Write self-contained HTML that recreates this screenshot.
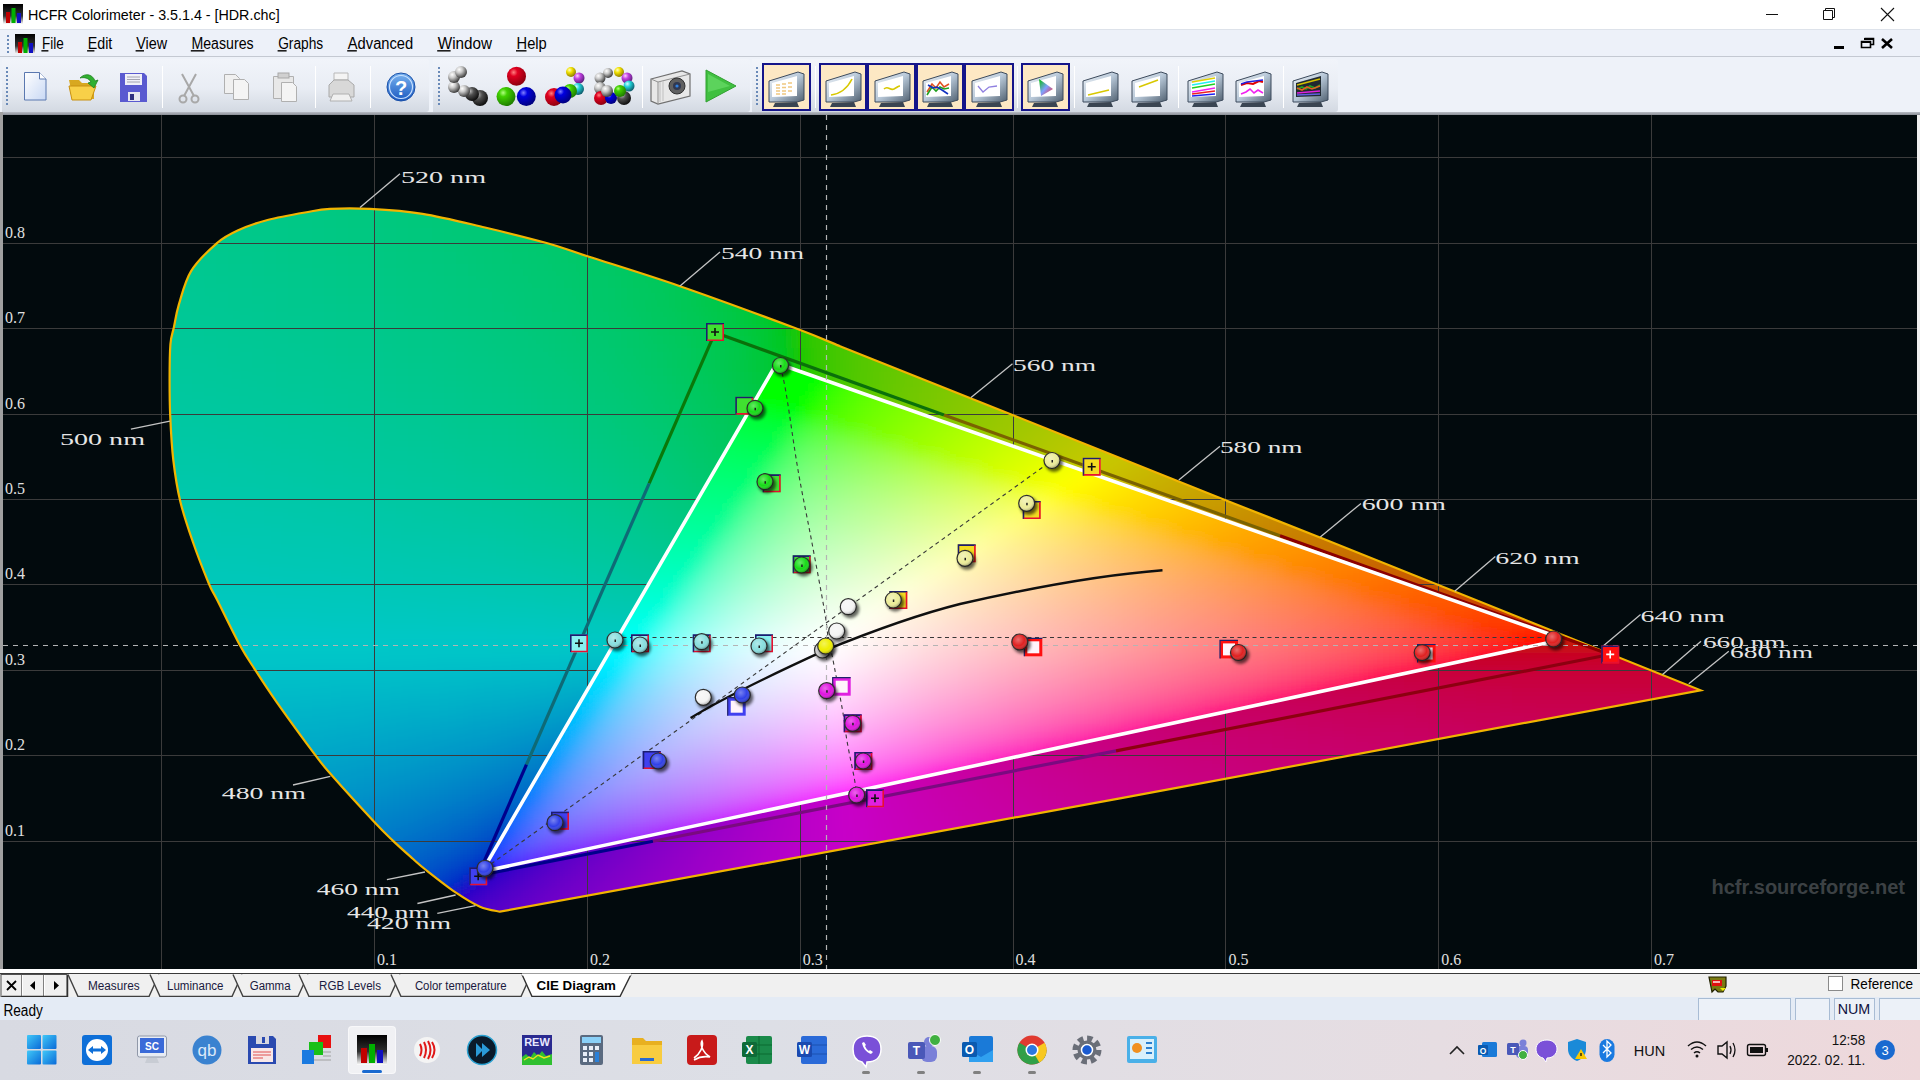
<!DOCTYPE html><html><head><meta charset="utf-8"><style>
*{box-sizing:border-box}
body{margin:0;width:1920px;height:1080px;overflow:hidden;position:relative;background:#f0f0f0;font-family:"Liberation Sans",sans-serif}
.abs{position:absolute}
</style></head><body><div class="abs" style="left:0;top:0;width:1920px;height:29px;background:#fff"></div><svg class="abs" style="left:3px;top:4px" width="20" height="20" viewBox="0 0 20 20"><defs><linearGradient id="hi3" x1="0" y1="0" x2="0" y2="1"><stop offset="0" stop-color="#000"/><stop offset="0.6" stop-color="#333"/><stop offset="1" stop-color="#fff"/></linearGradient></defs><rect width="20" height="20" fill="url(#hi3)"/><rect x="3" y="8" width="4" height="11" fill="#c00000"/><rect x="8.5" y="4" width="4" height="15" fill="#00b000"/><rect x="14" y="9" width="4" height="10" fill="#1010c0"/></svg><svg class="abs" style="left:0;top:0" width="400" height="28"><text x="28" y="19.7" font-family="Liberation Sans" font-size="15.5" fill="#000" textLength="251.6" lengthAdjust="spacingAndGlyphs">HCFR Colorimeter - 3.5.1.4 - [HDR.chc]</text></svg><svg class="abs" style="left:1750px;top:0" width="170" height="29"><path d="M16 14.5H28" stroke="#111" stroke-width="1"/><path d="M73.5 10.5h9v9h-9z M75.5 10.5V8.5h9v9h-2" stroke="#111" stroke-width="1" fill="none"/><path d="M131 8L144 21M144 8L131 21" stroke="#111" stroke-width="1.1"/></svg><div class="abs" style="left:0;top:29px;width:1920px;height:28px;background:#edf1f9;border-top:1px solid #dde2ea;border-bottom:1px solid #c4c9d2"></div><div class="abs" style="left:7px;top:35px;width:2px;height:2px;background:#6a8ab8"></div><div class="abs" style="left:7px;top:39px;width:2px;height:2px;background:#6a8ab8"></div><div class="abs" style="left:7px;top:43px;width:2px;height:2px;background:#6a8ab8"></div><div class="abs" style="left:7px;top:47px;width:2px;height:2px;background:#6a8ab8"></div><div class="abs" style="left:7px;top:51px;width:2px;height:2px;background:#6a8ab8"></div><svg class="abs" style="left:15px;top:34px" width="20" height="20" viewBox="0 0 20 20"><defs><linearGradient id="hi15" x1="0" y1="0" x2="0" y2="1"><stop offset="0" stop-color="#000"/><stop offset="0.6" stop-color="#333"/><stop offset="1" stop-color="#fff"/></linearGradient></defs><rect width="20" height="20" fill="url(#hi15)"/><rect x="3" y="8" width="4" height="11" fill="#c00000"/><rect x="8.5" y="4" width="4" height="15" fill="#00b000"/><rect x="14" y="9" width="4" height="10" fill="#1010c0"/></svg><svg class="abs" style="left:0;top:29px" width="600" height="28" viewBox="0 29 600 28"><text x="42.0" y="48.6" font-family="Liberation Sans" font-size="15.6" fill="#000" textLength="21.8" lengthAdjust="spacingAndGlyphs">File</text><rect x="41.4" y="50" width="7.0" height="1.6" fill="#202020"/><text x="87.7" y="48.6" font-family="Liberation Sans" font-size="15.6" fill="#000" textLength="24.6" lengthAdjust="spacingAndGlyphs">Edit</text><rect x="87.1" y="50" width="7.3" height="1.6" fill="#202020"/><text x="136.2" y="48.6" font-family="Liberation Sans" font-size="15.6" fill="#000" textLength="30.9" lengthAdjust="spacingAndGlyphs">View</text><rect x="135.6" y="50" width="8.4" height="1.6" fill="#202020"/><text x="191.4" y="48.6" font-family="Liberation Sans" font-size="15.6" fill="#000" textLength="62.2" lengthAdjust="spacingAndGlyphs">Measures</text><rect x="190.8" y="50" width="13.6" height="1.6" fill="#202020"/><text x="278.2" y="48.6" font-family="Liberation Sans" font-size="15.6" fill="#000" textLength="45.0" lengthAdjust="spacingAndGlyphs">Graphs</text><rect x="277.6" y="50" width="9.0" height="1.6" fill="#202020"/><text x="347.8" y="48.6" font-family="Liberation Sans" font-size="15.6" fill="#000" textLength="65.4" lengthAdjust="spacingAndGlyphs">Advanced</text><rect x="347.2" y="50" width="9.6" height="1.6" fill="#202020"/><text x="437.8" y="48.6" font-family="Liberation Sans" font-size="15.6" fill="#000" textLength="54.2" lengthAdjust="spacingAndGlyphs">Window</text><rect x="437.2" y="50" width="13.4" height="1.6" fill="#202020"/><text x="516.6" y="48.6" font-family="Liberation Sans" font-size="15.6" fill="#000" textLength="30.2" lengthAdjust="spacingAndGlyphs">Help</text><rect x="516.0" y="50" width="10.5" height="1.6" fill="#202020"/></svg><svg class="abs" style="left:1820px;top:30px" width="100" height="26"><rect x="14" y="16" width="10" height="3" fill="#000"/><path d="M41.5 11.5h9v6h-9z M44.5 8.5h9v6h-3" stroke="#000" stroke-width="1.6" fill="none"/><rect x="41" y="11" width="10" height="2" fill="#000"/><rect x="44" y="8" width="10" height="2" fill="#000"/><path d="M62 9L72 18M72 9L62 18" stroke="#000" stroke-width="2.6"/></svg><div class="abs" style="left:0;top:57px;width:1920px;height:58px;background:#eef2f9"></div><div class="abs" style="left:2px;top:59px;width:427px;height:53px;background:linear-gradient(#f1f4fa,#e9edf4 55%,#d3d9e2);border-radius:0 3px 3px 0"></div><div class="abs" style="left:433px;top:59px;width:317px;height:53px;background:linear-gradient(#f1f4fa,#e9edf4 55%,#d3d9e2);border-radius:0 3px 3px 0"></div><div class="abs" style="left:752px;top:59px;width:586px;height:53px;background:linear-gradient(#f1f4fa,#e9edf4 55%,#d3d9e2);border-radius:0 3px 3px 0"></div><div class="abs" style="left:0;top:112px;width:1920px;height:3px;background:linear-gradient(#b8bcc4,#8a8e96)"></div><div class="abs" style="left:6px;top:67px;width:2px;height:2px;background:#6a8ab8"></div><div class="abs" style="left:6px;top:71px;width:2px;height:2px;background:#6a8ab8"></div><div class="abs" style="left:6px;top:75px;width:2px;height:2px;background:#6a8ab8"></div><div class="abs" style="left:6px;top:79px;width:2px;height:2px;background:#6a8ab8"></div><div class="abs" style="left:6px;top:83px;width:2px;height:2px;background:#6a8ab8"></div><div class="abs" style="left:6px;top:87px;width:2px;height:2px;background:#6a8ab8"></div><div class="abs" style="left:6px;top:91px;width:2px;height:2px;background:#6a8ab8"></div><div class="abs" style="left:6px;top:95px;width:2px;height:2px;background:#6a8ab8"></div><div class="abs" style="left:6px;top:99px;width:2px;height:2px;background:#6a8ab8"></div><div class="abs" style="left:6px;top:103px;width:2px;height:2px;background:#6a8ab8"></div><div class="abs" style="left:438px;top:67px;width:2px;height:2px;background:#6a8ab8"></div><div class="abs" style="left:438px;top:71px;width:2px;height:2px;background:#6a8ab8"></div><div class="abs" style="left:438px;top:75px;width:2px;height:2px;background:#6a8ab8"></div><div class="abs" style="left:438px;top:79px;width:2px;height:2px;background:#6a8ab8"></div><div class="abs" style="left:438px;top:83px;width:2px;height:2px;background:#6a8ab8"></div><div class="abs" style="left:438px;top:87px;width:2px;height:2px;background:#6a8ab8"></div><div class="abs" style="left:438px;top:91px;width:2px;height:2px;background:#6a8ab8"></div><div class="abs" style="left:438px;top:95px;width:2px;height:2px;background:#6a8ab8"></div><div class="abs" style="left:438px;top:99px;width:2px;height:2px;background:#6a8ab8"></div><div class="abs" style="left:438px;top:103px;width:2px;height:2px;background:#6a8ab8"></div><div class="abs" style="left:756px;top:67px;width:2px;height:2px;background:#6a8ab8"></div><div class="abs" style="left:756px;top:71px;width:2px;height:2px;background:#6a8ab8"></div><div class="abs" style="left:756px;top:75px;width:2px;height:2px;background:#6a8ab8"></div><div class="abs" style="left:756px;top:79px;width:2px;height:2px;background:#6a8ab8"></div><div class="abs" style="left:756px;top:83px;width:2px;height:2px;background:#6a8ab8"></div><div class="abs" style="left:756px;top:87px;width:2px;height:2px;background:#6a8ab8"></div><div class="abs" style="left:756px;top:91px;width:2px;height:2px;background:#6a8ab8"></div><div class="abs" style="left:756px;top:95px;width:2px;height:2px;background:#6a8ab8"></div><div class="abs" style="left:756px;top:99px;width:2px;height:2px;background:#6a8ab8"></div><div class="abs" style="left:756px;top:103px;width:2px;height:2px;background:#6a8ab8"></div><div class="abs" style="left:162.0px;top:66px;width:1px;height:42px;background:#c2c8d2;border-right:1px solid #fff"></div><div class="abs" style="left:315.0px;top:66px;width:1px;height:42px;background:#c2c8d2;border-right:1px solid #fff"></div><div class="abs" style="left:370.0px;top:66px;width:1px;height:42px;background:#c2c8d2;border-right:1px solid #fff"></div><div class="abs" style="left:642.0px;top:66px;width:1px;height:42px;background:#c2c8d2;border-right:1px solid #fff"></div><div class="abs" style="left:814.6px;top:66px;width:1px;height:42px;background:#c2c8d2;border-right:1px solid #fff"></div><div class="abs" style="left:1017.4px;top:66px;width:1px;height:42px;background:#c2c8d2;border-right:1px solid #fff"></div><div class="abs" style="left:1074.0px;top:66px;width:1px;height:42px;background:#c2c8d2;border-right:1px solid #fff"></div><div class="abs" style="left:1178.0px;top:66px;width:1px;height:42px;background:#c2c8d2;border-right:1px solid #fff"></div><div class="abs" style="left:1283.4px;top:66px;width:1px;height:42px;background:#c2c8d2;border-right:1px solid #fff"></div><svg class="abs" style="left:0;top:57px" width="760" height="55" viewBox="0 57 760 55"><defs><linearGradient id="gdoc" x1="0" y1="0" x2="1" y2="1"><stop offset="0" stop-color="#fff"/><stop offset="1" stop-color="#c8d8f4"/></linearGradient><radialGradient id="bR" cx=".35" cy=".3" r=".7"><stop offset="0" stop-color="#ff8080"/><stop offset=".3" stop-color="#e00020"/><stop offset="1" stop-color="#900010"/></radialGradient><radialGradient id="bG" cx=".35" cy=".3" r=".7"><stop offset="0" stop-color="#b0ff80"/><stop offset=".3" stop-color="#40d000"/><stop offset="1" stop-color="#208000"/></radialGradient><radialGradient id="bB" cx=".35" cy=".3" r=".7"><stop offset="0" stop-color="#8080ff"/><stop offset=".3" stop-color="#0000e0"/><stop offset="1" stop-color="#000080"/></radialGradient><radialGradient id="bW" cx=".35" cy=".3" r=".7"><stop offset="0" stop-color="#fff"/><stop offset=".4" stop-color="#c8c8c8"/><stop offset="1" stop-color="#404040"/></radialGradient><radialGradient id="bK" cx=".35" cy=".3" r=".7"><stop offset="0" stop-color="#c0c0c0"/><stop offset=".4" stop-color="#505050"/><stop offset="1" stop-color="#101010"/></radialGradient><radialGradient id="bY" cx=".35" cy=".3" r=".7"><stop offset="0" stop-color="#ffffc0"/><stop offset=".4" stop-color="#f0e000"/><stop offset="1" stop-color="#908000"/></radialGradient><radialGradient id="bP" cx=".35" cy=".3" r=".7"><stop offset="0" stop-color="#ffd0ff"/><stop offset=".4" stop-color="#c040e0"/><stop offset="1" stop-color="#602080"/></radialGradient><radialGradient id="bC" cx=".35" cy=".3" r=".7"><stop offset="0" stop-color="#d0ffff"/><stop offset=".4" stop-color="#20d0d8"/><stop offset="1" stop-color="#106070"/></radialGradient><linearGradient id="ghelp" x1="0" y1="0" x2="0" y2="1"><stop offset="0" stop-color="#7ab4f0"/><stop offset="1" stop-color="#1a58c0"/></linearGradient></defs><path d="M24.5 72.5h15l6.5 6.5v21h-21.5z" fill="url(#gdoc)" stroke="#5a78b0" stroke-width="1"/><path d="M39.5 72.5v6.5h6.5" fill="#fff" stroke="#5a78b0" stroke-width="1"/><path d="M69 80h10l3 3h12v16H73z" fill="#d8a820"/><path d="M69 86h27l-5 14H72z" fill="#f8d048" stroke="#c89010" stroke-width="1"/><path d="M80 78c6-6 13-3 15 3l3-1-4 8-6-5 3-1c-2-4-7-5-11-4z" fill="#30b030" stroke="#208020" stroke-width=".8"/><path d="M120 73h24l3 3v26h-27z" fill="#5a5ad0"/><rect x="125" y="74" width="17" height="11" fill="#f0f0f8"/><path d="M127 77h13M127 79.5h13M127 82h13" stroke="#9090a0" stroke-width=".8"/><rect x="128" y="92" width="12" height="9" fill="#e8e8f0"/><rect x="130" y="94" width="4" height="6" fill="#303080"/><g stroke="#a8a8a8" stroke-width="2" fill="none"><path d="M182 74l12 22M196 74l-12 22"/><circle cx="183" cy="99" r="3.5"/><circle cx="195" cy="99" r="3.5"/></g><path d="M224.5 74.5h11l4 4v15h-15z" fill="#f0f0f0" stroke="#b0b0b0"/><path d="M233.5 79.5h11l4 4v16h-15z" fill="#f4f4f4" stroke="#b0b0b0"/><path d="M273.5 76.5h20v22h-20z" fill="#e8e8e8" stroke="#b0b0b0"/><rect x="278" y="73" width="11" height="5" fill="#d0d0d0" stroke="#a8a8a8"/><path d="M281.5 82.5h11l4 4v15h-15z" fill="#f4f4f4" stroke="#b0b0b0"/><path d="M334 80h14v-7h-14z" fill="#f4f4f4" stroke="#b8b8b8"/><path d="M329 85l5-5h14l6 5v12h-25z" fill="#d8d8d8" stroke="#a8a8a8"/><path d="M333 94h16l3 7h-22z" fill="#f0f0f0" stroke="#b0b0b0"/><circle cx="401" cy="87" r="14" fill="url(#ghelp)" stroke="#1a50a8" stroke-width="1"/><circle cx="401" cy="87" r="11.5" fill="none" stroke="#c8e0ff" stroke-width="1.2"/><text x="401" y="95" text-anchor="middle" font-family="Liberation Sans" font-weight="bold" font-size="20" fill="#fff">?</text><circle cx="480" cy="98" r="8" fill="url(#bK)"/><circle cx="472" cy="94" r="7" fill="url(#bK)"/><circle cx="464" cy="91" r="6" fill="url(#bW)"/><circle cx="454" cy="87" r="6" fill="url(#bW)"/><circle cx="454" cy="77" r="6" fill="url(#bW)"/><circle cx="461" cy="72" r="6" fill="url(#bW)"/><circle cx="516.5" cy="76.2" r="9.5" fill="url(#bR)"/><circle cx="506" cy="96.6" r="9.5" fill="url(#bG)"/><circle cx="526.3" cy="96.6" r="9.5" fill="url(#bB)"/><circle cx="571" cy="72" r="5" fill="url(#bY)"/><circle cx="579" cy="78" r="5.5" fill="url(#bP)"/><circle cx="578" cy="89" r="6" fill="url(#bC)"/><circle cx="570" cy="91" r="7" fill="url(#bG)"/><circle cx="554" cy="97" r="9" fill="url(#bR)"/><circle cx="563" cy="95" r="8.5" fill="url(#bB)"/><circle cx="608" cy="73" r="5" fill="url(#bW)"/><circle cx="619" cy="72" r="5" fill="url(#bY)"/><circle cx="627" cy="78" r="5.5" fill="url(#bP)"/><circle cx="629" cy="86" r="5.5" fill="url(#bC)"/><circle cx="600" cy="78" r="5.5" fill="url(#bW)"/><circle cx="600" cy="88" r="6" fill="url(#bW)"/><circle cx="624" cy="98" r="7" fill="url(#bK)"/><circle cx="601" cy="98" r="7" fill="url(#bR)"/><circle cx="611" cy="98" r="6" fill="url(#bB)"/><circle cx="620" cy="91" r="6" fill="url(#bG)"/><circle cx="607" cy="91" r="6" fill="url(#bW)"/><path d="M651 79l31-8 8 3v22l-32 8-7-3z" fill="#e8e8e8" stroke="#707070" stroke-width="1.2"/><path d="M651 79l7 3 32-8" fill="none" stroke="#909090"/><path d="M658 82v22" stroke="#909090"/><circle cx="677" cy="86" r="8" fill="#606060" stroke="#303030"/><circle cx="677" cy="86" r="4" fill="#303850"/><circle cx="677" cy="86" r="1.6" fill="#3080e0"/><path d="M660 82l0 20M663 81v20" stroke="#c0c0c0"/><path d="M706 70L736 86L706 102Z" fill="#40c040" stroke="#30a030" stroke-width="1"/><path d="M708 74L730 86L708 92Z" fill="#70e070" opacity=".6"/></svg><svg width="0" height="0" style="position:absolute"><defs><linearGradient id="mframe" x1="0" y1="0" x2="1" y2="1"><stop offset="0" stop-color="#f0f4f8"/><stop offset=".5" stop-color="#b8c8d8"/><stop offset="1" stop-color="#506070"/></linearGradient></defs></svg><div class="abs" style="left:762.4px;top:63px;width:48.7px;height:48px;background:#fde8c4;border:2px solid #14148a"></div><div class="abs" style="left:819.0px;top:63px;width:47.9px;height:48px;background:#fde8c4;border:2px solid #14148a"></div><div class="abs" style="left:866.9px;top:63px;width:48.7px;height:48px;background:#fde8c4;border:2px solid #14148a"></div><div class="abs" style="left:915.6px;top:63px;width:48.7px;height:48px;background:#fde8c4;border:2px solid #14148a"></div><div class="abs" style="left:964.3px;top:63px;width:49.6px;height:48px;background:#fde8c4;border:2px solid #14148a"></div><div class="abs" style="left:1021.0px;top:63px;width:48.6px;height:48px;background:#fde8c4;border:2px solid #14148a"></div><svg width="0" height="0" style="position:absolute"><defs><linearGradient id="ciei" x1="0" y1="0" x2="1" y2="1"><stop offset="0" stop-color="#00c000"/><stop offset=".5" stop-color="#80a0ff"/><stop offset="1" stop-color="#ff2020"/></linearGradient></defs></svg><svg class="abs" style="left:766.0px;top:67.0px" width="42" height="42" viewBox="0 0 42 42"><path d="M3 14 L32 5 L38 7 L38 33 L31 35 L3 35 Z" fill="url(#mframe)" stroke="#3c4a5c" stroke-width="1"/><path d="M6 16 L31 9 L31 29 L6 30 Z" fill="#ffffff"/><g stroke="#f0c880" stroke-width="1.6"><path d="M10 18h4M16 17h4M22 16h4M10 21h4M16 20.5h4M22 20h4M10 24h4M16 24h4M22 24h4M10 27h4M16 27h4"/></g><path d="M9 36 L31 35 L33 40 L7 40 Z" fill="#3a4552"/></svg><svg class="abs" style="left:823.0px;top:67.0px" width="42" height="42" viewBox="0 0 42 42"><path d="M3 14 L32 5 L38 7 L38 33 L31 35 L3 35 Z" fill="url(#mframe)" stroke="#3c4a5c" stroke-width="1"/><path d="M6 16 L31 9 L31 29 L6 30 Z" fill="#ffffff"/><path d="M8 28 C16 27 24 22 29 12" stroke="#d8c800" stroke-width="1.6" fill="none"/><path d="M9 36 L31 35 L33 40 L7 40 Z" fill="#3a4552"/></svg><svg class="abs" style="left:872.0px;top:67.0px" width="42" height="42" viewBox="0 0 42 42"><path d="M3 14 L32 5 L38 7 L38 33 L31 35 L3 35 Z" fill="url(#mframe)" stroke="#3c4a5c" stroke-width="1"/><path d="M6 16 L31 9 L31 29 L6 30 Z" fill="#ffffff"/><path d="M12 22 C16 18 18 24 22 22 S26 19 28 19" stroke="#d8c800" stroke-width="1.6" fill="none"/><path d="M9 36 L31 35 L33 40 L7 40 Z" fill="#3a4552"/></svg><svg class="abs" style="left:920.0px;top:67.0px" width="42" height="42" viewBox="0 0 42 42"><path d="M3 14 L32 5 L38 7 L38 33 L31 35 L3 35 Z" fill="url(#mframe)" stroke="#3c4a5c" stroke-width="1"/><path d="M6 16 L31 9 L31 29 L6 30 Z" fill="#ffffff"/><path d="M7 25L12 17L16 21L20 15L24 20L29 17" stroke="#e05020" stroke-width="1.6" fill="none"/><path d="M7 28L12 20L16 24L20 20L24 22L29 21" stroke="#20a020" stroke-width="1.6" fill="none"/><path d="M8 18L13 21L17 20L22 23L28 27" stroke="#1030c0" stroke-width="1.6" fill="none"/><path d="M9 36 L31 35 L33 40 L7 40 Z" fill="#3a4552"/></svg><svg class="abs" style="left:969.0px;top:67.0px" width="42" height="42" viewBox="0 0 42 42"><path d="M3 14 L32 5 L38 7 L38 33 L31 35 L3 35 Z" fill="url(#mframe)" stroke="#3c4a5c" stroke-width="1"/><path d="M6 16 L31 9 L31 29 L6 30 Z" fill="#ffffff"/><path d="M9 19L14 25L20 20L28 19" stroke="#9080e0" stroke-width="1.3" fill="none"/><path d="M9 36 L31 35 L33 40 L7 40 Z" fill="#3a4552"/></svg><svg class="abs" style="left:1025.0px;top:67.0px" width="42" height="42" viewBox="0 0 42 42"><path d="M3 14 L32 5 L38 7 L38 33 L31 35 L3 35 Z" fill="url(#mframe)" stroke="#3c4a5c" stroke-width="1"/><path d="M6 16 L31 9 L31 29 L6 30 Z" fill="#ffffff"/><path d="M14 12L16 29L28 22Z" fill="url(#ciei)"/><path d="M9 36 L31 35 L33 40 L7 40 Z" fill="#3a4552"/></svg><svg class="abs" style="left:1080.0px;top:67.0px" width="42" height="42" viewBox="0 0 42 42"><path d="M3 14 L32 5 L38 7 L38 33 L31 35 L3 35 Z" fill="url(#mframe)" stroke="#3c4a5c" stroke-width="1"/><path d="M6 16 L31 9 L31 29 L6 30 Z" fill="#ffffff"/><path d="M8 28L29 23" stroke="#d8c800" stroke-width="1.6"/><path d="M9 36 L31 35 L33 40 L7 40 Z" fill="#3a4552"/></svg><svg class="abs" style="left:1129.0px;top:67.0px" width="42" height="42" viewBox="0 0 42 42"><path d="M3 14 L32 5 L38 7 L38 33 L31 35 L3 35 Z" fill="url(#mframe)" stroke="#3c4a5c" stroke-width="1"/><path d="M6 16 L31 9 L31 29 L6 30 Z" fill="#ffffff"/><path d="M10 20L29 13" stroke="#d8c800" stroke-width="1.6"/><path d="M9 36 L31 35 L33 40 L7 40 Z" fill="#3a4552"/></svg><svg class="abs" style="left:1185.0px;top:67.0px" width="42" height="42" viewBox="0 0 42 42"><path d="M3 14 L32 5 L38 7 L38 33 L31 35 L3 35 Z" fill="url(#mframe)" stroke="#3c4a5c" stroke-width="1"/><path d="M6 16 L31 9 L31 29 L6 30 Z" fill="#ffffff"/><g stroke-width="1.6"><path d="M7 15L30 11" stroke="#e0d000"/><path d="M7 18L30 14" stroke="#20f0f0"/><path d="M7 21L30 17" stroke="#20d020"/><path d="M7 25L30 21" stroke="#f020f0"/><path d="M7 27L30 24" stroke="#f02020"/><path d="M7 29L30 27" stroke="#2020f0"/></g><path d="M9 36 L31 35 L33 40 L7 40 Z" fill="#3a4552"/></svg><svg class="abs" style="left:1233.0px;top:67.0px" width="42" height="42" viewBox="0 0 42 42"><path d="M3 14 L32 5 L38 7 L38 33 L31 35 L3 35 Z" fill="url(#mframe)" stroke="#3c4a5c" stroke-width="1"/><path d="M6 16 L31 9 L31 29 L6 30 Z" fill="#ffffff"/><path d="M8 18L14 16L20 17L26 14L30 15" stroke="#e00000" stroke-width="2" fill="none"/><path d="M8 17L14 15L22 14L30 13" stroke="#2020e0" stroke-width="1.4" fill="none"/><path d="M8 27L13 25L17 22L21 26L25 23L30 26" stroke="#f020f0" stroke-width="1.6" fill="none"/><path d="M9 36 L31 35 L33 40 L7 40 Z" fill="#3a4552"/></svg><svg class="abs" style="left:1290.0px;top:67.0px" width="42" height="42" viewBox="0 0 42 42"><path d="M3 14 L32 5 L38 7 L38 33 L31 35 L3 35 Z" fill="url(#mframe)" stroke="#3c4a5c" stroke-width="1"/><path d="M6 16 L31 9 L31 29 L6 30 Z" fill="#202830"/><g stroke-width="1.6" fill="none"><path d="M7 18L30 12" stroke="#d0c000"/><path d="M7 22L12 20L16 22L20 19L25 21L30 18" stroke="#20a020"/><path d="M7 21L12 23L17 20L22 22L30 19" stroke="#e06020"/><path d="M7 26L30 24" stroke="#e020e0"/><path d="M7 28L30 27" stroke="#6060e0"/></g><path d="M9 36 L31 35 L33 40 L7 40 Z" fill="#3a4552"/></svg><svg id="chart" width="1920" height="1080" viewBox="0 0 1920 1080" style="position:absolute;left:0;top:0"><defs><clipPath id="cLocus"><path d="M500.0 911.7 C496.7 910.9 487.4 909.9 480.0 906.7 C472.6 903.5 464.6 898.5 455.6 892.4 C446.6 886.3 433.1 875.6 426.0 870.0 C418.9 864.4 418.6 863.9 413.1 859.0 C407.6 854.1 399.3 846.8 392.8 840.6 C386.3 834.4 384.3 832.7 374.3 822.0 C364.3 811.3 342.3 787.3 332.6 776.3 C322.9 765.3 325.2 768.2 315.9 755.9 C306.6 743.6 287.2 717.0 277.0 702.6 C266.8 688.2 260.9 678.8 254.8 669.3 C248.7 659.8 246.5 657.3 240.2 645.8 C233.9 634.2 222.5 610.5 217.2 600.0 C211.9 589.5 212.6 592.7 208.6 583.0 C204.6 573.3 197.6 555.6 192.9 542.0 C188.2 528.4 183.6 515.2 180.3 501.5 C177.0 487.8 175.0 474.3 173.3 460.0 C171.6 445.7 170.8 428.9 170.2 415.6 C169.6 402.3 169.6 391.9 169.6 380.0 C169.6 368.1 169.7 353.3 170.4 344.4 C171.1 335.5 172.6 333.4 174.0 326.7 C175.4 320.0 176.1 313.7 178.9 304.4 C181.8 295.1 184.8 281.3 191.1 271.1 C197.4 260.9 208.8 250.2 216.7 243.3 C224.6 236.5 230.3 233.9 238.8 230.0 C247.2 226.1 256.5 222.9 267.5 220.0 C278.5 217.1 294.6 214.3 305.0 212.5 C315.4 210.7 319.2 209.5 330.0 208.9 C340.8 208.3 354.6 208.1 370.0 208.9 C385.4 209.7 403.3 210.7 422.5 213.8 C441.7 216.8 464.2 222.6 485.0 227.5 C505.8 232.4 530.4 238.5 547.5 243.2 C564.6 248.0 565.4 249.1 587.5 256.2 C609.6 263.4 645.4 274.3 680.0 286.2 C714.6 298.2 768.3 318.0 795.0 328.0 C821.7 338.0 832.5 343.2 840.0 346.2 L1012.5 415 L1225 500 L1320 537.5 L1700.6 690.25 L1120 798.3 Z"/></clipPath><clipPath id="cTri"><path d="M776.7 363.3 L1556.0 636.3 L1556.0 640.9 L482.0 871.6 Z"/></clipPath><clipPath id="cChart"><rect x="3" y="115" width="1914" height="854"/></clipPath><filter id="fb" x="-5%" y="-5%" width="110%" height="110%"><feGaussianBlur stdDeviation="7"/></filter></defs><rect x="0" y="112" width="3" height="858" fill="#a0a0a0"/><rect x="3" y="115" width="1914" height="854" fill="#020a0d"/><g clip-path="url(#cLocus)"><g filter="url(#fb)" class="mo"><path d="M264 192h12v12h-12z" fill="#00c885"/><path d="M276 192h12v12h-12z" fill="#00c884"/><path d="M288 192h12v12h-12z" fill="#00c884"/><path d="M300 192h12v12h-12z" fill="#00c883"/><path d="M312 192h12v12h-12z" fill="#00c882"/><path d="M324 192h12v12h-12z" fill="#00c881"/><path d="M336 192h12v12h-12z" fill="#00c880"/><path d="M348 192h12v12h-12z" fill="#00c87f"/><path d="M360 192h12v12h-12z" fill="#00c87e"/><path d="M372 192h12v12h-12z" fill="#00c87d"/><path d="M384 192h12v12h-12z" fill="#00c87b"/><path d="M396 192h12v12h-12z" fill="#00c87a"/><path d="M408 192h12v12h-12z" fill="#00c879"/><path d="M420 192h12v12h-12z" fill="#00c878"/><path d="M432 192h12v12h-12z" fill="#00c877"/><path d="M444 192h12v12h-12z" fill="#00c875"/><path d="M228 204h12v12h-12z" fill="#00c889"/><path d="M240 204h12v12h-12z" fill="#00c888"/><path d="M252 204h12v12h-12z" fill="#00c887"/><path d="M264 204h12v12h-12z" fill="#00c886"/><path d="M276 204h12v12h-12z" fill="#00c886"/><path d="M288 204h12v12h-12z" fill="#00c885"/><path d="M300 204h12v12h-12z" fill="#00c884"/><path d="M312 204h12v12h-12z" fill="#00c883"/><path d="M324 204h12v12h-12z" fill="#00c882"/><path d="M336 204h12v12h-12z" fill="#00c881"/><path d="M348 204h12v12h-12z" fill="#00c880"/><path d="M360 204h12v12h-12z" fill="#00c87f"/><path d="M372 204h12v12h-12z" fill="#00c87e"/><path d="M384 204h12v12h-12z" fill="#00c87d"/><path d="M396 204h12v12h-12z" fill="#00c87b"/><path d="M408 204h12v12h-12z" fill="#00c87a"/><path d="M420 204h12v12h-12z" fill="#00c879"/><path d="M432 204h12v12h-12z" fill="#00c878"/><path d="M444 204h12v12h-12z" fill="#00c876"/><path d="M456 204h12v12h-12z" fill="#00c875"/><path d="M468 204h12v12h-12z" fill="#00c874"/><path d="M480 204h12v12h-12z" fill="#00c872"/><path d="M492 204h12v12h-12z" fill="#00c871"/><path d="M204 216h12v12h-12z" fill="#00c88b"/><path d="M216 216h12v12h-12z" fill="#00c88b"/><path d="M228 216h12v12h-12z" fill="#00c88a"/><path d="M240 216h12v12h-12z" fill="#00c889"/><path d="M252 216h12v12h-12z" fill="#00c888"/><path d="M264 216h12v12h-12z" fill="#00c888"/><path d="M276 216h12v12h-12z" fill="#00c887"/><path d="M288 216h12v12h-12z" fill="#00c886"/><path d="M300 216h12v12h-12z" fill="#00c885"/><path d="M312 216h12v12h-12z" fill="#00c884"/><path d="M324 216h12v12h-12z" fill="#00c883"/><path d="M336 216h12v12h-12z" fill="#00c882"/><path d="M348 216h12v12h-12z" fill="#00c881"/><path d="M360 216h12v12h-12z" fill="#00c880"/><path d="M372 216h12v12h-12z" fill="#00c87f"/><path d="M384 216h12v12h-12z" fill="#00c87e"/><path d="M396 216h12v12h-12z" fill="#00c87d"/><path d="M408 216h12v12h-12z" fill="#00c87b"/><path d="M420 216h12v12h-12z" fill="#00c87a"/><path d="M432 216h12v12h-12z" fill="#00c879"/><path d="M444 216h12v12h-12z" fill="#00c878"/><path d="M456 216h12v12h-12z" fill="#00c876"/><path d="M468 216h12v12h-12z" fill="#00c875"/><path d="M480 216h12v12h-12z" fill="#00c873"/><path d="M492 216h12v12h-12z" fill="#00c872"/><path d="M504 216h12v12h-12z" fill="#00c870"/><path d="M516 216h12v12h-12z" fill="#00c86e"/><path d="M528 216h12v12h-12z" fill="#00c86d"/><path d="M540 216h12v12h-12z" fill="#00c86b"/><path d="M192 228h12v12h-12z" fill="#00c88d"/><path d="M204 228h12v12h-12z" fill="#00c88d"/><path d="M216 228h12v12h-12z" fill="#00c88c"/><path d="M228 228h12v12h-12z" fill="#00c88b"/><path d="M240 228h12v12h-12z" fill="#00c88a"/><path d="M252 228h12v12h-12z" fill="#00c889"/><path d="M264 228h12v12h-12z" fill="#00c889"/><path d="M276 228h12v12h-12z" fill="#00c888"/><path d="M288 228h12v12h-12z" fill="#00c887"/><path d="M300 228h12v12h-12z" fill="#00c886"/><path d="M312 228h12v12h-12z" fill="#00c885"/><path d="M324 228h12v12h-12z" fill="#00c884"/><path d="M336 228h12v12h-12z" fill="#00c883"/><path d="M348 228h12v12h-12z" fill="#00c882"/><path d="M360 228h12v12h-12z" fill="#00c881"/><path d="M372 228h12v12h-12z" fill="#00c880"/><path d="M384 228h12v12h-12z" fill="#00c87f"/><path d="M396 228h12v12h-12z" fill="#00c87e"/><path d="M408 228h12v12h-12z" fill="#00c87d"/><path d="M420 228h12v12h-12z" fill="#00c87b"/><path d="M432 228h12v12h-12z" fill="#00c87a"/><path d="M444 228h12v12h-12z" fill="#00c879"/><path d="M456 228h12v12h-12z" fill="#00c877"/><path d="M468 228h12v12h-12z" fill="#00c876"/><path d="M480 228h12v12h-12z" fill="#00c875"/><path d="M492 228h12v12h-12z" fill="#00c873"/><path d="M504 228h12v12h-12z" fill="#00c871"/><path d="M516 228h12v12h-12z" fill="#00c870"/><path d="M528 228h12v12h-12z" fill="#00c86e"/><path d="M540 228h12v12h-12z" fill="#00c86c"/><path d="M552 228h12v12h-12z" fill="#00c86a"/><path d="M564 228h12v12h-12z" fill="#00c868"/><path d="M576 228h12v12h-12z" fill="#00c866"/><path d="M180 240h12v12h-12z" fill="#00c88f"/><path d="M192 240h12v12h-12z" fill="#00c88e"/><path d="M204 240h12v12h-12z" fill="#00c88e"/><path d="M216 240h12v12h-12z" fill="#00c88d"/><path d="M228 240h12v12h-12z" fill="#00c88c"/><path d="M240 240h12v12h-12z" fill="#00c88b"/><path d="M252 240h12v12h-12z" fill="#00c88b"/><path d="M264 240h12v12h-12z" fill="#00c88a"/><path d="M276 240h12v12h-12z" fill="#00c889"/><path d="M288 240h12v12h-12z" fill="#00c888"/><path d="M300 240h12v12h-12z" fill="#00c887"/><path d="M312 240h12v12h-12z" fill="#00c886"/><path d="M324 240h12v12h-12z" fill="#00c885"/><path d="M336 240h12v12h-12z" fill="#00c884"/><path d="M348 240h12v12h-12z" fill="#00c883"/><path d="M360 240h12v12h-12z" fill="#00c882"/><path d="M372 240h12v12h-12z" fill="#00c881"/><path d="M384 240h12v12h-12z" fill="#00c880"/><path d="M396 240h12v12h-12z" fill="#00c87f"/><path d="M408 240h12v12h-12z" fill="#00c87e"/><path d="M420 240h12v12h-12z" fill="#00c87d"/><path d="M432 240h12v12h-12z" fill="#00c87b"/><path d="M444 240h12v12h-12z" fill="#00c87a"/><path d="M456 240h12v12h-12z" fill="#00c879"/><path d="M468 240h12v12h-12z" fill="#00c877"/><path d="M480 240h12v12h-12z" fill="#00c876"/><path d="M492 240h12v12h-12z" fill="#00c874"/><path d="M504 240h12v12h-12z" fill="#00c873"/><path d="M516 240h12v12h-12z" fill="#00c871"/><path d="M528 240h12v12h-12z" fill="#00c86f"/><path d="M540 240h12v12h-12z" fill="#00c86d"/><path d="M552 240h12v12h-12z" fill="#00c86c"/><path d="M564 240h12v12h-12z" fill="#00c86a"/><path d="M576 240h12v12h-12z" fill="#00c867"/><path d="M588 240h12v12h-12z" fill="#00c865"/><path d="M600 240h12v12h-12z" fill="#00c863"/><path d="M612 240h12v12h-12z" fill="#00c860"/><path d="M168 252h12v12h-12z" fill="#00c891"/><path d="M180 252h12v12h-12z" fill="#00c890"/><path d="M192 252h12v12h-12z" fill="#00c88f"/><path d="M204 252h12v12h-12z" fill="#00c88f"/><path d="M216 252h12v12h-12z" fill="#00c88e"/><path d="M228 252h12v12h-12z" fill="#00c88d"/><path d="M240 252h12v12h-12z" fill="#00c88d"/><path d="M252 252h12v12h-12z" fill="#00c88c"/><path d="M264 252h12v12h-12z" fill="#00c88b"/><path d="M276 252h12v12h-12z" fill="#00c88a"/><path d="M288 252h12v12h-12z" fill="#00c889"/><path d="M300 252h12v12h-12z" fill="#00c888"/><path d="M312 252h12v12h-12z" fill="#00c887"/><path d="M324 252h12v12h-12z" fill="#00c887"/><path d="M336 252h12v12h-12z" fill="#00c886"/><path d="M348 252h12v12h-12z" fill="#00c885"/><path d="M360 252h12v12h-12z" fill="#00c884"/><path d="M372 252h12v12h-12z" fill="#00c882"/><path d="M384 252h12v12h-12z" fill="#00c881"/><path d="M396 252h12v12h-12z" fill="#00c880"/><path d="M408 252h12v12h-12z" fill="#00c87f"/><path d="M420 252h12v12h-12z" fill="#00c87e"/><path d="M432 252h12v12h-12z" fill="#00c87d"/><path d="M444 252h12v12h-12z" fill="#00c87b"/><path d="M456 252h12v12h-12z" fill="#00c87a"/><path d="M468 252h12v12h-12z" fill="#00c879"/><path d="M480 252h12v12h-12z" fill="#00c877"/><path d="M492 252h12v12h-12z" fill="#00c876"/><path d="M504 252h12v12h-12z" fill="#00c874"/><path d="M516 252h12v12h-12z" fill="#00c872"/><path d="M528 252h12v12h-12z" fill="#00c871"/><path d="M540 252h12v12h-12z" fill="#00c86f"/><path d="M552 252h12v12h-12z" fill="#00c86d"/><path d="M564 252h12v12h-12z" fill="#00c86b"/><path d="M576 252h12v12h-12z" fill="#00c869"/><path d="M588 252h12v12h-12z" fill="#00c867"/><path d="M600 252h12v12h-12z" fill="#00c864"/><path d="M612 252h12v12h-12z" fill="#00c862"/><path d="M624 252h12v12h-12z" fill="#00c85f"/><path d="M636 252h12v12h-12z" fill="#00c85c"/><path d="M648 252h12v12h-12z" fill="#00c859"/><path d="M168 264h12v12h-12z" fill="#00c892"/><path d="M180 264h12v12h-12z" fill="#00c891"/><path d="M192 264h12v12h-12z" fill="#00c891"/><path d="M204 264h12v12h-12z" fill="#00c890"/><path d="M216 264h12v12h-12z" fill="#00c88f"/><path d="M228 264h12v12h-12z" fill="#00c88e"/><path d="M240 264h12v12h-12z" fill="#00c88e"/><path d="M252 264h12v12h-12z" fill="#00c88d"/><path d="M264 264h12v12h-12z" fill="#00c88c"/><path d="M276 264h12v12h-12z" fill="#00c88b"/><path d="M288 264h12v12h-12z" fill="#00c88a"/><path d="M300 264h12v12h-12z" fill="#00c88a"/><path d="M312 264h12v12h-12z" fill="#00c889"/><path d="M324 264h12v12h-12z" fill="#00c888"/><path d="M336 264h12v12h-12z" fill="#00c887"/><path d="M348 264h12v12h-12z" fill="#00c886"/><path d="M360 264h12v12h-12z" fill="#00c885"/><path d="M372 264h12v12h-12z" fill="#00c884"/><path d="M384 264h12v12h-12z" fill="#00c883"/><path d="M396 264h12v12h-12z" fill="#00c882"/><path d="M408 264h12v12h-12z" fill="#00c880"/><path d="M420 264h12v12h-12z" fill="#00c87f"/><path d="M432 264h12v12h-12z" fill="#00c87e"/><path d="M444 264h12v12h-12z" fill="#00c87d"/><path d="M456 264h12v12h-12z" fill="#00c87b"/><path d="M468 264h12v12h-12z" fill="#00c87a"/><path d="M480 264h12v12h-12z" fill="#00c878"/><path d="M492 264h12v12h-12z" fill="#00c877"/><path d="M504 264h12v12h-12z" fill="#00c875"/><path d="M516 264h12v12h-12z" fill="#00c874"/><path d="M528 264h12v12h-12z" fill="#00c872"/><path d="M540 264h12v12h-12z" fill="#00c870"/><path d="M552 264h12v12h-12z" fill="#00c86e"/><path d="M564 264h12v12h-12z" fill="#00c86c"/><path d="M576 264h12v12h-12z" fill="#00c86a"/><path d="M588 264h12v12h-12z" fill="#00c868"/><path d="M600 264h12v12h-12z" fill="#00c866"/><path d="M612 264h12v12h-12z" fill="#00c863"/><path d="M624 264h12v12h-12z" fill="#00c860"/><path d="M636 264h12v12h-12z" fill="#00c85e"/><path d="M648 264h12v12h-12z" fill="#00c85b"/><path d="M660 264h12v12h-12z" fill="#00c857"/><path d="M672 264h12v12h-12z" fill="#00c854"/><path d="M684 264h12v12h-12z" fill="#00c850"/><path d="M168 276h12v12h-12z" fill="#00c893"/><path d="M180 276h12v12h-12z" fill="#00c892"/><path d="M192 276h12v12h-12z" fill="#00c892"/><path d="M204 276h12v12h-12z" fill="#00c891"/><path d="M216 276h12v12h-12z" fill="#00c890"/><path d="M228 276h12v12h-12z" fill="#00c890"/><path d="M240 276h12v12h-12z" fill="#00c88f"/><path d="M252 276h12v12h-12z" fill="#00c88e"/><path d="M264 276h12v12h-12z" fill="#00c88d"/><path d="M276 276h12v12h-12z" fill="#00c88d"/><path d="M288 276h12v12h-12z" fill="#00c88c"/><path d="M300 276h12v12h-12z" fill="#00c88b"/><path d="M312 276h12v12h-12z" fill="#00c88a"/><path d="M324 276h12v12h-12z" fill="#00c889"/><path d="M336 276h12v12h-12z" fill="#00c888"/><path d="M348 276h12v12h-12z" fill="#00c887"/><path d="M360 276h12v12h-12z" fill="#00c886"/><path d="M372 276h12v12h-12z" fill="#00c885"/><path d="M384 276h12v12h-12z" fill="#00c884"/><path d="M396 276h12v12h-12z" fill="#00c883"/><path d="M408 276h12v12h-12z" fill="#00c882"/><path d="M420 276h12v12h-12z" fill="#00c881"/><path d="M432 276h12v12h-12z" fill="#00c87f"/><path d="M444 276h12v12h-12z" fill="#00c87e"/><path d="M456 276h12v12h-12z" fill="#00c87d"/><path d="M468 276h12v12h-12z" fill="#00c87b"/><path d="M480 276h12v12h-12z" fill="#00c87a"/><path d="M492 276h12v12h-12z" fill="#00c878"/><path d="M504 276h12v12h-12z" fill="#00c877"/><path d="M516 276h12v12h-12z" fill="#00c875"/><path d="M528 276h12v12h-12z" fill="#00c873"/><path d="M540 276h12v12h-12z" fill="#00c872"/><path d="M552 276h12v12h-12z" fill="#00c870"/><path d="M564 276h12v12h-12z" fill="#00c86e"/><path d="M576 276h12v12h-12z" fill="#00c86c"/><path d="M588 276h12v12h-12z" fill="#00c869"/><path d="M600 276h12v12h-12z" fill="#00c867"/><path d="M612 276h12v12h-12z" fill="#00c865"/><path d="M624 276h12v12h-12z" fill="#00c862"/><path d="M636 276h12v12h-12z" fill="#00c85f"/><path d="M648 276h12v12h-12z" fill="#00c85c"/><path d="M660 276h12v12h-12z" fill="#00c859"/><path d="M672 276h12v12h-12z" fill="#00c855"/><path d="M684 276h12v12h-12z" fill="#00c851"/><path d="M696 276h12v12h-12z" fill="#00c84d"/><path d="M708 276h12v12h-12z" fill="#00c848"/><path d="M720 276h12v12h-12z" fill="#00c843"/><path d="M156 288h12v12h-12z" fill="#00c895"/><path d="M168 288h12v12h-12z" fill="#00c894"/><path d="M180 288h12v12h-12z" fill="#00c894"/><path d="M192 288h12v12h-12z" fill="#00c893"/><path d="M204 288h12v12h-12z" fill="#00c892"/><path d="M216 288h12v12h-12z" fill="#00c892"/><path d="M228 288h12v12h-12z" fill="#00c891"/><path d="M240 288h12v12h-12z" fill="#00c890"/><path d="M252 288h12v12h-12z" fill="#00c88f"/><path d="M264 288h12v12h-12z" fill="#00c88f"/><path d="M276 288h12v12h-12z" fill="#00c88e"/><path d="M288 288h12v12h-12z" fill="#00c88d"/><path d="M300 288h12v12h-12z" fill="#00c88c"/><path d="M312 288h12v12h-12z" fill="#00c88b"/><path d="M324 288h12v12h-12z" fill="#00c88a"/><path d="M336 288h12v12h-12z" fill="#00c889"/><path d="M348 288h12v12h-12z" fill="#00c888"/><path d="M360 288h12v12h-12z" fill="#00c887"/><path d="M372 288h12v12h-12z" fill="#00c886"/><path d="M384 288h12v12h-12z" fill="#00c885"/><path d="M396 288h12v12h-12z" fill="#00c884"/><path d="M408 288h12v12h-12z" fill="#00c883"/><path d="M420 288h12v12h-12z" fill="#00c882"/><path d="M432 288h12v12h-12z" fill="#00c881"/><path d="M444 288h12v12h-12z" fill="#00c87f"/><path d="M456 288h12v12h-12z" fill="#00c87e"/><path d="M468 288h12v12h-12z" fill="#00c87d"/><path d="M480 288h12v12h-12z" fill="#00c87b"/><path d="M492 288h12v12h-12z" fill="#00c87a"/><path d="M504 288h12v12h-12z" fill="#00c878"/><path d="M516 288h12v12h-12z" fill="#00c877"/><path d="M528 288h12v12h-12z" fill="#00c875"/><path d="M540 288h12v12h-12z" fill="#00c873"/><path d="M552 288h12v12h-12z" fill="#00c871"/><path d="M564 288h12v12h-12z" fill="#00c86f"/><path d="M576 288h12v12h-12z" fill="#00c86d"/><path d="M588 288h12v12h-12z" fill="#00c86b"/><path d="M600 288h12v12h-12z" fill="#00c869"/><path d="M612 288h12v12h-12z" fill="#00c866"/><path d="M624 288h12v12h-12z" fill="#00c863"/><path d="M636 288h12v12h-12z" fill="#00c861"/><path d="M648 288h12v12h-12z" fill="#00c85e"/><path d="M660 288h12v12h-12z" fill="#00c85a"/><path d="M672 288h12v12h-12z" fill="#00c857"/><path d="M684 288h12v12h-12z" fill="#00c853"/><path d="M696 288h12v12h-12z" fill="#00c84f"/><path d="M708 288h12v12h-12z" fill="#00c84a"/><path d="M720 288h12v12h-12z" fill="#00c845"/><path d="M732 288h12v12h-12z" fill="#00c83f"/><path d="M744 288h12v12h-12z" fill="#00c837"/><path d="M756 288h12v12h-12z" fill="#00c82f"/><path d="M156 300h12v12h-12z" fill="#00c896"/><path d="M168 300h12v12h-12z" fill="#00c895"/><path d="M180 300h12v12h-12z" fill="#00c895"/><path d="M192 300h12v12h-12z" fill="#00c894"/><path d="M204 300h12v12h-12z" fill="#00c893"/><path d="M216 300h12v12h-12z" fill="#00c893"/><path d="M228 300h12v12h-12z" fill="#00c892"/><path d="M240 300h12v12h-12z" fill="#00c891"/><path d="M252 300h12v12h-12z" fill="#00c891"/><path d="M264 300h12v12h-12z" fill="#00c890"/><path d="M276 300h12v12h-12z" fill="#00c88f"/><path d="M288 300h12v12h-12z" fill="#00c88e"/><path d="M300 300h12v12h-12z" fill="#00c88d"/><path d="M312 300h12v12h-12z" fill="#00c88d"/><path d="M324 300h12v12h-12z" fill="#00c88c"/><path d="M336 300h12v12h-12z" fill="#00c88b"/><path d="M348 300h12v12h-12z" fill="#00c88a"/><path d="M360 300h12v12h-12z" fill="#00c889"/><path d="M372 300h12v12h-12z" fill="#00c888"/><path d="M384 300h12v12h-12z" fill="#00c887"/><path d="M396 300h12v12h-12z" fill="#00c886"/><path d="M408 300h12v12h-12z" fill="#00c884"/><path d="M420 300h12v12h-12z" fill="#00c883"/><path d="M432 300h12v12h-12z" fill="#00c882"/><path d="M444 300h12v12h-12z" fill="#00c881"/><path d="M456 300h12v12h-12z" fill="#00c87f"/><path d="M468 300h12v12h-12z" fill="#00c87e"/><path d="M480 300h12v12h-12z" fill="#00c87d"/><path d="M492 300h12v12h-12z" fill="#00c87b"/><path d="M504 300h12v12h-12z" fill="#00c87a"/><path d="M516 300h12v12h-12z" fill="#00c878"/><path d="M528 300h12v12h-12z" fill="#00c876"/><path d="M540 300h12v12h-12z" fill="#00c875"/><path d="M552 300h12v12h-12z" fill="#00c873"/><path d="M564 300h12v12h-12z" fill="#00c871"/><path d="M576 300h12v12h-12z" fill="#00c86f"/><path d="M588 300h12v12h-12z" fill="#00c86c"/><path d="M600 300h12v12h-12z" fill="#00c86a"/><path d="M612 300h12v12h-12z" fill="#00c868"/><path d="M624 300h12v12h-12z" fill="#00c865"/><path d="M636 300h12v12h-12z" fill="#00c862"/><path d="M648 300h12v12h-12z" fill="#00c85f"/><path d="M660 300h12v12h-12z" fill="#00c85c"/><path d="M672 300h12v12h-12z" fill="#00c858"/><path d="M684 300h12v12h-12z" fill="#00c855"/><path d="M696 300h12v12h-12z" fill="#00c850"/><path d="M708 300h12v12h-12z" fill="#00c84c"/><path d="M720 300h12v12h-12z" fill="#00c846"/><path d="M732 300h12v12h-12z" fill="#00c840"/><path d="M744 300h12v12h-12z" fill="#00c839"/><path d="M756 300h12v12h-12z" fill="#00c831"/><path d="M768 300h12v12h-12z" fill="#00c825"/><path d="M780 300h12v12h-12z" fill="#00c80e"/><path d="M792 300h12v12h-12z" fill="#21c800"/><path d="M156 312h12v12h-12z" fill="#00c897"/><path d="M168 312h12v12h-12z" fill="#00c897"/><path d="M180 312h12v12h-12z" fill="#00c896"/><path d="M192 312h12v12h-12z" fill="#00c895"/><path d="M204 312h12v12h-12z" fill="#00c895"/><path d="M216 312h12v12h-12z" fill="#00c894"/><path d="M228 312h12v12h-12z" fill="#00c893"/><path d="M240 312h12v12h-12z" fill="#00c893"/><path d="M252 312h12v12h-12z" fill="#00c892"/><path d="M264 312h12v12h-12z" fill="#00c891"/><path d="M276 312h12v12h-12z" fill="#00c890"/><path d="M288 312h12v12h-12z" fill="#00c890"/><path d="M300 312h12v12h-12z" fill="#00c88f"/><path d="M312 312h12v12h-12z" fill="#00c88e"/><path d="M324 312h12v12h-12z" fill="#00c88d"/><path d="M336 312h12v12h-12z" fill="#00c88c"/><path d="M348 312h12v12h-12z" fill="#00c88b"/><path d="M360 312h12v12h-12z" fill="#00c88a"/><path d="M372 312h12v12h-12z" fill="#00c889"/><path d="M384 312h12v12h-12z" fill="#00c888"/><path d="M396 312h12v12h-12z" fill="#00c887"/><path d="M408 312h12v12h-12z" fill="#00c886"/><path d="M420 312h12v12h-12z" fill="#00c885"/><path d="M432 312h12v12h-12z" fill="#00c883"/><path d="M444 312h12v12h-12z" fill="#00c882"/><path d="M456 312h12v12h-12z" fill="#00c881"/><path d="M468 312h12v12h-12z" fill="#00c880"/><path d="M480 312h12v12h-12z" fill="#00c87e"/><path d="M492 312h12v12h-12z" fill="#00c87d"/><path d="M504 312h12v12h-12z" fill="#00c87b"/><path d="M516 312h12v12h-12z" fill="#00c87a"/><path d="M528 312h12v12h-12z" fill="#00c878"/><path d="M540 312h12v12h-12z" fill="#00c876"/><path d="M552 312h12v12h-12z" fill="#00c874"/><path d="M564 312h12v12h-12z" fill="#00c872"/><path d="M576 312h12v12h-12z" fill="#00c870"/><path d="M588 312h12v12h-12z" fill="#00c86e"/><path d="M600 312h12v12h-12z" fill="#00c86c"/><path d="M612 312h12v12h-12z" fill="#00c869"/><path d="M624 312h12v12h-12z" fill="#00c867"/><path d="M636 312h12v12h-12z" fill="#00c864"/><path d="M648 312h12v12h-12z" fill="#00c861"/><path d="M660 312h12v12h-12z" fill="#00c85e"/><path d="M672 312h12v12h-12z" fill="#00c85a"/><path d="M684 312h12v12h-12z" fill="#00c856"/><path d="M696 312h12v12h-12z" fill="#00c852"/><path d="M708 312h12v12h-12z" fill="#00c84d"/><path d="M720 312h12v12h-12z" fill="#00c848"/><path d="M732 312h12v12h-12z" fill="#00c842"/><path d="M744 312h12v12h-12z" fill="#00c83b"/><path d="M756 312h12v12h-12z" fill="#00c832"/><path d="M768 312h12v12h-12z" fill="#00c827"/><path d="M780 312h12v12h-12z" fill="#00c813"/><path d="M792 312h12v12h-12z" fill="#1fc800"/><path d="M804 312h12v12h-12z" fill="#2ec800"/><path d="M816 312h12v12h-12z" fill="#39c800"/><path d="M156 324h12v12h-12z" fill="#00c899"/><path d="M168 324h12v12h-12z" fill="#00c898"/><path d="M180 324h12v12h-12z" fill="#00c897"/><path d="M192 324h12v12h-12z" fill="#00c897"/><path d="M204 324h12v12h-12z" fill="#00c896"/><path d="M216 324h12v12h-12z" fill="#00c895"/><path d="M228 324h12v12h-12z" fill="#00c895"/><path d="M240 324h12v12h-12z" fill="#00c894"/><path d="M252 324h12v12h-12z" fill="#00c893"/><path d="M264 324h12v12h-12z" fill="#00c892"/><path d="M276 324h12v12h-12z" fill="#00c892"/><path d="M288 324h12v12h-12z" fill="#00c891"/><path d="M300 324h12v12h-12z" fill="#00c890"/><path d="M312 324h12v12h-12z" fill="#00c88f"/><path d="M324 324h12v12h-12z" fill="#00c88e"/><path d="M336 324h12v12h-12z" fill="#00c88d"/><path d="M348 324h12v12h-12z" fill="#00c88d"/><path d="M360 324h12v12h-12z" fill="#00c88c"/><path d="M372 324h12v12h-12z" fill="#00c88b"/><path d="M384 324h12v12h-12z" fill="#00c88a"/><path d="M396 324h12v12h-12z" fill="#00c888"/><path d="M408 324h12v12h-12z" fill="#00c887"/><path d="M420 324h12v12h-12z" fill="#00c886"/><path d="M432 324h12v12h-12z" fill="#00c885"/><path d="M444 324h12v12h-12z" fill="#00c884"/><path d="M456 324h12v12h-12z" fill="#00c882"/><path d="M468 324h12v12h-12z" fill="#00c881"/><path d="M480 324h12v12h-12z" fill="#00c880"/><path d="M492 324h12v12h-12z" fill="#00c87e"/><path d="M504 324h12v12h-12z" fill="#00c87d"/><path d="M516 324h12v12h-12z" fill="#00c87b"/><path d="M528 324h12v12h-12z" fill="#00c879"/><path d="M540 324h12v12h-12z" fill="#00c878"/><path d="M552 324h12v12h-12z" fill="#00c876"/><path d="M564 324h12v12h-12z" fill="#00c874"/><path d="M576 324h12v12h-12z" fill="#00c872"/><path d="M588 324h12v12h-12z" fill="#00c870"/><path d="M600 324h12v12h-12z" fill="#00c86d"/><path d="M612 324h12v12h-12z" fill="#00c86b"/><path d="M624 324h12v12h-12z" fill="#00c868"/><path d="M636 324h12v12h-12z" fill="#00c865"/><path d="M648 324h12v12h-12z" fill="#00c862"/><path d="M660 324h12v12h-12z" fill="#00c85f"/><path d="M672 324h12v12h-12z" fill="#00c85c"/><path d="M684 324h12v12h-12z" fill="#00c858"/><path d="M696 324h12v12h-12z" fill="#00c854"/><path d="M708 324h12v12h-12z" fill="#00c84f"/><path d="M720 324h12v12h-12z" fill="#00c84a"/><path d="M732 324h12v12h-12z" fill="#00c844"/><path d="M744 324h12v12h-12z" fill="#00c83d"/><path d="M756 324h12v12h-12z" fill="#00c834"/><path d="M768 324h12v12h-12z" fill="#00c829"/><path d="M780 324h12v12h-12z" fill="#00c817"/><path d="M792 324h12v12h-12z" fill="#1ec800"/><path d="M804 324h12v12h-12z" fill="#2dc800"/><path d="M816 324h12v12h-12z" fill="#38c800"/><path d="M828 324h12v12h-12z" fill="#41c800"/><path d="M840 324h12v12h-12z" fill="#49c800"/><path d="M852 324h12v12h-12z" fill="#50c800"/><path d="M156 336h12v12h-12z" fill="#00c89a"/><path d="M168 336h12v12h-12z" fill="#00c899"/><path d="M180 336h12v12h-12z" fill="#00c899"/><path d="M192 336h12v12h-12z" fill="#00c898"/><path d="M204 336h12v12h-12z" fill="#00c897"/><path d="M216 336h12v12h-12z" fill="#00c897"/><path d="M228 336h12v12h-12z" fill="#00c896"/><path d="M240 336h12v12h-12z" fill="#00c895"/><path d="M252 336h12v12h-12z" fill="#00c895"/><path d="M264 336h12v12h-12z" fill="#00c894"/><path d="M276 336h12v12h-12z" fill="#00c893"/><path d="M288 336h12v12h-12z" fill="#00c892"/><path d="M300 336h12v12h-12z" fill="#00c891"/><path d="M312 336h12v12h-12z" fill="#00c891"/><path d="M324 336h12v12h-12z" fill="#00c890"/><path d="M336 336h12v12h-12z" fill="#00c88f"/><path d="M348 336h12v12h-12z" fill="#00c88e"/><path d="M360 336h12v12h-12z" fill="#00c88d"/><path d="M372 336h12v12h-12z" fill="#00c88c"/><path d="M384 336h12v12h-12z" fill="#00c88b"/><path d="M396 336h12v12h-12z" fill="#00c88a"/><path d="M408 336h12v12h-12z" fill="#00c889"/><path d="M420 336h12v12h-12z" fill="#00c888"/><path d="M432 336h12v12h-12z" fill="#00c887"/><path d="M444 336h12v12h-12z" fill="#00c885"/><path d="M456 336h12v12h-12z" fill="#00c884"/><path d="M468 336h12v12h-12z" fill="#00c883"/><path d="M480 336h12v12h-12z" fill="#00c881"/><path d="M492 336h12v12h-12z" fill="#00c880"/><path d="M504 336h12v12h-12z" fill="#00c87e"/><path d="M516 336h12v12h-12z" fill="#00c87d"/><path d="M528 336h12v12h-12z" fill="#00c87b"/><path d="M540 336h12v12h-12z" fill="#00c879"/><path d="M552 336h12v12h-12z" fill="#00c877"/><path d="M564 336h12v12h-12z" fill="#00c875"/><path d="M576 336h12v12h-12z" fill="#00c873"/><path d="M588 336h12v12h-12z" fill="#00c871"/><path d="M600 336h12v12h-12z" fill="#00c86f"/><path d="M612 336h12v12h-12z" fill="#00c86d"/><path d="M624 336h12v12h-12z" fill="#00c86a"/><path d="M636 336h12v12h-12z" fill="#00c867"/><path d="M648 336h12v12h-12z" fill="#00c864"/><path d="M660 336h12v12h-12z" fill="#00c861"/><path d="M672 336h12v12h-12z" fill="#00c85d"/><path d="M684 336h12v12h-12z" fill="#00c85a"/><path d="M696 336h12v12h-12z" fill="#00c855"/><path d="M708 336h12v12h-12z" fill="#00c851"/><path d="M720 336h12v12h-12z" fill="#00c84c"/><path d="M732 336h12v12h-12z" fill="#00c846"/><path d="M744 336h12v12h-12z" fill="#00c83f"/><path d="M756 336h12v12h-12z" fill="#00c836"/><path d="M768 336h12v12h-12z" fill="#00c82b"/><path d="M780 336h12v12h-12z" fill="#00c81a"/><path d="M792 336h12v12h-12z" fill="#1bc800"/><path d="M804 336h12v12h-12z" fill="#2dc800"/><path d="M816 336h12v12h-12z" fill="#38c800"/><path d="M828 336h12v12h-12z" fill="#41c800"/><path d="M840 336h12v12h-12z" fill="#49c800"/><path d="M852 336h12v12h-12z" fill="#50c800"/><path d="M864 336h12v12h-12z" fill="#57c800"/><path d="M876 336h12v12h-12z" fill="#5cc800"/><path d="M144 348h12v12h-12z" fill="#00c89c"/><path d="M156 348h12v12h-12z" fill="#00c89b"/><path d="M168 348h12v12h-12z" fill="#00c89a"/><path d="M180 348h12v12h-12z" fill="#00c89a"/><path d="M192 348h12v12h-12z" fill="#00c899"/><path d="M204 348h12v12h-12z" fill="#00c899"/><path d="M216 348h12v12h-12z" fill="#00c898"/><path d="M228 348h12v12h-12z" fill="#00c897"/><path d="M240 348h12v12h-12z" fill="#00c897"/><path d="M252 348h12v12h-12z" fill="#00c896"/><path d="M264 348h12v12h-12z" fill="#00c895"/><path d="M276 348h12v12h-12z" fill="#00c894"/><path d="M288 348h12v12h-12z" fill="#00c894"/><path d="M300 348h12v12h-12z" fill="#00c893"/><path d="M312 348h12v12h-12z" fill="#00c892"/><path d="M324 348h12v12h-12z" fill="#00c891"/><path d="M336 348h12v12h-12z" fill="#00c890"/><path d="M348 348h12v12h-12z" fill="#00c88f"/><path d="M360 348h12v12h-12z" fill="#00c88e"/><path d="M372 348h12v12h-12z" fill="#00c88e"/><path d="M384 348h12v12h-12z" fill="#00c88d"/><path d="M396 348h12v12h-12z" fill="#00c88b"/><path d="M408 348h12v12h-12z" fill="#00c88a"/><path d="M420 348h12v12h-12z" fill="#00c889"/><path d="M432 348h12v12h-12z" fill="#00c888"/><path d="M444 348h12v12h-12z" fill="#00c887"/><path d="M456 348h12v12h-12z" fill="#00c886"/><path d="M468 348h12v12h-12z" fill="#00c884"/><path d="M480 348h12v12h-12z" fill="#00c883"/><path d="M492 348h12v12h-12z" fill="#00c881"/><path d="M504 348h12v12h-12z" fill="#00c880"/><path d="M516 348h12v12h-12z" fill="#00c87e"/><path d="M528 348h12v12h-12z" fill="#00c87d"/><path d="M540 348h12v12h-12z" fill="#00c87b"/><path d="M552 348h12v12h-12z" fill="#00c879"/><path d="M564 348h12v12h-12z" fill="#00c877"/><path d="M576 348h12v12h-12z" fill="#00c875"/><path d="M588 348h12v12h-12z" fill="#00c873"/><path d="M600 348h12v12h-12z" fill="#00c871"/><path d="M612 348h12v12h-12z" fill="#00c86e"/><path d="M624 348h12v12h-12z" fill="#00c86c"/><path d="M636 348h12v12h-12z" fill="#00c869"/><path d="M648 348h12v12h-12z" fill="#00c866"/><path d="M660 348h12v12h-12z" fill="#00c863"/><path d="M672 348h12v12h-12z" fill="#00c85f"/><path d="M684 348h12v12h-12z" fill="#00c85b"/><path d="M696 348h12v12h-12z" fill="#00c857"/><path d="M708 348h12v12h-12z" fill="#00c853"/><path d="M720 348h12v12h-12z" fill="#00c84e"/><path d="M732 348h12v12h-12z" fill="#00c848"/><path d="M744 348h12v12h-12z" fill="#00c841"/><path d="M756 348h12v12h-12z" fill="#00c838"/><path d="M768 348h12v12h-12z" fill="#00c82e"/><path d="M780 348h12v12h-12z" fill="#00c81e"/><path d="M792 348h12v12h-12z" fill="#19c800"/><path d="M804 348h12v12h-12z" fill="#2cc800"/><path d="M816 348h12v12h-12z" fill="#38c800"/><path d="M828 348h12v12h-12z" fill="#42c800"/><path d="M840 348h12v12h-12z" fill="#4ac800"/><path d="M852 348h12v12h-12z" fill="#51c800"/><path d="M864 348h12v12h-12z" fill="#58c800"/><path d="M876 348h12v12h-12z" fill="#5dc800"/><path d="M888 348h12v12h-12z" fill="#63c800"/><path d="M900 348h12v12h-12z" fill="#68c800"/><path d="M912 348h12v12h-12z" fill="#6dc800"/><path d="M144 360h12v12h-12z" fill="#00c89d"/><path d="M156 360h12v12h-12z" fill="#00c89c"/><path d="M168 360h12v12h-12z" fill="#00c89c"/><path d="M180 360h12v12h-12z" fill="#00c89b"/><path d="M192 360h12v12h-12z" fill="#00c89b"/><path d="M204 360h12v12h-12z" fill="#00c89a"/><path d="M216 360h12v12h-12z" fill="#00c899"/><path d="M228 360h12v12h-12z" fill="#00c899"/><path d="M240 360h12v12h-12z" fill="#00c898"/><path d="M252 360h12v12h-12z" fill="#00c897"/><path d="M264 360h12v12h-12z" fill="#00c897"/><path d="M276 360h12v12h-12z" fill="#00c896"/><path d="M288 360h12v12h-12z" fill="#00c895"/><path d="M300 360h12v12h-12z" fill="#00c894"/><path d="M312 360h12v12h-12z" fill="#00c894"/><path d="M324 360h12v12h-12z" fill="#00c893"/><path d="M336 360h12v12h-12z" fill="#00c892"/><path d="M348 360h12v12h-12z" fill="#00c891"/><path d="M360 360h12v12h-12z" fill="#00c890"/><path d="M372 360h12v12h-12z" fill="#00c88f"/><path d="M384 360h12v12h-12z" fill="#00c88e"/><path d="M396 360h12v12h-12z" fill="#00c88d"/><path d="M408 360h12v12h-12z" fill="#00c88c"/><path d="M420 360h12v12h-12z" fill="#00c88b"/><path d="M432 360h12v12h-12z" fill="#00c88a"/><path d="M444 360h12v12h-12z" fill="#00c888"/><path d="M456 360h12v12h-12z" fill="#00c887"/><path d="M468 360h12v12h-12z" fill="#00c886"/><path d="M480 360h12v12h-12z" fill="#00c885"/><path d="M492 360h12v12h-12z" fill="#00c883"/><path d="M504 360h12v12h-12z" fill="#00c882"/><path d="M516 360h12v12h-12z" fill="#00c880"/><path d="M528 360h12v12h-12z" fill="#00c87e"/><path d="M540 360h12v12h-12z" fill="#00c87d"/><path d="M552 360h12v12h-12z" fill="#00c87b"/><path d="M564 360h12v12h-12z" fill="#00c879"/><path d="M576 360h12v12h-12z" fill="#00c877"/><path d="M588 360h12v12h-12z" fill="#00c875"/><path d="M600 360h12v12h-12z" fill="#00c873"/><path d="M612 360h12v12h-12z" fill="#00c870"/><path d="M624 360h12v12h-12z" fill="#00c86e"/><path d="M636 360h12v12h-12z" fill="#00c86b"/><path d="M648 360h12v12h-12z" fill="#00c868"/><path d="M660 360h12v12h-12z" fill="#00c865"/><path d="M672 360h12v12h-12z" fill="#00c861"/><path d="M684 360h12v12h-12z" fill="#00c85d"/><path d="M696 360h12v12h-12z" fill="#00c859"/><path d="M708 360h12v12h-12z" fill="#00c855"/><path d="M720 360h12v12h-12z" fill="#00c84f"/><path d="M732 360h12v12h-12z" fill="#00c84a"/><path d="M744 360h12v12h-12z" fill="#00c843"/><path d="M756 360h12v12h-12z" fill="#00c83b"/><path d="M768 360h12v12h-12z" fill="#00c830"/><path d="M780 360h12v12h-12z" fill="#00c821"/><path d="M792 360h12v12h-12z" fill="#16c800"/><path d="M804 360h12v12h-12z" fill="#2bc800"/><path d="M816 360h12v12h-12z" fill="#38c800"/><path d="M828 360h12v12h-12z" fill="#42c800"/><path d="M840 360h12v12h-12z" fill="#4ac800"/><path d="M852 360h12v12h-12z" fill="#52c800"/><path d="M864 360h12v12h-12z" fill="#58c800"/><path d="M876 360h12v12h-12z" fill="#5fc800"/><path d="M888 360h12v12h-12z" fill="#64c800"/><path d="M900 360h12v12h-12z" fill="#6ac800"/><path d="M912 360h12v12h-12z" fill="#6fc800"/><path d="M924 360h12v12h-12z" fill="#73c800"/><path d="M936 360h12v12h-12z" fill="#78c800"/><path d="M144 372h12v12h-12z" fill="#00c89e"/><path d="M156 372h12v12h-12z" fill="#00c89e"/><path d="M168 372h12v12h-12z" fill="#00c89d"/><path d="M180 372h12v12h-12z" fill="#00c89d"/><path d="M192 372h12v12h-12z" fill="#00c89c"/><path d="M204 372h12v12h-12z" fill="#00c89b"/><path d="M216 372h12v12h-12z" fill="#00c89b"/><path d="M228 372h12v12h-12z" fill="#00c89a"/><path d="M240 372h12v12h-12z" fill="#00c899"/><path d="M252 372h12v12h-12z" fill="#00c899"/><path d="M264 372h12v12h-12z" fill="#00c898"/><path d="M276 372h12v12h-12z" fill="#00c897"/><path d="M288 372h12v12h-12z" fill="#00c897"/><path d="M300 372h12v12h-12z" fill="#00c896"/><path d="M312 372h12v12h-12z" fill="#00c895"/><path d="M324 372h12v12h-12z" fill="#00c894"/><path d="M336 372h12v12h-12z" fill="#00c893"/><path d="M348 372h12v12h-12z" fill="#00c893"/><path d="M360 372h12v12h-12z" fill="#00c892"/><path d="M372 372h12v12h-12z" fill="#00c891"/><path d="M384 372h12v12h-12z" fill="#00c890"/><path d="M396 372h12v12h-12z" fill="#00c88f"/><path d="M408 372h12v12h-12z" fill="#00c88e"/><path d="M420 372h12v12h-12z" fill="#00c88d"/><path d="M432 372h12v12h-12z" fill="#00c88b"/><path d="M444 372h12v12h-12z" fill="#00c88a"/><path d="M456 372h12v12h-12z" fill="#00c889"/><path d="M468 372h12v12h-12z" fill="#00c888"/><path d="M480 372h12v12h-12z" fill="#00c886"/><path d="M492 372h12v12h-12z" fill="#00c885"/><path d="M504 372h12v12h-12z" fill="#00c883"/><path d="M516 372h12v12h-12z" fill="#00c882"/><path d="M528 372h12v12h-12z" fill="#00c880"/><path d="M540 372h12v12h-12z" fill="#00c87f"/><path d="M552 372h12v12h-12z" fill="#00c87d"/><path d="M564 372h12v12h-12z" fill="#00c87b"/><path d="M576 372h12v12h-12z" fill="#00c879"/><path d="M588 372h12v12h-12z" fill="#00c877"/><path d="M600 372h12v12h-12z" fill="#00c874"/><path d="M612 372h12v12h-12z" fill="#00c872"/><path d="M624 372h12v12h-12z" fill="#00c86f"/><path d="M636 372h12v12h-12z" fill="#00c86d"/><path d="M648 372h12v12h-12z" fill="#00c86a"/><path d="M660 372h12v12h-12z" fill="#00c867"/><path d="M672 372h12v12h-12z" fill="#00c863"/><path d="M684 372h12v12h-12z" fill="#00c85f"/><path d="M696 372h12v12h-12z" fill="#00c85b"/><path d="M708 372h12v12h-12z" fill="#00c857"/><path d="M720 372h12v12h-12z" fill="#00c851"/><path d="M732 372h12v12h-12z" fill="#00c84c"/><path d="M744 372h12v12h-12z" fill="#00c845"/><path d="M756 372h12v12h-12z" fill="#00c83d"/><path d="M768 372h12v12h-12z" fill="#00c832"/><path d="M780 372h12v12h-12z" fill="#00c824"/><path d="M792 372h12v12h-12z" fill="#11c800"/><path d="M804 372h12v12h-12z" fill="#2ac800"/><path d="M816 372h12v12h-12z" fill="#38c800"/><path d="M828 372h12v12h-12z" fill="#42c800"/><path d="M840 372h12v12h-12z" fill="#4bc800"/><path d="M852 372h12v12h-12z" fill="#53c800"/><path d="M864 372h12v12h-12z" fill="#59c800"/><path d="M876 372h12v12h-12z" fill="#60c800"/><path d="M888 372h12v12h-12z" fill="#66c800"/><path d="M900 372h12v12h-12z" fill="#6bc800"/><path d="M912 372h12v12h-12z" fill="#70c800"/><path d="M924 372h12v12h-12z" fill="#75c800"/><path d="M936 372h12v12h-12z" fill="#7ac800"/><path d="M948 372h12v12h-12z" fill="#7ec800"/><path d="M960 372h12v12h-12z" fill="#83c800"/><path d="M972 372h12v12h-12z" fill="#87c800"/><path d="M144 384h12v12h-12z" fill="#00c8a0"/><path d="M156 384h12v12h-12z" fill="#00c89f"/><path d="M168 384h12v12h-12z" fill="#00c89f"/><path d="M180 384h12v12h-12z" fill="#00c89e"/><path d="M192 384h12v12h-12z" fill="#00c89d"/><path d="M204 384h12v12h-12z" fill="#00c89d"/><path d="M216 384h12v12h-12z" fill="#00c89c"/><path d="M228 384h12v12h-12z" fill="#00c89c"/><path d="M240 384h12v12h-12z" fill="#00c89b"/><path d="M252 384h12v12h-12z" fill="#00c89a"/><path d="M264 384h12v12h-12z" fill="#00c89a"/><path d="M276 384h12v12h-12z" fill="#00c899"/><path d="M288 384h12v12h-12z" fill="#00c898"/><path d="M300 384h12v12h-12z" fill="#00c897"/><path d="M312 384h12v12h-12z" fill="#00c897"/><path d="M324 384h12v12h-12z" fill="#00c896"/><path d="M336 384h12v12h-12z" fill="#00c895"/><path d="M348 384h12v12h-12z" fill="#00c894"/><path d="M360 384h12v12h-12z" fill="#00c893"/><path d="M372 384h12v12h-12z" fill="#00c892"/><path d="M384 384h12v12h-12z" fill="#00c891"/><path d="M396 384h12v12h-12z" fill="#00c890"/><path d="M408 384h12v12h-12z" fill="#00c88f"/><path d="M420 384h12v12h-12z" fill="#00c88e"/><path d="M432 384h12v12h-12z" fill="#00c88d"/><path d="M444 384h12v12h-12z" fill="#00c88c"/><path d="M456 384h12v12h-12z" fill="#00c88b"/><path d="M468 384h12v12h-12z" fill="#00c889"/><path d="M480 384h12v12h-12z" fill="#00c888"/><path d="M492 384h12v12h-12z" fill="#00c887"/><path d="M504 384h12v12h-12z" fill="#00c885"/><path d="M516 384h12v12h-12z" fill="#00c884"/><path d="M528 384h12v12h-12z" fill="#00c882"/><path d="M540 384h12v12h-12z" fill="#00c880"/><path d="M552 384h12v12h-12z" fill="#00c87f"/><path d="M564 384h12v12h-12z" fill="#00c87d"/><path d="M576 384h12v12h-12z" fill="#00c87b"/><path d="M588 384h12v12h-12z" fill="#00c879"/><path d="M600 384h12v12h-12z" fill="#00c876"/><path d="M612 384h12v12h-12z" fill="#00c874"/><path d="M624 384h12v12h-12z" fill="#00c871"/><path d="M636 384h12v12h-12z" fill="#00c86f"/><path d="M648 384h12v12h-12z" fill="#00c86c"/><path d="M660 384h12v12h-12z" fill="#00c869"/><path d="M672 384h12v12h-12z" fill="#00c865"/><path d="M684 384h12v12h-12z" fill="#00c861"/><path d="M696 384h12v12h-12z" fill="#00c85d"/><path d="M708 384h12v12h-12z" fill="#00c859"/><path d="M720 384h12v12h-12z" fill="#00c854"/><path d="M732 384h12v12h-12z" fill="#00c84e"/><path d="M744 384h12v12h-12z" fill="#00c847"/><path d="M756 384h12v12h-12z" fill="#00c83f"/><path d="M768 384h12v12h-12z" fill="#00c835"/><path d="M780 384h12v12h-12z" fill="#00c827"/><path d="M792 384h12v12h-12z" fill="#0ac800"/><path d="M804 384h12v12h-12z" fill="#29c800"/><path d="M816 384h12v12h-12z" fill="#37c800"/><path d="M828 384h12v12h-12z" fill="#42c800"/><path d="M840 384h12v12h-12z" fill="#4bc800"/><path d="M852 384h12v12h-12z" fill="#53c800"/><path d="M864 384h12v12h-12z" fill="#5bc800"/><path d="M876 384h12v12h-12z" fill="#61c800"/><path d="M888 384h12v12h-12z" fill="#67c800"/><path d="M900 384h12v12h-12z" fill="#6dc800"/><path d="M912 384h12v12h-12z" fill="#72c800"/><path d="M924 384h12v12h-12z" fill="#77c800"/><path d="M936 384h12v12h-12z" fill="#7cc800"/><path d="M948 384h12v12h-12z" fill="#80c800"/><path d="M960 384h12v12h-12z" fill="#85c800"/><path d="M972 384h12v12h-12z" fill="#89c800"/><path d="M984 384h12v12h-12z" fill="#8dc800"/><path d="M996 384h12v12h-12z" fill="#91c800"/><path d="M144 396h12v12h-12z" fill="#00c8a1"/><path d="M156 396h12v12h-12z" fill="#00c8a1"/><path d="M168 396h12v12h-12z" fill="#00c8a0"/><path d="M180 396h12v12h-12z" fill="#00c89f"/><path d="M192 396h12v12h-12z" fill="#00c89f"/><path d="M204 396h12v12h-12z" fill="#00c89e"/><path d="M216 396h12v12h-12z" fill="#00c89e"/><path d="M228 396h12v12h-12z" fill="#00c89d"/><path d="M240 396h12v12h-12z" fill="#00c89c"/><path d="M252 396h12v12h-12z" fill="#00c89c"/><path d="M264 396h12v12h-12z" fill="#00c89b"/><path d="M276 396h12v12h-12z" fill="#00c89a"/><path d="M288 396h12v12h-12z" fill="#00c89a"/><path d="M300 396h12v12h-12z" fill="#00c899"/><path d="M312 396h12v12h-12z" fill="#00c898"/><path d="M324 396h12v12h-12z" fill="#00c897"/><path d="M336 396h12v12h-12z" fill="#00c897"/><path d="M348 396h12v12h-12z" fill="#00c896"/><path d="M360 396h12v12h-12z" fill="#00c895"/><path d="M372 396h12v12h-12z" fill="#00c894"/><path d="M384 396h12v12h-12z" fill="#00c893"/><path d="M396 396h12v12h-12z" fill="#00c892"/><path d="M408 396h12v12h-12z" fill="#00c891"/><path d="M420 396h12v12h-12z" fill="#00c890"/><path d="M432 396h12v12h-12z" fill="#00c88f"/><path d="M444 396h12v12h-12z" fill="#00c88e"/><path d="M456 396h12v12h-12z" fill="#00c88d"/><path d="M468 396h12v12h-12z" fill="#00c88b"/><path d="M480 396h12v12h-12z" fill="#00c88a"/><path d="M492 396h12v12h-12z" fill="#00c889"/><path d="M504 396h12v12h-12z" fill="#00c887"/><path d="M516 396h12v12h-12z" fill="#00c886"/><path d="M528 396h12v12h-12z" fill="#00c884"/><path d="M540 396h12v12h-12z" fill="#00c882"/><path d="M552 396h12v12h-12z" fill="#00c881"/><path d="M564 396h12v12h-12z" fill="#00c87f"/><path d="M576 396h12v12h-12z" fill="#00c87d"/><path d="M588 396h12v12h-12z" fill="#00c87b"/><path d="M600 396h12v12h-12z" fill="#00c878"/><path d="M612 396h12v12h-12z" fill="#00c876"/><path d="M624 396h12v12h-12z" fill="#00c874"/><path d="M636 396h12v12h-12z" fill="#00c871"/><path d="M648 396h12v12h-12z" fill="#00c86e"/><path d="M660 396h12v12h-12z" fill="#00c86b"/><path d="M672 396h12v12h-12z" fill="#00c867"/><path d="M684 396h12v12h-12z" fill="#00c864"/><path d="M696 396h12v12h-12z" fill="#00c85f"/><path d="M708 396h12v12h-12z" fill="#00c85b"/><path d="M720 396h12v12h-12z" fill="#00c856"/><path d="M732 396h12v12h-12z" fill="#00c850"/><path d="M744 396h12v12h-12z" fill="#00c849"/><path d="M756 396h12v12h-12z" fill="#00c841"/><path d="M768 396h12v12h-12z" fill="#00c837"/><path d="M816 396h12v12h-12z" fill="#37c800"/><path d="M828 396h12v12h-12z" fill="#43c800"/><path d="M840 396h12v12h-12z" fill="#4cc800"/><path d="M852 396h12v12h-12z" fill="#54c800"/><path d="M864 396h12v12h-12z" fill="#5cc800"/><path d="M876 396h12v12h-12z" fill="#62c800"/><path d="M888 396h12v12h-12z" fill="#69c800"/><path d="M900 396h12v12h-12z" fill="#6fc800"/><path d="M912 396h12v12h-12z" fill="#74c800"/><path d="M924 396h12v12h-12z" fill="#79c800"/><path d="M936 396h12v12h-12z" fill="#7ec800"/><path d="M948 396h12v12h-12z" fill="#83c800"/><path d="M960 396h12v12h-12z" fill="#87c800"/><path d="M972 396h12v12h-12z" fill="#8cc800"/><path d="M984 396h12v12h-12z" fill="#90c800"/><path d="M996 396h12v12h-12z" fill="#94c800"/><path d="M1008 396h12v12h-12z" fill="#98c800"/><path d="M1020 396h12v12h-12z" fill="#9cc800"/><path d="M1032 396h12v12h-12z" fill="#9fc800"/><path d="M144 408h12v12h-12z" fill="#00c8a3"/><path d="M156 408h12v12h-12z" fill="#00c8a2"/><path d="M168 408h12v12h-12z" fill="#00c8a2"/><path d="M180 408h12v12h-12z" fill="#00c8a1"/><path d="M192 408h12v12h-12z" fill="#00c8a0"/><path d="M204 408h12v12h-12z" fill="#00c8a0"/><path d="M216 408h12v12h-12z" fill="#00c89f"/><path d="M228 408h12v12h-12z" fill="#00c89f"/><path d="M240 408h12v12h-12z" fill="#00c89e"/><path d="M252 408h12v12h-12z" fill="#00c89d"/><path d="M264 408h12v12h-12z" fill="#00c89d"/><path d="M276 408h12v12h-12z" fill="#00c89c"/><path d="M288 408h12v12h-12z" fill="#00c89b"/><path d="M300 408h12v12h-12z" fill="#00c89b"/><path d="M312 408h12v12h-12z" fill="#00c89a"/><path d="M324 408h12v12h-12z" fill="#00c899"/><path d="M336 408h12v12h-12z" fill="#00c898"/><path d="M348 408h12v12h-12z" fill="#00c897"/><path d="M360 408h12v12h-12z" fill="#00c897"/><path d="M372 408h12v12h-12z" fill="#00c896"/><path d="M384 408h12v12h-12z" fill="#00c895"/><path d="M396 408h12v12h-12z" fill="#00c894"/><path d="M408 408h12v12h-12z" fill="#00c893"/><path d="M420 408h12v12h-12z" fill="#00c892"/><path d="M432 408h12v12h-12z" fill="#00c891"/><path d="M444 408h12v12h-12z" fill="#00c890"/><path d="M456 408h12v12h-12z" fill="#00c88e"/><path d="M468 408h12v12h-12z" fill="#00c88d"/><path d="M480 408h12v12h-12z" fill="#00c88c"/><path d="M492 408h12v12h-12z" fill="#00c88a"/><path d="M504 408h12v12h-12z" fill="#00c889"/><path d="M516 408h12v12h-12z" fill="#00c888"/><path d="M528 408h12v12h-12z" fill="#00c886"/><path d="M540 408h12v12h-12z" fill="#00c884"/><path d="M552 408h12v12h-12z" fill="#00c883"/><path d="M564 408h12v12h-12z" fill="#00c881"/><path d="M576 408h12v12h-12z" fill="#00c87f"/><path d="M588 408h12v12h-12z" fill="#00c87d"/><path d="M600 408h12v12h-12z" fill="#00c87b"/><path d="M612 408h12v12h-12z" fill="#00c878"/><path d="M624 408h12v12h-12z" fill="#00c876"/><path d="M636 408h12v12h-12z" fill="#00c873"/><path d="M648 408h12v12h-12z" fill="#00c870"/><path d="M660 408h12v12h-12z" fill="#00c86d"/><path d="M672 408h12v12h-12z" fill="#00c86a"/><path d="M684 408h12v12h-12z" fill="#00c866"/><path d="M696 408h12v12h-12z" fill="#00c862"/><path d="M708 408h12v12h-12z" fill="#00c85d"/><path d="M720 408h12v12h-12z" fill="#00c858"/><path d="M732 408h12v12h-12z" fill="#00c852"/><path d="M744 408h12v12h-12z" fill="#00c84c"/><path d="M756 408h12v12h-12z" fill="#00c844"/><path d="M852 408h12v12h-12z" fill="#55c800"/><path d="M864 408h12v12h-12z" fill="#5dc800"/><path d="M876 408h12v12h-12z" fill="#64c800"/><path d="M888 408h12v12h-12z" fill="#6ac800"/><path d="M900 408h12v12h-12z" fill="#70c800"/><path d="M912 408h12v12h-12z" fill="#76c800"/><path d="M924 408h12v12h-12z" fill="#7bc800"/><path d="M936 408h12v12h-12z" fill="#80c800"/><path d="M948 408h12v12h-12z" fill="#85c800"/><path d="M960 408h12v12h-12z" fill="#8ac800"/><path d="M972 408h12v12h-12z" fill="#8ec800"/><path d="M984 408h12v12h-12z" fill="#93c800"/><path d="M996 408h12v12h-12z" fill="#97c800"/><path d="M1008 408h12v12h-12z" fill="#9bc800"/><path d="M1020 408h12v12h-12z" fill="#9fc800"/><path d="M1032 408h12v12h-12z" fill="#a2c800"/><path d="M1044 408h12v12h-12z" fill="#a6c800"/><path d="M1056 408h12v12h-12z" fill="#aac800"/><path d="M156 420h12v12h-12z" fill="#00c8a4"/><path d="M168 420h12v12h-12z" fill="#00c8a3"/><path d="M180 420h12v12h-12z" fill="#00c8a2"/><path d="M192 420h12v12h-12z" fill="#00c8a2"/><path d="M204 420h12v12h-12z" fill="#00c8a1"/><path d="M216 420h12v12h-12z" fill="#00c8a1"/><path d="M228 420h12v12h-12z" fill="#00c8a0"/><path d="M240 420h12v12h-12z" fill="#00c8a0"/><path d="M252 420h12v12h-12z" fill="#00c89f"/><path d="M264 420h12v12h-12z" fill="#00c89e"/><path d="M276 420h12v12h-12z" fill="#00c89e"/><path d="M288 420h12v12h-12z" fill="#00c89d"/><path d="M300 420h12v12h-12z" fill="#00c89c"/><path d="M312 420h12v12h-12z" fill="#00c89c"/><path d="M324 420h12v12h-12z" fill="#00c89b"/><path d="M336 420h12v12h-12z" fill="#00c89a"/><path d="M348 420h12v12h-12z" fill="#00c899"/><path d="M360 420h12v12h-12z" fill="#00c898"/><path d="M372 420h12v12h-12z" fill="#00c898"/><path d="M384 420h12v12h-12z" fill="#00c897"/><path d="M396 420h12v12h-12z" fill="#00c896"/><path d="M408 420h12v12h-12z" fill="#00c895"/><path d="M420 420h12v12h-12z" fill="#00c894"/><path d="M432 420h12v12h-12z" fill="#00c893"/><path d="M444 420h12v12h-12z" fill="#00c891"/><path d="M456 420h12v12h-12z" fill="#00c890"/><path d="M468 420h12v12h-12z" fill="#00c88f"/><path d="M480 420h12v12h-12z" fill="#00c88e"/><path d="M492 420h12v12h-12z" fill="#00c88d"/><path d="M504 420h12v12h-12z" fill="#00c88b"/><path d="M516 420h12v12h-12z" fill="#00c88a"/><path d="M528 420h12v12h-12z" fill="#00c888"/><path d="M540 420h12v12h-12z" fill="#00c886"/><path d="M552 420h12v12h-12z" fill="#00c885"/><path d="M564 420h12v12h-12z" fill="#00c883"/><path d="M576 420h12v12h-12z" fill="#00c881"/><path d="M588 420h12v12h-12z" fill="#00c87f"/><path d="M600 420h12v12h-12z" fill="#00c87d"/><path d="M612 420h12v12h-12z" fill="#00c87a"/><path d="M624 420h12v12h-12z" fill="#00c878"/><path d="M636 420h12v12h-12z" fill="#00c875"/><path d="M648 420h12v12h-12z" fill="#00c872"/><path d="M660 420h12v12h-12z" fill="#00c86f"/><path d="M672 420h12v12h-12z" fill="#00c86c"/><path d="M684 420h12v12h-12z" fill="#00c868"/><path d="M696 420h12v12h-12z" fill="#00c864"/><path d="M708 420h12v12h-12z" fill="#00c860"/><path d="M720 420h12v12h-12z" fill="#00c85b"/><path d="M732 420h12v12h-12z" fill="#00c855"/><path d="M744 420h12v12h-12z" fill="#00c84e"/><path d="M756 420h12v12h-12z" fill="#00c846"/><path d="M888 420h12v12h-12z" fill="#6cc800"/><path d="M900 420h12v12h-12z" fill="#72c800"/><path d="M912 420h12v12h-12z" fill="#78c800"/><path d="M924 420h12v12h-12z" fill="#7ec800"/><path d="M936 420h12v12h-12z" fill="#83c800"/><path d="M948 420h12v12h-12z" fill="#88c800"/><path d="M960 420h12v12h-12z" fill="#8dc800"/><path d="M972 420h12v12h-12z" fill="#91c800"/><path d="M984 420h12v12h-12z" fill="#96c800"/><path d="M996 420h12v12h-12z" fill="#9ac800"/><path d="M1008 420h12v12h-12z" fill="#9ec800"/><path d="M1020 420h12v12h-12z" fill="#a2c800"/><path d="M1032 420h12v12h-12z" fill="#a6c800"/><path d="M1044 420h12v12h-12z" fill="#aac800"/><path d="M1056 420h12v12h-12z" fill="#adc800"/><path d="M1068 420h12v12h-12z" fill="#b1c800"/><path d="M1080 420h12v12h-12z" fill="#b5c800"/><path d="M1092 420h12v12h-12z" fill="#b8c800"/><path d="M156 432h12v12h-12z" fill="#00c8a5"/><path d="M168 432h12v12h-12z" fill="#00c8a5"/><path d="M180 432h12v12h-12z" fill="#00c8a4"/><path d="M192 432h12v12h-12z" fill="#00c8a4"/><path d="M204 432h12v12h-12z" fill="#00c8a3"/><path d="M216 432h12v12h-12z" fill="#00c8a2"/><path d="M228 432h12v12h-12z" fill="#00c8a2"/><path d="M240 432h12v12h-12z" fill="#00c8a1"/><path d="M252 432h12v12h-12z" fill="#00c8a1"/><path d="M264 432h12v12h-12z" fill="#00c8a0"/><path d="M276 432h12v12h-12z" fill="#00c89f"/><path d="M288 432h12v12h-12z" fill="#00c89f"/><path d="M300 432h12v12h-12z" fill="#00c89e"/><path d="M312 432h12v12h-12z" fill="#00c89d"/><path d="M324 432h12v12h-12z" fill="#00c89d"/><path d="M336 432h12v12h-12z" fill="#00c89c"/><path d="M348 432h12v12h-12z" fill="#00c89b"/><path d="M360 432h12v12h-12z" fill="#00c89a"/><path d="M372 432h12v12h-12z" fill="#00c899"/><path d="M384 432h12v12h-12z" fill="#00c898"/><path d="M396 432h12v12h-12z" fill="#00c898"/><path d="M408 432h12v12h-12z" fill="#00c897"/><path d="M420 432h12v12h-12z" fill="#00c896"/><path d="M432 432h12v12h-12z" fill="#00c895"/><path d="M444 432h12v12h-12z" fill="#00c893"/><path d="M456 432h12v12h-12z" fill="#00c892"/><path d="M468 432h12v12h-12z" fill="#00c891"/><path d="M480 432h12v12h-12z" fill="#00c890"/><path d="M492 432h12v12h-12z" fill="#00c88f"/><path d="M504 432h12v12h-12z" fill="#00c88d"/><path d="M516 432h12v12h-12z" fill="#00c88c"/><path d="M528 432h12v12h-12z" fill="#00c88a"/><path d="M540 432h12v12h-12z" fill="#00c889"/><path d="M552 432h12v12h-12z" fill="#00c887"/><path d="M564 432h12v12h-12z" fill="#00c885"/><path d="M576 432h12v12h-12z" fill="#00c883"/><path d="M588 432h12v12h-12z" fill="#00c881"/><path d="M600 432h12v12h-12z" fill="#00c87f"/><path d="M612 432h12v12h-12z" fill="#00c87d"/><path d="M624 432h12v12h-12z" fill="#00c87a"/><path d="M636 432h12v12h-12z" fill="#00c878"/><path d="M648 432h12v12h-12z" fill="#00c875"/><path d="M660 432h12v12h-12z" fill="#00c872"/><path d="M672 432h12v12h-12z" fill="#00c86e"/><path d="M684 432h12v12h-12z" fill="#00c86b"/><path d="M696 432h12v12h-12z" fill="#00c867"/><path d="M708 432h12v12h-12z" fill="#00c862"/><path d="M720 432h12v12h-12z" fill="#00c85d"/><path d="M732 432h12v12h-12z" fill="#00c857"/><path d="M744 432h12v12h-12z" fill="#00c851"/><path d="M924 432h12v12h-12z" fill="#80c800"/><path d="M936 432h12v12h-12z" fill="#86c800"/><path d="M948 432h12v12h-12z" fill="#8bc800"/><path d="M960 432h12v12h-12z" fill="#90c800"/><path d="M972 432h12v12h-12z" fill="#95c800"/><path d="M984 432h12v12h-12z" fill="#99c800"/><path d="M996 432h12v12h-12z" fill="#9dc800"/><path d="M1008 432h12v12h-12z" fill="#a2c800"/><path d="M1020 432h12v12h-12z" fill="#a6c800"/><path d="M1032 432h12v12h-12z" fill="#aac800"/><path d="M1044 432h12v12h-12z" fill="#aec800"/><path d="M1056 432h12v12h-12z" fill="#b2c800"/><path d="M1068 432h12v12h-12z" fill="#b5c800"/><path d="M1080 432h12v12h-12z" fill="#b9c800"/><path d="M1092 432h12v12h-12z" fill="#bcc800"/><path d="M1104 432h12v12h-12z" fill="#c0c800"/><path d="M1116 432h12v12h-12z" fill="#c3c800"/><path d="M156 444h12v12h-12z" fill="#00c8a7"/><path d="M168 444h12v12h-12z" fill="#00c8a6"/><path d="M180 444h12v12h-12z" fill="#00c8a6"/><path d="M192 444h12v12h-12z" fill="#00c8a5"/><path d="M204 444h12v12h-12z" fill="#00c8a5"/><path d="M216 444h12v12h-12z" fill="#00c8a4"/><path d="M228 444h12v12h-12z" fill="#00c8a4"/><path d="M240 444h12v12h-12z" fill="#00c8a3"/><path d="M252 444h12v12h-12z" fill="#00c8a2"/><path d="M264 444h12v12h-12z" fill="#00c8a2"/><path d="M276 444h12v12h-12z" fill="#00c8a1"/><path d="M288 444h12v12h-12z" fill="#00c8a1"/><path d="M300 444h12v12h-12z" fill="#00c8a0"/><path d="M312 444h12v12h-12z" fill="#00c89f"/><path d="M324 444h12v12h-12z" fill="#00c89e"/><path d="M336 444h12v12h-12z" fill="#00c89e"/><path d="M348 444h12v12h-12z" fill="#00c89d"/><path d="M360 444h12v12h-12z" fill="#00c89c"/><path d="M372 444h12v12h-12z" fill="#00c89b"/><path d="M384 444h12v12h-12z" fill="#00c89a"/><path d="M396 444h12v12h-12z" fill="#00c89a"/><path d="M408 444h12v12h-12z" fill="#00c899"/><path d="M420 444h12v12h-12z" fill="#00c898"/><path d="M432 444h12v12h-12z" fill="#00c897"/><path d="M444 444h12v12h-12z" fill="#00c896"/><path d="M456 444h12v12h-12z" fill="#00c894"/><path d="M468 444h12v12h-12z" fill="#00c893"/><path d="M480 444h12v12h-12z" fill="#00c892"/><path d="M492 444h12v12h-12z" fill="#00c891"/><path d="M504 444h12v12h-12z" fill="#00c88f"/><path d="M516 444h12v12h-12z" fill="#00c88e"/><path d="M528 444h12v12h-12z" fill="#00c88d"/><path d="M540 444h12v12h-12z" fill="#00c88b"/><path d="M552 444h12v12h-12z" fill="#00c889"/><path d="M564 444h12v12h-12z" fill="#00c888"/><path d="M576 444h12v12h-12z" fill="#00c886"/><path d="M588 444h12v12h-12z" fill="#00c884"/><path d="M600 444h12v12h-12z" fill="#00c882"/><path d="M612 444h12v12h-12z" fill="#00c87f"/><path d="M624 444h12v12h-12z" fill="#00c87d"/><path d="M636 444h12v12h-12z" fill="#00c87a"/><path d="M648 444h12v12h-12z" fill="#00c877"/><path d="M660 444h12v12h-12z" fill="#00c874"/><path d="M672 444h12v12h-12z" fill="#00c871"/><path d="M684 444h12v12h-12z" fill="#00c86d"/><path d="M696 444h12v12h-12z" fill="#00c869"/><path d="M708 444h12v12h-12z" fill="#00c865"/><path d="M720 444h12v12h-12z" fill="#00c860"/><path d="M732 444h12v12h-12z" fill="#00c85a"/><path d="M744 444h12v12h-12z" fill="#00c853"/><path d="M960 444h12v12h-12z" fill="#93c800"/><path d="M972 444h12v12h-12z" fill="#98c800"/><path d="M984 444h12v12h-12z" fill="#9dc800"/><path d="M996 444h12v12h-12z" fill="#a1c800"/><path d="M1008 444h12v12h-12z" fill="#a6c800"/><path d="M1020 444h12v12h-12z" fill="#aac800"/><path d="M1032 444h12v12h-12z" fill="#aec800"/><path d="M1044 444h12v12h-12z" fill="#b2c800"/><path d="M1056 444h12v12h-12z" fill="#b6c800"/><path d="M1068 444h12v12h-12z" fill="#bac800"/><path d="M1080 444h12v12h-12z" fill="#bec800"/><path d="M1092 444h12v12h-12z" fill="#c1c800"/><path d="M1104 444h12v12h-12z" fill="#c5c800"/><path d="M1116 444h12v12h-12z" fill="#c8c800"/><path d="M1128 444h12v12h-12z" fill="#c8c500"/><path d="M1140 444h12v12h-12z" fill="#c8c200"/><path d="M1152 444h12v12h-12z" fill="#c8bf00"/><path d="M156 456h12v12h-12z" fill="#00c8a8"/><path d="M168 456h12v12h-12z" fill="#00c8a8"/><path d="M180 456h12v12h-12z" fill="#00c8a7"/><path d="M192 456h12v12h-12z" fill="#00c8a7"/><path d="M204 456h12v12h-12z" fill="#00c8a6"/><path d="M216 456h12v12h-12z" fill="#00c8a6"/><path d="M228 456h12v12h-12z" fill="#00c8a5"/><path d="M240 456h12v12h-12z" fill="#00c8a5"/><path d="M252 456h12v12h-12z" fill="#00c8a4"/><path d="M264 456h12v12h-12z" fill="#00c8a4"/><path d="M276 456h12v12h-12z" fill="#00c8a3"/><path d="M288 456h12v12h-12z" fill="#00c8a2"/><path d="M300 456h12v12h-12z" fill="#00c8a2"/><path d="M312 456h12v12h-12z" fill="#00c8a1"/><path d="M324 456h12v12h-12z" fill="#00c8a0"/><path d="M336 456h12v12h-12z" fill="#00c8a0"/><path d="M348 456h12v12h-12z" fill="#00c89f"/><path d="M360 456h12v12h-12z" fill="#00c89e"/><path d="M372 456h12v12h-12z" fill="#00c89d"/><path d="M384 456h12v12h-12z" fill="#00c89c"/><path d="M396 456h12v12h-12z" fill="#00c89c"/><path d="M408 456h12v12h-12z" fill="#00c89b"/><path d="M420 456h12v12h-12z" fill="#00c89a"/><path d="M432 456h12v12h-12z" fill="#00c899"/><path d="M444 456h12v12h-12z" fill="#00c898"/><path d="M456 456h12v12h-12z" fill="#00c897"/><path d="M468 456h12v12h-12z" fill="#00c895"/><path d="M480 456h12v12h-12z" fill="#00c894"/><path d="M492 456h12v12h-12z" fill="#00c893"/><path d="M504 456h12v12h-12z" fill="#00c892"/><path d="M516 456h12v12h-12z" fill="#00c890"/><path d="M528 456h12v12h-12z" fill="#00c88f"/><path d="M540 456h12v12h-12z" fill="#00c88d"/><path d="M552 456h12v12h-12z" fill="#00c88c"/><path d="M564 456h12v12h-12z" fill="#00c88a"/><path d="M576 456h12v12h-12z" fill="#00c888"/><path d="M588 456h12v12h-12z" fill="#00c886"/><path d="M600 456h12v12h-12z" fill="#00c884"/><path d="M612 456h12v12h-12z" fill="#00c882"/><path d="M624 456h12v12h-12z" fill="#00c87f"/><path d="M636 456h12v12h-12z" fill="#00c87d"/><path d="M648 456h12v12h-12z" fill="#00c87a"/><path d="M660 456h12v12h-12z" fill="#00c877"/><path d="M672 456h12v12h-12z" fill="#00c874"/><path d="M684 456h12v12h-12z" fill="#00c870"/><path d="M696 456h12v12h-12z" fill="#00c86c"/><path d="M708 456h12v12h-12z" fill="#00c868"/><path d="M720 456h12v12h-12z" fill="#00c863"/><path d="M732 456h12v12h-12z" fill="#00c85d"/><path d="M996 456h12v12h-12z" fill="#a5c800"/><path d="M1008 456h12v12h-12z" fill="#aac800"/><path d="M1020 456h12v12h-12z" fill="#aec800"/><path d="M1032 456h12v12h-12z" fill="#b3c800"/><path d="M1044 456h12v12h-12z" fill="#b7c800"/><path d="M1056 456h12v12h-12z" fill="#bbc800"/><path d="M1068 456h12v12h-12z" fill="#bfc800"/><path d="M1080 456h12v12h-12z" fill="#c3c800"/><path d="M1092 456h12v12h-12z" fill="#c6c800"/><path d="M1104 456h12v12h-12z" fill="#c8c600"/><path d="M1116 456h12v12h-12z" fill="#c8c300"/><path d="M1128 456h12v12h-12z" fill="#c8c000"/><path d="M1140 456h12v12h-12z" fill="#c8bc00"/><path d="M1152 456h12v12h-12z" fill="#c8ba00"/><path d="M1164 456h12v12h-12z" fill="#c8b700"/><path d="M1176 456h12v12h-12z" fill="#c8b400"/><path d="M156 468h12v12h-12z" fill="#00c8aa"/><path d="M168 468h12v12h-12z" fill="#00c8a9"/><path d="M180 468h12v12h-12z" fill="#00c8a9"/><path d="M192 468h12v12h-12z" fill="#00c8a9"/><path d="M204 468h12v12h-12z" fill="#00c8a8"/><path d="M216 468h12v12h-12z" fill="#00c8a8"/><path d="M228 468h12v12h-12z" fill="#00c8a7"/><path d="M240 468h12v12h-12z" fill="#00c8a7"/><path d="M252 468h12v12h-12z" fill="#00c8a6"/><path d="M264 468h12v12h-12z" fill="#00c8a5"/><path d="M276 468h12v12h-12z" fill="#00c8a5"/><path d="M288 468h12v12h-12z" fill="#00c8a4"/><path d="M300 468h12v12h-12z" fill="#00c8a4"/><path d="M312 468h12v12h-12z" fill="#00c8a3"/><path d="M324 468h12v12h-12z" fill="#00c8a2"/><path d="M336 468h12v12h-12z" fill="#00c8a2"/><path d="M348 468h12v12h-12z" fill="#00c8a1"/><path d="M360 468h12v12h-12z" fill="#00c8a0"/><path d="M372 468h12v12h-12z" fill="#00c89f"/><path d="M384 468h12v12h-12z" fill="#00c89f"/><path d="M396 468h12v12h-12z" fill="#00c89e"/><path d="M408 468h12v12h-12z" fill="#00c89d"/><path d="M420 468h12v12h-12z" fill="#00c89c"/><path d="M432 468h12v12h-12z" fill="#00c89b"/><path d="M444 468h12v12h-12z" fill="#00c89a"/><path d="M456 468h12v12h-12z" fill="#00c899"/><path d="M468 468h12v12h-12z" fill="#00c898"/><path d="M480 468h12v12h-12z" fill="#00c897"/><path d="M492 468h12v12h-12z" fill="#00c895"/><path d="M504 468h12v12h-12z" fill="#00c894"/><path d="M516 468h12v12h-12z" fill="#00c893"/><path d="M528 468h12v12h-12z" fill="#00c891"/><path d="M540 468h12v12h-12z" fill="#00c890"/><path d="M552 468h12v12h-12z" fill="#00c88e"/><path d="M564 468h12v12h-12z" fill="#00c88d"/><path d="M576 468h12v12h-12z" fill="#00c88b"/><path d="M588 468h12v12h-12z" fill="#00c889"/><path d="M600 468h12v12h-12z" fill="#00c887"/><path d="M612 468h12v12h-12z" fill="#00c885"/><path d="M624 468h12v12h-12z" fill="#00c882"/><path d="M636 468h12v12h-12z" fill="#00c880"/><path d="M648 468h12v12h-12z" fill="#00c87d"/><path d="M660 468h12v12h-12z" fill="#00c87a"/><path d="M672 468h12v12h-12z" fill="#00c877"/><path d="M684 468h12v12h-12z" fill="#00c873"/><path d="M696 468h12v12h-12z" fill="#00c86f"/><path d="M708 468h12v12h-12z" fill="#00c86b"/><path d="M720 468h12v12h-12z" fill="#00c866"/><path d="M732 468h12v12h-12z" fill="#00c860"/><path d="M1032 468h12v12h-12z" fill="#b8c800"/><path d="M1044 468h12v12h-12z" fill="#bcc800"/><path d="M1056 468h12v12h-12z" fill="#c0c800"/><path d="M1068 468h12v12h-12z" fill="#c4c800"/><path d="M1080 468h12v12h-12z" fill="#c8c800"/><path d="M1092 468h12v12h-12z" fill="#c8c400"/><path d="M1104 468h12v12h-12z" fill="#c8c100"/><path d="M1116 468h12v12h-12z" fill="#c8bd00"/><path d="M1128 468h12v12h-12z" fill="#c8ba00"/><path d="M1140 468h12v12h-12z" fill="#c8b700"/><path d="M1152 468h12v12h-12z" fill="#c8b400"/><path d="M1164 468h12v12h-12z" fill="#c8b100"/><path d="M1176 468h12v12h-12z" fill="#c8af00"/><path d="M1188 468h12v12h-12z" fill="#c8ac00"/><path d="M1200 468h12v12h-12z" fill="#c8aa00"/><path d="M1212 468h12v12h-12z" fill="#c8a800"/><path d="M156 480h12v12h-12z" fill="#00c8ac"/><path d="M168 480h12v12h-12z" fill="#00c8ab"/><path d="M180 480h12v12h-12z" fill="#00c8ab"/><path d="M192 480h12v12h-12z" fill="#00c8aa"/><path d="M204 480h12v12h-12z" fill="#00c8aa"/><path d="M216 480h12v12h-12z" fill="#00c8a9"/><path d="M228 480h12v12h-12z" fill="#00c8a9"/><path d="M240 480h12v12h-12z" fill="#00c8a8"/><path d="M252 480h12v12h-12z" fill="#00c8a8"/><path d="M264 480h12v12h-12z" fill="#00c8a7"/><path d="M276 480h12v12h-12z" fill="#00c8a7"/><path d="M288 480h12v12h-12z" fill="#00c8a6"/><path d="M300 480h12v12h-12z" fill="#00c8a6"/><path d="M312 480h12v12h-12z" fill="#00c8a5"/><path d="M324 480h12v12h-12z" fill="#00c8a4"/><path d="M336 480h12v12h-12z" fill="#00c8a4"/><path d="M348 480h12v12h-12z" fill="#00c8a3"/><path d="M360 480h12v12h-12z" fill="#00c8a2"/><path d="M372 480h12v12h-12z" fill="#00c8a1"/><path d="M384 480h12v12h-12z" fill="#00c8a1"/><path d="M396 480h12v12h-12z" fill="#00c8a0"/><path d="M408 480h12v12h-12z" fill="#00c89f"/><path d="M420 480h12v12h-12z" fill="#00c89e"/><path d="M432 480h12v12h-12z" fill="#00c89d"/><path d="M444 480h12v12h-12z" fill="#00c89c"/><path d="M456 480h12v12h-12z" fill="#00c89b"/><path d="M468 480h12v12h-12z" fill="#00c89a"/><path d="M480 480h12v12h-12z" fill="#00c899"/><path d="M492 480h12v12h-12z" fill="#00c898"/><path d="M504 480h12v12h-12z" fill="#00c897"/><path d="M516 480h12v12h-12z" fill="#00c895"/><path d="M528 480h12v12h-12z" fill="#00c894"/><path d="M540 480h12v12h-12z" fill="#00c892"/><path d="M552 480h12v12h-12z" fill="#00c891"/><path d="M564 480h12v12h-12z" fill="#00c88f"/><path d="M576 480h12v12h-12z" fill="#00c88d"/><path d="M588 480h12v12h-12z" fill="#00c88c"/><path d="M600 480h12v12h-12z" fill="#00c88a"/><path d="M612 480h12v12h-12z" fill="#00c887"/><path d="M624 480h12v12h-12z" fill="#00c885"/><path d="M636 480h12v12h-12z" fill="#00c883"/><path d="M648 480h12v12h-12z" fill="#00c880"/><path d="M660 480h12v12h-12z" fill="#00c87d"/><path d="M672 480h12v12h-12z" fill="#00c87a"/><path d="M684 480h12v12h-12z" fill="#00c876"/><path d="M696 480h12v12h-12z" fill="#00c872"/><path d="M708 480h12v12h-12z" fill="#00c86e"/><path d="M720 480h12v12h-12z" fill="#00c869"/><path d="M1056 480h12v12h-12z" fill="#c6c800"/><path d="M1068 480h12v12h-12z" fill="#c8c600"/><path d="M1080 480h12v12h-12z" fill="#c8c200"/><path d="M1092 480h12v12h-12z" fill="#c8be00"/><path d="M1104 480h12v12h-12z" fill="#c8bb00"/><path d="M1116 480h12v12h-12z" fill="#c8b800"/><path d="M1128 480h12v12h-12z" fill="#c8b400"/><path d="M1140 480h12v12h-12z" fill="#c8b100"/><path d="M1152 480h12v12h-12z" fill="#c8af00"/><path d="M1164 480h12v12h-12z" fill="#c8ac00"/><path d="M1176 480h12v12h-12z" fill="#c8a900"/><path d="M1188 480h12v12h-12z" fill="#c8a700"/><path d="M1200 480h12v12h-12z" fill="#c8a500"/><path d="M1212 480h12v12h-12z" fill="#c8a300"/><path d="M1224 480h12v12h-12z" fill="#c8a000"/><path d="M1236 480h12v12h-12z" fill="#c89e00"/><path d="M156 492h12v12h-12z" fill="#00c8ad"/><path d="M168 492h12v12h-12z" fill="#00c8ad"/><path d="M180 492h12v12h-12z" fill="#00c8ad"/><path d="M192 492h12v12h-12z" fill="#00c8ac"/><path d="M204 492h12v12h-12z" fill="#00c8ac"/><path d="M216 492h12v12h-12z" fill="#00c8ab"/><path d="M228 492h12v12h-12z" fill="#00c8ab"/><path d="M240 492h12v12h-12z" fill="#00c8aa"/><path d="M252 492h12v12h-12z" fill="#00c8aa"/><path d="M264 492h12v12h-12z" fill="#00c8a9"/><path d="M276 492h12v12h-12z" fill="#00c8a9"/><path d="M288 492h12v12h-12z" fill="#00c8a8"/><path d="M300 492h12v12h-12z" fill="#00c8a8"/><path d="M312 492h12v12h-12z" fill="#00c8a7"/><path d="M324 492h12v12h-12z" fill="#00c8a6"/><path d="M336 492h12v12h-12z" fill="#00c8a6"/><path d="M348 492h12v12h-12z" fill="#00c8a5"/><path d="M360 492h12v12h-12z" fill="#00c8a4"/><path d="M372 492h12v12h-12z" fill="#00c8a4"/><path d="M384 492h12v12h-12z" fill="#00c8a3"/><path d="M396 492h12v12h-12z" fill="#00c8a2"/><path d="M408 492h12v12h-12z" fill="#00c8a1"/><path d="M420 492h12v12h-12z" fill="#00c8a0"/><path d="M432 492h12v12h-12z" fill="#00c8a0"/><path d="M444 492h12v12h-12z" fill="#00c89f"/><path d="M456 492h12v12h-12z" fill="#00c89e"/><path d="M468 492h12v12h-12z" fill="#00c89d"/><path d="M480 492h12v12h-12z" fill="#00c89c"/><path d="M492 492h12v12h-12z" fill="#00c89a"/><path d="M504 492h12v12h-12z" fill="#00c899"/><path d="M516 492h12v12h-12z" fill="#00c898"/><path d="M528 492h12v12h-12z" fill="#00c897"/><path d="M540 492h12v12h-12z" fill="#00c895"/><path d="M552 492h12v12h-12z" fill="#00c894"/><path d="M564 492h12v12h-12z" fill="#00c892"/><path d="M576 492h12v12h-12z" fill="#00c890"/><path d="M588 492h12v12h-12z" fill="#00c88e"/><path d="M600 492h12v12h-12z" fill="#00c88d"/><path d="M612 492h12v12h-12z" fill="#00c88a"/><path d="M624 492h12v12h-12z" fill="#00c888"/><path d="M636 492h12v12h-12z" fill="#00c886"/><path d="M648 492h12v12h-12z" fill="#00c883"/><path d="M660 492h12v12h-12z" fill="#00c880"/><path d="M672 492h12v12h-12z" fill="#00c87d"/><path d="M684 492h12v12h-12z" fill="#00c879"/><path d="M696 492h12v12h-12z" fill="#00c876"/><path d="M708 492h12v12h-12z" fill="#00c871"/><path d="M1092 492h12v12h-12z" fill="#c8b800"/><path d="M1104 492h12v12h-12z" fill="#c8b500"/><path d="M1116 492h12v12h-12z" fill="#c8b100"/><path d="M1128 492h12v12h-12z" fill="#c8ae00"/><path d="M1140 492h12v12h-12z" fill="#c8ac00"/><path d="M1152 492h12v12h-12z" fill="#c8a900"/><path d="M1164 492h12v12h-12z" fill="#c8a600"/><path d="M1176 492h12v12h-12z" fill="#c8a400"/><path d="M1188 492h12v12h-12z" fill="#c8a100"/><path d="M1200 492h12v12h-12z" fill="#c89f00"/><path d="M1212 492h12v12h-12z" fill="#c89d00"/><path d="M1224 492h12v12h-12z" fill="#c89b00"/><path d="M1236 492h12v12h-12z" fill="#c89900"/><path d="M1248 492h12v12h-12z" fill="#c89700"/><path d="M1260 492h12v12h-12z" fill="#c89500"/><path d="M1272 492h12v12h-12z" fill="#c89400"/><path d="M156 504h12v12h-12z" fill="#00c8af"/><path d="M168 504h12v12h-12z" fill="#00c8af"/><path d="M180 504h12v12h-12z" fill="#00c8ae"/><path d="M192 504h12v12h-12z" fill="#00c8ae"/><path d="M204 504h12v12h-12z" fill="#00c8ae"/><path d="M216 504h12v12h-12z" fill="#00c8ad"/><path d="M228 504h12v12h-12z" fill="#00c8ad"/><path d="M240 504h12v12h-12z" fill="#00c8ac"/><path d="M252 504h12v12h-12z" fill="#00c8ac"/><path d="M264 504h12v12h-12z" fill="#00c8ab"/><path d="M276 504h12v12h-12z" fill="#00c8ab"/><path d="M288 504h12v12h-12z" fill="#00c8aa"/><path d="M300 504h12v12h-12z" fill="#00c8aa"/><path d="M312 504h12v12h-12z" fill="#00c8a9"/><path d="M324 504h12v12h-12z" fill="#00c8a9"/><path d="M336 504h12v12h-12z" fill="#00c8a8"/><path d="M348 504h12v12h-12z" fill="#00c8a7"/><path d="M360 504h12v12h-12z" fill="#00c8a7"/><path d="M372 504h12v12h-12z" fill="#00c8a6"/><path d="M384 504h12v12h-12z" fill="#00c8a5"/><path d="M396 504h12v12h-12z" fill="#00c8a4"/><path d="M408 504h12v12h-12z" fill="#00c8a4"/><path d="M420 504h12v12h-12z" fill="#00c8a3"/><path d="M432 504h12v12h-12z" fill="#00c8a2"/><path d="M444 504h12v12h-12z" fill="#00c8a1"/><path d="M456 504h12v12h-12z" fill="#00c8a0"/><path d="M468 504h12v12h-12z" fill="#00c89f"/><path d="M480 504h12v12h-12z" fill="#00c89e"/><path d="M492 504h12v12h-12z" fill="#00c89d"/><path d="M504 504h12v12h-12z" fill="#00c89c"/><path d="M516 504h12v12h-12z" fill="#00c89b"/><path d="M528 504h12v12h-12z" fill="#00c899"/><path d="M540 504h12v12h-12z" fill="#00c898"/><path d="M552 504h12v12h-12z" fill="#00c897"/><path d="M564 504h12v12h-12z" fill="#00c895"/><path d="M576 504h12v12h-12z" fill="#00c893"/><path d="M588 504h12v12h-12z" fill="#00c892"/><path d="M600 504h12v12h-12z" fill="#00c890"/><path d="M612 504h12v12h-12z" fill="#00c88e"/><path d="M624 504h12v12h-12z" fill="#00c88b"/><path d="M636 504h12v12h-12z" fill="#00c889"/><path d="M648 504h12v12h-12z" fill="#00c886"/><path d="M660 504h12v12h-12z" fill="#00c884"/><path d="M672 504h12v12h-12z" fill="#00c880"/><path d="M684 504h12v12h-12z" fill="#00c87d"/><path d="M696 504h12v12h-12z" fill="#00c879"/><path d="M708 504h12v12h-12z" fill="#00c875"/><path d="M1128 504h12v12h-12z" fill="#c8a800"/><path d="M1140 504h12v12h-12z" fill="#c8a500"/><path d="M1152 504h12v12h-12z" fill="#c8a300"/><path d="M1164 504h12v12h-12z" fill="#c8a000"/><path d="M1176 504h12v12h-12z" fill="#c89e00"/><path d="M1188 504h12v12h-12z" fill="#c89c00"/><path d="M1200 504h12v12h-12z" fill="#c89900"/><path d="M1212 504h12v12h-12z" fill="#c89700"/><path d="M1224 504h12v12h-12z" fill="#c89500"/><path d="M1236 504h12v12h-12z" fill="#c89300"/><path d="M1248 504h12v12h-12z" fill="#c89200"/><path d="M1260 504h12v12h-12z" fill="#c89000"/><path d="M1272 504h12v12h-12z" fill="#c88e00"/><path d="M1284 504h12v12h-12z" fill="#c88c00"/><path d="M1296 504h12v12h-12z" fill="#c88b00"/><path d="M168 516h12v12h-12z" fill="#00c8b1"/><path d="M180 516h12v12h-12z" fill="#00c8b0"/><path d="M192 516h12v12h-12z" fill="#00c8b0"/><path d="M204 516h12v12h-12z" fill="#00c8b0"/><path d="M216 516h12v12h-12z" fill="#00c8af"/><path d="M228 516h12v12h-12z" fill="#00c8af"/><path d="M240 516h12v12h-12z" fill="#00c8ae"/><path d="M252 516h12v12h-12z" fill="#00c8ae"/><path d="M264 516h12v12h-12z" fill="#00c8ad"/><path d="M276 516h12v12h-12z" fill="#00c8ad"/><path d="M288 516h12v12h-12z" fill="#00c8ac"/><path d="M300 516h12v12h-12z" fill="#00c8ac"/><path d="M312 516h12v12h-12z" fill="#00c8ab"/><path d="M324 516h12v12h-12z" fill="#00c8ab"/><path d="M336 516h12v12h-12z" fill="#00c8aa"/><path d="M348 516h12v12h-12z" fill="#00c8aa"/><path d="M360 516h12v12h-12z" fill="#00c8a9"/><path d="M372 516h12v12h-12z" fill="#00c8a8"/><path d="M384 516h12v12h-12z" fill="#00c8a8"/><path d="M396 516h12v12h-12z" fill="#00c8a7"/><path d="M408 516h12v12h-12z" fill="#00c8a6"/><path d="M420 516h12v12h-12z" fill="#00c8a5"/><path d="M432 516h12v12h-12z" fill="#00c8a5"/><path d="M444 516h12v12h-12z" fill="#00c8a4"/><path d="M456 516h12v12h-12z" fill="#00c8a3"/><path d="M468 516h12v12h-12z" fill="#00c8a2"/><path d="M480 516h12v12h-12z" fill="#00c8a1"/><path d="M492 516h12v12h-12z" fill="#00c8a0"/><path d="M504 516h12v12h-12z" fill="#00c89f"/><path d="M516 516h12v12h-12z" fill="#00c89e"/><path d="M528 516h12v12h-12z" fill="#00c89c"/><path d="M540 516h12v12h-12z" fill="#00c89b"/><path d="M552 516h12v12h-12z" fill="#00c89a"/><path d="M564 516h12v12h-12z" fill="#00c898"/><path d="M576 516h12v12h-12z" fill="#00c897"/><path d="M588 516h12v12h-12z" fill="#00c895"/><path d="M600 516h12v12h-12z" fill="#00c893"/><path d="M612 516h12v12h-12z" fill="#00c891"/><path d="M624 516h12v12h-12z" fill="#00c88f"/><path d="M636 516h12v12h-12z" fill="#00c88d"/><path d="M648 516h12v12h-12z" fill="#00c88a"/><path d="M660 516h12v12h-12z" fill="#00c887"/><path d="M672 516h12v12h-12z" fill="#00c884"/><path d="M684 516h12v12h-12z" fill="#00c881"/><path d="M696 516h12v12h-12z" fill="#00c87d"/><path d="M1164 516h12v12h-12z" fill="#c89a00"/><path d="M1176 516h12v12h-12z" fill="#c89800"/><path d="M1188 516h12v12h-12z" fill="#c89500"/><path d="M1200 516h12v12h-12z" fill="#c89300"/><path d="M1212 516h12v12h-12z" fill="#c89100"/><path d="M1224 516h12v12h-12z" fill="#c88f00"/><path d="M1236 516h12v12h-12z" fill="#c88e00"/><path d="M1248 516h12v12h-12z" fill="#c88c00"/><path d="M1260 516h12v12h-12z" fill="#c88a00"/><path d="M1272 516h12v12h-12z" fill="#c88800"/><path d="M1284 516h12v12h-12z" fill="#c88700"/><path d="M1296 516h12v12h-12z" fill="#c88500"/><path d="M1308 516h12v12h-12z" fill="#c88400"/><path d="M1320 516h12v12h-12z" fill="#c88200"/><path d="M1332 516h12v12h-12z" fill="#c88100"/><path d="M168 528h12v12h-12z" fill="#00c8b3"/><path d="M180 528h12v12h-12z" fill="#00c8b2"/><path d="M192 528h12v12h-12z" fill="#00c8b2"/><path d="M204 528h12v12h-12z" fill="#00c8b2"/><path d="M216 528h12v12h-12z" fill="#00c8b1"/><path d="M228 528h12v12h-12z" fill="#00c8b1"/><path d="M240 528h12v12h-12z" fill="#00c8b0"/><path d="M252 528h12v12h-12z" fill="#00c8b0"/><path d="M264 528h12v12h-12z" fill="#00c8b0"/><path d="M276 528h12v12h-12z" fill="#00c8af"/><path d="M288 528h12v12h-12z" fill="#00c8af"/><path d="M300 528h12v12h-12z" fill="#00c8ae"/><path d="M312 528h12v12h-12z" fill="#00c8ae"/><path d="M324 528h12v12h-12z" fill="#00c8ad"/><path d="M336 528h12v12h-12z" fill="#00c8ad"/><path d="M348 528h12v12h-12z" fill="#00c8ac"/><path d="M360 528h12v12h-12z" fill="#00c8ab"/><path d="M372 528h12v12h-12z" fill="#00c8ab"/><path d="M384 528h12v12h-12z" fill="#00c8aa"/><path d="M396 528h12v12h-12z" fill="#00c8a9"/><path d="M408 528h12v12h-12z" fill="#00c8a9"/><path d="M420 528h12v12h-12z" fill="#00c8a8"/><path d="M432 528h12v12h-12z" fill="#00c8a7"/><path d="M444 528h12v12h-12z" fill="#00c8a6"/><path d="M456 528h12v12h-12z" fill="#00c8a6"/><path d="M468 528h12v12h-12z" fill="#00c8a5"/><path d="M480 528h12v12h-12z" fill="#00c8a4"/><path d="M492 528h12v12h-12z" fill="#00c8a3"/><path d="M504 528h12v12h-12z" fill="#00c8a2"/><path d="M516 528h12v12h-12z" fill="#00c8a1"/><path d="M528 528h12v12h-12z" fill="#00c89f"/><path d="M540 528h12v12h-12z" fill="#00c89e"/><path d="M552 528h12v12h-12z" fill="#00c89d"/><path d="M564 528h12v12h-12z" fill="#00c89b"/><path d="M576 528h12v12h-12z" fill="#00c89a"/><path d="M588 528h12v12h-12z" fill="#00c898"/><path d="M600 528h12v12h-12z" fill="#00c896"/><path d="M612 528h12v12h-12z" fill="#00c895"/><path d="M624 528h12v12h-12z" fill="#00c893"/><path d="M636 528h12v12h-12z" fill="#00c890"/><path d="M648 528h12v12h-12z" fill="#00c88e"/><path d="M660 528h12v12h-12z" fill="#00c88b"/><path d="M672 528h12v12h-12z" fill="#00c888"/><path d="M684 528h12v12h-12z" fill="#00c885"/><path d="M696 528h12v12h-12z" fill="#00c881"/><path d="M1200 528h12v12h-12z" fill="#c88d00"/><path d="M1212 528h12v12h-12z" fill="#c88b00"/><path d="M1224 528h12v12h-12z" fill="#c88900"/><path d="M1236 528h12v12h-12z" fill="#c88700"/><path d="M1248 528h12v12h-12z" fill="#c88600"/><path d="M1260 528h12v12h-12z" fill="#c88400"/><path d="M1272 528h12v12h-12z" fill="#c88200"/><path d="M1284 528h12v12h-12z" fill="#c88100"/><path d="M1296 528h12v12h-12z" fill="#c87f00"/><path d="M1308 528h12v12h-12z" fill="#c87e00"/><path d="M1320 528h12v12h-12z" fill="#c87d00"/><path d="M1332 528h12v12h-12z" fill="#c87b00"/><path d="M1344 528h12v12h-12z" fill="#c87a00"/><path d="M1356 528h12v12h-12z" fill="#c87900"/><path d="M168 540h12v12h-12z" fill="#00c8b5"/><path d="M180 540h12v12h-12z" fill="#00c8b4"/><path d="M192 540h12v12h-12z" fill="#00c8b4"/><path d="M204 540h12v12h-12z" fill="#00c8b4"/><path d="M216 540h12v12h-12z" fill="#00c8b3"/><path d="M228 540h12v12h-12z" fill="#00c8b3"/><path d="M240 540h12v12h-12z" fill="#00c8b3"/><path d="M252 540h12v12h-12z" fill="#00c8b2"/><path d="M264 540h12v12h-12z" fill="#00c8b2"/><path d="M276 540h12v12h-12z" fill="#00c8b1"/><path d="M288 540h12v12h-12z" fill="#00c8b1"/><path d="M300 540h12v12h-12z" fill="#00c8b0"/><path d="M312 540h12v12h-12z" fill="#00c8b0"/><path d="M324 540h12v12h-12z" fill="#00c8b0"/><path d="M336 540h12v12h-12z" fill="#00c8af"/><path d="M348 540h12v12h-12z" fill="#00c8ae"/><path d="M360 540h12v12h-12z" fill="#00c8ae"/><path d="M372 540h12v12h-12z" fill="#00c8ad"/><path d="M384 540h12v12h-12z" fill="#00c8ad"/><path d="M396 540h12v12h-12z" fill="#00c8ac"/><path d="M408 540h12v12h-12z" fill="#00c8ac"/><path d="M420 540h12v12h-12z" fill="#00c8ab"/><path d="M432 540h12v12h-12z" fill="#00c8aa"/><path d="M444 540h12v12h-12z" fill="#00c8a9"/><path d="M456 540h12v12h-12z" fill="#00c8a9"/><path d="M468 540h12v12h-12z" fill="#00c8a8"/><path d="M480 540h12v12h-12z" fill="#00c8a7"/><path d="M492 540h12v12h-12z" fill="#00c8a6"/><path d="M504 540h12v12h-12z" fill="#00c8a5"/><path d="M516 540h12v12h-12z" fill="#00c8a4"/><path d="M528 540h12v12h-12z" fill="#00c8a3"/><path d="M540 540h12v12h-12z" fill="#00c8a2"/><path d="M552 540h12v12h-12z" fill="#00c8a0"/><path d="M564 540h12v12h-12z" fill="#00c89f"/><path d="M576 540h12v12h-12z" fill="#00c89d"/><path d="M588 540h12v12h-12z" fill="#00c89c"/><path d="M600 540h12v12h-12z" fill="#00c89a"/><path d="M612 540h12v12h-12z" fill="#00c898"/><path d="M624 540h12v12h-12z" fill="#00c896"/><path d="M636 540h12v12h-12z" fill="#00c894"/><path d="M648 540h12v12h-12z" fill="#00c892"/><path d="M660 540h12v12h-12z" fill="#00c88f"/><path d="M672 540h12v12h-12z" fill="#00c88d"/><path d="M684 540h12v12h-12z" fill="#00c889"/><path d="M1236 540h12v12h-12z" fill="#c88100"/><path d="M1248 540h12v12h-12z" fill="#c87f00"/><path d="M1260 540h12v12h-12z" fill="#c87d00"/><path d="M1272 540h12v12h-12z" fill="#c87c00"/><path d="M1284 540h12v12h-12z" fill="#c87a00"/><path d="M1296 540h12v12h-12z" fill="#c87900"/><path d="M1308 540h12v12h-12z" fill="#c87800"/><path d="M1320 540h12v12h-12z" fill="#c87600"/><path d="M1332 540h12v12h-12z" fill="#c87500"/><path d="M1344 540h12v12h-12z" fill="#c87400"/><path d="M1356 540h12v12h-12z" fill="#c87300"/><path d="M1368 540h12v12h-12z" fill="#c87200"/><path d="M1380 540h12v12h-12z" fill="#c87100"/><path d="M1392 540h12v12h-12z" fill="#c87000"/><path d="M180 552h12v12h-12z" fill="#00c8b6"/><path d="M192 552h12v12h-12z" fill="#00c8b6"/><path d="M204 552h12v12h-12z" fill="#00c8b6"/><path d="M216 552h12v12h-12z" fill="#00c8b5"/><path d="M228 552h12v12h-12z" fill="#00c8b5"/><path d="M240 552h12v12h-12z" fill="#00c8b5"/><path d="M252 552h12v12h-12z" fill="#00c8b4"/><path d="M264 552h12v12h-12z" fill="#00c8b4"/><path d="M276 552h12v12h-12z" fill="#00c8b4"/><path d="M288 552h12v12h-12z" fill="#00c8b3"/><path d="M300 552h12v12h-12z" fill="#00c8b3"/><path d="M312 552h12v12h-12z" fill="#00c8b2"/><path d="M324 552h12v12h-12z" fill="#00c8b2"/><path d="M336 552h12v12h-12z" fill="#00c8b2"/><path d="M348 552h12v12h-12z" fill="#00c8b1"/><path d="M360 552h12v12h-12z" fill="#00c8b1"/><path d="M372 552h12v12h-12z" fill="#00c8b0"/><path d="M384 552h12v12h-12z" fill="#00c8b0"/><path d="M396 552h12v12h-12z" fill="#00c8af"/><path d="M408 552h12v12h-12z" fill="#00c8ae"/><path d="M420 552h12v12h-12z" fill="#00c8ae"/><path d="M432 552h12v12h-12z" fill="#00c8ad"/><path d="M444 552h12v12h-12z" fill="#00c8ac"/><path d="M456 552h12v12h-12z" fill="#00c8ac"/><path d="M468 552h12v12h-12z" fill="#00c8ab"/><path d="M480 552h12v12h-12z" fill="#00c8aa"/><path d="M492 552h12v12h-12z" fill="#00c8a9"/><path d="M504 552h12v12h-12z" fill="#00c8a8"/><path d="M516 552h12v12h-12z" fill="#00c8a7"/><path d="M528 552h12v12h-12z" fill="#00c8a6"/><path d="M540 552h12v12h-12z" fill="#00c8a5"/><path d="M552 552h12v12h-12z" fill="#00c8a4"/><path d="M564 552h12v12h-12z" fill="#00c8a3"/><path d="M576 552h12v12h-12z" fill="#00c8a1"/><path d="M588 552h12v12h-12z" fill="#00c8a0"/><path d="M600 552h12v12h-12z" fill="#00c89e"/><path d="M612 552h12v12h-12z" fill="#00c89d"/><path d="M624 552h12v12h-12z" fill="#00c89b"/><path d="M636 552h12v12h-12z" fill="#00c899"/><path d="M648 552h12v12h-12z" fill="#00c896"/><path d="M660 552h12v12h-12z" fill="#00c894"/><path d="M672 552h12v12h-12z" fill="#00c891"/><path d="M1272 552h12v12h-12z" fill="#c87500"/><path d="M1284 552h12v12h-12z" fill="#c87400"/><path d="M1296 552h12v12h-12z" fill="#c87200"/><path d="M1308 552h12v12h-12z" fill="#c87100"/><path d="M1320 552h12v12h-12z" fill="#c87000"/><path d="M1332 552h12v12h-12z" fill="#c86f00"/><path d="M1344 552h12v12h-12z" fill="#c86e00"/><path d="M1356 552h12v12h-12z" fill="#c86c00"/><path d="M1368 552h12v12h-12z" fill="#c86b00"/><path d="M1380 552h12v12h-12z" fill="#c86a00"/><path d="M1392 552h12v12h-12z" fill="#c86900"/><path d="M1404 552h12v12h-12z" fill="#c86800"/><path d="M1416 552h12v12h-12z" fill="#c86700"/><path d="M180 564h12v12h-12z" fill="#00c8b9"/><path d="M192 564h12v12h-12z" fill="#00c8b8"/><path d="M204 564h12v12h-12z" fill="#00c8b8"/><path d="M216 564h12v12h-12z" fill="#00c8b8"/><path d="M228 564h12v12h-12z" fill="#00c8b7"/><path d="M240 564h12v12h-12z" fill="#00c8b7"/><path d="M252 564h12v12h-12z" fill="#00c8b7"/><path d="M264 564h12v12h-12z" fill="#00c8b6"/><path d="M276 564h12v12h-12z" fill="#00c8b6"/><path d="M288 564h12v12h-12z" fill="#00c8b6"/><path d="M300 564h12v12h-12z" fill="#00c8b5"/><path d="M312 564h12v12h-12z" fill="#00c8b5"/><path d="M324 564h12v12h-12z" fill="#00c8b5"/><path d="M336 564h12v12h-12z" fill="#00c8b4"/><path d="M348 564h12v12h-12z" fill="#00c8b4"/><path d="M360 564h12v12h-12z" fill="#00c8b3"/><path d="M372 564h12v12h-12z" fill="#00c8b3"/><path d="M384 564h12v12h-12z" fill="#00c8b2"/><path d="M396 564h12v12h-12z" fill="#00c8b2"/><path d="M408 564h12v12h-12z" fill="#00c8b1"/><path d="M420 564h12v12h-12z" fill="#00c8b1"/><path d="M432 564h12v12h-12z" fill="#00c8b0"/><path d="M444 564h12v12h-12z" fill="#00c8b0"/><path d="M456 564h12v12h-12z" fill="#00c8af"/><path d="M468 564h12v12h-12z" fill="#00c8ae"/><path d="M480 564h12v12h-12z" fill="#00c8ad"/><path d="M492 564h12v12h-12z" fill="#00c8ad"/><path d="M504 564h12v12h-12z" fill="#00c8ac"/><path d="M516 564h12v12h-12z" fill="#00c8ab"/><path d="M528 564h12v12h-12z" fill="#00c8aa"/><path d="M540 564h12v12h-12z" fill="#00c8a9"/><path d="M552 564h12v12h-12z" fill="#00c8a8"/><path d="M564 564h12v12h-12z" fill="#00c8a7"/><path d="M576 564h12v12h-12z" fill="#00c8a5"/><path d="M588 564h12v12h-12z" fill="#00c8a4"/><path d="M600 564h12v12h-12z" fill="#00c8a3"/><path d="M612 564h12v12h-12z" fill="#00c8a1"/><path d="M624 564h12v12h-12z" fill="#00c89f"/><path d="M636 564h12v12h-12z" fill="#00c89d"/><path d="M648 564h12v12h-12z" fill="#00c89b"/><path d="M660 564h12v12h-12z" fill="#00c899"/><path d="M672 564h12v12h-12z" fill="#00c896"/><path d="M1296 564h12v12h-12z" fill="#c86b00"/><path d="M1308 564h12v12h-12z" fill="#c86a00"/><path d="M1320 564h12v12h-12z" fill="#c86900"/><path d="M1332 564h12v12h-12z" fill="#c86800"/><path d="M1344 564h12v12h-12z" fill="#c86600"/><path d="M1356 564h12v12h-12z" fill="#c86500"/><path d="M1368 564h12v12h-12z" fill="#c86400"/><path d="M1380 564h12v12h-12z" fill="#c86300"/><path d="M1392 564h12v12h-12z" fill="#c86200"/><path d="M1404 564h12v12h-12z" fill="#c86200"/><path d="M1416 564h12v12h-12z" fill="#c86100"/><path d="M1428 564h12v12h-12z" fill="#c86000"/><path d="M1440 564h12v12h-12z" fill="#c85f00"/><path d="M1452 564h12v12h-12z" fill="#c85e00"/><path d="M180 576h12v12h-12z" fill="#00c8bb"/><path d="M192 576h12v12h-12z" fill="#00c8bb"/><path d="M204 576h12v12h-12z" fill="#00c8ba"/><path d="M216 576h12v12h-12z" fill="#00c8ba"/><path d="M228 576h12v12h-12z" fill="#00c8ba"/><path d="M240 576h12v12h-12z" fill="#00c8ba"/><path d="M252 576h12v12h-12z" fill="#00c8b9"/><path d="M264 576h12v12h-12z" fill="#00c8b9"/><path d="M276 576h12v12h-12z" fill="#00c8b9"/><path d="M288 576h12v12h-12z" fill="#00c8b8"/><path d="M300 576h12v12h-12z" fill="#00c8b8"/><path d="M312 576h12v12h-12z" fill="#00c8b8"/><path d="M324 576h12v12h-12z" fill="#00c8b7"/><path d="M336 576h12v12h-12z" fill="#00c8b7"/><path d="M348 576h12v12h-12z" fill="#00c8b7"/><path d="M360 576h12v12h-12z" fill="#00c8b6"/><path d="M372 576h12v12h-12z" fill="#00c8b6"/><path d="M384 576h12v12h-12z" fill="#00c8b5"/><path d="M396 576h12v12h-12z" fill="#00c8b5"/><path d="M408 576h12v12h-12z" fill="#00c8b4"/><path d="M420 576h12v12h-12z" fill="#00c8b4"/><path d="M432 576h12v12h-12z" fill="#00c8b3"/><path d="M444 576h12v12h-12z" fill="#00c8b3"/><path d="M456 576h12v12h-12z" fill="#00c8b2"/><path d="M468 576h12v12h-12z" fill="#00c8b2"/><path d="M480 576h12v12h-12z" fill="#00c8b1"/><path d="M492 576h12v12h-12z" fill="#00c8b0"/><path d="M504 576h12v12h-12z" fill="#00c8b0"/><path d="M516 576h12v12h-12z" fill="#00c8af"/><path d="M528 576h12v12h-12z" fill="#00c8ae"/><path d="M540 576h12v12h-12z" fill="#00c8ad"/><path d="M552 576h12v12h-12z" fill="#00c8ac"/><path d="M564 576h12v12h-12z" fill="#00c8ab"/><path d="M576 576h12v12h-12z" fill="#00c8aa"/><path d="M588 576h12v12h-12z" fill="#00c8a9"/><path d="M600 576h12v12h-12z" fill="#00c8a7"/><path d="M612 576h12v12h-12z" fill="#00c8a6"/><path d="M624 576h12v12h-12z" fill="#00c8a4"/><path d="M636 576h12v12h-12z" fill="#00c8a2"/><path d="M648 576h12v12h-12z" fill="#00c8a1"/><path d="M660 576h12v12h-12z" fill="#00c89e"/><path d="M1332 576h12v12h-12z" fill="#c86000"/><path d="M1344 576h12v12h-12z" fill="#c85f00"/><path d="M1356 576h12v12h-12z" fill="#c85e00"/><path d="M1368 576h12v12h-12z" fill="#c85d00"/><path d="M1380 576h12v12h-12z" fill="#c85c00"/><path d="M1392 576h12v12h-12z" fill="#c85b00"/><path d="M1404 576h12v12h-12z" fill="#c85a00"/><path d="M1416 576h12v12h-12z" fill="#c85900"/><path d="M1428 576h12v12h-12z" fill="#c85900"/><path d="M1440 576h12v12h-12z" fill="#c85800"/><path d="M1452 576h12v12h-12z" fill="#c85700"/><path d="M1464 576h12v12h-12z" fill="#c85600"/><path d="M1476 576h12v12h-12z" fill="#c85600"/><path d="M192 588h12v12h-12z" fill="#00c8bd"/><path d="M204 588h12v12h-12z" fill="#00c8bd"/><path d="M216 588h12v12h-12z" fill="#00c8bc"/><path d="M228 588h12v12h-12z" fill="#00c8bc"/><path d="M240 588h12v12h-12z" fill="#00c8bc"/><path d="M252 588h12v12h-12z" fill="#00c8bc"/><path d="M264 588h12v12h-12z" fill="#00c8bc"/><path d="M276 588h12v12h-12z" fill="#00c8bb"/><path d="M288 588h12v12h-12z" fill="#00c8bb"/><path d="M300 588h12v12h-12z" fill="#00c8bb"/><path d="M312 588h12v12h-12z" fill="#00c8bb"/><path d="M324 588h12v12h-12z" fill="#00c8ba"/><path d="M336 588h12v12h-12z" fill="#00c8ba"/><path d="M348 588h12v12h-12z" fill="#00c8ba"/><path d="M360 588h12v12h-12z" fill="#00c8b9"/><path d="M372 588h12v12h-12z" fill="#00c8b9"/><path d="M384 588h12v12h-12z" fill="#00c8b9"/><path d="M396 588h12v12h-12z" fill="#00c8b8"/><path d="M408 588h12v12h-12z" fill="#00c8b8"/><path d="M420 588h12v12h-12z" fill="#00c8b7"/><path d="M432 588h12v12h-12z" fill="#00c8b7"/><path d="M444 588h12v12h-12z" fill="#00c8b6"/><path d="M456 588h12v12h-12z" fill="#00c8b6"/><path d="M468 588h12v12h-12z" fill="#00c8b5"/><path d="M480 588h12v12h-12z" fill="#00c8b5"/><path d="M492 588h12v12h-12z" fill="#00c8b4"/><path d="M504 588h12v12h-12z" fill="#00c8b3"/><path d="M516 588h12v12h-12z" fill="#00c8b3"/><path d="M528 588h12v12h-12z" fill="#00c8b2"/><path d="M540 588h12v12h-12z" fill="#00c8b1"/><path d="M552 588h12v12h-12z" fill="#00c8b0"/><path d="M564 588h12v12h-12z" fill="#00c8b0"/><path d="M576 588h12v12h-12z" fill="#00c8af"/><path d="M588 588h12v12h-12z" fill="#00c8ad"/><path d="M600 588h12v12h-12z" fill="#00c8ac"/><path d="M612 588h12v12h-12z" fill="#00c8ab"/><path d="M624 588h12v12h-12z" fill="#00c8aa"/><path d="M636 588h12v12h-12z" fill="#00c8a8"/><path d="M648 588h12v12h-12z" fill="#00c8a6"/><path d="M660 588h12v12h-12z" fill="#00c8a4"/><path d="M1368 588h12v12h-12z" fill="#c85400"/><path d="M1380 588h12v12h-12z" fill="#c85400"/><path d="M1392 588h12v12h-12z" fill="#c85300"/><path d="M1404 588h12v12h-12z" fill="#c85200"/><path d="M1416 588h12v12h-12z" fill="#c85100"/><path d="M1428 588h12v12h-12z" fill="#c85100"/><path d="M1440 588h12v12h-12z" fill="#c85000"/><path d="M1452 588h12v12h-12z" fill="#c84f00"/><path d="M1464 588h12v12h-12z" fill="#c84e00"/><path d="M1476 588h12v12h-12z" fill="#c84e00"/><path d="M1488 588h12v12h-12z" fill="#c84d00"/><path d="M1500 588h12v12h-12z" fill="#c84c00"/><path d="M1512 588h12v12h-12z" fill="#c84c00"/><path d="M192 600h12v12h-12z" fill="#00c8bf"/><path d="M204 600h12v12h-12z" fill="#00c8bf"/><path d="M216 600h12v12h-12z" fill="#00c8bf"/><path d="M228 600h12v12h-12z" fill="#00c8bf"/><path d="M240 600h12v12h-12z" fill="#00c8bf"/><path d="M252 600h12v12h-12z" fill="#00c8be"/><path d="M264 600h12v12h-12z" fill="#00c8be"/><path d="M276 600h12v12h-12z" fill="#00c8be"/><path d="M288 600h12v12h-12z" fill="#00c8be"/><path d="M300 600h12v12h-12z" fill="#00c8be"/><path d="M312 600h12v12h-12z" fill="#00c8bd"/><path d="M324 600h12v12h-12z" fill="#00c8bd"/><path d="M336 600h12v12h-12z" fill="#00c8bd"/><path d="M348 600h12v12h-12z" fill="#00c8bd"/><path d="M360 600h12v12h-12z" fill="#00c8bc"/><path d="M372 600h12v12h-12z" fill="#00c8bc"/><path d="M384 600h12v12h-12z" fill="#00c8bc"/><path d="M396 600h12v12h-12z" fill="#00c8bc"/><path d="M408 600h12v12h-12z" fill="#00c8bb"/><path d="M420 600h12v12h-12z" fill="#00c8bb"/><path d="M432 600h12v12h-12z" fill="#00c8ba"/><path d="M444 600h12v12h-12z" fill="#00c8ba"/><path d="M456 600h12v12h-12z" fill="#00c8ba"/><path d="M468 600h12v12h-12z" fill="#00c8b9"/><path d="M480 600h12v12h-12z" fill="#00c8b9"/><path d="M492 600h12v12h-12z" fill="#00c8b8"/><path d="M504 600h12v12h-12z" fill="#00c8b8"/><path d="M516 600h12v12h-12z" fill="#00c8b7"/><path d="M528 600h12v12h-12z" fill="#00c8b7"/><path d="M540 600h12v12h-12z" fill="#00c8b6"/><path d="M552 600h12v12h-12z" fill="#00c8b5"/><path d="M564 600h12v12h-12z" fill="#00c8b4"/><path d="M576 600h12v12h-12z" fill="#00c8b4"/><path d="M588 600h12v12h-12z" fill="#00c8b3"/><path d="M600 600h12v12h-12z" fill="#00c8b2"/><path d="M612 600h12v12h-12z" fill="#00c8b1"/><path d="M624 600h12v12h-12z" fill="#00c8b0"/><path d="M636 600h12v12h-12z" fill="#00c8ae"/><path d="M648 600h12v12h-12z" fill="#00c8ad"/><path d="M1404 600h12v12h-12z" fill="#c84900"/><path d="M1416 600h12v12h-12z" fill="#c84800"/><path d="M1428 600h12v12h-12z" fill="#c84700"/><path d="M1440 600h12v12h-12z" fill="#c84700"/><path d="M1452 600h12v12h-12z" fill="#c84600"/><path d="M1464 600h12v12h-12z" fill="#c84500"/><path d="M1476 600h12v12h-12z" fill="#c84500"/><path d="M1488 600h12v12h-12z" fill="#c84400"/><path d="M1500 600h12v12h-12z" fill="#c84400"/><path d="M1512 600h12v12h-12z" fill="#c84300"/><path d="M1524 600h12v12h-12z" fill="#c84300"/><path d="M1536 600h12v12h-12z" fill="#c84200"/><path d="M204 612h12v12h-12z" fill="#00c8c2"/><path d="M216 612h12v12h-12z" fill="#00c8c2"/><path d="M228 612h12v12h-12z" fill="#00c8c1"/><path d="M240 612h12v12h-12z" fill="#00c8c1"/><path d="M252 612h12v12h-12z" fill="#00c8c1"/><path d="M264 612h12v12h-12z" fill="#00c8c1"/><path d="M276 612h12v12h-12z" fill="#00c8c1"/><path d="M288 612h12v12h-12z" fill="#00c8c1"/><path d="M300 612h12v12h-12z" fill="#00c8c1"/><path d="M312 612h12v12h-12z" fill="#00c8c0"/><path d="M324 612h12v12h-12z" fill="#00c8c0"/><path d="M336 612h12v12h-12z" fill="#00c8c0"/><path d="M348 612h12v12h-12z" fill="#00c8c0"/><path d="M360 612h12v12h-12z" fill="#00c8c0"/><path d="M372 612h12v12h-12z" fill="#00c8c0"/><path d="M384 612h12v12h-12z" fill="#00c8bf"/><path d="M396 612h12v12h-12z" fill="#00c8bf"/><path d="M408 612h12v12h-12z" fill="#00c8bf"/><path d="M420 612h12v12h-12z" fill="#00c8bf"/><path d="M432 612h12v12h-12z" fill="#00c8be"/><path d="M444 612h12v12h-12z" fill="#00c8be"/><path d="M456 612h12v12h-12z" fill="#00c8be"/><path d="M468 612h12v12h-12z" fill="#00c8bd"/><path d="M480 612h12v12h-12z" fill="#00c8bd"/><path d="M492 612h12v12h-12z" fill="#00c8bd"/><path d="M504 612h12v12h-12z" fill="#00c8bc"/><path d="M516 612h12v12h-12z" fill="#00c8bc"/><path d="M528 612h12v12h-12z" fill="#00c8bb"/><path d="M540 612h12v12h-12z" fill="#00c8bb"/><path d="M552 612h12v12h-12z" fill="#00c8ba"/><path d="M564 612h12v12h-12z" fill="#00c8ba"/><path d="M576 612h12v12h-12z" fill="#00c8b9"/><path d="M588 612h12v12h-12z" fill="#00c8b9"/><path d="M600 612h12v12h-12z" fill="#00c8b8"/><path d="M612 612h12v12h-12z" fill="#00c8b7"/><path d="M624 612h12v12h-12z" fill="#00c8b6"/><path d="M636 612h12v12h-12z" fill="#00c8b5"/><path d="M648 612h12v12h-12z" fill="#00c8b4"/><path d="M1440 612h12v12h-12z" fill="#c83c00"/><path d="M1452 612h12v12h-12z" fill="#c83b00"/><path d="M1464 612h12v12h-12z" fill="#c83b00"/><path d="M1476 612h12v12h-12z" fill="#c83a00"/><path d="M1488 612h12v12h-12z" fill="#c83a00"/><path d="M1500 612h12v12h-12z" fill="#c83900"/><path d="M1512 612h12v12h-12z" fill="#c83900"/><path d="M1524 612h12v12h-12z" fill="#c83800"/><path d="M1536 612h12v12h-12z" fill="#c83800"/><path d="M1548 612h12v12h-12z" fill="#c83700"/><path d="M1560 612h12v12h-12z" fill="#c83700"/><path d="M1572 612h12v12h-12z" fill="#c83700"/><path d="M204 624h12v12h-12z" fill="#00c8c4"/><path d="M216 624h12v12h-12z" fill="#00c8c4"/><path d="M228 624h12v12h-12z" fill="#00c8c4"/><path d="M240 624h12v12h-12z" fill="#00c8c4"/><path d="M252 624h12v12h-12z" fill="#00c8c4"/><path d="M264 624h12v12h-12z" fill="#00c8c4"/><path d="M276 624h12v12h-12z" fill="#00c8c4"/><path d="M288 624h12v12h-12z" fill="#00c8c4"/><path d="M300 624h12v12h-12z" fill="#00c8c4"/><path d="M312 624h12v12h-12z" fill="#00c8c4"/><path d="M324 624h12v12h-12z" fill="#00c8c4"/><path d="M336 624h12v12h-12z" fill="#00c8c3"/><path d="M348 624h12v12h-12z" fill="#00c8c3"/><path d="M360 624h12v12h-12z" fill="#00c8c3"/><path d="M372 624h12v12h-12z" fill="#00c8c3"/><path d="M384 624h12v12h-12z" fill="#00c8c3"/><path d="M396 624h12v12h-12z" fill="#00c8c3"/><path d="M408 624h12v12h-12z" fill="#00c8c3"/><path d="M420 624h12v12h-12z" fill="#00c8c3"/><path d="M432 624h12v12h-12z" fill="#00c8c2"/><path d="M444 624h12v12h-12z" fill="#00c8c2"/><path d="M456 624h12v12h-12z" fill="#00c8c2"/><path d="M468 624h12v12h-12z" fill="#00c8c2"/><path d="M480 624h12v12h-12z" fill="#00c8c2"/><path d="M492 624h12v12h-12z" fill="#00c8c1"/><path d="M504 624h12v12h-12z" fill="#00c8c1"/><path d="M516 624h12v12h-12z" fill="#00c8c1"/><path d="M528 624h12v12h-12z" fill="#00c8c1"/><path d="M540 624h12v12h-12z" fill="#00c8c0"/><path d="M552 624h12v12h-12z" fill="#00c8c0"/><path d="M564 624h12v12h-12z" fill="#00c8c0"/><path d="M576 624h12v12h-12z" fill="#00c8bf"/><path d="M588 624h12v12h-12z" fill="#00c8bf"/><path d="M600 624h12v12h-12z" fill="#00c8be"/><path d="M612 624h12v12h-12z" fill="#00c8be"/><path d="M624 624h12v12h-12z" fill="#00c8bd"/><path d="M636 624h12v12h-12z" fill="#00c8bd"/><path d="M1476 624h12v12h-12z" fill="#c82c00"/><path d="M1488 624h12v12h-12z" fill="#c82c00"/><path d="M1500 624h12v12h-12z" fill="#c82c00"/><path d="M1512 624h12v12h-12z" fill="#c82b00"/><path d="M1524 624h12v12h-12z" fill="#c82b00"/><path d="M1536 624h12v12h-12z" fill="#c82b00"/><path d="M1548 624h12v12h-12z" fill="#c82a00"/><path d="M1560 624h12v12h-12z" fill="#c82a00"/><path d="M1572 624h12v12h-12z" fill="#c82a00"/><path d="M1584 624h12v12h-12z" fill="#c82900"/><path d="M1596 624h12v12h-12z" fill="#c82900"/><path d="M216 636h12v12h-12z" fill="#00c8c7"/><path d="M228 636h12v12h-12z" fill="#00c8c7"/><path d="M240 636h12v12h-12z" fill="#00c8c7"/><path d="M252 636h12v12h-12z" fill="#00c8c7"/><path d="M264 636h12v12h-12z" fill="#00c8c7"/><path d="M276 636h12v12h-12z" fill="#00c8c7"/><path d="M288 636h12v12h-12z" fill="#00c8c7"/><path d="M300 636h12v12h-12z" fill="#00c8c7"/><path d="M312 636h12v12h-12z" fill="#00c8c7"/><path d="M324 636h12v12h-12z" fill="#00c8c7"/><path d="M336 636h12v12h-12z" fill="#00c8c7"/><path d="M348 636h12v12h-12z" fill="#00c8c7"/><path d="M360 636h12v12h-12z" fill="#00c8c7"/><path d="M372 636h12v12h-12z" fill="#00c8c7"/><path d="M384 636h12v12h-12z" fill="#00c8c7"/><path d="M396 636h12v12h-12z" fill="#00c8c7"/><path d="M408 636h12v12h-12z" fill="#00c8c7"/><path d="M420 636h12v12h-12z" fill="#00c8c7"/><path d="M432 636h12v12h-12z" fill="#00c8c7"/><path d="M444 636h12v12h-12z" fill="#00c8c7"/><path d="M456 636h12v12h-12z" fill="#00c8c7"/><path d="M468 636h12v12h-12z" fill="#00c8c7"/><path d="M480 636h12v12h-12z" fill="#00c8c7"/><path d="M492 636h12v12h-12z" fill="#00c8c6"/><path d="M504 636h12v12h-12z" fill="#00c8c6"/><path d="M516 636h12v12h-12z" fill="#00c8c6"/><path d="M528 636h12v12h-12z" fill="#00c8c6"/><path d="M540 636h12v12h-12z" fill="#00c8c6"/><path d="M552 636h12v12h-12z" fill="#00c8c6"/><path d="M564 636h12v12h-12z" fill="#00c8c6"/><path d="M576 636h12v12h-12z" fill="#00c8c6"/><path d="M588 636h12v12h-12z" fill="#00c8c6"/><path d="M600 636h12v12h-12z" fill="#00c8c6"/><path d="M612 636h12v12h-12z" fill="#00c8c6"/><path d="M624 636h12v12h-12z" fill="#00c8c5"/><path d="M1452 636h12v12h-12z" fill="#c81500"/><path d="M1464 636h12v12h-12z" fill="#c81500"/><path d="M1476 636h12v12h-12z" fill="#c81500"/><path d="M1488 636h12v12h-12z" fill="#c81400"/><path d="M1500 636h12v12h-12z" fill="#c81400"/><path d="M1512 636h12v12h-12z" fill="#c81400"/><path d="M1524 636h12v12h-12z" fill="#c81400"/><path d="M1536 636h12v12h-12z" fill="#c81400"/><path d="M1548 636h12v12h-12z" fill="#c81300"/><path d="M1560 636h12v12h-12z" fill="#c81300"/><path d="M1572 636h12v12h-12z" fill="#c81300"/><path d="M1584 636h12v12h-12z" fill="#c81300"/><path d="M1596 636h12v12h-12z" fill="#c81300"/><path d="M1608 636h12v12h-12z" fill="#c81200"/><path d="M1620 636h12v12h-12z" fill="#c81200"/><path d="M1632 636h12v12h-12z" fill="#c81200"/><path d="M216 648h12v12h-12z" fill="#00c6c8"/><path d="M228 648h12v12h-12z" fill="#00c6c8"/><path d="M240 648h12v12h-12z" fill="#00c6c8"/><path d="M252 648h12v12h-12z" fill="#00c6c8"/><path d="M264 648h12v12h-12z" fill="#00c6c8"/><path d="M276 648h12v12h-12z" fill="#00c6c8"/><path d="M288 648h12v12h-12z" fill="#00c6c8"/><path d="M300 648h12v12h-12z" fill="#00c6c8"/><path d="M312 648h12v12h-12z" fill="#00c6c8"/><path d="M324 648h12v12h-12z" fill="#00c6c8"/><path d="M336 648h12v12h-12z" fill="#00c6c8"/><path d="M348 648h12v12h-12z" fill="#00c6c8"/><path d="M360 648h12v12h-12z" fill="#00c6c8"/><path d="M372 648h12v12h-12z" fill="#00c6c8"/><path d="M384 648h12v12h-12z" fill="#00c5c8"/><path d="M396 648h12v12h-12z" fill="#00c5c8"/><path d="M408 648h12v12h-12z" fill="#00c5c8"/><path d="M420 648h12v12h-12z" fill="#00c5c8"/><path d="M432 648h12v12h-12z" fill="#00c5c8"/><path d="M444 648h12v12h-12z" fill="#00c5c8"/><path d="M456 648h12v12h-12z" fill="#00c5c8"/><path d="M468 648h12v12h-12z" fill="#00c5c8"/><path d="M480 648h12v12h-12z" fill="#00c5c8"/><path d="M492 648h12v12h-12z" fill="#00c4c8"/><path d="M504 648h12v12h-12z" fill="#00c4c8"/><path d="M516 648h12v12h-12z" fill="#00c4c8"/><path d="M528 648h12v12h-12z" fill="#00c4c8"/><path d="M540 648h12v12h-12z" fill="#00c4c8"/><path d="M552 648h12v12h-12z" fill="#00c4c8"/><path d="M564 648h12v12h-12z" fill="#00c3c8"/><path d="M576 648h12v12h-12z" fill="#00c3c8"/><path d="M588 648h12v12h-12z" fill="#00c3c8"/><path d="M600 648h12v12h-12z" fill="#00c3c8"/><path d="M612 648h12v12h-12z" fill="#00c2c8"/><path d="M624 648h12v12h-12z" fill="#00c2c8"/><path d="M1392 648h12v12h-12z" fill="#c80026"/><path d="M1404 648h12v12h-12z" fill="#c80025"/><path d="M1416 648h12v12h-12z" fill="#c80025"/><path d="M1428 648h12v12h-12z" fill="#c80025"/><path d="M1440 648h12v12h-12z" fill="#c80025"/><path d="M1452 648h12v12h-12z" fill="#c80024"/><path d="M1464 648h12v12h-12z" fill="#c80024"/><path d="M1476 648h12v12h-12z" fill="#c80024"/><path d="M1488 648h12v12h-12z" fill="#c80023"/><path d="M1500 648h12v12h-12z" fill="#c80023"/><path d="M1512 648h12v12h-12z" fill="#c80023"/><path d="M1524 648h12v12h-12z" fill="#c80023"/><path d="M1536 648h12v12h-12z" fill="#c80022"/><path d="M1548 648h12v12h-12z" fill="#c80022"/><path d="M1560 648h12v12h-12z" fill="#c80022"/><path d="M1572 648h12v12h-12z" fill="#c80022"/><path d="M1584 648h12v12h-12z" fill="#c80022"/><path d="M1596 648h12v12h-12z" fill="#c80021"/><path d="M1608 648h12v12h-12z" fill="#c80021"/><path d="M1620 648h12v12h-12z" fill="#c80021"/><path d="M1632 648h12v12h-12z" fill="#c80021"/><path d="M1644 648h12v12h-12z" fill="#c80021"/><path d="M1656 648h12v12h-12z" fill="#c80020"/><path d="M228 660h12v12h-12z" fill="#00c3c8"/><path d="M240 660h12v12h-12z" fill="#00c3c8"/><path d="M252 660h12v12h-12z" fill="#00c3c8"/><path d="M264 660h12v12h-12z" fill="#00c3c8"/><path d="M276 660h12v12h-12z" fill="#00c3c8"/><path d="M288 660h12v12h-12z" fill="#00c3c8"/><path d="M300 660h12v12h-12z" fill="#00c2c8"/><path d="M312 660h12v12h-12z" fill="#00c2c8"/><path d="M324 660h12v12h-12z" fill="#00c2c8"/><path d="M336 660h12v12h-12z" fill="#00c2c8"/><path d="M348 660h12v12h-12z" fill="#00c2c8"/><path d="M360 660h12v12h-12z" fill="#00c2c8"/><path d="M372 660h12v12h-12z" fill="#00c1c8"/><path d="M384 660h12v12h-12z" fill="#00c1c8"/><path d="M396 660h12v12h-12z" fill="#00c1c8"/><path d="M408 660h12v12h-12z" fill="#00c1c8"/><path d="M420 660h12v12h-12z" fill="#00c1c8"/><path d="M432 660h12v12h-12z" fill="#00c0c8"/><path d="M444 660h12v12h-12z" fill="#00c0c8"/><path d="M456 660h12v12h-12z" fill="#00c0c8"/><path d="M468 660h12v12h-12z" fill="#00c0c8"/><path d="M480 660h12v12h-12z" fill="#00bfc8"/><path d="M492 660h12v12h-12z" fill="#00bfc8"/><path d="M504 660h12v12h-12z" fill="#00bfc8"/><path d="M516 660h12v12h-12z" fill="#00bec8"/><path d="M528 660h12v12h-12z" fill="#00bec8"/><path d="M540 660h12v12h-12z" fill="#00bdc8"/><path d="M552 660h12v12h-12z" fill="#00bdc8"/><path d="M564 660h12v12h-12z" fill="#00bcc8"/><path d="M576 660h12v12h-12z" fill="#00bcc8"/><path d="M588 660h12v12h-12z" fill="#00bbc8"/><path d="M600 660h12v12h-12z" fill="#00bac8"/><path d="M612 660h12v12h-12z" fill="#00b9c8"/><path d="M1344 660h12v12h-12z" fill="#c80039"/><path d="M1356 660h12v12h-12z" fill="#c80038"/><path d="M1368 660h12v12h-12z" fill="#c80038"/><path d="M1380 660h12v12h-12z" fill="#c80037"/><path d="M1392 660h12v12h-12z" fill="#c80037"/><path d="M1404 660h12v12h-12z" fill="#c80036"/><path d="M1416 660h12v12h-12z" fill="#c80036"/><path d="M1428 660h12v12h-12z" fill="#c80035"/><path d="M1440 660h12v12h-12z" fill="#c80035"/><path d="M1452 660h12v12h-12z" fill="#c80034"/><path d="M1464 660h12v12h-12z" fill="#c80034"/><path d="M1476 660h12v12h-12z" fill="#c80033"/><path d="M1488 660h12v12h-12z" fill="#c80033"/><path d="M1500 660h12v12h-12z" fill="#c80033"/><path d="M1512 660h12v12h-12z" fill="#c80032"/><path d="M1524 660h12v12h-12z" fill="#c80032"/><path d="M1536 660h12v12h-12z" fill="#c80032"/><path d="M1548 660h12v12h-12z" fill="#c80031"/><path d="M1560 660h12v12h-12z" fill="#c80031"/><path d="M1572 660h12v12h-12z" fill="#c80031"/><path d="M1584 660h12v12h-12z" fill="#c80030"/><path d="M1596 660h12v12h-12z" fill="#c80030"/><path d="M1608 660h12v12h-12z" fill="#c80030"/><path d="M1620 660h12v12h-12z" fill="#c8002f"/><path d="M1632 660h12v12h-12z" fill="#c8002f"/><path d="M1644 660h12v12h-12z" fill="#c8002f"/><path d="M1656 660h12v12h-12z" fill="#c8002f"/><path d="M1668 660h12v12h-12z" fill="#c8002e"/><path d="M1680 660h12v12h-12z" fill="#c8002e"/><path d="M1692 660h12v12h-12z" fill="#c8002e"/><path d="M228 672h12v12h-12z" fill="#00c0c8"/><path d="M240 672h12v12h-12z" fill="#00c0c8"/><path d="M252 672h12v12h-12z" fill="#00c0c8"/><path d="M264 672h12v12h-12z" fill="#00c0c8"/><path d="M276 672h12v12h-12z" fill="#00bfc8"/><path d="M288 672h12v12h-12z" fill="#00bfc8"/><path d="M300 672h12v12h-12z" fill="#00bfc8"/><path d="M312 672h12v12h-12z" fill="#00bfc8"/><path d="M324 672h12v12h-12z" fill="#00bec8"/><path d="M336 672h12v12h-12z" fill="#00bec8"/><path d="M348 672h12v12h-12z" fill="#00bec8"/><path d="M360 672h12v12h-12z" fill="#00bec8"/><path d="M372 672h12v12h-12z" fill="#00bdc8"/><path d="M384 672h12v12h-12z" fill="#00bdc8"/><path d="M396 672h12v12h-12z" fill="#00bdc8"/><path d="M408 672h12v12h-12z" fill="#00bcc8"/><path d="M420 672h12v12h-12z" fill="#00bcc8"/><path d="M432 672h12v12h-12z" fill="#00bcc8"/><path d="M444 672h12v12h-12z" fill="#00bbc8"/><path d="M456 672h12v12h-12z" fill="#00bbc8"/><path d="M468 672h12v12h-12z" fill="#00bac8"/><path d="M480 672h12v12h-12z" fill="#00bac8"/><path d="M492 672h12v12h-12z" fill="#00b9c8"/><path d="M504 672h12v12h-12z" fill="#00b9c8"/><path d="M516 672h12v12h-12z" fill="#00b8c8"/><path d="M528 672h12v12h-12z" fill="#00b7c8"/><path d="M540 672h12v12h-12z" fill="#00b7c8"/><path d="M552 672h12v12h-12z" fill="#00b6c8"/><path d="M564 672h12v12h-12z" fill="#00b5c8"/><path d="M576 672h12v12h-12z" fill="#00b4c8"/><path d="M588 672h12v12h-12z" fill="#00b3c8"/><path d="M600 672h12v12h-12z" fill="#00b1c8"/><path d="M612 672h12v12h-12z" fill="#00b0c8"/><path d="M1284 672h12v12h-12z" fill="#c80048"/><path d="M1296 672h12v12h-12z" fill="#c80047"/><path d="M1308 672h12v12h-12z" fill="#c80046"/><path d="M1320 672h12v12h-12z" fill="#c80046"/><path d="M1332 672h12v12h-12z" fill="#c80045"/><path d="M1344 672h12v12h-12z" fill="#c80044"/><path d="M1356 672h12v12h-12z" fill="#c80044"/><path d="M1368 672h12v12h-12z" fill="#c80043"/><path d="M1380 672h12v12h-12z" fill="#c80043"/><path d="M1392 672h12v12h-12z" fill="#c80042"/><path d="M1404 672h12v12h-12z" fill="#c80041"/><path d="M1416 672h12v12h-12z" fill="#c80041"/><path d="M1428 672h12v12h-12z" fill="#c80040"/><path d="M1440 672h12v12h-12z" fill="#c80040"/><path d="M1452 672h12v12h-12z" fill="#c8003f"/><path d="M1464 672h12v12h-12z" fill="#c8003f"/><path d="M1476 672h12v12h-12z" fill="#c8003e"/><path d="M1488 672h12v12h-12z" fill="#c8003e"/><path d="M1500 672h12v12h-12z" fill="#c8003d"/><path d="M1512 672h12v12h-12z" fill="#c8003d"/><path d="M1524 672h12v12h-12z" fill="#c8003d"/><path d="M1536 672h12v12h-12z" fill="#c8003c"/><path d="M1548 672h12v12h-12z" fill="#c8003c"/><path d="M1560 672h12v12h-12z" fill="#c8003b"/><path d="M1572 672h12v12h-12z" fill="#c8003b"/><path d="M1584 672h12v12h-12z" fill="#c8003b"/><path d="M1596 672h12v12h-12z" fill="#c8003a"/><path d="M1608 672h12v12h-12z" fill="#c8003a"/><path d="M1620 672h12v12h-12z" fill="#c80039"/><path d="M1632 672h12v12h-12z" fill="#c80039"/><path d="M1644 672h12v12h-12z" fill="#c80039"/><path d="M1656 672h12v12h-12z" fill="#c80038"/><path d="M1668 672h12v12h-12z" fill="#c80038"/><path d="M1680 672h12v12h-12z" fill="#c80038"/><path d="M1692 672h12v12h-12z" fill="#c80037"/><path d="M1704 672h12v12h-12z" fill="#c80037"/><path d="M240 684h12v12h-12z" fill="#00bdc8"/><path d="M252 684h12v12h-12z" fill="#00bcc8"/><path d="M264 684h12v12h-12z" fill="#00bcc8"/><path d="M276 684h12v12h-12z" fill="#00bcc8"/><path d="M288 684h12v12h-12z" fill="#00bcc8"/><path d="M300 684h12v12h-12z" fill="#00bbc8"/><path d="M312 684h12v12h-12z" fill="#00bbc8"/><path d="M324 684h12v12h-12z" fill="#00bbc8"/><path d="M336 684h12v12h-12z" fill="#00bac8"/><path d="M348 684h12v12h-12z" fill="#00bac8"/><path d="M360 684h12v12h-12z" fill="#00bac8"/><path d="M372 684h12v12h-12z" fill="#00b9c8"/><path d="M384 684h12v12h-12z" fill="#00b9c8"/><path d="M396 684h12v12h-12z" fill="#00b8c8"/><path d="M408 684h12v12h-12z" fill="#00b8c8"/><path d="M420 684h12v12h-12z" fill="#00b7c8"/><path d="M432 684h12v12h-12z" fill="#00b7c8"/><path d="M444 684h12v12h-12z" fill="#00b6c8"/><path d="M456 684h12v12h-12z" fill="#00b6c8"/><path d="M468 684h12v12h-12z" fill="#00b5c8"/><path d="M480 684h12v12h-12z" fill="#00b4c8"/><path d="M492 684h12v12h-12z" fill="#00b3c8"/><path d="M504 684h12v12h-12z" fill="#00b3c8"/><path d="M516 684h12v12h-12z" fill="#00b2c8"/><path d="M528 684h12v12h-12z" fill="#00b1c8"/><path d="M540 684h12v12h-12z" fill="#00b0c8"/><path d="M552 684h12v12h-12z" fill="#00aec8"/><path d="M564 684h12v12h-12z" fill="#00adc8"/><path d="M576 684h12v12h-12z" fill="#00acc8"/><path d="M588 684h12v12h-12z" fill="#00aac8"/><path d="M600 684h12v12h-12z" fill="#00a8c8"/><path d="M1224 684h12v12h-12z" fill="#c80056"/><path d="M1236 684h12v12h-12z" fill="#c80055"/><path d="M1248 684h12v12h-12z" fill="#c80054"/><path d="M1260 684h12v12h-12z" fill="#c80053"/><path d="M1272 684h12v12h-12z" fill="#c80052"/><path d="M1284 684h12v12h-12z" fill="#c80051"/><path d="M1296 684h12v12h-12z" fill="#c80051"/><path d="M1308 684h12v12h-12z" fill="#c80050"/><path d="M1320 684h12v12h-12z" fill="#c8004f"/><path d="M1332 684h12v12h-12z" fill="#c8004e"/><path d="M1344 684h12v12h-12z" fill="#c8004e"/><path d="M1356 684h12v12h-12z" fill="#c8004d"/><path d="M1368 684h12v12h-12z" fill="#c8004c"/><path d="M1380 684h12v12h-12z" fill="#c8004c"/><path d="M1392 684h12v12h-12z" fill="#c8004b"/><path d="M1404 684h12v12h-12z" fill="#c8004a"/><path d="M1416 684h12v12h-12z" fill="#c8004a"/><path d="M1428 684h12v12h-12z" fill="#c80049"/><path d="M1440 684h12v12h-12z" fill="#c80049"/><path d="M1452 684h12v12h-12z" fill="#c80048"/><path d="M1464 684h12v12h-12z" fill="#c80047"/><path d="M1476 684h12v12h-12z" fill="#c80047"/><path d="M1488 684h12v12h-12z" fill="#c80046"/><path d="M1500 684h12v12h-12z" fill="#c80046"/><path d="M1512 684h12v12h-12z" fill="#c80045"/><path d="M1524 684h12v12h-12z" fill="#c80045"/><path d="M1536 684h12v12h-12z" fill="#c80044"/><path d="M1548 684h12v12h-12z" fill="#c80044"/><path d="M1560 684h12v12h-12z" fill="#c80043"/><path d="M1572 684h12v12h-12z" fill="#c80043"/><path d="M1584 684h12v12h-12z" fill="#c80043"/><path d="M1596 684h12v12h-12z" fill="#c80042"/><path d="M1608 684h12v12h-12z" fill="#c80042"/><path d="M1620 684h12v12h-12z" fill="#c80041"/><path d="M1632 684h12v12h-12z" fill="#c80041"/><path d="M1644 684h12v12h-12z" fill="#c80041"/><path d="M1656 684h12v12h-12z" fill="#c80040"/><path d="M1668 684h12v12h-12z" fill="#c80040"/><path d="M1680 684h12v12h-12z" fill="#c8003f"/><path d="M1692 684h12v12h-12z" fill="#c8003f"/><path d="M1704 684h12v12h-12z" fill="#c8003f"/><path d="M252 696h12v12h-12z" fill="#00b9c8"/><path d="M264 696h12v12h-12z" fill="#00b9c8"/><path d="M276 696h12v12h-12z" fill="#00b8c8"/><path d="M288 696h12v12h-12z" fill="#00b8c8"/><path d="M300 696h12v12h-12z" fill="#00b8c8"/><path d="M312 696h12v12h-12z" fill="#00b7c8"/><path d="M324 696h12v12h-12z" fill="#00b7c8"/><path d="M336 696h12v12h-12z" fill="#00b6c8"/><path d="M348 696h12v12h-12z" fill="#00b6c8"/><path d="M360 696h12v12h-12z" fill="#00b5c8"/><path d="M372 696h12v12h-12z" fill="#00b5c8"/><path d="M384 696h12v12h-12z" fill="#00b4c8"/><path d="M396 696h12v12h-12z" fill="#00b4c8"/><path d="M408 696h12v12h-12z" fill="#00b3c8"/><path d="M420 696h12v12h-12z" fill="#00b2c8"/><path d="M432 696h12v12h-12z" fill="#00b2c8"/><path d="M444 696h12v12h-12z" fill="#00b1c8"/><path d="M456 696h12v12h-12z" fill="#00b0c8"/><path d="M468 696h12v12h-12z" fill="#00afc8"/><path d="M480 696h12v12h-12z" fill="#00aec8"/><path d="M492 696h12v12h-12z" fill="#00adc8"/><path d="M504 696h12v12h-12z" fill="#00acc8"/><path d="M516 696h12v12h-12z" fill="#00abc8"/><path d="M528 696h12v12h-12z" fill="#00aac8"/><path d="M540 696h12v12h-12z" fill="#00a8c8"/><path d="M552 696h12v12h-12z" fill="#00a7c8"/><path d="M564 696h12v12h-12z" fill="#00a5c8"/><path d="M576 696h12v12h-12z" fill="#00a3c8"/><path d="M588 696h12v12h-12z" fill="#00a1c8"/><path d="M1176 696h12v12h-12z" fill="#c80063"/><path d="M1188 696h12v12h-12z" fill="#c80061"/><path d="M1200 696h12v12h-12z" fill="#c80060"/><path d="M1212 696h12v12h-12z" fill="#c8005f"/><path d="M1224 696h12v12h-12z" fill="#c8005e"/><path d="M1236 696h12v12h-12z" fill="#c8005d"/><path d="M1248 696h12v12h-12z" fill="#c8005c"/><path d="M1260 696h12v12h-12z" fill="#c8005b"/><path d="M1272 696h12v12h-12z" fill="#c8005a"/><path d="M1284 696h12v12h-12z" fill="#c80059"/><path d="M1296 696h12v12h-12z" fill="#c80058"/><path d="M1308 696h12v12h-12z" fill="#c80058"/><path d="M1320 696h12v12h-12z" fill="#c80057"/><path d="M1332 696h12v12h-12z" fill="#c80056"/><path d="M1344 696h12v12h-12z" fill="#c80055"/><path d="M1356 696h12v12h-12z" fill="#c80054"/><path d="M1368 696h12v12h-12z" fill="#c80054"/><path d="M1380 696h12v12h-12z" fill="#c80053"/><path d="M1392 696h12v12h-12z" fill="#c80052"/><path d="M1404 696h12v12h-12z" fill="#c80052"/><path d="M1416 696h12v12h-12z" fill="#c80051"/><path d="M1428 696h12v12h-12z" fill="#c80050"/><path d="M1440 696h12v12h-12z" fill="#c80050"/><path d="M1452 696h12v12h-12z" fill="#c8004f"/><path d="M1464 696h12v12h-12z" fill="#c8004f"/><path d="M1476 696h12v12h-12z" fill="#c8004e"/><path d="M1488 696h12v12h-12z" fill="#c8004d"/><path d="M1500 696h12v12h-12z" fill="#c8004d"/><path d="M1512 696h12v12h-12z" fill="#c8004c"/><path d="M1524 696h12v12h-12z" fill="#c8004c"/><path d="M1536 696h12v12h-12z" fill="#c8004b"/><path d="M1548 696h12v12h-12z" fill="#c8004b"/><path d="M1560 696h12v12h-12z" fill="#c8004a"/><path d="M1572 696h12v12h-12z" fill="#c8004a"/><path d="M1584 696h12v12h-12z" fill="#c80049"/><path d="M1596 696h12v12h-12z" fill="#c80049"/><path d="M1608 696h12v12h-12z" fill="#c80048"/><path d="M1620 696h12v12h-12z" fill="#c80048"/><path d="M1632 696h12v12h-12z" fill="#c80048"/><path d="M1644 696h12v12h-12z" fill="#c80047"/><path d="M1656 696h12v12h-12z" fill="#c80047"/><path d="M1668 696h12v12h-12z" fill="#c80046"/><path d="M1680 696h12v12h-12z" fill="#c80046"/><path d="M1692 696h12v12h-12z" fill="#c80046"/><path d="M1704 696h12v12h-12z" fill="#c80045"/><path d="M252 708h12v12h-12z" fill="#00b6c8"/><path d="M264 708h12v12h-12z" fill="#00b5c8"/><path d="M276 708h12v12h-12z" fill="#00b5c8"/><path d="M288 708h12v12h-12z" fill="#00b4c8"/><path d="M300 708h12v12h-12z" fill="#00b4c8"/><path d="M312 708h12v12h-12z" fill="#00b3c8"/><path d="M324 708h12v12h-12z" fill="#00b3c8"/><path d="M336 708h12v12h-12z" fill="#00b2c8"/><path d="M348 708h12v12h-12z" fill="#00b2c8"/><path d="M360 708h12v12h-12z" fill="#00b1c8"/><path d="M372 708h12v12h-12z" fill="#00b0c8"/><path d="M384 708h12v12h-12z" fill="#00b0c8"/><path d="M396 708h12v12h-12z" fill="#00afc8"/><path d="M408 708h12v12h-12z" fill="#00aec8"/><path d="M420 708h12v12h-12z" fill="#00adc8"/><path d="M432 708h12v12h-12z" fill="#00adc8"/><path d="M444 708h12v12h-12z" fill="#00acc8"/><path d="M456 708h12v12h-12z" fill="#00abc8"/><path d="M468 708h12v12h-12z" fill="#00a9c8"/><path d="M480 708h12v12h-12z" fill="#00a8c8"/><path d="M492 708h12v12h-12z" fill="#00a7c8"/><path d="M504 708h12v12h-12z" fill="#00a6c8"/><path d="M516 708h12v12h-12z" fill="#00a4c8"/><path d="M528 708h12v12h-12z" fill="#00a2c8"/><path d="M540 708h12v12h-12z" fill="#00a1c8"/><path d="M552 708h12v12h-12z" fill="#009fc8"/><path d="M564 708h12v12h-12z" fill="#009cc8"/><path d="M576 708h12v12h-12z" fill="#009ac8"/><path d="M588 708h12v12h-12z" fill="#0097c8"/><path d="M1116 708h12v12h-12z" fill="#c80070"/><path d="M1128 708h12v12h-12z" fill="#c8006f"/><path d="M1140 708h12v12h-12z" fill="#c8006d"/><path d="M1152 708h12v12h-12z" fill="#c8006c"/><path d="M1164 708h12v12h-12z" fill="#c8006b"/><path d="M1176 708h12v12h-12z" fill="#c8006a"/><path d="M1188 708h12v12h-12z" fill="#c80068"/><path d="M1200 708h12v12h-12z" fill="#c80067"/><path d="M1212 708h12v12h-12z" fill="#c80066"/><path d="M1224 708h12v12h-12z" fill="#c80065"/><path d="M1236 708h12v12h-12z" fill="#c80064"/><path d="M1248 708h12v12h-12z" fill="#c80063"/><path d="M1260 708h12v12h-12z" fill="#c80062"/><path d="M1272 708h12v12h-12z" fill="#c80061"/><path d="M1284 708h12v12h-12z" fill="#c80060"/><path d="M1296 708h12v12h-12z" fill="#c8005f"/><path d="M1308 708h12v12h-12z" fill="#c8005e"/><path d="M1320 708h12v12h-12z" fill="#c8005d"/><path d="M1332 708h12v12h-12z" fill="#c8005c"/><path d="M1344 708h12v12h-12z" fill="#c8005c"/><path d="M1356 708h12v12h-12z" fill="#c8005b"/><path d="M1368 708h12v12h-12z" fill="#c8005a"/><path d="M1380 708h12v12h-12z" fill="#c80059"/><path d="M1392 708h12v12h-12z" fill="#c80059"/><path d="M1404 708h12v12h-12z" fill="#c80058"/><path d="M1416 708h12v12h-12z" fill="#c80057"/><path d="M1428 708h12v12h-12z" fill="#c80057"/><path d="M1440 708h12v12h-12z" fill="#c80056"/><path d="M1452 708h12v12h-12z" fill="#c80055"/><path d="M1464 708h12v12h-12z" fill="#c80055"/><path d="M1476 708h12v12h-12z" fill="#c80054"/><path d="M1488 708h12v12h-12z" fill="#c80054"/><path d="M1500 708h12v12h-12z" fill="#c80053"/><path d="M1512 708h12v12h-12z" fill="#c80052"/><path d="M1524 708h12v12h-12z" fill="#c80052"/><path d="M1536 708h12v12h-12z" fill="#c80051"/><path d="M1548 708h12v12h-12z" fill="#c80051"/><path d="M1560 708h12v12h-12z" fill="#c80050"/><path d="M1572 708h12v12h-12z" fill="#c80050"/><path d="M1584 708h12v12h-12z" fill="#c8004f"/><path d="M1596 708h12v12h-12z" fill="#c8004f"/><path d="M1608 708h12v12h-12z" fill="#c8004e"/><path d="M1620 708h12v12h-12z" fill="#c8004e"/><path d="M1632 708h12v12h-12z" fill="#c8004d"/><path d="M1644 708h12v12h-12z" fill="#c8004d"/><path d="M1656 708h12v12h-12z" fill="#c8004c"/><path d="M1668 708h12v12h-12z" fill="#c8004c"/><path d="M1680 708h12v12h-12z" fill="#c8004c"/><path d="M264 720h12v12h-12z" fill="#00b2c8"/><path d="M276 720h12v12h-12z" fill="#00b1c8"/><path d="M288 720h12v12h-12z" fill="#00b1c8"/><path d="M300 720h12v12h-12z" fill="#00b0c8"/><path d="M312 720h12v12h-12z" fill="#00b0c8"/><path d="M324 720h12v12h-12z" fill="#00afc8"/><path d="M336 720h12v12h-12z" fill="#00aec8"/><path d="M348 720h12v12h-12z" fill="#00aec8"/><path d="M360 720h12v12h-12z" fill="#00adc8"/><path d="M372 720h12v12h-12z" fill="#00acc8"/><path d="M384 720h12v12h-12z" fill="#00abc8"/><path d="M396 720h12v12h-12z" fill="#00aac8"/><path d="M408 720h12v12h-12z" fill="#00a9c8"/><path d="M420 720h12v12h-12z" fill="#00a8c8"/><path d="M432 720h12v12h-12z" fill="#00a7c8"/><path d="M444 720h12v12h-12z" fill="#00a6c8"/><path d="M456 720h12v12h-12z" fill="#00a5c8"/><path d="M468 720h12v12h-12z" fill="#00a3c8"/><path d="M480 720h12v12h-12z" fill="#00a2c8"/><path d="M492 720h12v12h-12z" fill="#00a0c8"/><path d="M504 720h12v12h-12z" fill="#009fc8"/><path d="M516 720h12v12h-12z" fill="#009dc8"/><path d="M528 720h12v12h-12z" fill="#009bc8"/><path d="M540 720h12v12h-12z" fill="#0099c8"/><path d="M552 720h12v12h-12z" fill="#0096c8"/><path d="M564 720h12v12h-12z" fill="#0093c8"/><path d="M576 720h12v12h-12z" fill="#0090c8"/><path d="M1056 720h12v12h-12z" fill="#c8007f"/><path d="M1068 720h12v12h-12z" fill="#c8007d"/><path d="M1080 720h12v12h-12z" fill="#c8007b"/><path d="M1092 720h12v12h-12z" fill="#c8007a"/><path d="M1104 720h12v12h-12z" fill="#c80078"/><path d="M1116 720h12v12h-12z" fill="#c80077"/><path d="M1128 720h12v12h-12z" fill="#c80075"/><path d="M1140 720h12v12h-12z" fill="#c80074"/><path d="M1152 720h12v12h-12z" fill="#c80072"/><path d="M1164 720h12v12h-12z" fill="#c80071"/><path d="M1176 720h12v12h-12z" fill="#c80070"/><path d="M1188 720h12v12h-12z" fill="#c8006e"/><path d="M1200 720h12v12h-12z" fill="#c8006d"/><path d="M1212 720h12v12h-12z" fill="#c8006c"/><path d="M1224 720h12v12h-12z" fill="#c8006b"/><path d="M1236 720h12v12h-12z" fill="#c8006a"/><path d="M1248 720h12v12h-12z" fill="#c80069"/><path d="M1260 720h12v12h-12z" fill="#c80068"/><path d="M1272 720h12v12h-12z" fill="#c80067"/><path d="M1284 720h12v12h-12z" fill="#c80066"/><path d="M1296 720h12v12h-12z" fill="#c80065"/><path d="M1308 720h12v12h-12z" fill="#c80064"/><path d="M1320 720h12v12h-12z" fill="#c80063"/><path d="M1332 720h12v12h-12z" fill="#c80062"/><path d="M1344 720h12v12h-12z" fill="#c80061"/><path d="M1356 720h12v12h-12z" fill="#c80061"/><path d="M1368 720h12v12h-12z" fill="#c80060"/><path d="M1380 720h12v12h-12z" fill="#c8005f"/><path d="M1392 720h12v12h-12z" fill="#c8005e"/><path d="M1404 720h12v12h-12z" fill="#c8005d"/><path d="M1416 720h12v12h-12z" fill="#c8005d"/><path d="M1428 720h12v12h-12z" fill="#c8005c"/><path d="M1440 720h12v12h-12z" fill="#c8005b"/><path d="M1452 720h12v12h-12z" fill="#c8005b"/><path d="M1464 720h12v12h-12z" fill="#c8005a"/><path d="M1476 720h12v12h-12z" fill="#c80059"/><path d="M1488 720h12v12h-12z" fill="#c80059"/><path d="M1500 720h12v12h-12z" fill="#c80058"/><path d="M1512 720h12v12h-12z" fill="#c80058"/><path d="M1524 720h12v12h-12z" fill="#c80057"/><path d="M1536 720h12v12h-12z" fill="#c80057"/><path d="M1548 720h12v12h-12z" fill="#c80056"/><path d="M1560 720h12v12h-12z" fill="#c80055"/><path d="M1572 720h12v12h-12z" fill="#c80055"/><path d="M1584 720h12v12h-12z" fill="#c80054"/><path d="M1596 720h12v12h-12z" fill="#c80054"/><path d="M1608 720h12v12h-12z" fill="#c80053"/><path d="M276 732h12v12h-12z" fill="#00aec8"/><path d="M288 732h12v12h-12z" fill="#00adc8"/><path d="M300 732h12v12h-12z" fill="#00acc8"/><path d="M312 732h12v12h-12z" fill="#00acc8"/><path d="M324 732h12v12h-12z" fill="#00abc8"/><path d="M336 732h12v12h-12z" fill="#00aac8"/><path d="M348 732h12v12h-12z" fill="#00a9c8"/><path d="M360 732h12v12h-12z" fill="#00a8c8"/><path d="M372 732h12v12h-12z" fill="#00a7c8"/><path d="M384 732h12v12h-12z" fill="#00a6c8"/><path d="M396 732h12v12h-12z" fill="#00a5c8"/><path d="M408 732h12v12h-12z" fill="#00a4c8"/><path d="M420 732h12v12h-12z" fill="#00a3c8"/><path d="M432 732h12v12h-12z" fill="#00a2c8"/><path d="M444 732h12v12h-12z" fill="#00a0c8"/><path d="M456 732h12v12h-12z" fill="#009fc8"/><path d="M468 732h12v12h-12z" fill="#009dc8"/><path d="M480 732h12v12h-12z" fill="#009cc8"/><path d="M492 732h12v12h-12z" fill="#009ac8"/><path d="M504 732h12v12h-12z" fill="#0098c8"/><path d="M516 732h12v12h-12z" fill="#0095c8"/><path d="M528 732h12v12h-12z" fill="#0093c8"/><path d="M540 732h12v12h-12z" fill="#0090c8"/><path d="M552 732h12v12h-12z" fill="#008dc8"/><path d="M564 732h12v12h-12z" fill="#008ac8"/><path d="M576 732h12v12h-12z" fill="#0086c8"/><path d="M1008 732h12v12h-12z" fill="#c8008d"/><path d="M1020 732h12v12h-12z" fill="#c8008b"/><path d="M1032 732h12v12h-12z" fill="#c80088"/><path d="M1044 732h12v12h-12z" fill="#c80086"/><path d="M1056 732h12v12h-12z" fill="#c80084"/><path d="M1068 732h12v12h-12z" fill="#c80083"/><path d="M1080 732h12v12h-12z" fill="#c80081"/><path d="M1092 732h12v12h-12z" fill="#c8007f"/><path d="M1104 732h12v12h-12z" fill="#c8007d"/><path d="M1116 732h12v12h-12z" fill="#c8007c"/><path d="M1128 732h12v12h-12z" fill="#c8007a"/><path d="M1140 732h12v12h-12z" fill="#c80079"/><path d="M1152 732h12v12h-12z" fill="#c80077"/><path d="M1164 732h12v12h-12z" fill="#c80076"/><path d="M1176 732h12v12h-12z" fill="#c80075"/><path d="M1188 732h12v12h-12z" fill="#c80073"/><path d="M1200 732h12v12h-12z" fill="#c80072"/><path d="M1212 732h12v12h-12z" fill="#c80071"/><path d="M1224 732h12v12h-12z" fill="#c80070"/><path d="M1236 732h12v12h-12z" fill="#c8006f"/><path d="M1248 732h12v12h-12z" fill="#c8006e"/><path d="M1260 732h12v12h-12z" fill="#c8006d"/><path d="M1272 732h12v12h-12z" fill="#c8006c"/><path d="M1284 732h12v12h-12z" fill="#c8006b"/><path d="M1296 732h12v12h-12z" fill="#c8006a"/><path d="M1308 732h12v12h-12z" fill="#c80069"/><path d="M1320 732h12v12h-12z" fill="#c80068"/><path d="M1332 732h12v12h-12z" fill="#c80067"/><path d="M1344 732h12v12h-12z" fill="#c80066"/><path d="M1356 732h12v12h-12z" fill="#c80065"/><path d="M1368 732h12v12h-12z" fill="#c80065"/><path d="M1380 732h12v12h-12z" fill="#c80064"/><path d="M1392 732h12v12h-12z" fill="#c80063"/><path d="M1404 732h12v12h-12z" fill="#c80062"/><path d="M1416 732h12v12h-12z" fill="#c80062"/><path d="M1428 732h12v12h-12z" fill="#c80061"/><path d="M1440 732h12v12h-12z" fill="#c80060"/><path d="M1452 732h12v12h-12z" fill="#c80060"/><path d="M1464 732h12v12h-12z" fill="#c8005f"/><path d="M1476 732h12v12h-12z" fill="#c8005e"/><path d="M1488 732h12v12h-12z" fill="#c8005e"/><path d="M1500 732h12v12h-12z" fill="#c8005d"/><path d="M1512 732h12v12h-12z" fill="#c8005c"/><path d="M1524 732h12v12h-12z" fill="#c8005c"/><path d="M1536 732h12v12h-12z" fill="#c8005b"/><path d="M1548 732h12v12h-12z" fill="#c8005b"/><path d="M288 744h12v12h-12z" fill="#00a9c8"/><path d="M300 744h12v12h-12z" fill="#00a8c8"/><path d="M312 744h12v12h-12z" fill="#00a8c8"/><path d="M324 744h12v12h-12z" fill="#00a7c8"/><path d="M336 744h12v12h-12z" fill="#00a6c8"/><path d="M348 744h12v12h-12z" fill="#00a5c8"/><path d="M360 744h12v12h-12z" fill="#00a4c8"/><path d="M372 744h12v12h-12z" fill="#00a3c8"/><path d="M384 744h12v12h-12z" fill="#00a1c8"/><path d="M396 744h12v12h-12z" fill="#00a0c8"/><path d="M408 744h12v12h-12z" fill="#009fc8"/><path d="M420 744h12v12h-12z" fill="#009ec8"/><path d="M432 744h12v12h-12z" fill="#009cc8"/><path d="M444 744h12v12h-12z" fill="#009ac8"/><path d="M456 744h12v12h-12z" fill="#0099c8"/><path d="M468 744h12v12h-12z" fill="#0097c8"/><path d="M480 744h12v12h-12z" fill="#0095c8"/><path d="M492 744h12v12h-12z" fill="#0093c8"/><path d="M504 744h12v12h-12z" fill="#0090c8"/><path d="M516 744h12v12h-12z" fill="#008dc8"/><path d="M528 744h12v12h-12z" fill="#008bc8"/><path d="M540 744h12v12h-12z" fill="#0087c8"/><path d="M552 744h12v12h-12z" fill="#0084c8"/><path d="M564 744h12v12h-12z" fill="#0080c8"/><path d="M948 744h12v12h-12z" fill="#c8009e"/><path d="M960 744h12v12h-12z" fill="#c8009c"/><path d="M972 744h12v12h-12z" fill="#c80099"/><path d="M984 744h12v12h-12z" fill="#c80096"/><path d="M996 744h12v12h-12z" fill="#c80094"/><path d="M1008 744h12v12h-12z" fill="#c80091"/><path d="M1020 744h12v12h-12z" fill="#c8008f"/><path d="M1032 744h12v12h-12z" fill="#c8008d"/><path d="M1044 744h12v12h-12z" fill="#c8008b"/><path d="M1056 744h12v12h-12z" fill="#c80089"/><path d="M1068 744h12v12h-12z" fill="#c80087"/><path d="M1080 744h12v12h-12z" fill="#c80085"/><path d="M1092 744h12v12h-12z" fill="#c80084"/><path d="M1104 744h12v12h-12z" fill="#c80082"/><path d="M1116 744h12v12h-12z" fill="#c80080"/><path d="M1128 744h12v12h-12z" fill="#c8007f"/><path d="M1140 744h12v12h-12z" fill="#c8007d"/><path d="M1152 744h12v12h-12z" fill="#c8007c"/><path d="M1164 744h12v12h-12z" fill="#c8007b"/><path d="M1176 744h12v12h-12z" fill="#c80079"/><path d="M1188 744h12v12h-12z" fill="#c80078"/><path d="M1200 744h12v12h-12z" fill="#c80077"/><path d="M1212 744h12v12h-12z" fill="#c80076"/><path d="M1224 744h12v12h-12z" fill="#c80075"/><path d="M1236 744h12v12h-12z" fill="#c80073"/><path d="M1248 744h12v12h-12z" fill="#c80072"/><path d="M1260 744h12v12h-12z" fill="#c80071"/><path d="M1272 744h12v12h-12z" fill="#c80070"/><path d="M1284 744h12v12h-12z" fill="#c8006f"/><path d="M1296 744h12v12h-12z" fill="#c8006e"/><path d="M1308 744h12v12h-12z" fill="#c8006d"/><path d="M1320 744h12v12h-12z" fill="#c8006d"/><path d="M1332 744h12v12h-12z" fill="#c8006c"/><path d="M1344 744h12v12h-12z" fill="#c8006b"/><path d="M1356 744h12v12h-12z" fill="#c8006a"/><path d="M1368 744h12v12h-12z" fill="#c80069"/><path d="M1380 744h12v12h-12z" fill="#c80068"/><path d="M1392 744h12v12h-12z" fill="#c80068"/><path d="M1404 744h12v12h-12z" fill="#c80067"/><path d="M1416 744h12v12h-12z" fill="#c80066"/><path d="M1428 744h12v12h-12z" fill="#c80065"/><path d="M1440 744h12v12h-12z" fill="#c80065"/><path d="M1452 744h12v12h-12z" fill="#c80064"/><path d="M1464 744h12v12h-12z" fill="#c80063"/><path d="M1476 744h12v12h-12z" fill="#c80063"/><path d="M1488 744h12v12h-12z" fill="#c80062"/><path d="M288 756h12v12h-12z" fill="#00a5c8"/><path d="M300 756h12v12h-12z" fill="#00a4c8"/><path d="M312 756h12v12h-12z" fill="#00a3c8"/><path d="M324 756h12v12h-12z" fill="#00a2c8"/><path d="M336 756h12v12h-12z" fill="#00a1c8"/><path d="M348 756h12v12h-12z" fill="#00a0c8"/><path d="M360 756h12v12h-12z" fill="#009fc8"/><path d="M372 756h12v12h-12z" fill="#009ec8"/><path d="M384 756h12v12h-12z" fill="#009cc8"/><path d="M396 756h12v12h-12z" fill="#009bc8"/><path d="M408 756h12v12h-12z" fill="#009ac8"/><path d="M420 756h12v12h-12z" fill="#0098c8"/><path d="M432 756h12v12h-12z" fill="#0096c8"/><path d="M444 756h12v12h-12z" fill="#0094c8"/><path d="M456 756h12v12h-12z" fill="#0092c8"/><path d="M468 756h12v12h-12z" fill="#0090c8"/><path d="M480 756h12v12h-12z" fill="#008ec8"/><path d="M492 756h12v12h-12z" fill="#008bc8"/><path d="M504 756h12v12h-12z" fill="#0088c8"/><path d="M516 756h12v12h-12z" fill="#0085c8"/><path d="M528 756h12v12h-12z" fill="#0082c8"/><path d="M540 756h12v12h-12z" fill="#007ec8"/><path d="M552 756h12v12h-12z" fill="#0079c8"/><path d="M564 756h12v12h-12z" fill="#0074c8"/><path d="M888 756h12v12h-12z" fill="#c800b3"/><path d="M900 756h12v12h-12z" fill="#c800af"/><path d="M912 756h12v12h-12z" fill="#c800ab"/><path d="M924 756h12v12h-12z" fill="#c800a8"/><path d="M936 756h12v12h-12z" fill="#c800a5"/><path d="M948 756h12v12h-12z" fill="#c800a2"/><path d="M960 756h12v12h-12z" fill="#c8009f"/><path d="M972 756h12v12h-12z" fill="#c8009c"/><path d="M984 756h12v12h-12z" fill="#c8009a"/><path d="M996 756h12v12h-12z" fill="#c80097"/><path d="M1008 756h12v12h-12z" fill="#c80095"/><path d="M1020 756h12v12h-12z" fill="#c80093"/><path d="M1032 756h12v12h-12z" fill="#c80091"/><path d="M1044 756h12v12h-12z" fill="#c8008f"/><path d="M1056 756h12v12h-12z" fill="#c8008d"/><path d="M1068 756h12v12h-12z" fill="#c8008b"/><path d="M1080 756h12v12h-12z" fill="#c80089"/><path d="M1092 756h12v12h-12z" fill="#c80088"/><path d="M1104 756h12v12h-12z" fill="#c80086"/><path d="M1116 756h12v12h-12z" fill="#c80085"/><path d="M1128 756h12v12h-12z" fill="#c80083"/><path d="M1140 756h12v12h-12z" fill="#c80082"/><path d="M1152 756h12v12h-12z" fill="#c80080"/><path d="M1164 756h12v12h-12z" fill="#c8007f"/><path d="M1176 756h12v12h-12z" fill="#c8007e"/><path d="M1188 756h12v12h-12z" fill="#c8007c"/><path d="M1200 756h12v12h-12z" fill="#c8007b"/><path d="M1212 756h12v12h-12z" fill="#c8007a"/><path d="M1224 756h12v12h-12z" fill="#c80079"/><path d="M1236 756h12v12h-12z" fill="#c80078"/><path d="M1248 756h12v12h-12z" fill="#c80076"/><path d="M1260 756h12v12h-12z" fill="#c80075"/><path d="M1272 756h12v12h-12z" fill="#c80074"/><path d="M1284 756h12v12h-12z" fill="#c80073"/><path d="M1296 756h12v12h-12z" fill="#c80072"/><path d="M1308 756h12v12h-12z" fill="#c80072"/><path d="M1320 756h12v12h-12z" fill="#c80071"/><path d="M1332 756h12v12h-12z" fill="#c80070"/><path d="M1344 756h12v12h-12z" fill="#c8006f"/><path d="M1356 756h12v12h-12z" fill="#c8006e"/><path d="M1368 756h12v12h-12z" fill="#c8006d"/><path d="M1380 756h12v12h-12z" fill="#c8006c"/><path d="M1392 756h12v12h-12z" fill="#c8006c"/><path d="M1404 756h12v12h-12z" fill="#c8006b"/><path d="M1416 756h12v12h-12z" fill="#c8006a"/><path d="M300 768h12v12h-12z" fill="#00a0c8"/><path d="M312 768h12v12h-12z" fill="#009fc8"/><path d="M324 768h12v12h-12z" fill="#009ec8"/><path d="M336 768h12v12h-12z" fill="#009dc8"/><path d="M348 768h12v12h-12z" fill="#009bc8"/><path d="M360 768h12v12h-12z" fill="#009ac8"/><path d="M372 768h12v12h-12z" fill="#0099c8"/><path d="M384 768h12v12h-12z" fill="#0097c8"/><path d="M396 768h12v12h-12z" fill="#0096c8"/><path d="M408 768h12v12h-12z" fill="#0094c8"/><path d="M420 768h12v12h-12z" fill="#0092c8"/><path d="M432 768h12v12h-12z" fill="#0090c8"/><path d="M444 768h12v12h-12z" fill="#008ec8"/><path d="M456 768h12v12h-12z" fill="#008cc8"/><path d="M468 768h12v12h-12z" fill="#0089c8"/><path d="M480 768h12v12h-12z" fill="#0086c8"/><path d="M492 768h12v12h-12z" fill="#0083c8"/><path d="M504 768h12v12h-12z" fill="#0080c8"/><path d="M516 768h12v12h-12z" fill="#007cc8"/><path d="M528 768h12v12h-12z" fill="#0078c8"/><path d="M540 768h12v12h-12z" fill="#0073c8"/><path d="M552 768h12v12h-12z" fill="#006ec8"/><path d="M840 768h12v12h-12z" fill="#c800c7"/><path d="M852 768h12v12h-12z" fill="#c800c2"/><path d="M864 768h12v12h-12z" fill="#c800bd"/><path d="M876 768h12v12h-12z" fill="#c800b9"/><path d="M888 768h12v12h-12z" fill="#c800b5"/><path d="M900 768h12v12h-12z" fill="#c800b1"/><path d="M912 768h12v12h-12z" fill="#c800ae"/><path d="M924 768h12v12h-12z" fill="#c800ab"/><path d="M936 768h12v12h-12z" fill="#c800a8"/><path d="M948 768h12v12h-12z" fill="#c800a5"/><path d="M960 768h12v12h-12z" fill="#c800a2"/><path d="M972 768h12v12h-12z" fill="#c800a0"/><path d="M984 768h12v12h-12z" fill="#c8009d"/><path d="M996 768h12v12h-12z" fill="#c8009b"/><path d="M1008 768h12v12h-12z" fill="#c80098"/><path d="M1020 768h12v12h-12z" fill="#c80096"/><path d="M1032 768h12v12h-12z" fill="#c80094"/><path d="M1044 768h12v12h-12z" fill="#c80092"/><path d="M1056 768h12v12h-12z" fill="#c80090"/><path d="M1068 768h12v12h-12z" fill="#c8008f"/><path d="M1080 768h12v12h-12z" fill="#c8008d"/><path d="M1092 768h12v12h-12z" fill="#c8008b"/><path d="M1104 768h12v12h-12z" fill="#c8008a"/><path d="M1116 768h12v12h-12z" fill="#c80088"/><path d="M1128 768h12v12h-12z" fill="#c80087"/><path d="M1140 768h12v12h-12z" fill="#c80085"/><path d="M1152 768h12v12h-12z" fill="#c80084"/><path d="M1164 768h12v12h-12z" fill="#c80083"/><path d="M1176 768h12v12h-12z" fill="#c80081"/><path d="M1188 768h12v12h-12z" fill="#c80080"/><path d="M1200 768h12v12h-12z" fill="#c8007f"/><path d="M1212 768h12v12h-12z" fill="#c8007e"/><path d="M1224 768h12v12h-12z" fill="#c8007c"/><path d="M1236 768h12v12h-12z" fill="#c8007b"/><path d="M1248 768h12v12h-12z" fill="#c8007a"/><path d="M1260 768h12v12h-12z" fill="#c80079"/><path d="M1272 768h12v12h-12z" fill="#c80078"/><path d="M1284 768h12v12h-12z" fill="#c80077"/><path d="M1296 768h12v12h-12z" fill="#c80076"/><path d="M1308 768h12v12h-12z" fill="#c80075"/><path d="M1320 768h12v12h-12z" fill="#c80074"/><path d="M1332 768h12v12h-12z" fill="#c80073"/><path d="M1344 768h12v12h-12z" fill="#c80073"/><path d="M1356 768h12v12h-12z" fill="#c80072"/><path d="M312 780h12v12h-12z" fill="#009bc8"/><path d="M324 780h12v12h-12z" fill="#0099c8"/><path d="M336 780h12v12h-12z" fill="#0098c8"/><path d="M348 780h12v12h-12z" fill="#0097c8"/><path d="M360 780h12v12h-12z" fill="#0095c8"/><path d="M372 780h12v12h-12z" fill="#0094c8"/><path d="M384 780h12v12h-12z" fill="#0092c8"/><path d="M396 780h12v12h-12z" fill="#0090c8"/><path d="M408 780h12v12h-12z" fill="#008ec8"/><path d="M420 780h12v12h-12z" fill="#008cc8"/><path d="M432 780h12v12h-12z" fill="#008ac8"/><path d="M444 780h12v12h-12z" fill="#0087c8"/><path d="M456 780h12v12h-12z" fill="#0084c8"/><path d="M468 780h12v12h-12z" fill="#0081c8"/><path d="M480 780h12v12h-12z" fill="#007ec8"/><path d="M492 780h12v12h-12z" fill="#007bc8"/><path d="M504 780h12v12h-12z" fill="#0077c8"/><path d="M516 780h12v12h-12z" fill="#0072c8"/><path d="M528 780h12v12h-12z" fill="#006dc8"/><path d="M540 780h12v12h-12z" fill="#0067c8"/><path d="M780 780h12v12h-12z" fill="#af00c8"/><path d="M792 780h12v12h-12z" fill="#b500c8"/><path d="M804 780h12v12h-12z" fill="#ba00c8"/><path d="M816 780h12v12h-12z" fill="#bf00c8"/><path d="M828 780h12v12h-12z" fill="#c400c8"/><path d="M840 780h12v12h-12z" fill="#c800c7"/><path d="M852 780h12v12h-12z" fill="#c800c3"/><path d="M864 780h12v12h-12z" fill="#c800bf"/><path d="M876 780h12v12h-12z" fill="#c800bb"/><path d="M888 780h12v12h-12z" fill="#c800b7"/><path d="M900 780h12v12h-12z" fill="#c800b3"/><path d="M912 780h12v12h-12z" fill="#c800b0"/><path d="M924 780h12v12h-12z" fill="#c800ad"/><path d="M936 780h12v12h-12z" fill="#c800aa"/><path d="M948 780h12v12h-12z" fill="#c800a7"/><path d="M960 780h12v12h-12z" fill="#c800a5"/><path d="M972 780h12v12h-12z" fill="#c800a2"/><path d="M984 780h12v12h-12z" fill="#c800a0"/><path d="M996 780h12v12h-12z" fill="#c8009e"/><path d="M1008 780h12v12h-12z" fill="#c8009b"/><path d="M1020 780h12v12h-12z" fill="#c80099"/><path d="M1032 780h12v12h-12z" fill="#c80097"/><path d="M1044 780h12v12h-12z" fill="#c80095"/><path d="M1056 780h12v12h-12z" fill="#c80094"/><path d="M1068 780h12v12h-12z" fill="#c80092"/><path d="M1080 780h12v12h-12z" fill="#c80090"/><path d="M1092 780h12v12h-12z" fill="#c8008f"/><path d="M1104 780h12v12h-12z" fill="#c8008d"/><path d="M1116 780h12v12h-12z" fill="#c8008b"/><path d="M1128 780h12v12h-12z" fill="#c8008a"/><path d="M1140 780h12v12h-12z" fill="#c80089"/><path d="M1152 780h12v12h-12z" fill="#c80087"/><path d="M1164 780h12v12h-12z" fill="#c80086"/><path d="M1176 780h12v12h-12z" fill="#c80085"/><path d="M1188 780h12v12h-12z" fill="#c80083"/><path d="M1200 780h12v12h-12z" fill="#c80082"/><path d="M1212 780h12v12h-12z" fill="#c80081"/><path d="M1224 780h12v12h-12z" fill="#c80080"/><path d="M1236 780h12v12h-12z" fill="#c8007f"/><path d="M1248 780h12v12h-12z" fill="#c8007e"/><path d="M1260 780h12v12h-12z" fill="#c8007d"/><path d="M1272 780h12v12h-12z" fill="#c8007c"/><path d="M1284 780h12v12h-12z" fill="#c8007b"/><path d="M324 792h12v12h-12z" fill="#0095c8"/><path d="M336 792h12v12h-12z" fill="#0093c8"/><path d="M348 792h12v12h-12z" fill="#0092c8"/><path d="M360 792h12v12h-12z" fill="#0090c8"/><path d="M372 792h12v12h-12z" fill="#008ec8"/><path d="M384 792h12v12h-12z" fill="#008cc8"/><path d="M396 792h12v12h-12z" fill="#008ac8"/><path d="M408 792h12v12h-12z" fill="#0088c8"/><path d="M420 792h12v12h-12z" fill="#0085c8"/><path d="M432 792h12v12h-12z" fill="#0083c8"/><path d="M444 792h12v12h-12z" fill="#0080c8"/><path d="M456 792h12v12h-12z" fill="#007dc8"/><path d="M468 792h12v12h-12z" fill="#0079c8"/><path d="M480 792h12v12h-12z" fill="#0076c8"/><path d="M492 792h12v12h-12z" fill="#0071c8"/><path d="M504 792h12v12h-12z" fill="#006dc8"/><path d="M516 792h12v12h-12z" fill="#0067c8"/><path d="M528 792h12v12h-12z" fill="#0061c8"/><path d="M540 792h12v12h-12z" fill="#005ac8"/><path d="M720 792h12v12h-12z" fill="#9500c8"/><path d="M732 792h12v12h-12z" fill="#9b00c8"/><path d="M744 792h12v12h-12z" fill="#a100c8"/><path d="M756 792h12v12h-12z" fill="#a600c8"/><path d="M768 792h12v12h-12z" fill="#ac00c8"/><path d="M780 792h12v12h-12z" fill="#b100c8"/><path d="M792 792h12v12h-12z" fill="#b600c8"/><path d="M804 792h12v12h-12z" fill="#bb00c8"/><path d="M816 792h12v12h-12z" fill="#bf00c8"/><path d="M828 792h12v12h-12z" fill="#c400c8"/><path d="M840 792h12v12h-12z" fill="#c800c8"/><path d="M852 792h12v12h-12z" fill="#c800c4"/><path d="M864 792h12v12h-12z" fill="#c800c0"/><path d="M876 792h12v12h-12z" fill="#c800bc"/><path d="M888 792h12v12h-12z" fill="#c800b8"/><path d="M900 792h12v12h-12z" fill="#c800b5"/><path d="M912 792h12v12h-12z" fill="#c800b2"/><path d="M924 792h12v12h-12z" fill="#c800af"/><path d="M936 792h12v12h-12z" fill="#c800ac"/><path d="M948 792h12v12h-12z" fill="#c800aa"/><path d="M960 792h12v12h-12z" fill="#c800a7"/><path d="M972 792h12v12h-12z" fill="#c800a5"/><path d="M984 792h12v12h-12z" fill="#c800a2"/><path d="M996 792h12v12h-12z" fill="#c800a0"/><path d="M1008 792h12v12h-12z" fill="#c8009e"/><path d="M1020 792h12v12h-12z" fill="#c8009c"/><path d="M1032 792h12v12h-12z" fill="#c8009a"/><path d="M1044 792h12v12h-12z" fill="#c80098"/><path d="M1056 792h12v12h-12z" fill="#c80097"/><path d="M1068 792h12v12h-12z" fill="#c80095"/><path d="M1080 792h12v12h-12z" fill="#c80093"/><path d="M1092 792h12v12h-12z" fill="#c80092"/><path d="M1104 792h12v12h-12z" fill="#c80090"/><path d="M1116 792h12v12h-12z" fill="#c8008e"/><path d="M1128 792h12v12h-12z" fill="#c8008d"/><path d="M1140 792h12v12h-12z" fill="#c8008c"/><path d="M1152 792h12v12h-12z" fill="#c8008a"/><path d="M1164 792h12v12h-12z" fill="#c80089"/><path d="M1176 792h12v12h-12z" fill="#c80088"/><path d="M1188 792h12v12h-12z" fill="#c80086"/><path d="M1200 792h12v12h-12z" fill="#c80085"/><path d="M1212 792h12v12h-12z" fill="#c80084"/><path d="M1224 792h12v12h-12z" fill="#c80083"/><path d="M336 804h12v12h-12z" fill="#008ec8"/><path d="M348 804h12v12h-12z" fill="#008cc8"/><path d="M360 804h12v12h-12z" fill="#008ac8"/><path d="M372 804h12v12h-12z" fill="#0088c8"/><path d="M384 804h12v12h-12z" fill="#0086c8"/><path d="M396 804h12v12h-12z" fill="#0084c8"/><path d="M408 804h12v12h-12z" fill="#0081c8"/><path d="M420 804h12v12h-12z" fill="#007fc8"/><path d="M432 804h12v12h-12z" fill="#007cc8"/><path d="M444 804h12v12h-12z" fill="#0078c8"/><path d="M456 804h12v12h-12z" fill="#0075c8"/><path d="M468 804h12v12h-12z" fill="#0071c8"/><path d="M480 804h12v12h-12z" fill="#006cc8"/><path d="M492 804h12v12h-12z" fill="#0067c8"/><path d="M504 804h12v12h-12z" fill="#0062c8"/><path d="M516 804h12v12h-12z" fill="#005bc8"/><path d="M528 804h12v12h-12z" fill="#0053c8"/><path d="M672 804h12v12h-12z" fill="#7f00c8"/><path d="M684 804h12v12h-12z" fill="#8600c8"/><path d="M696 804h12v12h-12z" fill="#8d00c8"/><path d="M708 804h12v12h-12z" fill="#9300c8"/><path d="M720 804h12v12h-12z" fill="#9800c8"/><path d="M732 804h12v12h-12z" fill="#9e00c8"/><path d="M744 804h12v12h-12z" fill="#a300c8"/><path d="M756 804h12v12h-12z" fill="#a800c8"/><path d="M768 804h12v12h-12z" fill="#ad00c8"/><path d="M780 804h12v12h-12z" fill="#b200c8"/><path d="M792 804h12v12h-12z" fill="#b700c8"/><path d="M804 804h12v12h-12z" fill="#bb00c8"/><path d="M816 804h12v12h-12z" fill="#c000c8"/><path d="M828 804h12v12h-12z" fill="#c400c8"/><path d="M840 804h12v12h-12z" fill="#c800c8"/><path d="M852 804h12v12h-12z" fill="#c800c4"/><path d="M864 804h12v12h-12z" fill="#c800c1"/><path d="M876 804h12v12h-12z" fill="#c800bd"/><path d="M888 804h12v12h-12z" fill="#c800ba"/><path d="M900 804h12v12h-12z" fill="#c800b7"/><path d="M912 804h12v12h-12z" fill="#c800b4"/><path d="M924 804h12v12h-12z" fill="#c800b1"/><path d="M936 804h12v12h-12z" fill="#c800ae"/><path d="M948 804h12v12h-12z" fill="#c800ac"/><path d="M960 804h12v12h-12z" fill="#c800a9"/><path d="M972 804h12v12h-12z" fill="#c800a7"/><path d="M984 804h12v12h-12z" fill="#c800a5"/><path d="M996 804h12v12h-12z" fill="#c800a3"/><path d="M1008 804h12v12h-12z" fill="#c800a1"/><path d="M1020 804h12v12h-12z" fill="#c8009f"/><path d="M1032 804h12v12h-12z" fill="#c8009d"/><path d="M1044 804h12v12h-12z" fill="#c8009b"/><path d="M1056 804h12v12h-12z" fill="#c80099"/><path d="M1068 804h12v12h-12z" fill="#c80097"/><path d="M1080 804h12v12h-12z" fill="#c80096"/><path d="M1092 804h12v12h-12z" fill="#c80094"/><path d="M1104 804h12v12h-12z" fill="#c80093"/><path d="M1116 804h12v12h-12z" fill="#c80091"/><path d="M1128 804h12v12h-12z" fill="#c80090"/><path d="M1140 804h12v12h-12z" fill="#c8008e"/><path d="M1152 804h12v12h-12z" fill="#c8008d"/><path d="M1164 804h12v12h-12z" fill="#c8008c"/><path d="M348 816h12v12h-12z" fill="#0087c8"/><path d="M360 816h12v12h-12z" fill="#0085c8"/><path d="M372 816h12v12h-12z" fill="#0083c8"/><path d="M384 816h12v12h-12z" fill="#0080c8"/><path d="M396 816h12v12h-12z" fill="#007dc8"/><path d="M408 816h12v12h-12z" fill="#007bc8"/><path d="M420 816h12v12h-12z" fill="#0077c8"/><path d="M432 816h12v12h-12z" fill="#0074c8"/><path d="M444 816h12v12h-12z" fill="#0070c8"/><path d="M456 816h12v12h-12z" fill="#006cc8"/><path d="M468 816h12v12h-12z" fill="#0067c8"/><path d="M480 816h12v12h-12z" fill="#0062c8"/><path d="M492 816h12v12h-12z" fill="#005cc8"/><path d="M504 816h12v12h-12z" fill="#0055c8"/><path d="M516 816h12v12h-12z" fill="#004cc8"/><path d="M528 816h12v12h-12z" fill="#0042c8"/><path d="M612 816h12v12h-12z" fill="#6000c8"/><path d="M624 816h12v12h-12z" fill="#6900c8"/><path d="M636 816h12v12h-12z" fill="#7100c8"/><path d="M648 816h12v12h-12z" fill="#7800c8"/><path d="M660 816h12v12h-12z" fill="#7f00c8"/><path d="M672 816h12v12h-12z" fill="#8500c8"/><path d="M684 816h12v12h-12z" fill="#8b00c8"/><path d="M696 816h12v12h-12z" fill="#9100c8"/><path d="M708 816h12v12h-12z" fill="#9600c8"/><path d="M720 816h12v12h-12z" fill="#9c00c8"/><path d="M732 816h12v12h-12z" fill="#a100c8"/><path d="M744 816h12v12h-12z" fill="#a600c8"/><path d="M756 816h12v12h-12z" fill="#aa00c8"/><path d="M768 816h12v12h-12z" fill="#af00c8"/><path d="M780 816h12v12h-12z" fill="#b300c8"/><path d="M792 816h12v12h-12z" fill="#b800c8"/><path d="M804 816h12v12h-12z" fill="#bc00c8"/><path d="M816 816h12v12h-12z" fill="#c000c8"/><path d="M828 816h12v12h-12z" fill="#c400c8"/><path d="M840 816h12v12h-12z" fill="#c800c8"/><path d="M852 816h12v12h-12z" fill="#c800c5"/><path d="M864 816h12v12h-12z" fill="#c800c2"/><path d="M876 816h12v12h-12z" fill="#c800be"/><path d="M888 816h12v12h-12z" fill="#c800bb"/><path d="M900 816h12v12h-12z" fill="#c800b8"/><path d="M912 816h12v12h-12z" fill="#c800b5"/><path d="M924 816h12v12h-12z" fill="#c800b3"/><path d="M936 816h12v12h-12z" fill="#c800b0"/><path d="M948 816h12v12h-12z" fill="#c800ae"/><path d="M960 816h12v12h-12z" fill="#c800ab"/><path d="M972 816h12v12h-12z" fill="#c800a9"/><path d="M984 816h12v12h-12z" fill="#c800a7"/><path d="M996 816h12v12h-12z" fill="#c800a5"/><path d="M1008 816h12v12h-12z" fill="#c800a3"/><path d="M1020 816h12v12h-12z" fill="#c800a1"/><path d="M1032 816h12v12h-12z" fill="#c8009f"/><path d="M1044 816h12v12h-12z" fill="#c8009d"/><path d="M1056 816h12v12h-12z" fill="#c8009b"/><path d="M1068 816h12v12h-12z" fill="#c8009a"/><path d="M1080 816h12v12h-12z" fill="#c80098"/><path d="M1092 816h12v12h-12z" fill="#c80097"/><path d="M360 828h12v12h-12z" fill="#007fc8"/><path d="M372 828h12v12h-12z" fill="#007cc8"/><path d="M384 828h12v12h-12z" fill="#007ac8"/><path d="M396 828h12v12h-12z" fill="#0077c8"/><path d="M408 828h12v12h-12z" fill="#0073c8"/><path d="M420 828h12v12h-12z" fill="#0070c8"/><path d="M432 828h12v12h-12z" fill="#006cc8"/><path d="M444 828h12v12h-12z" fill="#0067c8"/><path d="M456 828h12v12h-12z" fill="#0062c8"/><path d="M468 828h12v12h-12z" fill="#005dc8"/><path d="M480 828h12v12h-12z" fill="#0056c8"/><path d="M492 828h12v12h-12z" fill="#004fc8"/><path d="M504 828h12v12h-12z" fill="#0046c8"/><path d="M516 828h12v12h-12z" fill="#003ac8"/><path d="M552 828h12v12h-12z" fill="#3300c8"/><path d="M564 828h12v12h-12z" fill="#4200c8"/><path d="M576 828h12v12h-12z" fill="#4e00c8"/><path d="M588 828h12v12h-12z" fill="#5900c8"/><path d="M600 828h12v12h-12z" fill="#6200c8"/><path d="M612 828h12v12h-12z" fill="#6a00c8"/><path d="M624 828h12v12h-12z" fill="#7100c8"/><path d="M636 828h12v12h-12z" fill="#7800c8"/><path d="M648 828h12v12h-12z" fill="#7e00c8"/><path d="M660 828h12v12h-12z" fill="#8400c8"/><path d="M672 828h12v12h-12z" fill="#8a00c8"/><path d="M684 828h12v12h-12z" fill="#8f00c8"/><path d="M696 828h12v12h-12z" fill="#9500c8"/><path d="M708 828h12v12h-12z" fill="#9a00c8"/><path d="M720 828h12v12h-12z" fill="#9e00c8"/><path d="M732 828h12v12h-12z" fill="#a300c8"/><path d="M744 828h12v12h-12z" fill="#a800c8"/><path d="M756 828h12v12h-12z" fill="#ac00c8"/><path d="M768 828h12v12h-12z" fill="#b000c8"/><path d="M780 828h12v12h-12z" fill="#b400c8"/><path d="M792 828h12v12h-12z" fill="#b800c8"/><path d="M804 828h12v12h-12z" fill="#bc00c8"/><path d="M816 828h12v12h-12z" fill="#c000c8"/><path d="M828 828h12v12h-12z" fill="#c400c8"/><path d="M840 828h12v12h-12z" fill="#c700c8"/><path d="M852 828h12v12h-12z" fill="#c800c6"/><path d="M864 828h12v12h-12z" fill="#c800c2"/><path d="M876 828h12v12h-12z" fill="#c800bf"/><path d="M888 828h12v12h-12z" fill="#c800bc"/><path d="M900 828h12v12h-12z" fill="#c800b9"/><path d="M912 828h12v12h-12z" fill="#c800b7"/><path d="M924 828h12v12h-12z" fill="#c800b4"/><path d="M936 828h12v12h-12z" fill="#c800b2"/><path d="M948 828h12v12h-12z" fill="#c800af"/><path d="M960 828h12v12h-12z" fill="#c800ad"/><path d="M972 828h12v12h-12z" fill="#c800ab"/><path d="M984 828h12v12h-12z" fill="#c800a9"/><path d="M996 828h12v12h-12z" fill="#c800a7"/><path d="M1008 828h12v12h-12z" fill="#c800a5"/><path d="M1020 828h12v12h-12z" fill="#c800a3"/><path d="M1032 828h12v12h-12z" fill="#c800a1"/><path d="M372 840h12v12h-12z" fill="#0076c8"/><path d="M384 840h12v12h-12z" fill="#0073c8"/><path d="M396 840h12v12h-12z" fill="#006fc8"/><path d="M408 840h12v12h-12z" fill="#006bc8"/><path d="M420 840h12v12h-12z" fill="#0067c8"/><path d="M432 840h12v12h-12z" fill="#0063c8"/><path d="M444 840h12v12h-12z" fill="#005ec8"/><path d="M456 840h12v12h-12z" fill="#0058c8"/><path d="M468 840h12v12h-12z" fill="#0051c8"/><path d="M480 840h12v12h-12z" fill="#0049c8"/><path d="M492 840h12v12h-12z" fill="#003ec8"/><path d="M504 840h12v12h-12z" fill="#0030c8"/><path d="M516 840h12v12h-12z" fill="#0018c8"/><path d="M528 840h12v12h-12z" fill="#2700c8"/><path d="M540 840h12v12h-12z" fill="#3a00c8"/><path d="M552 840h12v12h-12z" fill="#4700c8"/><path d="M564 840h12v12h-12z" fill="#5100c8"/><path d="M576 840h12v12h-12z" fill="#5b00c8"/><path d="M588 840h12v12h-12z" fill="#6300c8"/><path d="M600 840h12v12h-12z" fill="#6a00c8"/><path d="M612 840h12v12h-12z" fill="#7100c8"/><path d="M624 840h12v12h-12z" fill="#7800c8"/><path d="M636 840h12v12h-12z" fill="#7e00c8"/><path d="M648 840h12v12h-12z" fill="#8300c8"/><path d="M660 840h12v12h-12z" fill="#8900c8"/><path d="M672 840h12v12h-12z" fill="#8e00c8"/><path d="M684 840h12v12h-12z" fill="#9300c8"/><path d="M696 840h12v12h-12z" fill="#9800c8"/><path d="M708 840h12v12h-12z" fill="#9c00c8"/><path d="M720 840h12v12h-12z" fill="#a100c8"/><path d="M732 840h12v12h-12z" fill="#a500c8"/><path d="M744 840h12v12h-12z" fill="#a900c8"/><path d="M756 840h12v12h-12z" fill="#ad00c8"/><path d="M768 840h12v12h-12z" fill="#b100c8"/><path d="M780 840h12v12h-12z" fill="#b500c8"/><path d="M792 840h12v12h-12z" fill="#b900c8"/><path d="M804 840h12v12h-12z" fill="#bc00c8"/><path d="M816 840h12v12h-12z" fill="#c000c8"/><path d="M828 840h12v12h-12z" fill="#c300c8"/><path d="M840 840h12v12h-12z" fill="#c700c8"/><path d="M852 840h12v12h-12z" fill="#c800c6"/><path d="M864 840h12v12h-12z" fill="#c800c3"/><path d="M876 840h12v12h-12z" fill="#c800c0"/><path d="M888 840h12v12h-12z" fill="#c800bd"/><path d="M900 840h12v12h-12z" fill="#c800ba"/><path d="M912 840h12v12h-12z" fill="#c800b8"/><path d="M924 840h12v12h-12z" fill="#c800b5"/><path d="M936 840h12v12h-12z" fill="#c800b3"/><path d="M948 840h12v12h-12z" fill="#c800b1"/><path d="M960 840h12v12h-12z" fill="#c800ae"/><path d="M384 852h12v12h-12z" fill="#006bc8"/><path d="M396 852h12v12h-12z" fill="#0067c8"/><path d="M408 852h12v12h-12z" fill="#0063c8"/><path d="M420 852h12v12h-12z" fill="#005ec8"/><path d="M432 852h12v12h-12z" fill="#0059c8"/><path d="M444 852h12v12h-12z" fill="#0052c8"/><path d="M456 852h12v12h-12z" fill="#004bc8"/><path d="M468 852h12v12h-12z" fill="#0042c8"/><path d="M480 852h12v12h-12z" fill="#0037c8"/><path d="M492 852h12v12h-12z" fill="#0026c8"/><path d="M504 852h12v12h-12z" fill="#1800c8"/><path d="M516 852h12v12h-12z" fill="#3000c8"/><path d="M528 852h12v12h-12z" fill="#3f00c8"/><path d="M540 852h12v12h-12z" fill="#4a00c8"/><path d="M552 852h12v12h-12z" fill="#5400c8"/><path d="M564 852h12v12h-12z" fill="#5d00c8"/><path d="M576 852h12v12h-12z" fill="#6400c8"/><path d="M588 852h12v12h-12z" fill="#6b00c8"/><path d="M600 852h12v12h-12z" fill="#7200c8"/><path d="M612 852h12v12h-12z" fill="#7800c8"/><path d="M624 852h12v12h-12z" fill="#7d00c8"/><path d="M636 852h12v12h-12z" fill="#8300c8"/><path d="M648 852h12v12h-12z" fill="#8800c8"/><path d="M660 852h12v12h-12z" fill="#8d00c8"/><path d="M672 852h12v12h-12z" fill="#9200c8"/><path d="M684 852h12v12h-12z" fill="#9600c8"/><path d="M696 852h12v12h-12z" fill="#9b00c8"/><path d="M708 852h12v12h-12z" fill="#9f00c8"/><path d="M720 852h12v12h-12z" fill="#a300c8"/><path d="M732 852h12v12h-12z" fill="#a700c8"/><path d="M744 852h12v12h-12z" fill="#ab00c8"/><path d="M756 852h12v12h-12z" fill="#af00c8"/><path d="M768 852h12v12h-12z" fill="#b200c8"/><path d="M780 852h12v12h-12z" fill="#b600c8"/><path d="M792 852h12v12h-12z" fill="#b900c8"/><path d="M804 852h12v12h-12z" fill="#bd00c8"/><path d="M816 852h12v12h-12z" fill="#c000c8"/><path d="M828 852h12v12h-12z" fill="#c300c8"/><path d="M840 852h12v12h-12z" fill="#c700c8"/><path d="M852 852h12v12h-12z" fill="#c800c7"/><path d="M864 852h12v12h-12z" fill="#c800c4"/><path d="M876 852h12v12h-12z" fill="#c800c1"/><path d="M888 852h12v12h-12z" fill="#c800be"/><path d="M900 852h12v12h-12z" fill="#c800bb"/><path d="M396 864h12v12h-12z" fill="#005fc8"/><path d="M408 864h12v12h-12z" fill="#005ac8"/><path d="M420 864h12v12h-12z" fill="#0054c8"/><path d="M432 864h12v12h-12z" fill="#004dc8"/><path d="M444 864h12v12h-12z" fill="#0045c8"/><path d="M456 864h12v12h-12z" fill="#003bc8"/><path d="M468 864h12v12h-12z" fill="#002ec8"/><path d="M480 864h12v12h-12z" fill="#0016c8"/><path d="M492 864h12v12h-12z" fill="#2600c8"/><path d="M504 864h12v12h-12z" fill="#3700c8"/><path d="M516 864h12v12h-12z" fill="#4300c8"/><path d="M528 864h12v12h-12z" fill="#4e00c8"/><path d="M540 864h12v12h-12z" fill="#5600c8"/><path d="M552 864h12v12h-12z" fill="#5e00c8"/><path d="M564 864h12v12h-12z" fill="#6500c8"/><path d="M576 864h12v12h-12z" fill="#6c00c8"/><path d="M588 864h12v12h-12z" fill="#7200c8"/><path d="M600 864h12v12h-12z" fill="#7800c8"/><path d="M612 864h12v12h-12z" fill="#7d00c8"/><path d="M624 864h12v12h-12z" fill="#8200c8"/><path d="M636 864h12v12h-12z" fill="#8700c8"/><path d="M648 864h12v12h-12z" fill="#8c00c8"/><path d="M660 864h12v12h-12z" fill="#9000c8"/><path d="M672 864h12v12h-12z" fill="#9500c8"/><path d="M684 864h12v12h-12z" fill="#9900c8"/><path d="M696 864h12v12h-12z" fill="#9d00c8"/><path d="M708 864h12v12h-12z" fill="#a100c8"/><path d="M720 864h12v12h-12z" fill="#a500c8"/><path d="M732 864h12v12h-12z" fill="#a800c8"/><path d="M744 864h12v12h-12z" fill="#ac00c8"/><path d="M756 864h12v12h-12z" fill="#b000c8"/><path d="M768 864h12v12h-12z" fill="#b300c8"/><path d="M780 864h12v12h-12z" fill="#b600c8"/><path d="M792 864h12v12h-12z" fill="#ba00c8"/><path d="M804 864h12v12h-12z" fill="#bd00c8"/><path d="M816 864h12v12h-12z" fill="#c000c8"/><path d="M828 864h12v12h-12z" fill="#c300c8"/><path d="M408 876h12v12h-12z" fill="#004fc8"/><path d="M420 876h12v12h-12z" fill="#0048c8"/><path d="M432 876h12v12h-12z" fill="#003fc8"/><path d="M444 876h12v12h-12z" fill="#0034c8"/><path d="M456 876h12v12h-12z" fill="#0023c8"/><path d="M468 876h12v12h-12z" fill="#1700c8"/><path d="M480 876h12v12h-12z" fill="#2e00c8"/><path d="M492 876h12v12h-12z" fill="#3c00c8"/><path d="M504 876h12v12h-12z" fill="#4700c8"/><path d="M516 876h12v12h-12z" fill="#5000c8"/><path d="M528 876h12v12h-12z" fill="#5800c8"/><path d="M540 876h12v12h-12z" fill="#5f00c8"/><path d="M552 876h12v12h-12z" fill="#6600c8"/><path d="M564 876h12v12h-12z" fill="#6c00c8"/><path d="M576 876h12v12h-12z" fill="#7200c8"/><path d="M588 876h12v12h-12z" fill="#7700c8"/><path d="M600 876h12v12h-12z" fill="#7d00c8"/><path d="M612 876h12v12h-12z" fill="#8200c8"/><path d="M624 876h12v12h-12z" fill="#8600c8"/><path d="M636 876h12v12h-12z" fill="#8b00c8"/><path d="M648 876h12v12h-12z" fill="#8f00c8"/><path d="M660 876h12v12h-12z" fill="#9300c8"/><path d="M672 876h12v12h-12z" fill="#9700c8"/><path d="M684 876h12v12h-12z" fill="#9b00c8"/><path d="M696 876h12v12h-12z" fill="#9f00c8"/><path d="M708 876h12v12h-12z" fill="#a300c8"/><path d="M720 876h12v12h-12z" fill="#a600c8"/><path d="M732 876h12v12h-12z" fill="#aa00c8"/><path d="M744 876h12v12h-12z" fill="#ad00c8"/><path d="M756 876h12v12h-12z" fill="#b100c8"/><path d="M768 876h12v12h-12z" fill="#b400c8"/><path d="M420 888h12v12h-12z" fill="#0039c8"/><path d="M432 888h12v12h-12z" fill="#002cc8"/><path d="M444 888h12v12h-12z" fill="#0014c8"/><path d="M456 888h12v12h-12z" fill="#2400c8"/><path d="M468 888h12v12h-12z" fill="#3500c8"/><path d="M480 888h12v12h-12z" fill="#4100c8"/><path d="M492 888h12v12h-12z" fill="#4a00c8"/><path d="M504 888h12v12h-12z" fill="#5300c8"/><path d="M516 888h12v12h-12z" fill="#5a00c8"/><path d="M528 888h12v12h-12z" fill="#6100c8"/><path d="M540 888h12v12h-12z" fill="#6700c8"/><path d="M552 888h12v12h-12z" fill="#6d00c8"/><path d="M564 888h12v12h-12z" fill="#7200c8"/><path d="M576 888h12v12h-12z" fill="#7700c8"/><path d="M588 888h12v12h-12z" fill="#7c00c8"/><path d="M600 888h12v12h-12z" fill="#8100c8"/><path d="M612 888h12v12h-12z" fill="#8500c8"/><path d="M624 888h12v12h-12z" fill="#8a00c8"/><path d="M636 888h12v12h-12z" fill="#8e00c8"/><path d="M648 888h12v12h-12z" fill="#9200c8"/><path d="M660 888h12v12h-12z" fill="#9600c8"/><path d="M672 888h12v12h-12z" fill="#9a00c8"/><path d="M684 888h12v12h-12z" fill="#9d00c8"/><path d="M696 888h12v12h-12z" fill="#a100c8"/><path d="M432 900h12v12h-12z" fill="#1700c8"/><path d="M444 900h12v12h-12z" fill="#2d00c8"/><path d="M456 900h12v12h-12z" fill="#3a00c8"/><path d="M468 900h12v12h-12z" fill="#4400c8"/><path d="M480 900h12v12h-12z" fill="#4d00c8"/><path d="M492 900h12v12h-12z" fill="#5500c8"/><path d="M504 900h12v12h-12z" fill="#5b00c8"/><path d="M516 900h12v12h-12z" fill="#6200c8"/><path d="M528 900h12v12h-12z" fill="#6800c8"/><path d="M540 900h12v12h-12z" fill="#6d00c8"/><path d="M552 900h12v12h-12z" fill="#7200c8"/><path d="M564 900h12v12h-12z" fill="#7700c8"/><path d="M576 900h12v12h-12z" fill="#7c00c8"/><path d="M588 900h12v12h-12z" fill="#8100c8"/><path d="M600 900h12v12h-12z" fill="#8500c8"/><path d="M612 900h12v12h-12z" fill="#8900c8"/><path d="M624 900h12v12h-12z" fill="#8d00c8"/><path d="M636 900h12v12h-12z" fill="#9100c8"/><path d="M456 912h12v12h-12z" fill="#4700c8"/><path d="M468 912h12v12h-12z" fill="#4f00c8"/><path d="M480 912h12v12h-12z" fill="#5600c8"/><path d="M492 912h12v12h-12z" fill="#5d00c8"/><path d="M504 912h12v12h-12z" fill="#6300c8"/><path d="M516 912h12v12h-12z" fill="#6800c8"/><path d="M528 912h12v12h-12z" fill="#6e00c8"/><path d="M540 912h12v12h-12z" fill="#7300c8"/><path d="M552 912h12v12h-12z" fill="#7700c8"/><path d="M564 912h12v12h-12z" fill="#7c00c8"/><path d="M576 912h12v12h-12z" fill="#8000c8"/><path d="M480 924h12v12h-12z" fill="#5600c8"/><path d="M492 924h12v12h-12z" fill="#5d00c8"/><path d="M504 924h12v12h-12z" fill="#6300c8"/></g></g><path d="M161.5 115V969 M374.5 115V969 M587.5 115V969 M800.5 115V969 M1013.5 115V969 M1225.5 115V969 M1438.5 115V969 M1651.5 115V969 M3 157.5H1917 M3 243.5H1917 M3 328.5H1917 M3 414.5H1917 M3 499.5H1917 M3 584.5H1917 M3 670.5H1917 M3 755.5H1917 M3 841.5H1917" stroke="#3b3b3b" stroke-width="1" fill="none" clip-path="url(#cChart)"/><g clip-path="url(#cTri)"><g filter="url(#fb)" class="mo"><path d="M756 348h12v12h-12z" fill="#00ff00"/><path d="M768 348h12v12h-12z" fill="#00ff00"/><path d="M780 348h12v12h-12z" fill="#00ff00"/><path d="M792 348h12v12h-12z" fill="#00ff00"/><path d="M804 348h12v12h-12z" fill="#00ff00"/><path d="M744 360h12v12h-12z" fill="#00ff00"/><path d="M756 360h12v12h-12z" fill="#00ff00"/><path d="M768 360h12v12h-12z" fill="#00ff00"/><path d="M780 360h12v12h-12z" fill="#00ff00"/><path d="M792 360h12v12h-12z" fill="#00ff00"/><path d="M804 360h12v12h-12z" fill="#00ff00"/><path d="M816 360h12v12h-12z" fill="#00ff00"/><path d="M828 360h12v12h-12z" fill="#0bff00"/><path d="M840 360h12v12h-12z" fill="#2fff00"/><path d="M744 372h12v12h-12z" fill="#00ff00"/><path d="M756 372h12v12h-12z" fill="#00ff00"/><path d="M768 372h12v12h-12z" fill="#00ff00"/><path d="M780 372h12v12h-12z" fill="#00ff00"/><path d="M792 372h12v12h-12z" fill="#00ff00"/><path d="M804 372h12v12h-12z" fill="#00ff00"/><path d="M816 372h12v12h-12z" fill="#00ff00"/><path d="M828 372h12v12h-12z" fill="#28ff00"/><path d="M840 372h12v12h-12z" fill="#3cff00"/><path d="M852 372h12v12h-12z" fill="#4aff00"/><path d="M864 372h12v12h-12z" fill="#55ff00"/><path d="M876 372h12v12h-12z" fill="#5fff00"/><path d="M732 384h12v12h-12z" fill="#00ff00"/><path d="M744 384h12v12h-12z" fill="#00ff00"/><path d="M756 384h12v12h-12z" fill="#00ff00"/><path d="M768 384h12v12h-12z" fill="#00ff00"/><path d="M780 384h12v12h-12z" fill="#00ff00"/><path d="M792 384h12v12h-12z" fill="#00ff00"/><path d="M804 384h12v12h-12z" fill="#00ff00"/><path d="M816 384h12v12h-12z" fill="#20ff00"/><path d="M828 384h12v12h-12z" fill="#37ff00"/><path d="M840 384h12v12h-12z" fill="#46ff00"/><path d="M852 384h12v12h-12z" fill="#53ff00"/><path d="M864 384h12v12h-12z" fill="#5dff00"/><path d="M876 384h12v12h-12z" fill="#66ff00"/><path d="M888 384h12v12h-12z" fill="#6fff00"/><path d="M900 384h12v12h-12z" fill="#77ff00"/><path d="M912 384h12v12h-12z" fill="#7eff00"/><path d="M732 396h12v12h-12z" fill="#00ff23"/><path d="M744 396h12v12h-12z" fill="#00ff1a"/><path d="M756 396h12v12h-12z" fill="#00ff05"/><path d="M768 396h12v12h-12z" fill="#00ff00"/><path d="M780 396h12v12h-12z" fill="#00ff00"/><path d="M792 396h12v12h-12z" fill="#00ff00"/><path d="M804 396h12v12h-12z" fill="#12ff00"/><path d="M816 396h12v12h-12z" fill="#32ff00"/><path d="M828 396h12v12h-12z" fill="#43ff00"/><path d="M840 396h12v12h-12z" fill="#50ff00"/><path d="M852 396h12v12h-12z" fill="#5bff00"/><path d="M864 396h12v12h-12z" fill="#65ff00"/><path d="M876 396h12v12h-12z" fill="#6eff00"/><path d="M888 396h12v12h-12z" fill="#76ff00"/><path d="M900 396h12v12h-12z" fill="#7eff00"/><path d="M912 396h12v12h-12z" fill="#85ff00"/><path d="M924 396h12v12h-12z" fill="#8cff00"/><path d="M936 396h12v12h-12z" fill="#92ff00"/><path d="M720 408h12v12h-12z" fill="#00ff3b"/><path d="M732 408h12v12h-12z" fill="#00ff37"/><path d="M744 408h12v12h-12z" fill="#00ff32"/><path d="M756 408h12v12h-12z" fill="#00ff2c"/><path d="M768 408h12v12h-12z" fill="#00ff25"/><path d="M780 408h12v12h-12z" fill="#00ff1c"/><path d="M792 408h12v12h-12z" fill="#00ff0c"/><path d="M804 408h12v12h-12z" fill="#2cff00"/><path d="M816 408h12v12h-12z" fill="#3fff00"/><path d="M828 408h12v12h-12z" fill="#4dff00"/><path d="M840 408h12v12h-12z" fill="#59ff00"/><path d="M852 408h12v12h-12z" fill="#63ff00"/><path d="M864 408h12v12h-12z" fill="#6cff00"/><path d="M876 408h12v12h-12z" fill="#75ff00"/><path d="M888 408h12v12h-12z" fill="#7dff00"/><path d="M900 408h12v12h-12z" fill="#84ff00"/><path d="M912 408h12v12h-12z" fill="#8bff00"/><path d="M924 408h12v12h-12z" fill="#92ff00"/><path d="M936 408h12v12h-12z" fill="#99ff00"/><path d="M948 408h12v12h-12z" fill="#9fff00"/><path d="M960 408h12v12h-12z" fill="#a5ff00"/><path d="M972 408h12v12h-12z" fill="#abff00"/><path d="M720 420h12v12h-12z" fill="#00ff48"/><path d="M732 420h12v12h-12z" fill="#00ff45"/><path d="M744 420h12v12h-12z" fill="#00ff41"/><path d="M756 420h12v12h-12z" fill="#00ff3d"/><path d="M768 420h12v12h-12z" fill="#00ff38"/><path d="M780 420h12v12h-12z" fill="#00ff34"/><path d="M792 420h12v12h-12z" fill="#30ff3a"/><path d="M804 420h12v12h-12z" fill="#47ff35"/><path d="M816 420h12v12h-12z" fill="#53ff29"/><path d="M828 420h12v12h-12z" fill="#5bff16"/><path d="M840 420h12v12h-12z" fill="#61ff00"/><path d="M852 420h12v12h-12z" fill="#6bff00"/><path d="M864 420h12v12h-12z" fill="#74ff00"/><path d="M876 420h12v12h-12z" fill="#7cff00"/><path d="M888 420h12v12h-12z" fill="#84ff00"/><path d="M900 420h12v12h-12z" fill="#8bff00"/><path d="M912 420h12v12h-12z" fill="#92ff00"/><path d="M924 420h12v12h-12z" fill="#99ff00"/><path d="M936 420h12v12h-12z" fill="#9fff00"/><path d="M948 420h12v12h-12z" fill="#a5ff00"/><path d="M960 420h12v12h-12z" fill="#abff00"/><path d="M972 420h12v12h-12z" fill="#b1ff00"/><path d="M984 420h12v12h-12z" fill="#b7ff00"/><path d="M996 420h12v12h-12z" fill="#bdff00"/><path d="M1008 420h12v12h-12z" fill="#c2ff00"/><path d="M708 432h12v12h-12z" fill="#00ff56"/><path d="M720 432h12v12h-12z" fill="#00ff53"/><path d="M732 432h12v12h-12z" fill="#00ff50"/><path d="M744 432h12v12h-12z" fill="#00ff4d"/><path d="M756 432h12v12h-12z" fill="#00ff4a"/><path d="M768 432h12v12h-12z" fill="#00ff47"/><path d="M780 432h12v12h-12z" fill="#20ff4a"/><path d="M792 432h12v12h-12z" fill="#47ff50"/><path d="M804 432h12v12h-12z" fill="#59ff4e"/><path d="M816 432h12v12h-12z" fill="#63ff48"/><path d="M828 432h12v12h-12z" fill="#6cff40"/><path d="M840 432h12v12h-12z" fill="#74ff38"/><path d="M852 432h12v12h-12z" fill="#7aff2c"/><path d="M864 432h12v12h-12z" fill="#7fff1a"/><path d="M876 432h12v12h-12z" fill="#83ff00"/><path d="M888 432h12v12h-12z" fill="#8aff00"/><path d="M900 432h12v12h-12z" fill="#92ff00"/><path d="M912 432h12v12h-12z" fill="#99ff00"/><path d="M924 432h12v12h-12z" fill="#9fff00"/><path d="M936 432h12v12h-12z" fill="#a6ff00"/><path d="M948 432h12v12h-12z" fill="#acff00"/><path d="M960 432h12v12h-12z" fill="#b2ff00"/><path d="M972 432h12v12h-12z" fill="#b8ff00"/><path d="M984 432h12v12h-12z" fill="#bdff00"/><path d="M996 432h12v12h-12z" fill="#c3ff00"/><path d="M1008 432h12v12h-12z" fill="#c9ff00"/><path d="M1020 432h12v12h-12z" fill="#ceff00"/><path d="M1032 432h12v12h-12z" fill="#d3ff00"/><path d="M1044 432h12v12h-12z" fill="#d9ff00"/><path d="M696 444h12v12h-12z" fill="#00ff62"/><path d="M708 444h12v12h-12z" fill="#00ff60"/><path d="M720 444h12v12h-12z" fill="#00ff5e"/><path d="M732 444h12v12h-12z" fill="#00ff5b"/><path d="M744 444h12v12h-12z" fill="#00ff59"/><path d="M756 444h12v12h-12z" fill="#00ff56"/><path d="M768 444h12v12h-12z" fill="#00ff53"/><path d="M780 444h12v12h-12z" fill="#40ff5e"/><path d="M792 444h12v12h-12z" fill="#58ff61"/><path d="M804 444h12v12h-12z" fill="#67ff60"/><path d="M816 444h12v12h-12z" fill="#70ff5b"/><path d="M828 444h12v12h-12z" fill="#79ff56"/><path d="M840 444h12v12h-12z" fill="#80ff51"/><path d="M852 444h12v12h-12z" fill="#87ff4a"/><path d="M864 444h12v12h-12z" fill="#8dff43"/><path d="M876 444h12v12h-12z" fill="#92ff3a"/><path d="M888 444h12v12h-12z" fill="#98ff2f"/><path d="M900 444h12v12h-12z" fill="#9cff1f"/><path d="M912 444h12v12h-12z" fill="#9fff00"/><path d="M924 444h12v12h-12z" fill="#a6ff00"/><path d="M936 444h12v12h-12z" fill="#acff00"/><path d="M948 444h12v12h-12z" fill="#b2ff00"/><path d="M960 444h12v12h-12z" fill="#b8ff00"/><path d="M972 444h12v12h-12z" fill="#beff00"/><path d="M984 444h12v12h-12z" fill="#c4ff00"/><path d="M996 444h12v12h-12z" fill="#caff00"/><path d="M1008 444h12v12h-12z" fill="#cfff00"/><path d="M1020 444h12v12h-12z" fill="#d5ff00"/><path d="M1032 444h12v12h-12z" fill="#daff00"/><path d="M1044 444h12v12h-12z" fill="#e0ff00"/><path d="M1056 444h12v12h-12z" fill="#e5ff00"/><path d="M1068 444h12v12h-12z" fill="#eaff00"/><path d="M1080 444h12v12h-12z" fill="#f0ff00"/><path d="M696 456h12v12h-12z" fill="#00ff6b"/><path d="M708 456h12v12h-12z" fill="#00ff69"/><path d="M720 456h12v12h-12z" fill="#00ff67"/><path d="M732 456h12v12h-12z" fill="#00ff65"/><path d="M744 456h12v12h-12z" fill="#00ff63"/><path d="M756 456h12v12h-12z" fill="#00ff60"/><path d="M768 456h12v12h-12z" fill="#35ff68"/><path d="M780 456h12v12h-12z" fill="#53ff6d"/><path d="M792 456h12v12h-12z" fill="#66ff6f"/><path d="M804 456h12v12h-12z" fill="#74ff6f"/><path d="M816 456h12v12h-12z" fill="#7cff6b"/><path d="M828 456h12v12h-12z" fill="#84ff67"/><path d="M840 456h12v12h-12z" fill="#8bff63"/><path d="M852 456h12v12h-12z" fill="#91ff5f"/><path d="M864 456h12v12h-12z" fill="#97ff59"/><path d="M876 456h12v12h-12z" fill="#9dff54"/><path d="M888 456h12v12h-12z" fill="#a3ff4d"/><path d="M900 456h12v12h-12z" fill="#a8ff46"/><path d="M912 456h12v12h-12z" fill="#adff3d"/><path d="M924 456h12v12h-12z" fill="#b2ff32"/><path d="M936 456h12v12h-12z" fill="#b6ff23"/><path d="M948 456h12v12h-12z" fill="#b9ff00"/><path d="M960 456h12v12h-12z" fill="#bfff00"/><path d="M972 456h12v12h-12z" fill="#c5ff00"/><path d="M984 456h12v12h-12z" fill="#cbff00"/><path d="M996 456h12v12h-12z" fill="#d1ff00"/><path d="M1008 456h12v12h-12z" fill="#d7ff00"/><path d="M1020 456h12v12h-12z" fill="#dcff00"/><path d="M1032 456h12v12h-12z" fill="#e2ff00"/><path d="M1044 456h12v12h-12z" fill="#e7ff00"/><path d="M1056 456h12v12h-12z" fill="#edff00"/><path d="M1068 456h12v12h-12z" fill="#f2ff00"/><path d="M1080 456h12v12h-12z" fill="#f7ff00"/><path d="M1092 456h12v12h-12z" fill="#fcff00"/><path d="M1104 456h12v12h-12z" fill="#fffc00"/><path d="M1116 456h12v12h-12z" fill="#fff700"/><path d="M684 468h12v12h-12z" fill="#00ff76"/><path d="M696 468h12v12h-12z" fill="#00ff74"/><path d="M708 468h12v12h-12z" fill="#00ff73"/><path d="M720 468h12v12h-12z" fill="#00ff71"/><path d="M732 468h12v12h-12z" fill="#00ff6f"/><path d="M744 468h12v12h-12z" fill="#00ff6d"/><path d="M756 468h12v12h-12z" fill="#27ff71"/><path d="M768 468h12v12h-12z" fill="#4cff77"/><path d="M780 468h12v12h-12z" fill="#62ff7a"/><path d="M792 468h12v12h-12z" fill="#72ff7c"/><path d="M804 468h12v12h-12z" fill="#7fff7c"/><path d="M816 468h12v12h-12z" fill="#87ff79"/><path d="M828 468h12v12h-12z" fill="#8eff76"/><path d="M840 468h12v12h-12z" fill="#95ff73"/><path d="M852 468h12v12h-12z" fill="#9bff6f"/><path d="M864 468h12v12h-12z" fill="#a1ff6b"/><path d="M876 468h12v12h-12z" fill="#a6ff66"/><path d="M888 468h12v12h-12z" fill="#acff62"/><path d="M900 468h12v12h-12z" fill="#b1ff5d"/><path d="M912 468h12v12h-12z" fill="#b7ff57"/><path d="M924 468h12v12h-12z" fill="#bcff51"/><path d="M936 468h12v12h-12z" fill="#c1ff49"/><path d="M948 468h12v12h-12z" fill="#c5ff41"/><path d="M960 468h12v12h-12z" fill="#caff36"/><path d="M972 468h12v12h-12z" fill="#cfff26"/><path d="M984 468h12v12h-12z" fill="#d2ff00"/><path d="M996 468h12v12h-12z" fill="#d8ff00"/><path d="M1008 468h12v12h-12z" fill="#deff00"/><path d="M1020 468h12v12h-12z" fill="#e4ff00"/><path d="M1032 468h12v12h-12z" fill="#e9ff00"/><path d="M1044 468h12v12h-12z" fill="#efff00"/><path d="M1056 468h12v12h-12z" fill="#f4ff00"/><path d="M1068 468h12v12h-12z" fill="#faff00"/><path d="M1080 468h12v12h-12z" fill="#ffff00"/><path d="M1092 468h12v12h-12z" fill="#fffa00"/><path d="M1104 468h12v12h-12z" fill="#fff500"/><path d="M1116 468h12v12h-12z" fill="#fff000"/><path d="M1128 468h12v12h-12z" fill="#ffeb00"/><path d="M1140 468h12v12h-12z" fill="#ffe700"/><path d="M1152 468h12v12h-12z" fill="#ffe200"/><path d="M684 480h12v12h-12z" fill="#00ff7f"/><path d="M696 480h12v12h-12z" fill="#00ff7d"/><path d="M708 480h12v12h-12z" fill="#00ff7b"/><path d="M720 480h12v12h-12z" fill="#00ff7a"/><path d="M732 480h12v12h-12z" fill="#00ff78"/><path d="M744 480h12v12h-12z" fill="#00ff76"/><path d="M756 480h12v12h-12z" fill="#44ff80"/><path d="M768 480h12v12h-12z" fill="#5dff83"/><path d="M780 480h12v12h-12z" fill="#6fff86"/><path d="M792 480h12v12h-12z" fill="#7eff87"/><path d="M804 480h12v12h-12z" fill="#8aff89"/><path d="M816 480h12v12h-12z" fill="#91ff86"/><path d="M828 480h12v12h-12z" fill="#98ff83"/><path d="M840 480h12v12h-12z" fill="#9eff80"/><path d="M852 480h12v12h-12z" fill="#a4ff7d"/><path d="M864 480h12v12h-12z" fill="#aaff7a"/><path d="M876 480h12v12h-12z" fill="#afff76"/><path d="M888 480h12v12h-12z" fill="#b5ff72"/><path d="M900 480h12v12h-12z" fill="#baff6e"/><path d="M912 480h12v12h-12z" fill="#bfff6a"/><path d="M924 480h12v12h-12z" fill="#c4ff65"/><path d="M936 480h12v12h-12z" fill="#c9ff60"/><path d="M948 480h12v12h-12z" fill="#ceff5a"/><path d="M960 480h12v12h-12z" fill="#d3ff54"/><path d="M972 480h12v12h-12z" fill="#d8ff4d"/><path d="M984 480h12v12h-12z" fill="#ddff44"/><path d="M996 480h12v12h-12z" fill="#e2ff39"/><path d="M1008 480h12v12h-12z" fill="#e7ff2a"/><path d="M1020 480h12v12h-12z" fill="#ebff03"/><path d="M1032 480h12v12h-12z" fill="#f1ff00"/><path d="M1044 480h12v12h-12z" fill="#f7ff00"/><path d="M1056 480h12v12h-12z" fill="#fcff00"/><path d="M1068 480h12v12h-12z" fill="#fffc00"/><path d="M1080 480h12v12h-12z" fill="#fff700"/><path d="M1092 480h12v12h-12z" fill="#fff200"/><path d="M1104 480h12v12h-12z" fill="#ffed00"/><path d="M1116 480h12v12h-12z" fill="#ffe800"/><path d="M1128 480h12v12h-12z" fill="#ffe400"/><path d="M1140 480h12v12h-12z" fill="#ffe000"/><path d="M1152 480h12v12h-12z" fill="#ffdb00"/><path d="M1164 480h12v12h-12z" fill="#ffd700"/><path d="M1176 480h12v12h-12z" fill="#ffd400"/><path d="M672 492h12v12h-12z" fill="#00ff89"/><path d="M684 492h12v12h-12z" fill="#00ff87"/><path d="M696 492h12v12h-12z" fill="#00ff86"/><path d="M708 492h12v12h-12z" fill="#00ff84"/><path d="M720 492h12v12h-12z" fill="#00ff82"/><path d="M732 492h12v12h-12z" fill="#00ff81"/><path d="M744 492h12v12h-12z" fill="#3bff88"/><path d="M756 492h12v12h-12z" fill="#58ff8c"/><path d="M768 492h12v12h-12z" fill="#6bff8f"/><path d="M780 492h12v12h-12z" fill="#7bff91"/><path d="M792 492h12v12h-12z" fill="#88ff92"/><path d="M804 492h12v12h-12z" fill="#94ff94"/><path d="M816 492h12v12h-12z" fill="#9bff92"/><path d="M828 492h12v12h-12z" fill="#a1ff8f"/><path d="M840 492h12v12h-12z" fill="#a7ff8d"/><path d="M852 492h12v12h-12z" fill="#adff8a"/><path d="M864 492h12v12h-12z" fill="#b3ff87"/><path d="M876 492h12v12h-12z" fill="#b8ff84"/><path d="M888 492h12v12h-12z" fill="#bdff81"/><path d="M900 492h12v12h-12z" fill="#c2ff7e"/><path d="M912 492h12v12h-12z" fill="#c8ff7a"/><path d="M924 492h12v12h-12z" fill="#cdff76"/><path d="M936 492h12v12h-12z" fill="#d2ff72"/><path d="M948 492h12v12h-12z" fill="#d7ff6e"/><path d="M960 492h12v12h-12z" fill="#dcff69"/><path d="M972 492h12v12h-12z" fill="#e1ff64"/><path d="M984 492h12v12h-12z" fill="#e6ff5e"/><path d="M996 492h12v12h-12z" fill="#ebff58"/><path d="M1008 492h12v12h-12z" fill="#f0ff50"/><path d="M1020 492h12v12h-12z" fill="#f5ff48"/><path d="M1032 492h12v12h-12z" fill="#faff3d"/><path d="M1044 492h12v12h-12z" fill="#ffff2e"/><path d="M1056 492h12v12h-12z" fill="#fff912"/><path d="M1068 492h12v12h-12z" fill="#fff400"/><path d="M1080 492h12v12h-12z" fill="#ffef00"/><path d="M1092 492h12v12h-12z" fill="#ffea00"/><path d="M1104 492h12v12h-12z" fill="#ffe500"/><path d="M1116 492h12v12h-12z" fill="#ffe100"/><path d="M1128 492h12v12h-12z" fill="#ffdd00"/><path d="M1140 492h12v12h-12z" fill="#ffd800"/><path d="M1152 492h12v12h-12z" fill="#ffd400"/><path d="M1164 492h12v12h-12z" fill="#ffd100"/><path d="M1176 492h12v12h-12z" fill="#ffcd00"/><path d="M1188 492h12v12h-12z" fill="#ffc900"/><path d="M1200 492h12v12h-12z" fill="#ffc600"/><path d="M1212 492h12v12h-12z" fill="#ffc200"/><path d="M660 504h12v12h-12z" fill="#00ff92"/><path d="M672 504h12v12h-12z" fill="#00ff91"/><path d="M684 504h12v12h-12z" fill="#00ff90"/><path d="M696 504h12v12h-12z" fill="#00ff8e"/><path d="M708 504h12v12h-12z" fill="#00ff8d"/><path d="M720 504h12v12h-12z" fill="#00ff8b"/><path d="M732 504h12v12h-12z" fill="#2dff90"/><path d="M744 504h12v12h-12z" fill="#51ff95"/><path d="M756 504h12v12h-12z" fill="#67ff97"/><path d="M768 504h12v12h-12z" fill="#78ff99"/><path d="M780 504h12v12h-12z" fill="#86ff9b"/><path d="M792 504h12v12h-12z" fill="#92ff9d"/><path d="M804 504h12v12h-12z" fill="#9dff9e"/><path d="M816 504h12v12h-12z" fill="#a4ff9d"/><path d="M828 504h12v12h-12z" fill="#aaff9a"/><path d="M840 504h12v12h-12z" fill="#b0ff98"/><path d="M852 504h12v12h-12z" fill="#b6ff96"/><path d="M864 504h12v12h-12z" fill="#bbff93"/><path d="M876 504h12v12h-12z" fill="#c0ff91"/><path d="M888 504h12v12h-12z" fill="#c6ff8e"/><path d="M900 504h12v12h-12z" fill="#cbff8b"/><path d="M912 504h12v12h-12z" fill="#d0ff89"/><path d="M924 504h12v12h-12z" fill="#d5ff85"/><path d="M936 504h12v12h-12z" fill="#daff82"/><path d="M948 504h12v12h-12z" fill="#dfff7e"/><path d="M960 504h12v12h-12z" fill="#e4ff7b"/><path d="M972 504h12v12h-12z" fill="#e8ff77"/><path d="M984 504h12v12h-12z" fill="#edff72"/><path d="M996 504h12v12h-12z" fill="#f2ff6d"/><path d="M1008 504h12v12h-12z" fill="#f8ff68"/><path d="M1020 504h12v12h-12z" fill="#fdff62"/><path d="M1032 504h12v12h-12z" fill="#fffc5b"/><path d="M1044 504h12v12h-12z" fill="#fff751"/><path d="M1056 504h12v12h-12z" fill="#fff248"/><path d="M1068 504h12v12h-12z" fill="#ffed3c"/><path d="M1080 504h12v12h-12z" fill="#ffe82e"/><path d="M1092 504h12v12h-12z" fill="#ffe317"/><path d="M1104 504h12v12h-12z" fill="#ffde00"/><path d="M1116 504h12v12h-12z" fill="#ffd900"/><path d="M1128 504h12v12h-12z" fill="#ffd500"/><path d="M1140 504h12v12h-12z" fill="#ffd100"/><path d="M1152 504h12v12h-12z" fill="#ffcd00"/><path d="M1164 504h12v12h-12z" fill="#ffca00"/><path d="M1176 504h12v12h-12z" fill="#ffc600"/><path d="M1188 504h12v12h-12z" fill="#ffc300"/><path d="M1200 504h12v12h-12z" fill="#ffbf00"/><path d="M1212 504h12v12h-12z" fill="#ffbc00"/><path d="M1224 504h12v12h-12z" fill="#ffb900"/><path d="M1236 504h12v12h-12z" fill="#ffb600"/><path d="M1248 504h12v12h-12z" fill="#ffb300"/><path d="M660 516h12v12h-12z" fill="#00ff9a"/><path d="M672 516h12v12h-12z" fill="#00ff99"/><path d="M684 516h12v12h-12z" fill="#00ff98"/><path d="M696 516h12v12h-12z" fill="#00ff97"/><path d="M708 516h12v12h-12z" fill="#00ff95"/><path d="M720 516h12v12h-12z" fill="#12ff96"/><path d="M732 516h12v12h-12z" fill="#4aff9d"/><path d="M744 516h12v12h-12z" fill="#63ffa0"/><path d="M756 516h12v12h-12z" fill="#75ffa2"/><path d="M768 516h12v12h-12z" fill="#84ffa4"/><path d="M780 516h12v12h-12z" fill="#91ffa5"/><path d="M792 516h12v12h-12z" fill="#9cffa7"/><path d="M804 516h12v12h-12z" fill="#a6ffa8"/><path d="M816 516h12v12h-12z" fill="#adffa7"/><path d="M828 516h12v12h-12z" fill="#b3ffa5"/><path d="M840 516h12v12h-12z" fill="#b9ffa3"/><path d="M852 516h12v12h-12z" fill="#beffa1"/><path d="M864 516h12v12h-12z" fill="#c3ff9f"/><path d="M876 516h12v12h-12z" fill="#c8ff9d"/><path d="M888 516h12v12h-12z" fill="#ceff9b"/><path d="M900 516h12v12h-12z" fill="#d3ff98"/><path d="M912 516h12v12h-12z" fill="#d8ff96"/><path d="M924 516h12v12h-12z" fill="#ddff93"/><path d="M936 516h12v12h-12z" fill="#e1ff90"/><path d="M948 516h12v12h-12z" fill="#e6ff8d"/><path d="M960 516h12v12h-12z" fill="#ebff8a"/><path d="M972 516h12v12h-12z" fill="#f0ff87"/><path d="M984 516h12v12h-12z" fill="#f5ff83"/><path d="M996 516h12v12h-12z" fill="#faff7f"/><path d="M1008 516h12v12h-12z" fill="#ffff7b"/><path d="M1020 516h12v12h-12z" fill="#fffa74"/><path d="M1032 516h12v12h-12z" fill="#fff56d"/><path d="M1044 516h12v12h-12z" fill="#fff066"/><path d="M1056 516h12v12h-12z" fill="#ffeb5e"/><path d="M1068 516h12v12h-12z" fill="#ffe756"/><path d="M1080 516h12v12h-12z" fill="#ffe24e"/><path d="M1092 516h12v12h-12z" fill="#ffde45"/><path d="M1104 516h12v12h-12z" fill="#ffd93a"/><path d="M1116 516h12v12h-12z" fill="#ffd42e"/><path d="M1128 516h12v12h-12z" fill="#ffcf1a"/><path d="M1140 516h12v12h-12z" fill="#ffca00"/><path d="M1152 516h12v12h-12z" fill="#ffc600"/><path d="M1164 516h12v12h-12z" fill="#ffc300"/><path d="M1176 516h12v12h-12z" fill="#ffbf00"/><path d="M1188 516h12v12h-12z" fill="#ffbc00"/><path d="M1200 516h12v12h-12z" fill="#ffb900"/><path d="M1212 516h12v12h-12z" fill="#ffb500"/><path d="M1224 516h12v12h-12z" fill="#ffb200"/><path d="M1236 516h12v12h-12z" fill="#ffaf00"/><path d="M1248 516h12v12h-12z" fill="#ffac00"/><path d="M1260 516h12v12h-12z" fill="#ffa900"/><path d="M1272 516h12v12h-12z" fill="#ffa700"/><path d="M1284 516h12v12h-12z" fill="#ffa400"/><path d="M648 528h12v12h-12z" fill="#00ffa4"/><path d="M660 528h12v12h-12z" fill="#00ffa3"/><path d="M672 528h12v12h-12z" fill="#00ffa2"/><path d="M684 528h12v12h-12z" fill="#00ffa1"/><path d="M696 528h12v12h-12z" fill="#00ff9f"/><path d="M708 528h12v12h-12z" fill="#00ff9e"/><path d="M720 528h12v12h-12z" fill="#40ffa5"/><path d="M732 528h12v12h-12z" fill="#5dffa8"/><path d="M744 528h12v12h-12z" fill="#72ffaa"/><path d="M756 528h12v12h-12z" fill="#82ffac"/><path d="M768 528h12v12h-12z" fill="#8fffad"/><path d="M780 528h12v12h-12z" fill="#9bffaf"/><path d="M792 528h12v12h-12z" fill="#a5ffb0"/><path d="M804 528h12v12h-12z" fill="#afffb2"/><path d="M816 528h12v12h-12z" fill="#b6ffb1"/><path d="M828 528h12v12h-12z" fill="#bcffb0"/><path d="M840 528h12v12h-12z" fill="#c1ffae"/><path d="M852 528h12v12h-12z" fill="#c6ffac"/><path d="M864 528h12v12h-12z" fill="#cbffaa"/><path d="M876 528h12v12h-12z" fill="#d1ffa8"/><path d="M888 528h12v12h-12z" fill="#d6ffa6"/><path d="M900 528h12v12h-12z" fill="#daffa4"/><path d="M912 528h12v12h-12z" fill="#dfffa2"/><path d="M924 528h12v12h-12z" fill="#e4ffa0"/><path d="M936 528h12v12h-12z" fill="#e9ff9e"/><path d="M948 528h12v12h-12z" fill="#eeff9b"/><path d="M960 528h12v12h-12z" fill="#f3ff98"/><path d="M972 528h12v12h-12z" fill="#f8ff96"/><path d="M984 528h12v12h-12z" fill="#fdff93"/><path d="M996 528h12v12h-12z" fill="#fffc8e"/><path d="M1008 528h12v12h-12z" fill="#fff787"/><path d="M1020 528h12v12h-12z" fill="#fff381"/><path d="M1032 528h12v12h-12z" fill="#ffee7b"/><path d="M1044 528h12v12h-12z" fill="#ffe975"/><path d="M1056 528h12v12h-12z" fill="#ffe56e"/><path d="M1068 528h12v12h-12z" fill="#ffe168"/><path d="M1080 528h12v12h-12z" fill="#ffdc61"/><path d="M1092 528h12v12h-12z" fill="#ffd85a"/><path d="M1104 528h12v12h-12z" fill="#ffd453"/><path d="M1116 528h12v12h-12z" fill="#ffd04b"/><path d="M1128 528h12v12h-12z" fill="#ffcb43"/><path d="M1140 528h12v12h-12z" fill="#ffc739"/><path d="M1152 528h12v12h-12z" fill="#ffc32d"/><path d="M1164 528h12v12h-12z" fill="#ffbe1c"/><path d="M1176 528h12v12h-12z" fill="#ffb800"/><path d="M1188 528h12v12h-12z" fill="#ffb500"/><path d="M1200 528h12v12h-12z" fill="#ffb200"/><path d="M1212 528h12v12h-12z" fill="#ffaf00"/><path d="M1224 528h12v12h-12z" fill="#ffac00"/><path d="M1236 528h12v12h-12z" fill="#ffa900"/><path d="M1248 528h12v12h-12z" fill="#ffa600"/><path d="M1260 528h12v12h-12z" fill="#ffa300"/><path d="M1272 528h12v12h-12z" fill="#ffa000"/><path d="M1284 528h12v12h-12z" fill="#ff9e00"/><path d="M1296 528h12v12h-12z" fill="#ff9b00"/><path d="M1308 528h12v12h-12z" fill="#ff9800"/><path d="M1320 528h12v12h-12z" fill="#ff9600"/><path d="M648 540h12v12h-12z" fill="#00ffac"/><path d="M660 540h12v12h-12z" fill="#00ffab"/><path d="M672 540h12v12h-12z" fill="#00ffaa"/><path d="M684 540h12v12h-12z" fill="#00ffa9"/><path d="M696 540h12v12h-12z" fill="#00ffa8"/><path d="M708 540h12v12h-12z" fill="#34ffad"/><path d="M720 540h12v12h-12z" fill="#57ffb0"/><path d="M732 540h12v12h-12z" fill="#6effb2"/><path d="M744 540h12v12h-12z" fill="#7fffb4"/><path d="M756 540h12v12h-12z" fill="#8dffb6"/><path d="M768 540h12v12h-12z" fill="#9affb7"/><path d="M780 540h12v12h-12z" fill="#a5ffb8"/><path d="M792 540h12v12h-12z" fill="#afffba"/><path d="M804 540h12v12h-12z" fill="#b8ffbb"/><path d="M816 540h12v12h-12z" fill="#bfffbb"/><path d="M828 540h12v12h-12z" fill="#c4ffba"/><path d="M840 540h12v12h-12z" fill="#c9ffb8"/><path d="M852 540h12v12h-12z" fill="#ceffb7"/><path d="M864 540h12v12h-12z" fill="#d4ffb5"/><path d="M876 540h12v12h-12z" fill="#d8ffb4"/><path d="M888 540h12v12h-12z" fill="#ddffb2"/><path d="M900 540h12v12h-12z" fill="#e2ffb0"/><path d="M912 540h12v12h-12z" fill="#e7ffae"/><path d="M924 540h12v12h-12z" fill="#ecffac"/><path d="M936 540h12v12h-12z" fill="#f1ffaa"/><path d="M948 540h12v12h-12z" fill="#f6ffa8"/><path d="M960 540h12v12h-12z" fill="#faffa6"/><path d="M972 540h12v12h-12z" fill="#ffffa3"/><path d="M984 540h12v12h-12z" fill="#fffa9d"/><path d="M996 540h12v12h-12z" fill="#fff597"/><path d="M1008 540h12v12h-12z" fill="#fff092"/><path d="M1020 540h12v12h-12z" fill="#ffec8c"/><path d="M1032 540h12v12h-12z" fill="#ffe786"/><path d="M1044 540h12v12h-12z" fill="#ffe381"/><path d="M1056 540h12v12h-12z" fill="#ffdf7b"/><path d="M1068 540h12v12h-12z" fill="#ffdb75"/><path d="M1080 540h12v12h-12z" fill="#ffd66f"/><path d="M1092 540h12v12h-12z" fill="#ffd26a"/><path d="M1104 540h12v12h-12z" fill="#ffce64"/><path d="M1116 540h12v12h-12z" fill="#ffca5d"/><path d="M1128 540h12v12h-12z" fill="#ffc657"/><path d="M1140 540h12v12h-12z" fill="#ffc350"/><path d="M1152 540h12v12h-12z" fill="#ffbf49"/><path d="M1164 540h12v12h-12z" fill="#ffbb41"/><path d="M1176 540h12v12h-12z" fill="#ffb738"/><path d="M1188 540h12v12h-12z" fill="#ffb32d"/><path d="M1200 540h12v12h-12z" fill="#ffae1e"/><path d="M1212 540h12v12h-12z" fill="#ffa800"/><path d="M1224 540h12v12h-12z" fill="#ffa500"/><path d="M1236 540h12v12h-12z" fill="#ffa200"/><path d="M1248 540h12v12h-12z" fill="#ff9f00"/><path d="M1260 540h12v12h-12z" fill="#ff9d00"/><path d="M1272 540h12v12h-12z" fill="#ff9a00"/><path d="M1284 540h12v12h-12z" fill="#ff9700"/><path d="M1296 540h12v12h-12z" fill="#ff9500"/><path d="M1308 540h12v12h-12z" fill="#ff9200"/><path d="M1320 540h12v12h-12z" fill="#ff8f00"/><path d="M1332 540h12v12h-12z" fill="#ff8d00"/><path d="M1344 540h12v12h-12z" fill="#ff8b00"/><path d="M1356 540h12v12h-12z" fill="#ff8800"/><path d="M636 552h12v12h-12z" fill="#00ffb6"/><path d="M648 552h12v12h-12z" fill="#00ffb5"/><path d="M660 552h12v12h-12z" fill="#00ffb4"/><path d="M672 552h12v12h-12z" fill="#00ffb3"/><path d="M684 552h12v12h-12z" fill="#00ffb2"/><path d="M696 552h12v12h-12z" fill="#1effb4"/><path d="M708 552h12v12h-12z" fill="#50ffb8"/><path d="M720 552h12v12h-12z" fill="#69ffba"/><path d="M732 552h12v12h-12z" fill="#7cffbc"/><path d="M744 552h12v12h-12z" fill="#8bffbe"/><path d="M756 552h12v12h-12z" fill="#98ffbf"/><path d="M768 552h12v12h-12z" fill="#a4ffc0"/><path d="M780 552h12v12h-12z" fill="#aeffc2"/><path d="M792 552h12v12h-12z" fill="#b8ffc3"/><path d="M804 552h12v12h-12z" fill="#c0ffc4"/><path d="M816 552h12v12h-12z" fill="#c7ffc5"/><path d="M828 552h12v12h-12z" fill="#cdffc3"/><path d="M840 552h12v12h-12z" fill="#d2ffc2"/><path d="M852 552h12v12h-12z" fill="#d7ffc1"/><path d="M864 552h12v12h-12z" fill="#dbffc0"/><path d="M876 552h12v12h-12z" fill="#e0ffbe"/><path d="M888 552h12v12h-12z" fill="#e5ffbd"/><path d="M900 552h12v12h-12z" fill="#eaffbb"/><path d="M912 552h12v12h-12z" fill="#efffba"/><path d="M924 552h12v12h-12z" fill="#f3ffb8"/><path d="M936 552h12v12h-12z" fill="#f8ffb6"/><path d="M948 552h12v12h-12z" fill="#fdffb4"/><path d="M960 552h12v12h-12z" fill="#fffcb0"/><path d="M972 552h12v12h-12z" fill="#fff8ab"/><path d="M984 552h12v12h-12z" fill="#fff3a5"/><path d="M996 552h12v12h-12z" fill="#ffeea0"/><path d="M1008 552h12v12h-12z" fill="#ffea9a"/><path d="M1020 552h12v12h-12z" fill="#ffe695"/><path d="M1032 552h12v12h-12z" fill="#ffe190"/><path d="M1044 552h12v12h-12z" fill="#ffdd8a"/><path d="M1056 552h12v12h-12z" fill="#ffd985"/><path d="M1068 552h12v12h-12z" fill="#ffd580"/><path d="M1080 552h12v12h-12z" fill="#ffd17b"/><path d="M1092 552h12v12h-12z" fill="#ffcd76"/><path d="M1104 552h12v12h-12z" fill="#ffc970"/><path d="M1116 552h12v12h-12z" fill="#ffc56b"/><path d="M1128 552h12v12h-12z" fill="#ffc266"/><path d="M1140 552h12v12h-12z" fill="#ffbe60"/><path d="M1152 552h12v12h-12z" fill="#ffba5a"/><path d="M1164 552h12v12h-12z" fill="#ffb654"/><path d="M1176 552h12v12h-12z" fill="#ffb34e"/><path d="M1188 552h12v12h-12z" fill="#ffaf47"/><path d="M1200 552h12v12h-12z" fill="#ffab3f"/><path d="M1212 552h12v12h-12z" fill="#ffa737"/><path d="M1224 552h12v12h-12z" fill="#ffa32d"/><path d="M1236 552h12v12h-12z" fill="#ff9f1f"/><path d="M1248 552h12v12h-12z" fill="#ff9900"/><path d="M1260 552h12v12h-12z" fill="#ff9600"/><path d="M1272 552h12v12h-12z" fill="#ff9300"/><path d="M1284 552h12v12h-12z" fill="#ff9100"/><path d="M1296 552h12v12h-12z" fill="#ff8e00"/><path d="M1308 552h12v12h-12z" fill="#ff8b00"/><path d="M1320 552h12v12h-12z" fill="#ff8900"/><path d="M1332 552h12v12h-12z" fill="#ff8700"/><path d="M1344 552h12v12h-12z" fill="#ff8400"/><path d="M1356 552h12v12h-12z" fill="#ff8200"/><path d="M1368 552h12v12h-12z" fill="#ff7f00"/><path d="M1380 552h12v12h-12z" fill="#ff7d00"/><path d="M636 564h12v12h-12z" fill="#00ffbe"/><path d="M648 564h12v12h-12z" fill="#00ffbe"/><path d="M660 564h12v12h-12z" fill="#00ffbd"/><path d="M672 564h12v12h-12z" fill="#00ffbc"/><path d="M684 564h12v12h-12z" fill="#00ffbb"/><path d="M696 564h12v12h-12z" fill="#47ffc1"/><path d="M708 564h12v12h-12z" fill="#64ffc3"/><path d="M720 564h12v12h-12z" fill="#78ffc4"/><path d="M732 564h12v12h-12z" fill="#89ffc6"/><path d="M744 564h12v12h-12z" fill="#97ffc7"/><path d="M756 564h12v12h-12z" fill="#a3ffc8"/><path d="M768 564h12v12h-12z" fill="#aeffca"/><path d="M780 564h12v12h-12z" fill="#b8ffcb"/><path d="M792 564h12v12h-12z" fill="#c1ffcc"/><path d="M804 564h12v12h-12z" fill="#c9ffcd"/><path d="M816 564h12v12h-12z" fill="#d0ffce"/><path d="M828 564h12v12h-12z" fill="#d5ffcd"/><path d="M840 564h12v12h-12z" fill="#daffcc"/><path d="M852 564h12v12h-12z" fill="#dfffcb"/><path d="M864 564h12v12h-12z" fill="#e3ffca"/><path d="M876 564h12v12h-12z" fill="#e8ffc9"/><path d="M888 564h12v12h-12z" fill="#edffc7"/><path d="M900 564h12v12h-12z" fill="#f1ffc6"/><path d="M912 564h12v12h-12z" fill="#f6ffc5"/><path d="M924 564h12v12h-12z" fill="#fbffc3"/><path d="M936 564h12v12h-12z" fill="#ffffc2"/><path d="M948 564h12v12h-12z" fill="#fffabc"/><path d="M960 564h12v12h-12z" fill="#fff5b7"/><path d="M972 564h12v12h-12z" fill="#fff1b1"/><path d="M984 564h12v12h-12z" fill="#ffecac"/><path d="M996 564h12v12h-12z" fill="#ffe8a7"/><path d="M1008 564h12v12h-12z" fill="#ffe4a2"/><path d="M1020 564h12v12h-12z" fill="#ffdf9d"/><path d="M1032 564h12v12h-12z" fill="#ffdb98"/><path d="M1044 564h12v12h-12z" fill="#ffd793"/><path d="M1056 564h12v12h-12z" fill="#ffd38e"/><path d="M1068 564h12v12h-12z" fill="#ffcf89"/><path d="M1080 564h12v12h-12z" fill="#ffcb84"/><path d="M1092 564h12v12h-12z" fill="#ffc880"/><path d="M1104 564h12v12h-12z" fill="#ffc47b"/><path d="M1116 564h12v12h-12z" fill="#ffc076"/><path d="M1128 564h12v12h-12z" fill="#ffbd71"/><path d="M1140 564h12v12h-12z" fill="#ffb96c"/><path d="M1152 564h12v12h-12z" fill="#ffb567"/><path d="M1164 564h12v12h-12z" fill="#ffb262"/><path d="M1176 564h12v12h-12z" fill="#ffae5d"/><path d="M1188 564h12v12h-12z" fill="#ffab57"/><path d="M1200 564h12v12h-12z" fill="#ffa752"/><path d="M1212 564h12v12h-12z" fill="#ffa44c"/><path d="M1224 564h12v12h-12z" fill="#ffa045"/><path d="M1236 564h12v12h-12z" fill="#ff9d3e"/><path d="M1248 564h12v12h-12z" fill="#ff9936"/><path d="M1260 564h12v12h-12z" fill="#ff952d"/><path d="M1272 564h12v12h-12z" fill="#ff9120"/><path d="M1284 564h12v12h-12z" fill="#ff8a00"/><path d="M1296 564h12v12h-12z" fill="#ff8700"/><path d="M1308 564h12v12h-12z" fill="#ff8500"/><path d="M1320 564h12v12h-12z" fill="#ff8200"/><path d="M1332 564h12v12h-12z" fill="#ff8000"/><path d="M1344 564h12v12h-12z" fill="#ff7e00"/><path d="M1356 564h12v12h-12z" fill="#ff7b00"/><path d="M1368 564h12v12h-12z" fill="#ff7900"/><path d="M1380 564h12v12h-12z" fill="#ff7700"/><path d="M1392 564h12v12h-12z" fill="#ff7400"/><path d="M1404 564h12v12h-12z" fill="#ff7200"/><path d="M1416 564h12v12h-12z" fill="#ff7000"/><path d="M624 576h12v12h-12z" fill="#00ffc8"/><path d="M636 576h12v12h-12z" fill="#00ffc7"/><path d="M648 576h12v12h-12z" fill="#00ffc7"/><path d="M660 576h12v12h-12z" fill="#00ffc6"/><path d="M672 576h12v12h-12z" fill="#00ffc5"/><path d="M684 576h12v12h-12z" fill="#3affc9"/><path d="M696 576h12v12h-12z" fill="#5effcb"/><path d="M708 576h12v12h-12z" fill="#75ffcd"/><path d="M720 576h12v12h-12z" fill="#86ffce"/><path d="M732 576h12v12h-12z" fill="#95ffcf"/><path d="M744 576h12v12h-12z" fill="#a2ffd0"/><path d="M756 576h12v12h-12z" fill="#aeffd2"/><path d="M768 576h12v12h-12z" fill="#b8ffd3"/><path d="M780 576h12v12h-12z" fill="#c1ffd4"/><path d="M792 576h12v12h-12z" fill="#caffd5"/><path d="M804 576h12v12h-12z" fill="#d1ffd6"/><path d="M816 576h12v12h-12z" fill="#d8ffd7"/><path d="M828 576h12v12h-12z" fill="#ddffd6"/><path d="M840 576h12v12h-12z" fill="#e2ffd6"/><path d="M852 576h12v12h-12z" fill="#e6ffd5"/><path d="M864 576h12v12h-12z" fill="#ebffd4"/><path d="M876 576h12v12h-12z" fill="#efffd3"/><path d="M888 576h12v12h-12z" fill="#f4ffd2"/><path d="M900 576h12v12h-12z" fill="#f9ffd1"/><path d="M912 576h12v12h-12z" fill="#fdffd0"/><path d="M924 576h12v12h-12z" fill="#fffccc"/><path d="M936 576h12v12h-12z" fill="#fff8c7"/><path d="M948 576h12v12h-12z" fill="#fff3c1"/><path d="M960 576h12v12h-12z" fill="#ffefbc"/><path d="M972 576h12v12h-12z" fill="#ffeab7"/><path d="M984 576h12v12h-12z" fill="#ffe6b2"/><path d="M996 576h12v12h-12z" fill="#ffe2ad"/><path d="M1008 576h12v12h-12z" fill="#ffdea8"/><path d="M1020 576h12v12h-12z" fill="#ffdaa3"/><path d="M1032 576h12v12h-12z" fill="#ffd69f"/><path d="M1044 576h12v12h-12z" fill="#ffd29a"/><path d="M1056 576h12v12h-12z" fill="#ffce96"/><path d="M1068 576h12v12h-12z" fill="#ffca91"/><path d="M1080 576h12v12h-12z" fill="#ffc68d"/><path d="M1092 576h12v12h-12z" fill="#ffc288"/><path d="M1104 576h12v12h-12z" fill="#ffbf84"/><path d="M1116 576h12v12h-12z" fill="#ffbb7f"/><path d="M1128 576h12v12h-12z" fill="#ffb87b"/><path d="M1140 576h12v12h-12z" fill="#ffb476"/><path d="M1152 576h12v12h-12z" fill="#ffb172"/><path d="M1164 576h12v12h-12z" fill="#ffad6d"/><path d="M1176 576h12v12h-12z" fill="#ffaa69"/><path d="M1188 576h12v12h-12z" fill="#ffa664"/><path d="M1200 576h12v12h-12z" fill="#ffa35f"/><path d="M1212 576h12v12h-12z" fill="#ffa05a"/><path d="M1224 576h12v12h-12z" fill="#ff9c55"/><path d="M1236 576h12v12h-12z" fill="#ff994f"/><path d="M1248 576h12v12h-12z" fill="#ff964a"/><path d="M1260 576h12v12h-12z" fill="#ff9244"/><path d="M1272 576h12v12h-12z" fill="#ff8f3d"/><path d="M1284 576h12v12h-12z" fill="#ff8b35"/><path d="M1296 576h12v12h-12z" fill="#ff872d"/><path d="M1308 576h12v12h-12z" fill="#ff8321"/><path d="M1320 576h12v12h-12z" fill="#ff7d0c"/><path d="M1332 576h12v12h-12z" fill="#ff7900"/><path d="M1344 576h12v12h-12z" fill="#ff7700"/><path d="M1356 576h12v12h-12z" fill="#ff7400"/><path d="M1368 576h12v12h-12z" fill="#ff7200"/><path d="M1380 576h12v12h-12z" fill="#ff7000"/><path d="M1392 576h12v12h-12z" fill="#ff6d00"/><path d="M1404 576h12v12h-12z" fill="#ff6b00"/><path d="M1416 576h12v12h-12z" fill="#ff6900"/><path d="M1428 576h12v12h-12z" fill="#ff6600"/><path d="M1440 576h12v12h-12z" fill="#ff6400"/><path d="M1452 576h12v12h-12z" fill="#ff6200"/><path d="M612 588h12v12h-12z" fill="#00ffd2"/><path d="M624 588h12v12h-12z" fill="#00ffd1"/><path d="M636 588h12v12h-12z" fill="#00ffd1"/><path d="M648 588h12v12h-12z" fill="#00ffd0"/><path d="M660 588h12v12h-12z" fill="#00ffd0"/><path d="M672 588h12v12h-12z" fill="#27ffd1"/><path d="M684 588h12v12h-12z" fill="#57ffd4"/><path d="M696 588h12v12h-12z" fill="#70ffd5"/><path d="M708 588h12v12h-12z" fill="#84ffd7"/><path d="M720 588h12v12h-12z" fill="#93ffd8"/><path d="M732 588h12v12h-12z" fill="#a1ffd9"/><path d="M744 588h12v12h-12z" fill="#adffda"/><path d="M756 588h12v12h-12z" fill="#b8ffdb"/><path d="M768 588h12v12h-12z" fill="#c1ffdc"/><path d="M780 588h12v12h-12z" fill="#caffdd"/><path d="M792 588h12v12h-12z" fill="#d2ffde"/><path d="M804 588h12v12h-12z" fill="#daffdf"/><path d="M816 588h12v12h-12z" fill="#e1ffe0"/><path d="M828 588h12v12h-12z" fill="#e5ffe0"/><path d="M840 588h12v12h-12z" fill="#eaffdf"/><path d="M852 588h12v12h-12z" fill="#eeffde"/><path d="M864 588h12v12h-12z" fill="#f2ffde"/><path d="M876 588h12v12h-12z" fill="#f7ffdd"/><path d="M888 588h12v12h-12z" fill="#fbffdc"/><path d="M900 588h12v12h-12z" fill="#ffffdb"/><path d="M912 588h12v12h-12z" fill="#fffad5"/><path d="M924 588h12v12h-12z" fill="#fff6d0"/><path d="M936 588h12v12h-12z" fill="#fff1cb"/><path d="M948 588h12v12h-12z" fill="#ffedc6"/><path d="M960 588h12v12h-12z" fill="#ffe9c1"/><path d="M972 588h12v12h-12z" fill="#ffe4bc"/><path d="M984 588h12v12h-12z" fill="#ffe0b7"/><path d="M996 588h12v12h-12z" fill="#ffdcb2"/><path d="M1008 588h12v12h-12z" fill="#ffd8ae"/><path d="M1020 588h12v12h-12z" fill="#ffd4a9"/><path d="M1032 588h12v12h-12z" fill="#ffd0a5"/><path d="M1044 588h12v12h-12z" fill="#ffcca1"/><path d="M1056 588h12v12h-12z" fill="#ffc89c"/><path d="M1068 588h12v12h-12z" fill="#ffc598"/><path d="M1080 588h12v12h-12z" fill="#ffc194"/><path d="M1092 588h12v12h-12z" fill="#ffbd8f"/><path d="M1104 588h12v12h-12z" fill="#ffba8b"/><path d="M1116 588h12v12h-12z" fill="#ffb687"/><path d="M1128 588h12v12h-12z" fill="#ffb383"/><path d="M1140 588h12v12h-12z" fill="#ffaf7f"/><path d="M1152 588h12v12h-12z" fill="#ffac7b"/><path d="M1164 588h12v12h-12z" fill="#ffa976"/><path d="M1176 588h12v12h-12z" fill="#ffa572"/><path d="M1188 588h12v12h-12z" fill="#ffa26e"/><path d="M1200 588h12v12h-12z" fill="#ff9f6a"/><path d="M1212 588h12v12h-12z" fill="#ff9b65"/><path d="M1224 588h12v12h-12z" fill="#ff9861"/><path d="M1236 588h12v12h-12z" fill="#ff955c"/><path d="M1248 588h12v12h-12z" fill="#ff9258"/><path d="M1260 588h12v12h-12z" fill="#ff8e53"/><path d="M1272 588h12v12h-12z" fill="#ff8b4d"/><path d="M1284 588h12v12h-12z" fill="#ff8848"/><path d="M1296 588h12v12h-12z" fill="#ff8442"/><path d="M1308 588h12v12h-12z" fill="#ff813c"/><path d="M1320 588h12v12h-12z" fill="#ff7d35"/><path d="M1332 588h12v12h-12z" fill="#ff792d"/><path d="M1344 588h12v12h-12z" fill="#ff7522"/><path d="M1356 588h12v12h-12z" fill="#ff7010"/><path d="M1368 588h12v12h-12z" fill="#ff6b00"/><path d="M1380 588h12v12h-12z" fill="#ff6800"/><path d="M1392 588h12v12h-12z" fill="#ff6600"/><path d="M1404 588h12v12h-12z" fill="#ff6400"/><path d="M1416 588h12v12h-12z" fill="#ff6100"/><path d="M1428 588h12v12h-12z" fill="#ff5f00"/><path d="M1440 588h12v12h-12z" fill="#ff5d00"/><path d="M1452 588h12v12h-12z" fill="#ff5a00"/><path d="M1464 588h12v12h-12z" fill="#ff5800"/><path d="M1476 588h12v12h-12z" fill="#ff5600"/><path d="M1488 588h12v12h-12z" fill="#ff5300"/><path d="M612 600h12v12h-12z" fill="#00ffdc"/><path d="M624 600h12v12h-12z" fill="#00ffdb"/><path d="M636 600h12v12h-12z" fill="#00ffdb"/><path d="M648 600h12v12h-12z" fill="#00ffda"/><path d="M660 600h12v12h-12z" fill="#00ffda"/><path d="M672 600h12v12h-12z" fill="#4effdd"/><path d="M684 600h12v12h-12z" fill="#6bffde"/><path d="M696 600h12v12h-12z" fill="#80ffdf"/><path d="M708 600h12v12h-12z" fill="#92ffe0"/><path d="M720 600h12v12h-12z" fill="#a0ffe1"/><path d="M732 600h12v12h-12z" fill="#adffe2"/><path d="M744 600h12v12h-12z" fill="#b8ffe3"/><path d="M756 600h12v12h-12z" fill="#c2ffe4"/><path d="M768 600h12v12h-12z" fill="#cbffe4"/><path d="M780 600h12v12h-12z" fill="#d3ffe5"/><path d="M792 600h12v12h-12z" fill="#dbffe6"/><path d="M804 600h12v12h-12z" fill="#e2ffe8"/><path d="M816 600h12v12h-12z" fill="#e9ffe9"/><path d="M828 600h12v12h-12z" fill="#edffe8"/><path d="M840 600h12v12h-12z" fill="#f1ffe8"/><path d="M852 600h12v12h-12z" fill="#f5ffe7"/><path d="M864 600h12v12h-12z" fill="#f9ffe7"/><path d="M876 600h12v12h-12z" fill="#fdffe6"/><path d="M888 600h12v12h-12z" fill="#fffce3"/><path d="M900 600h12v12h-12z" fill="#fff8de"/><path d="M912 600h12v12h-12z" fill="#fff4d9"/><path d="M924 600h12v12h-12z" fill="#ffefd4"/><path d="M936 600h12v12h-12z" fill="#ffebcf"/><path d="M948 600h12v12h-12z" fill="#ffe7ca"/><path d="M960 600h12v12h-12z" fill="#ffe3c5"/><path d="M972 600h12v12h-12z" fill="#ffdec0"/><path d="M984 600h12v12h-12z" fill="#ffdabc"/><path d="M996 600h12v12h-12z" fill="#ffd6b7"/><path d="M1008 600h12v12h-12z" fill="#ffd2b3"/><path d="M1020 600h12v12h-12z" fill="#ffceaf"/><path d="M1032 600h12v12h-12z" fill="#ffcaaa"/><path d="M1044 600h12v12h-12z" fill="#ffc7a6"/><path d="M1056 600h12v12h-12z" fill="#ffc3a2"/><path d="M1068 600h12v12h-12z" fill="#ffbf9e"/><path d="M1080 600h12v12h-12z" fill="#ffbc9a"/><path d="M1092 600h12v12h-12z" fill="#ffb896"/><path d="M1104 600h12v12h-12z" fill="#ffb592"/><path d="M1116 600h12v12h-12z" fill="#ffb18e"/><path d="M1128 600h12v12h-12z" fill="#ffae8a"/><path d="M1140 600h12v12h-12z" fill="#ffaa86"/><path d="M1152 600h12v12h-12z" fill="#ffa782"/><path d="M1164 600h12v12h-12z" fill="#ffa47f"/><path d="M1176 600h12v12h-12z" fill="#ffa07b"/><path d="M1188 600h12v12h-12z" fill="#ff9d77"/><path d="M1200 600h12v12h-12z" fill="#ff9a73"/><path d="M1212 600h12v12h-12z" fill="#ff976f"/><path d="M1224 600h12v12h-12z" fill="#ff946b"/><path d="M1236 600h12v12h-12z" fill="#ff9067"/><path d="M1248 600h12v12h-12z" fill="#ff8d62"/><path d="M1260 600h12v12h-12z" fill="#ff8a5e"/><path d="M1272 600h12v12h-12z" fill="#ff875a"/><path d="M1284 600h12v12h-12z" fill="#ff8355"/><path d="M1296 600h12v12h-12z" fill="#ff8051"/><path d="M1308 600h12v12h-12z" fill="#ff7d4c"/><path d="M1320 600h12v12h-12z" fill="#ff7a47"/><path d="M1332 600h12v12h-12z" fill="#ff7641"/><path d="M1344 600h12v12h-12z" fill="#ff733b"/><path d="M1356 600h12v12h-12z" fill="#ff6f34"/><path d="M1368 600h12v12h-12z" fill="#ff6b2c"/><path d="M1380 600h12v12h-12z" fill="#ff6723"/><path d="M1392 600h12v12h-12z" fill="#ff6213"/><path d="M1404 600h12v12h-12z" fill="#ff5c00"/><path d="M1416 600h12v12h-12z" fill="#ff5900"/><path d="M1428 600h12v12h-12z" fill="#ff5700"/><path d="M1440 600h12v12h-12z" fill="#ff5400"/><path d="M1452 600h12v12h-12z" fill="#ff5200"/><path d="M1464 600h12v12h-12z" fill="#ff5000"/><path d="M1476 600h12v12h-12z" fill="#ff4d00"/><path d="M1488 600h12v12h-12z" fill="#ff4b00"/><path d="M1500 600h12v12h-12z" fill="#ff4800"/><path d="M1512 600h12v12h-12z" fill="#ff4600"/><path d="M1524 600h12v12h-12z" fill="#ff4300"/><path d="M600 612h12v12h-12z" fill="#00ffe6"/><path d="M612 612h12v12h-12z" fill="#00ffe6"/><path d="M624 612h12v12h-12z" fill="#00ffe5"/><path d="M636 612h12v12h-12z" fill="#00ffe5"/><path d="M648 612h12v12h-12z" fill="#00ffe5"/><path d="M660 612h12v12h-12z" fill="#42ffe6"/><path d="M672 612h12v12h-12z" fill="#65ffe8"/><path d="M684 612h12v12h-12z" fill="#7dffe8"/><path d="M696 612h12v12h-12z" fill="#8fffe9"/><path d="M708 612h12v12h-12z" fill="#9fffea"/><path d="M720 612h12v12h-12z" fill="#acffea"/><path d="M732 612h12v12h-12z" fill="#b8ffeb"/><path d="M744 612h12v12h-12z" fill="#c2ffec"/><path d="M756 612h12v12h-12z" fill="#ccffec"/><path d="M768 612h12v12h-12z" fill="#d5ffed"/><path d="M780 612h12v12h-12z" fill="#dcffee"/><path d="M792 612h12v12h-12z" fill="#e4ffef"/><path d="M804 612h12v12h-12z" fill="#eafff0"/><path d="M816 612h12v12h-12z" fill="#f0fff1"/><path d="M828 612h12v12h-12z" fill="#f4fff1"/><path d="M840 612h12v12h-12z" fill="#f8fff0"/><path d="M852 612h12v12h-12z" fill="#fcfff0"/><path d="M864 612h12v12h-12z" fill="#ffffef"/><path d="M876 612h12v12h-12z" fill="#fffbea"/><path d="M888 612h12v12h-12z" fill="#fff6e5"/><path d="M900 612h12v12h-12z" fill="#fff2e0"/><path d="M912 612h12v12h-12z" fill="#ffeedc"/><path d="M924 612h12v12h-12z" fill="#ffead7"/><path d="M936 612h12v12h-12z" fill="#ffe5d2"/><path d="M948 612h12v12h-12z" fill="#ffe1cd"/><path d="M960 612h12v12h-12z" fill="#ffddc9"/><path d="M972 612h12v12h-12z" fill="#ffd9c4"/><path d="M984 612h12v12h-12z" fill="#ffd5c0"/><path d="M996 612h12v12h-12z" fill="#ffd1bc"/><path d="M1008 612h12v12h-12z" fill="#ffcdb8"/><path d="M1020 612h12v12h-12z" fill="#ffc9b3"/><path d="M1032 612h12v12h-12z" fill="#ffc5af"/><path d="M1044 612h12v12h-12z" fill="#ffc1ab"/><path d="M1056 612h12v12h-12z" fill="#ffbea7"/><path d="M1068 612h12v12h-12z" fill="#ffbaa4"/><path d="M1080 612h12v12h-12z" fill="#ffb6a0"/><path d="M1092 612h12v12h-12z" fill="#ffb39c"/><path d="M1104 612h12v12h-12z" fill="#ffb098"/><path d="M1116 612h12v12h-12z" fill="#ffac94"/><path d="M1128 612h12v12h-12z" fill="#ffa991"/><path d="M1140 612h12v12h-12z" fill="#ffa58d"/><path d="M1152 612h12v12h-12z" fill="#ffa289"/><path d="M1164 612h12v12h-12z" fill="#ff9f86"/><path d="M1176 612h12v12h-12z" fill="#ff9c82"/><path d="M1188 612h12v12h-12z" fill="#ff987e"/><path d="M1200 612h12v12h-12z" fill="#ff957b"/><path d="M1212 612h12v12h-12z" fill="#ff9277"/><path d="M1224 612h12v12h-12z" fill="#ff8f73"/><path d="M1236 612h12v12h-12z" fill="#ff8b6f"/><path d="M1248 612h12v12h-12z" fill="#ff886c"/><path d="M1260 612h12v12h-12z" fill="#ff8568"/><path d="M1272 612h12v12h-12z" fill="#ff8264"/><path d="M1284 612h12v12h-12z" fill="#ff7f60"/><path d="M1296 612h12v12h-12z" fill="#ff7c5c"/><path d="M1308 612h12v12h-12z" fill="#ff7858"/><path d="M1320 612h12v12h-12z" fill="#ff7553"/><path d="M1332 612h12v12h-12z" fill="#ff724f"/><path d="M1344 612h12v12h-12z" fill="#ff6e4a"/><path d="M1356 612h12v12h-12z" fill="#ff6b45"/><path d="M1368 612h12v12h-12z" fill="#ff6740"/><path d="M1380 612h12v12h-12z" fill="#ff643a"/><path d="M1392 612h12v12h-12z" fill="#ff6034"/><path d="M1404 612h12v12h-12z" fill="#ff5c2c"/><path d="M1416 612h12v12h-12z" fill="#ff5823"/><path d="M1428 612h12v12h-12z" fill="#ff5216"/><path d="M1440 612h12v12h-12z" fill="#ff4b00"/><path d="M1452 612h12v12h-12z" fill="#ff4900"/><path d="M1464 612h12v12h-12z" fill="#ff4600"/><path d="M1476 612h12v12h-12z" fill="#ff4300"/><path d="M1488 612h12v12h-12z" fill="#ff4100"/><path d="M1500 612h12v12h-12z" fill="#ff3e00"/><path d="M1512 612h12v12h-12z" fill="#ff3b00"/><path d="M1524 612h12v12h-12z" fill="#ff3800"/><path d="M1536 612h12v12h-12z" fill="#ff3500"/><path d="M1548 612h12v12h-12z" fill="#ff3200"/><path d="M1560 612h12v12h-12z" fill="#ff2e00"/><path d="M600 624h12v12h-12z" fill="#00fff0"/><path d="M612 624h12v12h-12z" fill="#00fff0"/><path d="M624 624h12v12h-12z" fill="#00fff0"/><path d="M636 624h12v12h-12z" fill="#00fff0"/><path d="M648 624h12v12h-12z" fill="#30fff1"/><path d="M660 624h12v12h-12z" fill="#5efff1"/><path d="M672 624h12v12h-12z" fill="#79fff2"/><path d="M684 624h12v12h-12z" fill="#8dfff2"/><path d="M696 624h12v12h-12z" fill="#9dfff3"/><path d="M708 624h12v12h-12z" fill="#abfff3"/><path d="M720 624h12v12h-12z" fill="#b8fff3"/><path d="M732 624h12v12h-12z" fill="#c3fff4"/><path d="M744 624h12v12h-12z" fill="#cdfff4"/><path d="M756 624h12v12h-12z" fill="#d6fff5"/><path d="M768 624h12v12h-12z" fill="#defff5"/><path d="M780 624h12v12h-12z" fill="#e5fff6"/><path d="M792 624h12v12h-12z" fill="#ecfff6"/><path d="M804 624h12v12h-12z" fill="#f2fff7"/><path d="M816 624h12v12h-12z" fill="#f7fff8"/><path d="M828 624h12v12h-12z" fill="#fbfff8"/><path d="M840 624h12v12h-12z" fill="#fefff8"/><path d="M852 624h12v12h-12z" fill="#fffdf5"/><path d="M864 624h12v12h-12z" fill="#fff9f1"/><path d="M876 624h12v12h-12z" fill="#fff5ec"/><path d="M888 624h12v12h-12z" fill="#fff1e8"/><path d="M900 624h12v12h-12z" fill="#ffece3"/><path d="M912 624h12v12h-12z" fill="#ffe8de"/><path d="M924 624h12v12h-12z" fill="#ffe4da"/><path d="M936 624h12v12h-12z" fill="#ffe0d5"/><path d="M948 624h12v12h-12z" fill="#ffdbd1"/><path d="M960 624h12v12h-12z" fill="#ffd7cc"/><path d="M972 624h12v12h-12z" fill="#ffd3c8"/><path d="M984 624h12v12h-12z" fill="#ffcfc4"/><path d="M996 624h12v12h-12z" fill="#ffcbc0"/><path d="M1008 624h12v12h-12z" fill="#ffc7bc"/><path d="M1020 624h12v12h-12z" fill="#ffc3b8"/><path d="M1032 624h12v12h-12z" fill="#ffc0b4"/><path d="M1044 624h12v12h-12z" fill="#ffbcb0"/><path d="M1056 624h12v12h-12z" fill="#ffb8ac"/><path d="M1068 624h12v12h-12z" fill="#ffb5a8"/><path d="M1080 624h12v12h-12z" fill="#ffb1a5"/><path d="M1092 624h12v12h-12z" fill="#ffaea1"/><path d="M1104 624h12v12h-12z" fill="#ffaa9d"/><path d="M1116 624h12v12h-12z" fill="#ffa79a"/><path d="M1128 624h12v12h-12z" fill="#ffa496"/><path d="M1140 624h12v12h-12z" fill="#ffa093"/><path d="M1152 624h12v12h-12z" fill="#ff9d8f"/><path d="M1164 624h12v12h-12z" fill="#ff9a8c"/><path d="M1176 624h12v12h-12z" fill="#ff9688"/><path d="M1188 624h12v12h-12z" fill="#ff9385"/><path d="M1200 624h12v12h-12z" fill="#ff9081"/><path d="M1212 624h12v12h-12z" fill="#ff8d7e"/><path d="M1224 624h12v12h-12z" fill="#ff8a7b"/><path d="M1236 624h12v12h-12z" fill="#ff8677"/><path d="M1248 624h12v12h-12z" fill="#ff8374"/><path d="M1260 624h12v12h-12z" fill="#ff8070"/><path d="M1272 624h12v12h-12z" fill="#ff7d6c"/><path d="M1284 624h12v12h-12z" fill="#ff7a69"/><path d="M1296 624h12v12h-12z" fill="#ff7665"/><path d="M1308 624h12v12h-12z" fill="#ff7361"/><path d="M1320 624h12v12h-12z" fill="#ff705e"/><path d="M1332 624h12v12h-12z" fill="#ff6d5a"/><path d="M1344 624h12v12h-12z" fill="#ff6956"/><path d="M1356 624h12v12h-12z" fill="#ff6652"/><path d="M1368 624h12v12h-12z" fill="#ff624d"/><path d="M1380 624h12v12h-12z" fill="#ff5f49"/><path d="M1392 624h12v12h-12z" fill="#ff5b44"/><path d="M1404 624h12v12h-12z" fill="#ff573f"/><path d="M1416 624h12v12h-12z" fill="#ff5339"/><path d="M1428 624h12v12h-12z" fill="#ff4f33"/><path d="M1440 624h12v12h-12z" fill="#ff4b2c"/><path d="M1452 624h12v12h-12z" fill="#ff4624"/><path d="M1464 624h12v12h-12z" fill="#ff4018"/><path d="M1476 624h12v12h-12z" fill="#ff3800"/><path d="M1488 624h12v12h-12z" fill="#ff3400"/><path d="M1500 624h12v12h-12z" fill="#ff3100"/><path d="M1512 624h12v12h-12z" fill="#ff2d00"/><path d="M1524 624h12v12h-12z" fill="#ff2a00"/><path d="M1536 624h12v12h-12z" fill="#ff2500"/><path d="M1548 624h12v12h-12z" fill="#ff2100"/><path d="M1560 624h12v12h-12z" fill="#ff1b00"/><path d="M588 636h12v12h-12z" fill="#00fffb"/><path d="M600 636h12v12h-12z" fill="#00fffb"/><path d="M612 636h12v12h-12z" fill="#00fffb"/><path d="M624 636h12v12h-12z" fill="#00fffb"/><path d="M636 636h12v12h-12z" fill="#00fffb"/><path d="M648 636h12v12h-12z" fill="#56fffc"/><path d="M660 636h12v12h-12z" fill="#74fffc"/><path d="M672 636h12v12h-12z" fill="#8afffc"/><path d="M684 636h12v12h-12z" fill="#9cfffc"/><path d="M696 636h12v12h-12z" fill="#abfffc"/><path d="M708 636h12v12h-12z" fill="#b8fffc"/><path d="M720 636h12v12h-12z" fill="#c3fffc"/><path d="M732 636h12v12h-12z" fill="#cefffc"/><path d="M744 636h12v12h-12z" fill="#d7fffd"/><path d="M756 636h12v12h-12z" fill="#e0fffd"/><path d="M768 636h12v12h-12z" fill="#e7fffd"/><path d="M780 636h12v12h-12z" fill="#eefffd"/><path d="M792 636h12v12h-12z" fill="#f4fffd"/><path d="M804 636h12v12h-12z" fill="#f9fffe"/><path d="M816 636h12v12h-12z" fill="#fdfffe"/><path d="M828 636h12v12h-12z" fill="#fffffe"/><path d="M840 636h12v12h-12z" fill="#fffcfa"/><path d="M852 636h12v12h-12z" fill="#fff8f7"/><path d="M864 636h12v12h-12z" fill="#fff4f2"/><path d="M876 636h12v12h-12z" fill="#fff0ee"/><path d="M888 636h12v12h-12z" fill="#ffebe9"/><path d="M900 636h12v12h-12z" fill="#ffe7e5"/><path d="M912 636h12v12h-12z" fill="#ffe3e1"/><path d="M924 636h12v12h-12z" fill="#ffdedc"/><path d="M936 636h12v12h-12z" fill="#ffdad8"/><path d="M948 636h12v12h-12z" fill="#ffd6d4"/><path d="M960 636h12v12h-12z" fill="#ffd2d0"/><path d="M972 636h12v12h-12z" fill="#ffcecb"/><path d="M984 636h12v12h-12z" fill="#ffcac7"/><path d="M996 636h12v12h-12z" fill="#ffc6c3"/><path d="M1008 636h12v12h-12z" fill="#ffc2c0"/><path d="M1020 636h12v12h-12z" fill="#ffbebc"/><path d="M1032 636h12v12h-12z" fill="#ffbab8"/><path d="M1044 636h12v12h-12z" fill="#ffb7b4"/><path d="M1056 636h12v12h-12z" fill="#ffb3b1"/><path d="M1068 636h12v12h-12z" fill="#ffb0ad"/><path d="M1080 636h12v12h-12z" fill="#ffaca9"/><path d="M1092 636h12v12h-12z" fill="#ffa8a6"/><path d="M1104 636h12v12h-12z" fill="#ffa5a2"/><path d="M1116 636h12v12h-12z" fill="#ffa29f"/><path d="M1128 636h12v12h-12z" fill="#ff9e9c"/><path d="M1140 636h12v12h-12z" fill="#ff9b98"/><path d="M1152 636h12v12h-12z" fill="#ff9895"/><path d="M1164 636h12v12h-12z" fill="#ff9492"/><path d="M1176 636h12v12h-12z" fill="#ff918e"/><path d="M1188 636h12v12h-12z" fill="#ff8e8b"/><path d="M1200 636h12v12h-12z" fill="#ff8b88"/><path d="M1212 636h12v12h-12z" fill="#ff8784"/><path d="M1224 636h12v12h-12z" fill="#ff8481"/><path d="M1236 636h12v12h-12z" fill="#ff817e"/><path d="M1248 636h12v12h-12z" fill="#ff7e7a"/><path d="M1260 636h12v12h-12z" fill="#ff7a77"/><path d="M1272 636h12v12h-12z" fill="#ff7774"/><path d="M1284 636h12v12h-12z" fill="#ff7471"/><path d="M1296 636h12v12h-12z" fill="#ff716d"/><path d="M1308 636h12v12h-12z" fill="#ff6d6a"/><path d="M1320 636h12v12h-12z" fill="#ff6a66"/><path d="M1332 636h12v12h-12z" fill="#ff6663"/><path d="M1344 636h12v12h-12z" fill="#ff635f"/><path d="M1356 636h12v12h-12z" fill="#ff5f5c"/><path d="M1368 636h12v12h-12z" fill="#ff5c58"/><path d="M1380 636h12v12h-12z" fill="#ff5854"/><path d="M1392 636h12v12h-12z" fill="#ff5450"/><path d="M1404 636h12v12h-12z" fill="#ff504c"/><path d="M1416 636h12v12h-12z" fill="#ff4c48"/><path d="M1428 636h12v12h-12z" fill="#ff4843"/><path d="M1440 636h12v12h-12z" fill="#ff443e"/><path d="M1452 636h12v12h-12z" fill="#ff3f39"/><path d="M1464 636h12v12h-12z" fill="#ff3a33"/><path d="M1476 636h12v12h-12z" fill="#ff342c"/><path d="M1488 636h12v12h-12z" fill="#ff2d24"/><path d="M1500 636h12v12h-12z" fill="#ff2519"/><path d="M1512 636h12v12h-12z" fill="#ff1800"/><path d="M1524 636h12v12h-12z" fill="#ff0f00"/><path d="M1536 636h12v12h-12z" fill="#ff0000"/><path d="M1548 636h12v12h-12z" fill="#ff0000"/><path d="M1560 636h12v12h-12z" fill="#ff0000"/><path d="M588 648h12v12h-12z" fill="#00f7ff"/><path d="M600 648h12v12h-12z" fill="#00f7ff"/><path d="M612 648h12v12h-12z" fill="#00f7ff"/><path d="M624 648h12v12h-12z" fill="#00f7ff"/><path d="M636 648h12v12h-12z" fill="#48f7ff"/><path d="M648 648h12v12h-12z" fill="#6bf8ff"/><path d="M660 648h12v12h-12z" fill="#83f8ff"/><path d="M672 648h12v12h-12z" fill="#95f8ff"/><path d="M684 648h12v12h-12z" fill="#a5f8ff"/><path d="M696 648h12v12h-12z" fill="#b2f9ff"/><path d="M708 648h12v12h-12z" fill="#bef9ff"/><path d="M720 648h12v12h-12z" fill="#c9f9ff"/><path d="M732 648h12v12h-12z" fill="#d3f9ff"/><path d="M744 648h12v12h-12z" fill="#dbfaff"/><path d="M756 648h12v12h-12z" fill="#e3faff"/><path d="M768 648h12v12h-12z" fill="#eafaff"/><path d="M780 648h12v12h-12z" fill="#f1fbff"/><path d="M792 648h12v12h-12z" fill="#f6fbff"/><path d="M804 648h12v12h-12z" fill="#fbfcff"/><path d="M816 648h12v12h-12z" fill="#fefcff"/><path d="M828 648h12v12h-12z" fill="#fffafe"/><path d="M840 648h12v12h-12z" fill="#fff6fa"/><path d="M852 648h12v12h-12z" fill="#fff2f6"/><path d="M864 648h12v12h-12z" fill="#ffedf2"/><path d="M876 648h12v12h-12z" fill="#ffe9ee"/><path d="M888 648h12v12h-12z" fill="#ffe4e9"/><path d="M900 648h12v12h-12z" fill="#ffe0e5"/><path d="M912 648h12v12h-12z" fill="#ffdbe1"/><path d="M924 648h12v12h-12z" fill="#ffd7dd"/><path d="M936 648h12v12h-12z" fill="#ffd2d8"/><path d="M948 648h12v12h-12z" fill="#ffced4"/><path d="M960 648h12v12h-12z" fill="#ffcad0"/><path d="M972 648h12v12h-12z" fill="#ffc6cc"/><path d="M984 648h12v12h-12z" fill="#ffc2c8"/><path d="M996 648h12v12h-12z" fill="#ffbec4"/><path d="M1008 648h12v12h-12z" fill="#ffbac1"/><path d="M1020 648h12v12h-12z" fill="#ffb6bd"/><path d="M1032 648h12v12h-12z" fill="#ffb2b9"/><path d="M1044 648h12v12h-12z" fill="#ffafb5"/><path d="M1056 648h12v12h-12z" fill="#ffabb2"/><path d="M1068 648h12v12h-12z" fill="#ffa7ae"/><path d="M1080 648h12v12h-12z" fill="#ffa4ab"/><path d="M1092 648h12v12h-12z" fill="#ffa0a7"/><path d="M1104 648h12v12h-12z" fill="#ff9da4"/><path d="M1116 648h12v12h-12z" fill="#ff99a1"/><path d="M1128 648h12v12h-12z" fill="#ff969d"/><path d="M1140 648h12v12h-12z" fill="#ff929a"/><path d="M1152 648h12v12h-12z" fill="#ff8f97"/><path d="M1164 648h12v12h-12z" fill="#ff8b94"/><path d="M1176 648h12v12h-12z" fill="#ff8890"/><path d="M1188 648h12v12h-12z" fill="#ff848d"/><path d="M1200 648h12v12h-12z" fill="#ff818a"/><path d="M1212 648h12v12h-12z" fill="#ff7e87"/><path d="M1224 648h12v12h-12z" fill="#ff7a83"/><path d="M1236 648h12v12h-12z" fill="#ff7780"/><path d="M1248 648h12v12h-12z" fill="#ff737d"/><path d="M1260 648h12v12h-12z" fill="#ff707a"/><path d="M1272 648h12v12h-12z" fill="#ff6d77"/><path d="M1284 648h12v12h-12z" fill="#ff6973"/><path d="M1296 648h12v12h-12z" fill="#ff6570"/><path d="M1308 648h12v12h-12z" fill="#ff626d"/><path d="M1320 648h12v12h-12z" fill="#ff5e69"/><path d="M1332 648h12v12h-12z" fill="#ff5a66"/><path d="M1344 648h12v12h-12z" fill="#ff5663"/><path d="M1356 648h12v12h-12z" fill="#ff525f"/><path d="M1368 648h12v12h-12z" fill="#ff4e5c"/><path d="M1380 648h12v12h-12z" fill="#ff4a58"/><path d="M1392 648h12v12h-12z" fill="#ff4554"/><path d="M1404 648h12v12h-12z" fill="#ff4050"/><path d="M1416 648h12v12h-12z" fill="#ff3b4c"/><path d="M1428 648h12v12h-12z" fill="#ff3548"/><path d="M1440 648h12v12h-12z" fill="#ff2e43"/><path d="M1452 648h12v12h-12z" fill="#ff263e"/><path d="M1464 648h12v12h-12z" fill="#ff1c38"/><path d="M1476 648h12v12h-12z" fill="#ff002d"/><path d="M1488 648h12v12h-12z" fill="#ff002a"/><path d="M1500 648h12v12h-12z" fill="#ff0025"/><path d="M1512 648h12v12h-12z" fill="#ff0020"/><path d="M1524 648h12v12h-12z" fill="#ff001b"/><path d="M1536 648h12v12h-12z" fill="#ff0013"/><path d="M1548 648h12v12h-12z" fill="#ff0000"/><path d="M1560 648h12v12h-12z" fill="#ff0000"/><path d="M576 660h12v12h-12z" fill="#00ecff"/><path d="M588 660h12v12h-12z" fill="#00ecff"/><path d="M600 660h12v12h-12z" fill="#00ecff"/><path d="M612 660h12v12h-12z" fill="#00ecff"/><path d="M624 660h12v12h-12z" fill="#35edff"/><path d="M636 660h12v12h-12z" fill="#60edff"/><path d="M648 660h12v12h-12z" fill="#7aeeff"/><path d="M660 660h12v12h-12z" fill="#8defff"/><path d="M672 660h12v12h-12z" fill="#9defff"/><path d="M684 660h12v12h-12z" fill="#abf0ff"/><path d="M696 660h12v12h-12z" fill="#b7f0ff"/><path d="M708 660h12v12h-12z" fill="#c2f0ff"/><path d="M720 660h12v12h-12z" fill="#ccf1ff"/><path d="M732 660h12v12h-12z" fill="#d5f2ff"/><path d="M744 660h12v12h-12z" fill="#ddf2ff"/><path d="M756 660h12v12h-12z" fill="#e4f3ff"/><path d="M768 660h12v12h-12z" fill="#ebf4ff"/><path d="M780 660h12v12h-12z" fill="#f1f4ff"/><path d="M792 660h12v12h-12z" fill="#f6f5ff"/><path d="M804 660h12v12h-12z" fill="#f9f5ff"/><path d="M816 660h12v12h-12z" fill="#fdf5ff"/><path d="M828 660h12v12h-12z" fill="#fff3fe"/><path d="M840 660h12v12h-12z" fill="#ffeefa"/><path d="M852 660h12v12h-12z" fill="#ffeaf6"/><path d="M864 660h12v12h-12z" fill="#ffe5f2"/><path d="M876 660h12v12h-12z" fill="#ffe0ed"/><path d="M888 660h12v12h-12z" fill="#ffdbe9"/><path d="M900 660h12v12h-12z" fill="#ffd7e5"/><path d="M912 660h12v12h-12z" fill="#ffd2e0"/><path d="M924 660h12v12h-12z" fill="#ffcddc"/><path d="M936 660h12v12h-12z" fill="#ffc9d8"/><path d="M948 660h12v12h-12z" fill="#ffc5d4"/><path d="M960 660h12v12h-12z" fill="#ffc0d0"/><path d="M972 660h12v12h-12z" fill="#ffbccc"/><path d="M984 660h12v12h-12z" fill="#ffb8c8"/><path d="M996 660h12v12h-12z" fill="#ffb4c4"/><path d="M1008 660h12v12h-12z" fill="#ffb0c1"/><path d="M1020 660h12v12h-12z" fill="#ffacbd"/><path d="M1032 660h12v12h-12z" fill="#ffa8b9"/><path d="M1044 660h12v12h-12z" fill="#ffa5b6"/><path d="M1056 660h12v12h-12z" fill="#ffa1b2"/><path d="M1068 660h12v12h-12z" fill="#ff9daf"/><path d="M1080 660h12v12h-12z" fill="#ff99ab"/><path d="M1092 660h12v12h-12z" fill="#ff96a8"/><path d="M1104 660h12v12h-12z" fill="#ff92a5"/><path d="M1116 660h12v12h-12z" fill="#ff8ea1"/><path d="M1128 660h12v12h-12z" fill="#ff8b9e"/><path d="M1140 660h12v12h-12z" fill="#ff879b"/><path d="M1152 660h12v12h-12z" fill="#ff8497"/><path d="M1164 660h12v12h-12z" fill="#ff8094"/><path d="M1176 660h12v12h-12z" fill="#ff7d91"/><path d="M1188 660h12v12h-12z" fill="#ff798e"/><path d="M1200 660h12v12h-12z" fill="#ff758b"/><path d="M1212 660h12v12h-12z" fill="#ff7287"/><path d="M1224 660h12v12h-12z" fill="#ff6e84"/><path d="M1236 660h12v12h-12z" fill="#ff6a81"/><path d="M1248 660h12v12h-12z" fill="#ff677e"/><path d="M1260 660h12v12h-12z" fill="#ff637b"/><path d="M1272 660h12v12h-12z" fill="#ff5f78"/><path d="M1284 660h12v12h-12z" fill="#ff5b74"/><path d="M1296 660h12v12h-12z" fill="#ff5771"/><path d="M1308 660h12v12h-12z" fill="#ff526e"/><path d="M1320 660h12v12h-12z" fill="#ff4e6a"/><path d="M1332 660h12v12h-12z" fill="#ff4967"/><path d="M1344 660h12v12h-12z" fill="#ff4463"/><path d="M1356 660h12v12h-12z" fill="#ff3f60"/><path d="M1368 660h12v12h-12z" fill="#ff395c"/><path d="M1380 660h12v12h-12z" fill="#ff3358"/><path d="M1392 660h12v12h-12z" fill="#ff2b54"/><path d="M1404 660h12v12h-12z" fill="#ff224f"/><path d="M1416 660h12v12h-12z" fill="#ff144a"/><path d="M1428 660h12v12h-12z" fill="#ff0043"/><path d="M1440 660h12v12h-12z" fill="#ff0040"/><path d="M1452 660h12v12h-12z" fill="#ff003d"/><path d="M1464 660h12v12h-12z" fill="#ff003a"/><path d="M1476 660h12v12h-12z" fill="#ff0037"/><path d="M1488 660h12v12h-12z" fill="#ff0034"/><path d="M1500 660h12v12h-12z" fill="#ff0030"/><path d="M1512 660h12v12h-12z" fill="#ff002d"/><path d="M1524 660h12v12h-12z" fill="#ff0029"/><path d="M564 672h12v12h-12z" fill="#00e2ff"/><path d="M576 672h12v12h-12z" fill="#00e1ff"/><path d="M588 672h12v12h-12z" fill="#00e1ff"/><path d="M600 672h12v12h-12z" fill="#00e1ff"/><path d="M612 672h12v12h-12z" fill="#15e1ff"/><path d="M624 672h12v12h-12z" fill="#54e3ff"/><path d="M636 672h12v12h-12z" fill="#70e4ff"/><path d="M648 672h12v12h-12z" fill="#85e5ff"/><path d="M660 672h12v12h-12z" fill="#96e6ff"/><path d="M672 672h12v12h-12z" fill="#a4e6ff"/><path d="M684 672h12v12h-12z" fill="#b0e7ff"/><path d="M696 672h12v12h-12z" fill="#bbe8ff"/><path d="M708 672h12v12h-12z" fill="#c6e9ff"/><path d="M720 672h12v12h-12z" fill="#cfe9ff"/><path d="M732 672h12v12h-12z" fill="#d7eaff"/><path d="M744 672h12v12h-12z" fill="#deebff"/><path d="M756 672h12v12h-12z" fill="#e5ecff"/><path d="M768 672h12v12h-12z" fill="#ecedff"/><path d="M780 672h12v12h-12z" fill="#f0edff"/><path d="M792 672h12v12h-12z" fill="#f4edff"/><path d="M804 672h12v12h-12z" fill="#f8edff"/><path d="M816 672h12v12h-12z" fill="#fcecff"/><path d="M828 672h12v12h-12z" fill="#ffebfe"/><path d="M840 672h12v12h-12z" fill="#ffe5fa"/><path d="M852 672h12v12h-12z" fill="#ffe0f6"/><path d="M864 672h12v12h-12z" fill="#ffdbf1"/><path d="M876 672h12v12h-12z" fill="#ffd6ed"/><path d="M888 672h12v12h-12z" fill="#ffd2e9"/><path d="M900 672h12v12h-12z" fill="#ffcde4"/><path d="M912 672h12v12h-12z" fill="#ffc8e0"/><path d="M924 672h12v12h-12z" fill="#ffc4dc"/><path d="M936 672h12v12h-12z" fill="#ffbfd8"/><path d="M948 672h12v12h-12z" fill="#ffbbd4"/><path d="M960 672h12v12h-12z" fill="#ffb6d0"/><path d="M972 672h12v12h-12z" fill="#ffb2cc"/><path d="M984 672h12v12h-12z" fill="#ffaec8"/><path d="M996 672h12v12h-12z" fill="#ffaac4"/><path d="M1008 672h12v12h-12z" fill="#ffa6c1"/><path d="M1020 672h12v12h-12z" fill="#ffa2bd"/><path d="M1032 672h12v12h-12z" fill="#ff9eba"/><path d="M1044 672h12v12h-12z" fill="#ff9ab6"/><path d="M1056 672h12v12h-12z" fill="#ff96b2"/><path d="M1068 672h12v12h-12z" fill="#ff92af"/><path d="M1080 672h12v12h-12z" fill="#ff8eac"/><path d="M1092 672h12v12h-12z" fill="#ff8aa8"/><path d="M1104 672h12v12h-12z" fill="#ff87a5"/><path d="M1116 672h12v12h-12z" fill="#ff83a2"/><path d="M1128 672h12v12h-12z" fill="#ff7f9e"/><path d="M1140 672h12v12h-12z" fill="#ff7b9b"/><path d="M1152 672h12v12h-12z" fill="#ff7798"/><path d="M1164 672h12v12h-12z" fill="#ff7495"/><path d="M1176 672h12v12h-12z" fill="#ff7092"/><path d="M1188 672h12v12h-12z" fill="#ff6c8e"/><path d="M1200 672h12v12h-12z" fill="#ff688b"/><path d="M1212 672h12v12h-12z" fill="#ff6488"/><path d="M1224 672h12v12h-12z" fill="#ff6085"/><path d="M1236 672h12v12h-12z" fill="#ff5b82"/><path d="M1248 672h12v12h-12z" fill="#ff577e"/><path d="M1260 672h12v12h-12z" fill="#ff527b"/><path d="M1272 672h12v12h-12z" fill="#ff4e78"/><path d="M1284 672h12v12h-12z" fill="#ff4975"/><path d="M1296 672h12v12h-12z" fill="#ff4371"/><path d="M1308 672h12v12h-12z" fill="#ff3e6e"/><path d="M1320 672h12v12h-12z" fill="#ff386a"/><path d="M1332 672h12v12h-12z" fill="#ff3066"/><path d="M1344 672h12v12h-12z" fill="#ff2862"/><path d="M1356 672h12v12h-12z" fill="#ff1d5d"/><path d="M1368 672h12v12h-12z" fill="#ff0055"/><path d="M1380 672h12v12h-12z" fill="#ff0053"/><path d="M1392 672h12v12h-12z" fill="#ff0050"/><path d="M1404 672h12v12h-12z" fill="#ff004e"/><path d="M1416 672h12v12h-12z" fill="#ff004c"/><path d="M1428 672h12v12h-12z" fill="#ff0049"/><path d="M1440 672h12v12h-12z" fill="#ff0046"/><path d="M1452 672h12v12h-12z" fill="#ff0044"/><path d="M1464 672h12v12h-12z" fill="#ff0041"/><path d="M1476 672h12v12h-12z" fill="#ff003f"/><path d="M564 684h12v12h-12z" fill="#00d7ff"/><path d="M576 684h12v12h-12z" fill="#00d7ff"/><path d="M588 684h12v12h-12z" fill="#00d6ff"/><path d="M600 684h12v12h-12z" fill="#00d6ff"/><path d="M612 684h12v12h-12z" fill="#47d9ff"/><path d="M624 684h12v12h-12z" fill="#67daff"/><path d="M636 684h12v12h-12z" fill="#7ddcff"/><path d="M648 684h12v12h-12z" fill="#8eddff"/><path d="M660 684h12v12h-12z" fill="#9dddff"/><path d="M672 684h12v12h-12z" fill="#aadeff"/><path d="M684 684h12v12h-12z" fill="#b5dfff"/><path d="M696 684h12v12h-12z" fill="#bfe0ff"/><path d="M708 684h12v12h-12z" fill="#c8e1ff"/><path d="M720 684h12v12h-12z" fill="#d1e2ff"/><path d="M732 684h12v12h-12z" fill="#d9e3ff"/><path d="M744 684h12v12h-12z" fill="#e0e4ff"/><path d="M756 684h12v12h-12z" fill="#e6e5ff"/><path d="M768 684h12v12h-12z" fill="#eae5ff"/><path d="M780 684h12v12h-12z" fill="#efe4ff"/><path d="M792 684h12v12h-12z" fill="#f3e3ff"/><path d="M804 684h12v12h-12z" fill="#f7e3ff"/><path d="M816 684h12v12h-12z" fill="#fbe2ff"/><path d="M828 684h12v12h-12z" fill="#ffe1fe"/><path d="M840 684h12v12h-12z" fill="#ffdbfa"/><path d="M852 684h12v12h-12z" fill="#ffd6f6"/><path d="M864 684h12v12h-12z" fill="#ffd1f1"/><path d="M876 684h12v12h-12z" fill="#ffcced"/><path d="M888 684h12v12h-12z" fill="#ffc7e9"/><path d="M900 684h12v12h-12z" fill="#ffc2e4"/><path d="M912 684h12v12h-12z" fill="#ffbde0"/><path d="M924 684h12v12h-12z" fill="#ffb9dc"/><path d="M936 684h12v12h-12z" fill="#ffb4d8"/><path d="M948 684h12v12h-12z" fill="#ffb0d4"/><path d="M960 684h12v12h-12z" fill="#ffabd0"/><path d="M972 684h12v12h-12z" fill="#ffa7cc"/><path d="M984 684h12v12h-12z" fill="#ffa3c8"/><path d="M996 684h12v12h-12z" fill="#ff9ec5"/><path d="M1008 684h12v12h-12z" fill="#ff9ac1"/><path d="M1020 684h12v12h-12z" fill="#ff96bd"/><path d="M1032 684h12v12h-12z" fill="#ff92ba"/><path d="M1044 684h12v12h-12z" fill="#ff8eb6"/><path d="M1056 684h12v12h-12z" fill="#ff8ab3"/><path d="M1068 684h12v12h-12z" fill="#ff86af"/><path d="M1080 684h12v12h-12z" fill="#ff82ac"/><path d="M1092 684h12v12h-12z" fill="#ff7ea9"/><path d="M1104 684h12v12h-12z" fill="#ff7aa5"/><path d="M1116 684h12v12h-12z" fill="#ff76a2"/><path d="M1128 684h12v12h-12z" fill="#ff719f"/><path d="M1140 684h12v12h-12z" fill="#ff6d9b"/><path d="M1152 684h12v12h-12z" fill="#ff6998"/><path d="M1164 684h12v12h-12z" fill="#ff6595"/><path d="M1176 684h12v12h-12z" fill="#ff6092"/><path d="M1188 684h12v12h-12z" fill="#ff5c8e"/><path d="M1200 684h12v12h-12z" fill="#ff578b"/><path d="M1212 684h12v12h-12z" fill="#ff5388"/><path d="M1224 684h12v12h-12z" fill="#ff4e85"/><path d="M1236 684h12v12h-12z" fill="#ff4881"/><path d="M1248 684h12v12h-12z" fill="#ff437e"/><path d="M1260 684h12v12h-12z" fill="#ff3c7a"/><path d="M1272 684h12v12h-12z" fill="#ff3677"/><path d="M1284 684h12v12h-12z" fill="#ff2e73"/><path d="M1296 684h12v12h-12z" fill="#ff246f"/><path d="M1308 684h12v12h-12z" fill="#ff146a"/><path d="M1320 684h12v12h-12z" fill="#ff0064"/><path d="M1332 684h12v12h-12z" fill="#ff0061"/><path d="M1344 684h12v12h-12z" fill="#ff005f"/><path d="M1356 684h12v12h-12z" fill="#ff005d"/><path d="M1368 684h12v12h-12z" fill="#ff005a"/><path d="M1380 684h12v12h-12z" fill="#ff0058"/><path d="M1392 684h12v12h-12z" fill="#ff0056"/><path d="M1404 684h12v12h-12z" fill="#ff0053"/><path d="M1416 684h12v12h-12z" fill="#ff0051"/><path d="M552 696h12v12h-12z" fill="#00ceff"/><path d="M564 696h12v12h-12z" fill="#00cdff"/><path d="M576 696h12v12h-12z" fill="#00ccff"/><path d="M588 696h12v12h-12z" fill="#00ccff"/><path d="M600 696h12v12h-12z" fill="#37ceff"/><path d="M612 696h12v12h-12z" fill="#5dd1ff"/><path d="M624 696h12v12h-12z" fill="#74d2ff"/><path d="M636 696h12v12h-12z" fill="#87d3ff"/><path d="M648 696h12v12h-12z" fill="#96d4ff"/><path d="M660 696h12v12h-12z" fill="#a3d5ff"/><path d="M672 696h12v12h-12z" fill="#afd6ff"/><path d="M684 696h12v12h-12z" fill="#b9d7ff"/><path d="M696 696h12v12h-12z" fill="#c2d9ff"/><path d="M708 696h12v12h-12z" fill="#cbdaff"/><path d="M720 696h12v12h-12z" fill="#d3dbff"/><path d="M732 696h12v12h-12z" fill="#dadcff"/><path d="M744 696h12v12h-12z" fill="#e0dcff"/><path d="M756 696h12v12h-12z" fill="#e4dbff"/><path d="M768 696h12v12h-12z" fill="#e9dbff"/><path d="M780 696h12v12h-12z" fill="#eddaff"/><path d="M792 696h12v12h-12z" fill="#f2d9ff"/><path d="M804 696h12v12h-12z" fill="#f6d8ff"/><path d="M816 696h12v12h-12z" fill="#fbd7ff"/><path d="M828 696h12v12h-12z" fill="#ffd6ff"/><path d="M840 696h12v12h-12z" fill="#ffd1fa"/><path d="M852 696h12v12h-12z" fill="#ffcbf6"/><path d="M864 696h12v12h-12z" fill="#ffc6f1"/><path d="M876 696h12v12h-12z" fill="#ffc1ed"/><path d="M888 696h12v12h-12z" fill="#ffbce9"/><path d="M900 696h12v12h-12z" fill="#ffb7e4"/><path d="M912 696h12v12h-12z" fill="#ffb2e0"/><path d="M924 696h12v12h-12z" fill="#ffaddc"/><path d="M936 696h12v12h-12z" fill="#ffa8d8"/><path d="M948 696h12v12h-12z" fill="#ffa4d4"/><path d="M960 696h12v12h-12z" fill="#ff9fd0"/><path d="M972 696h12v12h-12z" fill="#ff9bcc"/><path d="M984 696h12v12h-12z" fill="#ff96c8"/><path d="M996 696h12v12h-12z" fill="#ff92c5"/><path d="M1008 696h12v12h-12z" fill="#ff8ec1"/><path d="M1020 696h12v12h-12z" fill="#ff89bd"/><path d="M1032 696h12v12h-12z" fill="#ff85ba"/><path d="M1044 696h12v12h-12z" fill="#ff81b6"/><path d="M1056 696h12v12h-12z" fill="#ff7cb3"/><path d="M1068 696h12v12h-12z" fill="#ff78af"/><path d="M1080 696h12v12h-12z" fill="#ff74ac"/><path d="M1092 696h12v12h-12z" fill="#ff6fa9"/><path d="M1104 696h12v12h-12z" fill="#ff6ba5"/><path d="M1116 696h12v12h-12z" fill="#ff66a2"/><path d="M1128 696h12v12h-12z" fill="#ff619f"/><path d="M1140 696h12v12h-12z" fill="#ff5d9b"/><path d="M1152 696h12v12h-12z" fill="#ff5898"/><path d="M1164 696h12v12h-12z" fill="#ff5395"/><path d="M1176 696h12v12h-12z" fill="#ff4d91"/><path d="M1188 696h12v12h-12z" fill="#ff488e"/><path d="M1200 696h12v12h-12z" fill="#ff418b"/><path d="M1212 696h12v12h-12z" fill="#ff3b87"/><path d="M1224 696h12v12h-12z" fill="#ff3383"/><path d="M1236 696h12v12h-12z" fill="#ff2a7f"/><path d="M1248 696h12v12h-12z" fill="#ff1e7b"/><path d="M1260 696h12v12h-12z" fill="#ff0074"/><path d="M1272 696h12v12h-12z" fill="#ff0071"/><path d="M1284 696h12v12h-12z" fill="#ff006f"/><path d="M1296 696h12v12h-12z" fill="#ff006d"/><path d="M1308 696h12v12h-12z" fill="#ff006a"/><path d="M1320 696h12v12h-12z" fill="#ff0068"/><path d="M1332 696h12v12h-12z" fill="#ff0066"/><path d="M1344 696h12v12h-12z" fill="#ff0064"/><path d="M1356 696h12v12h-12z" fill="#ff0061"/><path d="M552 708h12v12h-12z" fill="#00c3ff"/><path d="M564 708h12v12h-12z" fill="#00c3ff"/><path d="M576 708h12v12h-12z" fill="#00c2ff"/><path d="M588 708h12v12h-12z" fill="#1fc3ff"/><path d="M600 708h12v12h-12z" fill="#52c7ff"/><path d="M612 708h12v12h-12z" fill="#6cc9ff"/><path d="M624 708h12v12h-12z" fill="#7fcaff"/><path d="M636 708h12v12h-12z" fill="#8fcbff"/><path d="M648 708h12v12h-12z" fill="#9ccdff"/><path d="M660 708h12v12h-12z" fill="#a8ceff"/><path d="M672 708h12v12h-12z" fill="#b3cfff"/><path d="M684 708h12v12h-12z" fill="#bdd0ff"/><path d="M696 708h12v12h-12z" fill="#c5d1ff"/><path d="M708 708h12v12h-12z" fill="#cdd2ff"/><path d="M720 708h12v12h-12z" fill="#d4d3ff"/><path d="M732 708h12v12h-12z" fill="#d9d3ff"/><path d="M744 708h12v12h-12z" fill="#ded2ff"/><path d="M756 708h12v12h-12z" fill="#e3d1ff"/><path d="M768 708h12v12h-12z" fill="#e7d0ff"/><path d="M780 708h12v12h-12z" fill="#ecceff"/><path d="M792 708h12v12h-12z" fill="#f1cdff"/><path d="M804 708h12v12h-12z" fill="#f5ccff"/><path d="M816 708h12v12h-12z" fill="#facbff"/><path d="M828 708h12v12h-12z" fill="#ffcaff"/><path d="M840 708h12v12h-12z" fill="#ffc4fb"/><path d="M852 708h12v12h-12z" fill="#ffbff6"/><path d="M864 708h12v12h-12z" fill="#ffbaf2"/><path d="M876 708h12v12h-12z" fill="#ffb4ed"/><path d="M888 708h12v12h-12z" fill="#ffafe9"/><path d="M900 708h12v12h-12z" fill="#ffaae5"/><path d="M912 708h12v12h-12z" fill="#ffa5e0"/><path d="M924 708h12v12h-12z" fill="#ffa0dc"/><path d="M936 708h12v12h-12z" fill="#ff9bd8"/><path d="M948 708h12v12h-12z" fill="#ff97d4"/><path d="M960 708h12v12h-12z" fill="#ff92d0"/><path d="M972 708h12v12h-12z" fill="#ff8dcc"/><path d="M984 708h12v12h-12z" fill="#ff89c9"/><path d="M996 708h12v12h-12z" fill="#ff84c5"/><path d="M1008 708h12v12h-12z" fill="#ff7fc1"/><path d="M1020 708h12v12h-12z" fill="#ff7bbd"/><path d="M1032 708h12v12h-12z" fill="#ff76ba"/><path d="M1044 708h12v12h-12z" fill="#ff71b6"/><path d="M1056 708h12v12h-12z" fill="#ff6cb3"/><path d="M1068 708h12v12h-12z" fill="#ff68af"/><path d="M1080 708h12v12h-12z" fill="#ff63ac"/><path d="M1092 708h12v12h-12z" fill="#ff5ea8"/><path d="M1104 708h12v12h-12z" fill="#ff58a5"/><path d="M1116 708h12v12h-12z" fill="#ff53a2"/><path d="M1128 708h12v12h-12z" fill="#ff4d9e"/><path d="M1140 708h12v12h-12z" fill="#ff479b"/><path d="M1152 708h12v12h-12z" fill="#ff4097"/><path d="M1164 708h12v12h-12z" fill="#ff3993"/><path d="M1176 708h12v12h-12z" fill="#ff3090"/><path d="M1188 708h12v12h-12z" fill="#ff258c"/><path d="M1200 708h12v12h-12z" fill="#ff1487"/><path d="M1212 708h12v12h-12z" fill="#ff0081"/><path d="M1224 708h12v12h-12z" fill="#ff007f"/><path d="M1236 708h12v12h-12z" fill="#ff007c"/><path d="M1248 708h12v12h-12z" fill="#ff007a"/><path d="M1260 708h12v12h-12z" fill="#ff0078"/><path d="M1272 708h12v12h-12z" fill="#ff0075"/><path d="M1284 708h12v12h-12z" fill="#ff0073"/><path d="M1296 708h12v12h-12z" fill="#ff0071"/><path d="M1308 708h12v12h-12z" fill="#ff006e"/><path d="M540 720h12v12h-12z" fill="#00baff"/><path d="M552 720h12v12h-12z" fill="#00b9ff"/><path d="M564 720h12v12h-12z" fill="#00b8ff"/><path d="M576 720h12v12h-12z" fill="#00b7ff"/><path d="M588 720h12v12h-12z" fill="#46bdff"/><path d="M600 720h12v12h-12z" fill="#63bfff"/><path d="M612 720h12v12h-12z" fill="#78c1ff"/><path d="M624 720h12v12h-12z" fill="#88c2ff"/><path d="M636 720h12v12h-12z" fill="#96c4ff"/><path d="M648 720h12v12h-12z" fill="#a2c5ff"/><path d="M660 720h12v12h-12z" fill="#adc6ff"/><path d="M672 720h12v12h-12z" fill="#b7c7ff"/><path d="M684 720h12v12h-12z" fill="#c0c9ff"/><path d="M696 720h12v12h-12z" fill="#c8caff"/><path d="M708 720h12v12h-12z" fill="#cecaff"/><path d="M720 720h12v12h-12z" fill="#d3c9ff"/><path d="M732 720h12v12h-12z" fill="#d8c7ff"/><path d="M744 720h12v12h-12z" fill="#ddc6ff"/><path d="M756 720h12v12h-12z" fill="#e2c5ff"/><path d="M768 720h12v12h-12z" fill="#e6c4ff"/><path d="M780 720h12v12h-12z" fill="#ebc2ff"/><path d="M792 720h12v12h-12z" fill="#f0c1ff"/><path d="M804 720h12v12h-12z" fill="#f4bfff"/><path d="M816 720h12v12h-12z" fill="#f9beff"/><path d="M828 720h12v12h-12z" fill="#febcff"/><path d="M840 720h12v12h-12z" fill="#ffb7fb"/><path d="M852 720h12v12h-12z" fill="#ffb2f7"/><path d="M864 720h12v12h-12z" fill="#ffacf2"/><path d="M876 720h12v12h-12z" fill="#ffa7ee"/><path d="M888 720h12v12h-12z" fill="#ffa1e9"/><path d="M900 720h12v12h-12z" fill="#ff9ce5"/><path d="M912 720h12v12h-12z" fill="#ff97e0"/><path d="M924 720h12v12h-12z" fill="#ff92dc"/><path d="M936 720h12v12h-12z" fill="#ff8dd8"/><path d="M948 720h12v12h-12z" fill="#ff88d4"/><path d="M960 720h12v12h-12z" fill="#ff83d0"/><path d="M972 720h12v12h-12z" fill="#ff7ecc"/><path d="M984 720h12v12h-12z" fill="#ff79c9"/><path d="M996 720h12v12h-12z" fill="#ff74c5"/><path d="M1008 720h12v12h-12z" fill="#ff6fc1"/><path d="M1020 720h12v12h-12z" fill="#ff69bd"/><path d="M1032 720h12v12h-12z" fill="#ff64ba"/><path d="M1044 720h12v12h-12z" fill="#ff5eb6"/><path d="M1056 720h12v12h-12z" fill="#ff59b2"/><path d="M1068 720h12v12h-12z" fill="#ff53af"/><path d="M1080 720h12v12h-12z" fill="#ff4dab"/><path d="M1092 720h12v12h-12z" fill="#ff46a8"/><path d="M1104 720h12v12h-12z" fill="#ff3fa4"/><path d="M1116 720h12v12h-12z" fill="#ff36a0"/><path d="M1128 720h12v12h-12z" fill="#ff2c9c"/><path d="M1140 720h12v12h-12z" fill="#ff1f98"/><path d="M1152 720h12v12h-12z" fill="#ff0091"/><path d="M1164 720h12v12h-12z" fill="#ff008f"/><path d="M1176 720h12v12h-12z" fill="#ff008c"/><path d="M1188 720h12v12h-12z" fill="#ff008a"/><path d="M1200 720h12v12h-12z" fill="#ff0087"/><path d="M1212 720h12v12h-12z" fill="#ff0085"/><path d="M1224 720h12v12h-12z" fill="#ff0082"/><path d="M1236 720h12v12h-12z" fill="#ff0080"/><path d="M1248 720h12v12h-12z" fill="#ff007d"/><path d="M528 732h12v12h-12z" fill="#00b1ff"/><path d="M540 732h12v12h-12z" fill="#00b0ff"/><path d="M552 732h12v12h-12z" fill="#00afff"/><path d="M564 732h12v12h-12z" fill="#00aeff"/><path d="M576 732h12v12h-12z" fill="#38b2ff"/><path d="M588 732h12v12h-12z" fill="#5ab5ff"/><path d="M600 732h12v12h-12z" fill="#70b8ff"/><path d="M612 732h12v12h-12z" fill="#81b9ff"/><path d="M624 732h12v12h-12z" fill="#90bbff"/><path d="M636 732h12v12h-12z" fill="#9cbcff"/><path d="M648 732h12v12h-12z" fill="#a7bdff"/><path d="M660 732h12v12h-12z" fill="#b1bfff"/><path d="M672 732h12v12h-12z" fill="#bac0ff"/><path d="M684 732h12v12h-12z" fill="#c2c1ff"/><path d="M696 732h12v12h-12z" fill="#c7c0ff"/><path d="M708 732h12v12h-12z" fill="#cdbeff"/><path d="M720 732h12v12h-12z" fill="#d2bdff"/><path d="M732 732h12v12h-12z" fill="#d7bbff"/><path d="M744 732h12v12h-12z" fill="#dcbaff"/><path d="M756 732h12v12h-12z" fill="#e0b8ff"/><path d="M768 732h12v12h-12z" fill="#e5b7ff"/><path d="M780 732h12v12h-12z" fill="#eab5ff"/><path d="M792 732h12v12h-12z" fill="#efb3ff"/><path d="M804 732h12v12h-12z" fill="#f4b1ff"/><path d="M816 732h12v12h-12z" fill="#f9afff"/><path d="M828 732h12v12h-12z" fill="#fdadff"/><path d="M840 732h12v12h-12z" fill="#ffa9fc"/><path d="M852 732h12v12h-12z" fill="#ffa3f7"/><path d="M864 732h12v12h-12z" fill="#ff9df2"/><path d="M876 732h12v12h-12z" fill="#ff97ee"/><path d="M888 732h12v12h-12z" fill="#ff92e9"/><path d="M900 732h12v12h-12z" fill="#ff8ce5"/><path d="M912 732h12v12h-12z" fill="#ff87e1"/><path d="M924 732h12v12h-12z" fill="#ff81dc"/><path d="M936 732h12v12h-12z" fill="#ff7cd8"/><path d="M948 732h12v12h-12z" fill="#ff76d4"/><path d="M960 732h12v12h-12z" fill="#ff71d0"/><path d="M972 732h12v12h-12z" fill="#ff6bcc"/><path d="M984 732h12v12h-12z" fill="#ff66c8"/><path d="M996 732h12v12h-12z" fill="#ff60c5"/><path d="M1008 732h12v12h-12z" fill="#ff59c1"/><path d="M1020 732h12v12h-12z" fill="#ff53bd"/><path d="M1032 732h12v12h-12z" fill="#ff4cb9"/><path d="M1044 732h12v12h-12z" fill="#ff45b5"/><path d="M1056 732h12v12h-12z" fill="#ff3db1"/><path d="M1068 732h12v12h-12z" fill="#ff33ad"/><path d="M1080 732h12v12h-12z" fill="#ff28a9"/><path d="M1092 732h12v12h-12z" fill="#ff15a4"/><path d="M1104 732h12v12h-12z" fill="#ff009f"/><path d="M1116 732h12v12h-12z" fill="#ff009c"/><path d="M1128 732h12v12h-12z" fill="#ff009a"/><path d="M1140 732h12v12h-12z" fill="#ff0097"/><path d="M1152 732h12v12h-12z" fill="#ff0094"/><path d="M1164 732h12v12h-12z" fill="#ff0092"/><path d="M1176 732h12v12h-12z" fill="#ff008f"/><path d="M1188 732h12v12h-12z" fill="#ff008d"/><path d="M528 744h12v12h-12z" fill="#00a7ff"/><path d="M540 744h12v12h-12z" fill="#00a6ff"/><path d="M552 744h12v12h-12z" fill="#00a4ff"/><path d="M564 744h12v12h-12z" fill="#24a7ff"/><path d="M576 744h12v12h-12z" fill="#50acff"/><path d="M588 744h12v12h-12z" fill="#68aeff"/><path d="M600 744h12v12h-12z" fill="#7bb0ff"/><path d="M612 744h12v12h-12z" fill="#89b2ff"/><path d="M624 744h12v12h-12z" fill="#96b3ff"/><path d="M636 744h12v12h-12z" fill="#a2b4ff"/><path d="M648 744h12v12h-12z" fill="#acb6ff"/><path d="M660 744h12v12h-12z" fill="#b5b7ff"/><path d="M672 744h12v12h-12z" fill="#bcb7ff"/><path d="M684 744h12v12h-12z" fill="#c1b5ff"/><path d="M696 744h12v12h-12z" fill="#c6b3ff"/><path d="M708 744h12v12h-12z" fill="#cbb2ff"/><path d="M720 744h12v12h-12z" fill="#d1b0ff"/><path d="M732 744h12v12h-12z" fill="#d6aeff"/><path d="M744 744h12v12h-12z" fill="#dbacff"/><path d="M756 744h12v12h-12z" fill="#dfaaff"/><path d="M768 744h12v12h-12z" fill="#e4a8ff"/><path d="M780 744h12v12h-12z" fill="#e9a6ff"/><path d="M792 744h12v12h-12z" fill="#eea4ff"/><path d="M804 744h12v12h-12z" fill="#f3a2ff"/><path d="M816 744h12v12h-12z" fill="#f89fff"/><path d="M828 744h12v12h-12z" fill="#fd9cff"/><path d="M840 744h12v12h-12z" fill="#ff98fc"/><path d="M852 744h12v12h-12z" fill="#ff92f7"/><path d="M864 744h12v12h-12z" fill="#ff8cf3"/><path d="M876 744h12v12h-12z" fill="#ff86ee"/><path d="M888 744h12v12h-12z" fill="#ff80ea"/><path d="M900 744h12v12h-12z" fill="#ff7ae5"/><path d="M912 744h12v12h-12z" fill="#ff74e1"/><path d="M924 744h12v12h-12z" fill="#ff6edc"/><path d="M936 744h12v12h-12z" fill="#ff67d8"/><path d="M948 744h12v12h-12z" fill="#ff61d4"/><path d="M960 744h12v12h-12z" fill="#ff5ad0"/><path d="M972 744h12v12h-12z" fill="#ff53cc"/><path d="M984 744h12v12h-12z" fill="#ff4cc8"/><path d="M996 744h12v12h-12z" fill="#ff44c4"/><path d="M1008 744h12v12h-12z" fill="#ff3bc0"/><path d="M1020 744h12v12h-12z" fill="#ff30bb"/><path d="M1032 744h12v12h-12z" fill="#ff21b7"/><path d="M1044 744h12v12h-12z" fill="#ff00b1"/><path d="M1056 744h12v12h-12z" fill="#ff00ae"/><path d="M1068 744h12v12h-12z" fill="#ff00ab"/><path d="M1080 744h12v12h-12z" fill="#ff00a8"/><path d="M1092 744h12v12h-12z" fill="#ff00a5"/><path d="M1104 744h12v12h-12z" fill="#ff00a2"/><path d="M1116 744h12v12h-12z" fill="#ff009f"/><path d="M1128 744h12v12h-12z" fill="#ff009c"/><path d="M1140 744h12v12h-12z" fill="#ff009a"/><path d="M516 756h12v12h-12z" fill="#009eff"/><path d="M528 756h12v12h-12z" fill="#009cff"/><path d="M540 756h12v12h-12z" fill="#009bff"/><path d="M552 756h12v12h-12z" fill="#009aff"/><path d="M564 756h12v12h-12z" fill="#46a1ff"/><path d="M576 756h12v12h-12z" fill="#60a4ff"/><path d="M588 756h12v12h-12z" fill="#74a6ff"/><path d="M600 756h12v12h-12z" fill="#83a8ff"/><path d="M612 756h12v12h-12z" fill="#90aaff"/><path d="M624 756h12v12h-12z" fill="#9cabff"/><path d="M636 756h12v12h-12z" fill="#a6adff"/><path d="M648 756h12v12h-12z" fill="#afaeff"/><path d="M660 756h12v12h-12z" fill="#b5acff"/><path d="M672 756h12v12h-12z" fill="#bbaaff"/><path d="M684 756h12v12h-12z" fill="#c0a8ff"/><path d="M696 756h12v12h-12z" fill="#c5a6ff"/><path d="M708 756h12v12h-12z" fill="#caa4ff"/><path d="M720 756h12v12h-12z" fill="#d0a2ff"/><path d="M732 756h12v12h-12z" fill="#d5a0ff"/><path d="M744 756h12v12h-12z" fill="#da9eff"/><path d="M756 756h12v12h-12z" fill="#de9bff"/><path d="M768 756h12v12h-12z" fill="#e399ff"/><path d="M780 756h12v12h-12z" fill="#e896ff"/><path d="M792 756h12v12h-12z" fill="#ed93ff"/><path d="M804 756h12v12h-12z" fill="#f290ff"/><path d="M816 756h12v12h-12z" fill="#f78dff"/><path d="M828 756h12v12h-12z" fill="#fc89ff"/><path d="M840 756h12v12h-12z" fill="#ff84fd"/><path d="M852 756h12v12h-12z" fill="#ff7ef8"/><path d="M864 756h12v12h-12z" fill="#ff77f3"/><path d="M876 756h12v12h-12z" fill="#ff70ee"/><path d="M888 756h12v12h-12z" fill="#ff6aea"/><path d="M900 756h12v12h-12z" fill="#ff63e5"/><path d="M912 756h12v12h-12z" fill="#ff5be1"/><path d="M924 756h12v12h-12z" fill="#ff54dc"/><path d="M936 756h12v12h-12z" fill="#ff4bd8"/><path d="M948 756h12v12h-12z" fill="#ff42d4"/><path d="M960 756h12v12h-12z" fill="#ff38cf"/><path d="M972 756h12v12h-12z" fill="#ff2acb"/><path d="M984 756h12v12h-12z" fill="#ff15c5"/><path d="M996 756h12v12h-12z" fill="#ff00c0"/><path d="M1008 756h12v12h-12z" fill="#ff00bd"/><path d="M1020 756h12v12h-12z" fill="#ff00ba"/><path d="M1032 756h12v12h-12z" fill="#ff00b6"/><path d="M1044 756h12v12h-12z" fill="#ff00b3"/><path d="M1056 756h12v12h-12z" fill="#ff00b0"/><path d="M1068 756h12v12h-12z" fill="#ff00ad"/><path d="M1080 756h12v12h-12z" fill="#ff00aa"/><path d="M516 768h12v12h-12z" fill="#0093ff"/><path d="M528 768h12v12h-12z" fill="#0092ff"/><path d="M540 768h12v12h-12z" fill="#0090ff"/><path d="M552 768h12v12h-12z" fill="#3997ff"/><path d="M564 768h12v12h-12z" fill="#589aff"/><path d="M576 768h12v12h-12z" fill="#6d9dff"/><path d="M588 768h12v12h-12z" fill="#7d9fff"/><path d="M600 768h12v12h-12z" fill="#8ba0ff"/><path d="M612 768h12v12h-12z" fill="#96a2ff"/><path d="M624 768h12v12h-12z" fill="#a1a3ff"/><path d="M636 768h12v12h-12z" fill="#a8a2ff"/><path d="M648 768h12v12h-12z" fill="#aea1ff"/><path d="M660 768h12v12h-12z" fill="#b49eff"/><path d="M672 768h12v12h-12z" fill="#ba9cff"/><path d="M684 768h12v12h-12z" fill="#bf9aff"/><path d="M696 768h12v12h-12z" fill="#c498ff"/><path d="M708 768h12v12h-12z" fill="#c995ff"/><path d="M720 768h12v12h-12z" fill="#cf92ff"/><path d="M732 768h12v12h-12z" fill="#d490ff"/><path d="M744 768h12v12h-12z" fill="#d98dff"/><path d="M756 768h12v12h-12z" fill="#de8aff"/><path d="M768 768h12v12h-12z" fill="#e286ff"/><path d="M780 768h12v12h-12z" fill="#e783ff"/><path d="M792 768h12v12h-12z" fill="#ec7fff"/><path d="M804 768h12v12h-12z" fill="#f17bff"/><path d="M816 768h12v12h-12z" fill="#f677ff"/><path d="M828 768h12v12h-12z" fill="#fb72ff"/><path d="M840 768h12v12h-12z" fill="#ff6cfd"/><path d="M852 768h12v12h-12z" fill="#ff64f8"/><path d="M864 768h12v12h-12z" fill="#ff5cf3"/><path d="M876 768h12v12h-12z" fill="#ff54ef"/><path d="M888 768h12v12h-12z" fill="#ff4bea"/><path d="M900 768h12v12h-12z" fill="#ff40e5"/><path d="M912 768h12v12h-12z" fill="#ff34e0"/><path d="M924 768h12v12h-12z" fill="#ff23db"/><path d="M936 768h12v12h-12z" fill="#ff00d6"/><path d="M948 768h12v12h-12z" fill="#ff00d1"/><path d="M960 768h12v12h-12z" fill="#ff00ce"/><path d="M972 768h12v12h-12z" fill="#ff00ca"/><path d="M984 768h12v12h-12z" fill="#ff00c6"/><path d="M996 768h12v12h-12z" fill="#ff00c2"/><path d="M1008 768h12v12h-12z" fill="#ff00bf"/><path d="M1020 768h12v12h-12z" fill="#ff00bc"/><path d="M504 780h12v12h-12z" fill="#008aff"/><path d="M516 780h12v12h-12z" fill="#0089ff"/><path d="M528 780h12v12h-12z" fill="#0087ff"/><path d="M540 780h12v12h-12z" fill="#288bff"/><path d="M552 780h12v12h-12z" fill="#4f90ff"/><path d="M564 780h12v12h-12z" fill="#6693ff"/><path d="M576 780h12v12h-12z" fill="#7795ff"/><path d="M588 780h12v12h-12z" fill="#8597ff"/><path d="M600 780h12v12h-12z" fill="#9198ff"/><path d="M612 780h12v12h-12z" fill="#9b99ff"/><path d="M624 780h12v12h-12z" fill="#a197ff"/><path d="M636 780h12v12h-12z" fill="#a894ff"/><path d="M648 780h12v12h-12z" fill="#ae92ff"/><path d="M660 780h12v12h-12z" fill="#b390ff"/><path d="M672 780h12v12h-12z" fill="#b98dff"/><path d="M684 780h12v12h-12z" fill="#be8aff"/><path d="M696 780h12v12h-12z" fill="#c387ff"/><path d="M708 780h12v12h-12z" fill="#c884ff"/><path d="M720 780h12v12h-12z" fill="#ce81ff"/><path d="M732 780h12v12h-12z" fill="#d37dff"/><path d="M744 780h12v12h-12z" fill="#d879ff"/><path d="M756 780h12v12h-12z" fill="#dd75ff"/><path d="M768 780h12v12h-12z" fill="#e171ff"/><path d="M780 780h12v12h-12z" fill="#e66cff"/><path d="M792 780h12v12h-12z" fill="#eb67ff"/><path d="M804 780h12v12h-12z" fill="#f161ff"/><path d="M816 780h12v12h-12z" fill="#f65aff"/><path d="M828 780h12v12h-12z" fill="#fb53ff"/><path d="M840 780h12v12h-12z" fill="#ff4afe"/><path d="M852 780h12v12h-12z" fill="#ff3ef9"/><path d="M864 780h12v12h-12z" fill="#ff2ff4"/><path d="M876 780h12v12h-12z" fill="#ff15ee"/><path d="M888 780h12v12h-12z" fill="#ff00e9"/><path d="M900 780h12v12h-12z" fill="#ff00e4"/><path d="M912 780h12v12h-12z" fill="#ff00e0"/><path d="M924 780h12v12h-12z" fill="#ff00db"/><path d="M936 780h12v12h-12z" fill="#ff00d7"/><path d="M948 780h12v12h-12z" fill="#ff00d3"/><path d="M960 780h12v12h-12z" fill="#ff00cf"/><path d="M972 780h12v12h-12z" fill="#ff00cc"/><path d="M504 792h12v12h-12z" fill="#007fff"/><path d="M516 792h12v12h-12z" fill="#007dff"/><path d="M528 792h12v12h-12z" fill="#007cff"/><path d="M540 792h12v12h-12z" fill="#4585ff"/><path d="M552 792h12v12h-12z" fill="#5e88ff"/><path d="M564 792h12v12h-12z" fill="#708bff"/><path d="M576 792h12v12h-12z" fill="#7f8dff"/><path d="M588 792h12v12h-12z" fill="#8b8eff"/><path d="M600 792h12v12h-12z" fill="#948dff"/><path d="M612 792h12v12h-12z" fill="#9b8aff"/><path d="M624 792h12v12h-12z" fill="#a188ff"/><path d="M636 792h12v12h-12z" fill="#a785ff"/><path d="M648 792h12v12h-12z" fill="#ad82ff"/><path d="M660 792h12v12h-12z" fill="#b27eff"/><path d="M672 792h12v12h-12z" fill="#b87bff"/><path d="M684 792h12v12h-12z" fill="#bd77ff"/><path d="M696 792h12v12h-12z" fill="#c273ff"/><path d="M708 792h12v12h-12z" fill="#c76fff"/><path d="M720 792h12v12h-12z" fill="#cc6bff"/><path d="M732 792h12v12h-12z" fill="#d166ff"/><path d="M744 792h12v12h-12z" fill="#d660ff"/><path d="M756 792h12v12h-12z" fill="#db5aff"/><path d="M768 792h12v12h-12z" fill="#e054ff"/><path d="M780 792h12v12h-12z" fill="#e54cff"/><path d="M792 792h12v12h-12z" fill="#ea42ff"/><path d="M804 792h12v12h-12z" fill="#ef36ff"/><path d="M816 792h12v12h-12z" fill="#f425ff"/><path d="M828 792h12v12h-12z" fill="#fa00ff"/><path d="M840 792h12v12h-12z" fill="#ff00ff"/><path d="M852 792h12v12h-12z" fill="#ff00f9"/><path d="M864 792h12v12h-12z" fill="#ff00f4"/><path d="M876 792h12v12h-12z" fill="#ff00ef"/><path d="M888 792h12v12h-12z" fill="#ff00ea"/><path d="M900 792h12v12h-12z" fill="#ff00e5"/><path d="M912 792h12v12h-12z" fill="#ff00e1"/><path d="M492 804h12v12h-12z" fill="#0075ff"/><path d="M504 804h12v12h-12z" fill="#0073ff"/><path d="M516 804h12v12h-12z" fill="#0072ff"/><path d="M528 804h12v12h-12z" fill="#3a7aff"/><path d="M540 804h12v12h-12z" fill="#567dff"/><path d="M552 804h12v12h-12z" fill="#6a80ff"/><path d="M564 804h12v12h-12z" fill="#7982ff"/><path d="M576 804h12v12h-12z" fill="#8583ff"/><path d="M588 804h12v12h-12z" fill="#8d80ff"/><path d="M600 804h12v12h-12z" fill="#937dff"/><path d="M612 804h12v12h-12z" fill="#9a79ff"/><path d="M624 804h12v12h-12z" fill="#a076ff"/><path d="M636 804h12v12h-12z" fill="#a672ff"/><path d="M648 804h12v12h-12z" fill="#ac6eff"/><path d="M660 804h12v12h-12z" fill="#b16aff"/><path d="M672 804h12v12h-12z" fill="#b665ff"/><path d="M684 804h12v12h-12z" fill="#bc60ff"/><path d="M696 804h12v12h-12z" fill="#c15bff"/><path d="M708 804h12v12h-12z" fill="#c654ff"/><path d="M720 804h12v12h-12z" fill="#cb4dff"/><path d="M732 804h12v12h-12z" fill="#d045ff"/><path d="M744 804h12v12h-12z" fill="#d43bff"/><path d="M756 804h12v12h-12z" fill="#d92dff"/><path d="M768 804h12v12h-12z" fill="#de13ff"/><path d="M780 804h12v12h-12z" fill="#e300ff"/><path d="M792 804h12v12h-12z" fill="#e800ff"/><path d="M804 804h12v12h-12z" fill="#ee00ff"/><path d="M816 804h12v12h-12z" fill="#f400ff"/><path d="M828 804h12v12h-12z" fill="#f900ff"/><path d="M840 804h12v12h-12z" fill="#ff00ff"/><path d="M852 804h12v12h-12z" fill="#ff00fa"/><path d="M480 816h12v12h-12z" fill="#006bff"/><path d="M492 816h12v12h-12z" fill="#0069ff"/><path d="M504 816h12v12h-12z" fill="#0067ff"/><path d="M516 816h12v12h-12z" fill="#2b6dff"/><path d="M528 816h12v12h-12z" fill="#4e72ff"/><path d="M540 816h12v12h-12z" fill="#6374ff"/><path d="M552 816h12v12h-12z" fill="#7376ff"/><path d="M564 816h12v12h-12z" fill="#7d74ff"/><path d="M576 816h12v12h-12z" fill="#8571ff"/><path d="M588 816h12v12h-12z" fill="#8c6dff"/><path d="M600 816h12v12h-12z" fill="#9369ff"/><path d="M612 816h12v12h-12z" fill="#9965ff"/><path d="M624 816h12v12h-12z" fill="#9f60ff"/><path d="M636 816h12v12h-12z" fill="#a55bff"/><path d="M648 816h12v12h-12z" fill="#aa55ff"/><path d="M660 816h12v12h-12z" fill="#af4eff"/><path d="M672 816h12v12h-12z" fill="#b447ff"/><path d="M684 816h12v12h-12z" fill="#b93eff"/><path d="M696 816h12v12h-12z" fill="#be32ff"/><path d="M708 816h12v12h-12z" fill="#c321ff"/><path d="M720 816h12v12h-12z" fill="#c600ff"/><path d="M732 816h12v12h-12z" fill="#cc00ff"/><path d="M744 816h12v12h-12z" fill="#d200ff"/><path d="M756 816h12v12h-12z" fill="#d800ff"/><path d="M768 816h12v12h-12z" fill="#dd00ff"/><path d="M780 816h12v12h-12z" fill="#e300ff"/><path d="M792 816h12v12h-12z" fill="#e800ff"/><path d="M804 816h12v12h-12z" fill="#ee00ff"/><path d="M480 828h12v12h-12z" fill="#005eff"/><path d="M492 828h12v12h-12z" fill="#005cff"/><path d="M504 828h12v12h-12z" fill="#115cff"/><path d="M516 828h12v12h-12z" fill="#4565ff"/><path d="M528 828h12v12h-12z" fill="#5c68ff"/><path d="M540 828h12v12h-12z" fill="#6c68ff"/><path d="M552 828h12v12h-12z" fill="#7564ff"/><path d="M564 828h12v12h-12z" fill="#7d60ff"/><path d="M576 828h12v12h-12z" fill="#845bff"/><path d="M588 828h12v12h-12z" fill="#8b55ff"/><path d="M600 828h12v12h-12z" fill="#914fff"/><path d="M612 828h12v12h-12z" fill="#9749ff"/><path d="M624 828h12v12h-12z" fill="#9d41ff"/><path d="M636 828h12v12h-12z" fill="#a237ff"/><path d="M648 828h12v12h-12z" fill="#a729ff"/><path d="M660 828h12v12h-12z" fill="#aa0fff"/><path d="M672 828h12v12h-12z" fill="#af00ff"/><path d="M684 828h12v12h-12z" fill="#b500ff"/><path d="M696 828h12v12h-12z" fill="#bb00ff"/><path d="M708 828h12v12h-12z" fill="#c100ff"/><path d="M720 828h12v12h-12z" fill="#c700ff"/><path d="M732 828h12v12h-12z" fill="#cd00ff"/><path d="M744 828h12v12h-12z" fill="#d300ff"/><path d="M468 840h12v12h-12z" fill="#0052ff"/><path d="M480 840h12v12h-12z" fill="#004fff"/><path d="M492 840h12v12h-12z" fill="#004cff"/><path d="M504 840h12v12h-12z" fill="#3a56ff"/><path d="M516 840h12v12h-12z" fill="#5559ff"/><path d="M528 840h12v12h-12z" fill="#6256ff"/><path d="M540 840h12v12h-12z" fill="#6c50ff"/><path d="M552 840h12v12h-12z" fill="#744aff"/><path d="M564 840h12v12h-12z" fill="#7b43ff"/><path d="M576 840h12v12h-12z" fill="#823aff"/><path d="M588 840h12v12h-12z" fill="#882fff"/><path d="M600 840h12v12h-12z" fill="#8d1eff"/><path d="M612 840h12v12h-12z" fill="#9000ff"/><path d="M624 840h12v12h-12z" fill="#9700ff"/><path d="M636 840h12v12h-12z" fill="#9e00ff"/><path d="M648 840h12v12h-12z" fill="#a400ff"/><path d="M660 840h12v12h-12z" fill="#ab00ff"/><path d="M672 840h12v12h-12z" fill="#b100ff"/><path d="M684 840h12v12h-12z" fill="#b700ff"/><path d="M468 852h12v12h-12z" fill="#0041ff"/><path d="M480 852h12v12h-12z" fill="#003dff"/><path d="M492 852h12v12h-12z" fill="#2d43ff"/><path d="M504 852h12v12h-12z" fill="#4b45ff"/><path d="M516 852h12v12h-12z" fill="#573dff"/><path d="M528 852h12v12h-12z" fill="#6133ff"/><path d="M540 852h12v12h-12z" fill="#6927ff"/><path d="M552 852h12v12h-12z" fill="#6d0bff"/><path d="M564 852h12v12h-12z" fill="#7400ff"/><path d="M576 852h12v12h-12z" fill="#7c00ff"/><path d="M588 852h12v12h-12z" fill="#8400ff"/><path d="M600 852h12v12h-12z" fill="#8c00ff"/><path d="M612 852h12v12h-12z" fill="#9300ff"/><path d="M624 852h12v12h-12z" fill="#9a00ff"/><path d="M636 852h12v12h-12z" fill="#a000ff"/><path d="M468 864h12v12h-12z" fill="#0029ff"/><path d="M480 864h12v12h-12z" fill="#1927ff"/><path d="M492 864h12v12h-12z" fill="#3a1cff"/><path d="M504 864h12v12h-12z" fill="#4400ff"/><path d="M516 864h12v12h-12z" fill="#5200ff"/><path d="M528 864h12v12h-12z" fill="#5d00ff"/><path d="M540 864h12v12h-12z" fill="#6700ff"/><path d="M552 864h12v12h-12z" fill="#7000ff"/><path d="M564 864h12v12h-12z" fill="#7800ff"/><path d="M576 864h12v12h-12z" fill="#8000ff"/><path d="M468 876h12v12h-12z" fill="#0000ff"/><path d="M480 876h12v12h-12z" fill="#2b00ff"/><path d="M492 876h12v12h-12z" fill="#3f00ff"/><path d="M504 876h12v12h-12z" fill="#4d00ff"/><path d="M516 876h12v12h-12z" fill="#5900ff"/><path d="M528 876h12v12h-12z" fill="#6300ff"/></g></g><path d="M500.0 911.7 C496.7 910.9 487.4 909.9 480.0 906.7 C472.6 903.5 464.6 898.5 455.6 892.4 C446.6 886.3 433.1 875.6 426.0 870.0 C418.9 864.4 418.6 863.9 413.1 859.0 C407.6 854.1 399.3 846.8 392.8 840.6 C386.3 834.4 384.3 832.7 374.3 822.0 C364.3 811.3 342.3 787.3 332.6 776.3 C322.9 765.3 325.2 768.2 315.9 755.9 C306.6 743.6 287.2 717.0 277.0 702.6 C266.8 688.2 260.9 678.8 254.8 669.3 C248.7 659.8 246.5 657.3 240.2 645.8 C233.9 634.2 222.5 610.5 217.2 600.0 C211.9 589.5 212.6 592.7 208.6 583.0 C204.6 573.3 197.6 555.6 192.9 542.0 C188.2 528.4 183.6 515.2 180.3 501.5 C177.0 487.8 175.0 474.3 173.3 460.0 C171.6 445.7 170.8 428.9 170.2 415.6 C169.6 402.3 169.6 391.9 169.6 380.0 C169.6 368.1 169.7 353.3 170.4 344.4 C171.1 335.5 172.6 333.4 174.0 326.7 C175.4 320.0 176.1 313.7 178.9 304.4 C181.8 295.1 184.8 281.3 191.1 271.1 C197.4 260.9 208.8 250.2 216.7 243.3 C224.6 236.5 230.3 233.9 238.8 230.0 C247.2 226.1 256.5 222.9 267.5 220.0 C278.5 217.1 294.6 214.3 305.0 212.5 C315.4 210.7 319.2 209.5 330.0 208.9 C340.8 208.3 354.6 208.1 370.0 208.9 C385.4 209.7 403.3 210.7 422.5 213.8 C441.7 216.8 464.2 222.6 485.0 227.5 C505.8 232.4 530.4 238.5 547.5 243.2 C564.6 248.0 565.4 249.1 587.5 256.2 C609.6 263.4 645.4 274.3 680.0 286.2 C714.6 298.2 768.3 318.0 795.0 328.0 C821.7 338.0 832.5 343.2 840.0 346.2 L1012.5 415 L1225 500 L1320 537.5 L1700.6 690.25 L1120 798.3 Z" fill="none" stroke="#f2b400" stroke-width="2.2"/><path d="M715.0 332.6L649.2 483.3" stroke="#0a780a" stroke-width="3.2"/><path d="M649.2 483.3L526.4 764.7" stroke="#0e6a76" stroke-width="3.2"/><path d="M526.4 764.7L478.0 875.5" stroke="#00008c" stroke-width="3.2"/><path d="M715.0 332.6L944.0 415.0" stroke="#0a700a" stroke-width="3.2"/><path d="M944.0 415.0L1280.0 535.8" stroke="#7a6200" stroke-width="3.2"/><path d="M1280.0 535.8L1610.0 654.5" stroke="#8c0000" stroke-width="3.2"/><path d="M478.0 875.5L653.0 841.3" stroke="#00008c" stroke-width="3.2"/><path d="M653.0 841.3L1116.0 750.9" stroke="#7a0a80" stroke-width="3.2"/><path d="M1116.0 750.9L1610.0 654.5" stroke="#8c0010" stroke-width="3.2"/><path d="M776.7 363.3 L1556.0 636.3 L1556.0 640.9 L482.0 871.6 Z" fill="none" stroke="#ffffff" stroke-width="3.6"/><line x1="360.0" y1="207.5" x2="400.0" y2="173.8" stroke="#c4c4c4" stroke-width="1.3" /><line x1="680.0" y1="286.0" x2="720.0" y2="252.0" stroke="#c4c4c4" stroke-width="1.3" /><line x1="971.0" y1="397.5" x2="1012.5" y2="363.8" stroke="#c4c4c4" stroke-width="1.3" /><line x1="1178.8" y1="480.0" x2="1220.0" y2="446.3" stroke="#c4c4c4" stroke-width="1.3" /><line x1="1320.3" y1="537.0" x2="1361.0" y2="503.4" stroke="#c4c4c4" stroke-width="1.3" /><line x1="1454.7" y1="591.2" x2="1495.3" y2="556.6" stroke="#c4c4c4" stroke-width="1.3" /><line x1="1603.8" y1="645.6" x2="1640.6" y2="614.4" stroke="#c4c4c4" stroke-width="1.3" /><line x1="1662.5" y1="674.4" x2="1701.0" y2="641.2" stroke="#c4c4c4" stroke-width="1.3" /><line x1="1688.8" y1="683.8" x2="1728.8" y2="651.2" stroke="#c4c4c4" stroke-width="1.3" /><line x1="130.9" y1="429.1" x2="169.9" y2="421.2" stroke="#c4c4c4" stroke-width="1.3" /><line x1="293.0" y1="785.0" x2="330.3" y2="776.3" stroke="#c4c4c4" stroke-width="1.3" /><line x1="386.9" y1="879.6" x2="425.0" y2="872.0" stroke="#c4c4c4" stroke-width="1.3" /><line x1="417.4" y1="903.5" x2="455.6" y2="895.0" stroke="#c4c4c4" stroke-width="1.3" /><line x1="437.3" y1="913.3" x2="475.5" y2="905.6" stroke="#c4c4c4" stroke-width="1.3" /><g font-family="Liberation Serif" font-size="17" fill="#e6e6e6"><text x="401.0" y="182.5" textLength="85.0" lengthAdjust="spacingAndGlyphs">520 nm</text><text x="721.0" y="259.0" textLength="83.0" lengthAdjust="spacingAndGlyphs">540 nm</text><text x="1013.0" y="371.3" textLength="83.0" lengthAdjust="spacingAndGlyphs">560 nm</text><text x="1220.0" y="453.0" textLength="82.5" lengthAdjust="spacingAndGlyphs">580 nm</text><text x="1361.7" y="509.7" textLength="84.3" lengthAdjust="spacingAndGlyphs">600 nm</text><text x="1495.3" y="564.4" textLength="84.4" lengthAdjust="spacingAndGlyphs">620 nm</text><text x="1640.6" y="621.9" textLength="84.4" lengthAdjust="spacingAndGlyphs">640 nm</text><text x="1703.0" y="647.8" textLength="82.5" lengthAdjust="spacingAndGlyphs">660 nm</text><text x="1730.0" y="657.8" textLength="83.0" lengthAdjust="spacingAndGlyphs">680 nm</text><text x="60.0" y="444.8" textLength="85.0" lengthAdjust="spacingAndGlyphs">500 nm</text><text x="221.8" y="799.3" textLength="84.0" lengthAdjust="spacingAndGlyphs">480 nm</text><text x="316.7" y="895.0" textLength="83.3" lengthAdjust="spacingAndGlyphs">460 nm</text><text x="347.0" y="917.8" textLength="82.6" lengthAdjust="spacingAndGlyphs">440 nm</text><text x="367.0" y="928.5" textLength="84.0" lengthAdjust="spacingAndGlyphs">420 nm</text></g><g font-family="Liberation Serif" font-size="16" fill="#e0e0e0"><text x="5" y="237.8">0.8</text><text x="5" y="323.2">0.7</text><text x="5" y="408.6">0.6</text><text x="5" y="494.0">0.5</text><text x="5" y="579.4">0.4</text><text x="5" y="664.8">0.3</text><text x="5" y="750.2">0.2</text><text x="5" y="835.6">0.1</text><text x="377.0" y="964.5">0.1</text><text x="589.9" y="964.5">0.2</text><text x="802.7" y="964.5">0.3</text><text x="1015.5" y="964.5">0.4</text><text x="1228.4" y="964.5">0.5</text><text x="1441.2" y="964.5">0.6</text><text x="1654.0" y="964.5">0.7</text></g><text x="1711.5" y="894" font-family="Liberation Sans" font-weight="bold" font-size="20" fill="#3c4144" textLength="193.5" lengthAdjust="spacingAndGlyphs">hcfr.sourceforge.net</text><defs><filter id="fsh" x="-50%" y="-50%" width="200%" height="200%"><feGaussianBlur stdDeviation="1.8"/></filter><radialGradient id="gl" cx="0.4" cy="0.35" r="0.65"><stop offset="0" stop-color="#fff" stop-opacity="0.35"/><stop offset="0.6" stop-color="#fff" stop-opacity="0"/><stop offset="1" stop-color="#000" stop-opacity="0.35"/></radialGradient></defs><g stroke="#383838" stroke-width="1.1" stroke-dasharray="4 3.5" fill="none"><path d="M615 637.5H1553.7"/><path d="M485 868.3L1052 460.5"/><path d="M780.5 365.5 C781.5 370.7 783.8 379.3 786.7 396.7 C789.6 414.1 793.8 445.6 798.0 470.0 C802.2 494.4 807.6 519.5 812.0 543.0 C816.4 566.5 821.8 594.8 824.5 611.0 C827.2 627.2 827.2 632.5 828.5 640.0 C829.8 647.5 829.9 644.4 832.2 656.0 C834.5 667.6 839.9 695.4 842.4 709.6 C844.9 723.8 845.0 729.4 847.0 741.0 C849.0 752.6 852.8 770.0 854.4 779.0 C856.0 788.0 856.3 792.3 856.7 795.0"/></g><g stroke="#b4b4b4" stroke-width="1.2" stroke-dasharray="5 5" fill="none"><path d="M3 645.5H1917"/><path d="M826.5 115V969"/></g><path d="M690.6 718 C720 700 760 680 824.8 650.4 C870 632 920 614 960 604 C1030 588 1100 575 1162.5 570.2" stroke="#101010" stroke-width="2.4" fill="none"/><rect x="706.0" y="323.0" width="18" height="18" fill="#40e030"/><path d="M706.8 341.0V323.8H724.0" stroke="#1c1c70" stroke-width="1.6" fill="none"/><path d="M707.0 340.2H723.2V324.0" stroke="#e81030" stroke-width="1.6" fill="none"/><path d="M711.0 332.0h8M715.0 328.0v8" stroke="#101010" stroke-width="1.6"/><circle cx="782.5" cy="368.0" r="9.0" fill="#000" opacity="0.6" filter="url(#fsh)"/><circle cx="780.5" cy="365.5" r="8.0" fill="#16dc16" stroke="#2a2a2a" stroke-width="1.2"/><circle cx="780.5" cy="365.5" r="8.0" fill="url(#gl)"/><rect x="780.0" y="365.0" width="1.5" height="2.5" fill="#202020"/><rect x="735.3" y="396.7" width="18" height="18" fill="#40e030"/><path d="M736.1 414.7V397.5H753.3" stroke="#1c1c70" stroke-width="1.6" fill="none"/><path d="M736.3 413.9H752.5V397.7" stroke="#e81030" stroke-width="1.6" fill="none"/><circle cx="757.0" cy="410.8" r="9.0" fill="#000" opacity="0.6" filter="url(#fsh)"/><circle cx="755.0" cy="408.3" r="8.0" fill="#16dc16" stroke="#2a2a2a" stroke-width="1.2"/><circle cx="755.0" cy="408.3" r="8.0" fill="url(#gl)"/><rect x="754.5" y="407.8" width="1.5" height="2.5" fill="#202020"/><rect x="762.7" y="474.3" width="18" height="18" fill="#40e030"/><path d="M763.5 492.3V475.1H780.7" stroke="#1c1c70" stroke-width="1.6" fill="none"/><path d="M763.7 491.5H779.9V475.3" stroke="#e81030" stroke-width="1.6" fill="none"/><circle cx="767.0" cy="484.2" r="9.0" fill="#000" opacity="0.6" filter="url(#fsh)"/><circle cx="765.0" cy="481.7" r="8.0" fill="#16dc16" stroke="#2a2a2a" stroke-width="1.2"/><circle cx="765.0" cy="481.7" r="8.0" fill="url(#gl)"/><rect x="764.5" y="481.2" width="1.5" height="2.5" fill="#202020"/><rect x="792.7" y="555.3" width="18" height="18" fill="#40e030"/><path d="M793.5 573.3V556.1H810.7" stroke="#1c1c70" stroke-width="1.6" fill="none"/><path d="M793.7 572.5H809.9V556.3" stroke="#e81030" stroke-width="1.6" fill="none"/><circle cx="803.7" cy="567.5" r="9.0" fill="#000" opacity="0.6" filter="url(#fsh)"/><circle cx="801.7" cy="565.0" r="8.0" fill="#16dc16" stroke="#2a2a2a" stroke-width="1.2"/><circle cx="801.7" cy="565.0" r="8.0" fill="url(#gl)"/><rect x="801.2" y="564.5" width="1.5" height="2.5" fill="#202020"/><rect x="1082.7" y="457.7" width="18" height="18" fill="#f4dc20"/><path d="M1083.5 475.7V458.5H1100.7" stroke="#1c1c70" stroke-width="1.6" fill="none"/><path d="M1083.7 474.9H1099.9V458.7" stroke="#e81030" stroke-width="1.6" fill="none"/><path d="M1087.7 466.7h8M1091.7 462.7v8" stroke="#101010" stroke-width="1.6"/><circle cx="1054.0" cy="463.0" r="9.0" fill="#000" opacity="0.6" filter="url(#fsh)"/><circle cx="1052.0" cy="460.5" r="8.0" fill="#ecec98" stroke="#2a2a2a" stroke-width="1.2"/><circle cx="1052.0" cy="460.5" r="8.0" fill="url(#gl)"/><rect x="1051.5" y="460.0" width="1.5" height="2.5" fill="#202020"/><rect x="1022.7" y="501.0" width="18" height="18" fill="#f4dc20"/><path d="M1023.5 519.0V501.8H1040.7" stroke="#1c1c70" stroke-width="1.6" fill="none"/><path d="M1023.7 518.2H1039.9V502.0" stroke="#e81030" stroke-width="1.6" fill="none"/><circle cx="1028.7" cy="505.8" r="9.0" fill="#000" opacity="0.6" filter="url(#fsh)"/><circle cx="1026.7" cy="503.3" r="8.0" fill="#ecec98" stroke="#2a2a2a" stroke-width="1.2"/><circle cx="1026.7" cy="503.3" r="8.0" fill="url(#gl)"/><rect x="1026.2" y="502.8" width="1.5" height="2.5" fill="#202020"/><rect x="957.7" y="544.3" width="18" height="18" fill="#f4dc20"/><path d="M958.5 562.3V545.1H975.7" stroke="#1c1c70" stroke-width="1.6" fill="none"/><path d="M958.7 561.5H974.9V545.3" stroke="#e81030" stroke-width="1.6" fill="none"/><circle cx="967.0" cy="560.8" r="9.0" fill="#000" opacity="0.6" filter="url(#fsh)"/><circle cx="965.0" cy="558.3" r="8.0" fill="#ecec98" stroke="#2a2a2a" stroke-width="1.2"/><circle cx="965.0" cy="558.3" r="8.0" fill="url(#gl)"/><rect x="964.5" y="557.8" width="1.5" height="2.5" fill="#202020"/><rect x="889.3" y="591.0" width="18" height="18" fill="#f4dc20"/><path d="M890.1 609.0V591.8H907.3" stroke="#1c1c70" stroke-width="1.6" fill="none"/><path d="M890.3 608.2H906.5V592.0" stroke="#e81030" stroke-width="1.6" fill="none"/><circle cx="895.3" cy="602.5" r="9.0" fill="#000" opacity="0.6" filter="url(#fsh)"/><circle cx="893.3" cy="600.0" r="8.0" fill="#ecec98" stroke="#2a2a2a" stroke-width="1.2"/><circle cx="893.3" cy="600.0" r="8.0" fill="url(#gl)"/><rect x="892.8" y="599.5" width="1.5" height="2.5" fill="#202020"/><rect x="570.0" y="634.3" width="18" height="18" fill="#88f0f0"/><path d="M570.8 652.3V635.1H588.0" stroke="#1c1c70" stroke-width="1.6" fill="none"/><path d="M571.0 651.5H587.2V635.3" stroke="#e81030" stroke-width="1.6" fill="none"/><path d="M575.0 643.3h8M579.0 639.3v8" stroke="#101010" stroke-width="1.6"/><circle cx="617.0" cy="642.5" r="9.0" fill="#000" opacity="0.6" filter="url(#fsh)"/><circle cx="615.0" cy="640.0" r="8.0" fill="#88dede" stroke="#2a2a2a" stroke-width="1.2"/><circle cx="615.0" cy="640.0" r="8.0" fill="url(#gl)"/><rect x="614.5" y="639.5" width="1.5" height="2.5" fill="#202020"/><rect x="631.0" y="634.3" width="18" height="18" fill="#88f0f0"/><path d="M631.8 652.3V635.1H649.0" stroke="#1c1c70" stroke-width="1.6" fill="none"/><path d="M632.0 651.5H648.2V635.3" stroke="#e81030" stroke-width="1.6" fill="none"/><circle cx="642.0" cy="647.5" r="9.0" fill="#000" opacity="0.6" filter="url(#fsh)"/><circle cx="640.0" cy="645.0" r="8.0" fill="#88dede" stroke="#2a2a2a" stroke-width="1.2"/><circle cx="640.0" cy="645.0" r="8.0" fill="url(#gl)"/><rect x="639.5" y="644.5" width="1.5" height="2.5" fill="#202020"/><rect x="692.7" y="634.3" width="18" height="18" fill="#88f0f0"/><path d="M693.5 652.3V635.1H710.7" stroke="#1c1c70" stroke-width="1.6" fill="none"/><path d="M693.7 651.5H709.9V635.3" stroke="#e81030" stroke-width="1.6" fill="none"/><circle cx="703.7" cy="644.2" r="9.0" fill="#000" opacity="0.6" filter="url(#fsh)"/><circle cx="701.7" cy="641.7" r="8.0" fill="#88dede" stroke="#2a2a2a" stroke-width="1.2"/><circle cx="701.7" cy="641.7" r="8.0" fill="url(#gl)"/><rect x="701.2" y="641.2" width="1.5" height="2.5" fill="#202020"/><rect x="755.0" y="634.3" width="18" height="18" fill="#88f0f0"/><path d="M755.8 652.3V635.1H773.0" stroke="#1c1c70" stroke-width="1.6" fill="none"/><path d="M756.0 651.5H772.2V635.3" stroke="#e81030" stroke-width="1.6" fill="none"/><circle cx="761.0" cy="648.5" r="9.0" fill="#000" opacity="0.6" filter="url(#fsh)"/><circle cx="759.0" cy="646.0" r="8.0" fill="#88dede" stroke="#2a2a2a" stroke-width="1.2"/><circle cx="759.0" cy="646.0" r="8.0" fill="url(#gl)"/><rect x="758.5" y="645.5" width="1.5" height="2.5" fill="#202020"/><rect x="1601.2" y="645.4" width="18" height="18" fill="#ff1010"/><path d="M1602.0 663.4V646.2H1619.2" stroke="#1c1c70" stroke-width="1.6" fill="none"/><path d="M1602.2 662.6H1618.4V646.4" stroke="#e81030" stroke-width="1.6" fill="none"/><path d="M1606.2 654.4h8M1610.2 650.4v8" stroke="#ffffff" stroke-width="1.6"/><circle cx="1555.7" cy="641.5" r="9.0" fill="#000" opacity="0.6" filter="url(#fsh)"/><circle cx="1553.7" cy="639.0" r="8.0" fill="#e02020" stroke="#2a2a2a" stroke-width="1.2"/><circle cx="1553.7" cy="639.0" r="8.0" fill="url(#gl)"/><rect x="1419.1" y="646.0" width="15" height="15" fill="#fff4fb" stroke="#ff1010" stroke-width="3"/><path d="M1417.6 662.5V644.5H1435.6" stroke="#20206a" stroke-width="1.2" fill="none"/><circle cx="1424.2" cy="655.1" r="9.0" fill="#000" opacity="0.6" filter="url(#fsh)"/><circle cx="1422.2" cy="652.6" r="8.0" fill="#e02020" stroke="#2a2a2a" stroke-width="1.2"/><circle cx="1422.2" cy="652.6" r="8.0" fill="url(#gl)"/><rect x="1221.5" y="641.9" width="15" height="15" fill="#fff4fb" stroke="#ff1010" stroke-width="3"/><path d="M1220.0 658.4V640.4H1238.0" stroke="#20206a" stroke-width="1.2" fill="none"/><circle cx="1240.5" cy="655.0" r="9.0" fill="#000" opacity="0.6" filter="url(#fsh)"/><circle cx="1238.5" cy="652.5" r="8.0" fill="#e02020" stroke="#2a2a2a" stroke-width="1.2"/><circle cx="1238.5" cy="652.5" r="8.0" fill="url(#gl)"/><rect x="1025.8" y="639.8" width="15" height="15" fill="#fff4fb" stroke="#ff1010" stroke-width="3"/><path d="M1024.3 656.3V638.3H1042.3" stroke="#20206a" stroke-width="1.2" fill="none"/><circle cx="1021.8" cy="644.5" r="9.0" fill="#000" opacity="0.6" filter="url(#fsh)"/><circle cx="1019.8" cy="642.0" r="8.0" fill="#e02020" stroke="#2a2a2a" stroke-width="1.2"/><circle cx="1019.8" cy="642.0" r="8.0" fill="url(#gl)"/><rect x="866.0" y="789.3" width="18" height="18" fill="#e020e0"/><path d="M866.8 807.3V790.1H884.0" stroke="#1c1c70" stroke-width="1.6" fill="none"/><path d="M867.0 806.5H883.2V790.3" stroke="#e81030" stroke-width="1.6" fill="none"/><path d="M871.0 798.3h8M875.0 794.3v8" stroke="#101010" stroke-width="1.6"/><circle cx="858.7" cy="797.5" r="9.0" fill="#000" opacity="0.6" filter="url(#fsh)"/><circle cx="856.7" cy="795.0" r="8.0" fill="#e014e0" stroke="#2a2a2a" stroke-width="1.2"/><circle cx="856.7" cy="795.0" r="8.0" fill="url(#gl)"/><rect x="856.2" y="794.5" width="1.5" height="2.5" fill="#202020"/><rect x="854.3" y="752.0" width="18" height="18" fill="#e020e0"/><path d="M855.1 770.0V752.8H872.3" stroke="#1c1c70" stroke-width="1.6" fill="none"/><path d="M855.3 769.2H871.5V753.0" stroke="#e81030" stroke-width="1.6" fill="none"/><circle cx="865.3" cy="763.5" r="9.0" fill="#000" opacity="0.6" filter="url(#fsh)"/><circle cx="863.3" cy="761.0" r="8.0" fill="#e014e0" stroke="#2a2a2a" stroke-width="1.2"/><circle cx="863.3" cy="761.0" r="8.0" fill="url(#gl)"/><rect x="862.8" y="760.5" width="1.5" height="2.5" fill="#202020"/><rect x="843.7" y="714.3" width="18" height="18" fill="#e020e0"/><path d="M844.5 732.3V715.1H861.7" stroke="#1c1c70" stroke-width="1.6" fill="none"/><path d="M844.7 731.5H860.9V715.3" stroke="#e81030" stroke-width="1.6" fill="none"/><circle cx="854.7" cy="725.8" r="9.0" fill="#000" opacity="0.6" filter="url(#fsh)"/><circle cx="852.7" cy="723.3" r="8.0" fill="#e014e0" stroke="#2a2a2a" stroke-width="1.2"/><circle cx="852.7" cy="723.3" r="8.0" fill="url(#gl)"/><rect x="852.2" y="722.8" width="1.5" height="2.5" fill="#202020"/><rect x="834.2" y="679.2" width="15" height="15" fill="#fff4fb" stroke="#e020e0" stroke-width="3"/><path d="M832.7 695.7V677.7H850.7" stroke="#20206a" stroke-width="1.2" fill="none"/><circle cx="828.7" cy="693.2" r="9.0" fill="#000" opacity="0.6" filter="url(#fsh)"/><circle cx="826.7" cy="690.7" r="8.0" fill="#e014e0" stroke="#2a2a2a" stroke-width="1.2"/><circle cx="826.7" cy="690.7" r="8.0" fill="url(#gl)"/><rect x="826.2" y="690.2" width="1.5" height="2.5" fill="#202020"/><rect x="469.2" y="867.3" width="18" height="18" fill="#4040f0"/><path d="M470.0 885.3V868.1H487.2" stroke="#1c1c70" stroke-width="1.6" fill="none"/><path d="M470.2 884.5H486.4V868.3" stroke="#e81030" stroke-width="1.6" fill="none"/><path d="M474.2 876.3h8M478.2 872.3v8" stroke="#101010" stroke-width="1.6"/><circle cx="487.0" cy="870.8" r="9.0" fill="#000" opacity="0.6" filter="url(#fsh)"/><circle cx="485.0" cy="868.3" r="8.0" fill="#3040e8" stroke="#2a2a2a" stroke-width="1.2"/><circle cx="485.0" cy="868.3" r="8.0" fill="url(#gl)"/><rect x="551.0" y="811.7" width="18" height="18" fill="#4040f0"/><path d="M551.8 829.7V812.5H569.0" stroke="#1c1c70" stroke-width="1.6" fill="none"/><path d="M552.0 828.9H568.2V812.7" stroke="#e81030" stroke-width="1.6" fill="none"/><circle cx="557.0" cy="825.2" r="9.0" fill="#000" opacity="0.6" filter="url(#fsh)"/><circle cx="555.0" cy="822.7" r="8.0" fill="#3040e8" stroke="#2a2a2a" stroke-width="1.2"/><circle cx="555.0" cy="822.7" r="8.0" fill="url(#gl)"/><rect x="642.7" y="751.0" width="18" height="18" fill="#4040f0"/><path d="M643.5 769.0V751.8H660.7" stroke="#1c1c70" stroke-width="1.6" fill="none"/><path d="M643.7 768.2H659.9V752.0" stroke="#e81030" stroke-width="1.6" fill="none"/><circle cx="660.3" cy="763.5" r="9.0" fill="#000" opacity="0.6" filter="url(#fsh)"/><circle cx="658.3" cy="761.0" r="8.0" fill="#3040e8" stroke="#2a2a2a" stroke-width="1.2"/><circle cx="658.3" cy="761.0" r="8.0" fill="url(#gl)"/><rect x="729.2" y="699.2" width="15" height="15" fill="#fff4fb" stroke="#4040f0" stroke-width="3"/><path d="M727.7 715.7V697.7H745.7" stroke="#20206a" stroke-width="1.2" fill="none"/><circle cx="744.3" cy="697.5" r="9.0" fill="#000" opacity="0.6" filter="url(#fsh)"/><circle cx="742.3" cy="695.0" r="8.0" fill="#3040e8" stroke="#2a2a2a" stroke-width="1.2"/><circle cx="742.3" cy="695.0" r="8.0" fill="url(#gl)"/><circle cx="850.3" cy="609.2" r="9.0" fill="#000" opacity="0.6" filter="url(#fsh)"/><circle cx="848.3" cy="606.7" r="8.0" fill="#f4f4f4" stroke="#2a2a2a" stroke-width="1.2"/><circle cx="848.3" cy="606.7" r="8.0" fill="url(#gl)"/><circle cx="838.7" cy="633.5" r="9.0" fill="#000" opacity="0.6" filter="url(#fsh)"/><circle cx="836.7" cy="631.0" r="8.0" fill="#f4f4f4" stroke="#2a2a2a" stroke-width="1.2"/><circle cx="836.7" cy="631.0" r="8.0" fill="url(#gl)"/><circle cx="705.3" cy="699.8" r="9.0" fill="#000" opacity="0.6" filter="url(#fsh)"/><circle cx="703.3" cy="697.3" r="8.0" fill="#f4f4f4" stroke="#2a2a2a" stroke-width="1.2"/><circle cx="703.3" cy="697.3" r="8.0" fill="url(#gl)"/><circle cx="824.5" cy="652.5" r="9.0" fill="#000" opacity="0.6" filter="url(#fsh)"/><circle cx="822.5" cy="650.0" r="8.0" fill="#d0d0d0" stroke="#2a2a2a" stroke-width="1.2"/><circle cx="822.5" cy="650.0" r="8.0" fill="url(#gl)"/><circle cx="827.7" cy="648.5" r="9.0" fill="#000" opacity="0.6" filter="url(#fsh)"/><circle cx="825.7" cy="646.0" r="8.0" fill="#eeee00" stroke="#2a2a2a" stroke-width="1.2"/><circle cx="825.7" cy="646.0" r="8.0" fill="url(#gl)"/></svg><div class="abs" style="left:0;top:969px;width:1920px;height:4px;background:#fff"></div><div class="abs" style="left:0;top:973px;width:1920px;height:24px;background:#f0f0f0;border-top:1.5px solid #3a3a3a"></div><svg class="abs" style="left:0;top:973px" width="700" height="25"><rect x="1" y="1.5" width="66" height="22" fill="#f0f0f0" stroke="#505050" stroke-width="1"/><path d="M21.5 2v21M43.5 2v21" stroke="#808080"/><path d="M22.5 2v21M44.5 2v21" stroke="#fff"/><path d="M2 23.5h65M67.5 2v22" stroke="#303030" stroke-width="1.5"/><path d="M7 8L16 17M16 8L7 17" stroke="#000" stroke-width="1.8"/><path d="M35 8v9l-5-4.5z" fill="#000"/><path d="M54 8v9l5-4.5z" fill="#000"/><path d="M68.0 1.5L78.0 23.5H149.0L159.0 1.5" fill="#f0f0f0" stroke="#404040" stroke-width="1.4"/><path d="M150.0 1.5L160.0 23.5H232.0L242.0 1.5" fill="#f0f0f0" stroke="#404040" stroke-width="1.4"/><path d="M233.0 1.5L243.0 23.5H298.0L308.0 1.5" fill="#f0f0f0" stroke="#404040" stroke-width="1.4"/><path d="M299.0 1.5L309.0 23.5H390.0L400.0 1.5" fill="#f0f0f0" stroke="#404040" stroke-width="1.4"/><path d="M391.0 1.5L401.0 23.5H521.0L531.0 1.5" fill="#f0f0f0" stroke="#404040" stroke-width="1.4"/><path d="M522 1.5L532 23.5H620L631 1.5" fill="#fff" stroke="#303030" stroke-width="1.4"/><path d="M522 1.5H631" stroke="#fff" stroke-width="2"/><g font-family="Liberation Sans" font-size="12.5" fill="#1a1a40"><text x="87.9" y="16.5" textLength="51.7" lengthAdjust="spacingAndGlyphs">Measures</text><text x="167.0" y="16.5" textLength="56.5" lengthAdjust="spacingAndGlyphs">Luminance</text><text x="249.7" y="16.5" textLength="40.9" lengthAdjust="spacingAndGlyphs">Gamma</text><text x="319.0" y="16.5" textLength="62.0" lengthAdjust="spacingAndGlyphs">RGB Levels</text><text x="414.9" y="16.5" textLength="91.8" lengthAdjust="spacingAndGlyphs">Color temperature</text><text x="536.6" y="16.5" font-weight="bold" font-size="13" textLength="79.4" lengthAdjust="spacingAndGlyphs" fill="#000">CIE Diagram</text></g></svg><svg class="abs" style="left:1700px;top:973px" width="220" height="24"><path d="M9 4h17v9l-3 6h-5l-3-3-3 3z" fill="#7a7a10" stroke="#202000" stroke-width="1.2"/><path d="M12 7h10v6h-10z" fill="#e01010"/><path d="M13 9h7" stroke="#fff" stroke-width="1.4"/><path d="M20 15h6l-3 3z" fill="#f0f000"/><rect x="128.5" y="3.5" width="14" height="14" fill="#fff" stroke="#8a8a8a"/><text x="150.6" y="16.2" font-family="Liberation Sans" font-size="14.5" fill="#000" textLength="62.4" lengthAdjust="spacingAndGlyphs">Reference</text></svg><div class="abs" style="left:0;top:997px;width:1920px;height:23px;background:#e4ebf5"></div><svg class="abs" style="left:0;top:997px" width="100" height="23" viewBox="0 997 100 23"><text x="3.4" y="1015.6" font-family="Liberation Sans" font-size="15.6" fill="#000" textLength="39.4" lengthAdjust="spacingAndGlyphs">Ready</text></svg><div class="abs" style="left:1697.5px;top:998px;width:93.5px;height:23px;border:1.3px solid #a8bcd4;border-bottom:none;background:#ecf1f8;font-size:14.3px;color:#101040;padding:2px 0 0 3px"></div><div class="abs" style="left:1795.0px;top:998px;width:35.0px;height:23px;border:1.3px solid #a8bcd4;border-bottom:none;background:#ecf1f8;font-size:14.3px;color:#101040;padding:2px 0 0 3px"></div><div class="abs" style="left:1833.7px;top:998px;width:41.3px;height:23px;border:1.3px solid #a8bcd4;border-bottom:none;background:#ecf1f8;font-size:14.3px;color:#101040;padding:2px 0 0 3px">NUM</div><div class="abs" style="left:1878.7px;top:998px;width:46.3px;height:23px;border:1.3px solid #a8bcd4;border-bottom:none;background:#ecf1f8;font-size:14.3px;color:#101040;padding:2px 0 0 3px"></div><div class="abs" style="left:0;top:1020px;width:1920px;height:60px;background:linear-gradient(90deg,#d8dae2 0%,#dddfe6 40%,#e6dde2 75%,#eed8db 100%)"></div><div class="abs" style="left:348px;top:1026px;width:48px;height:48px;background:rgba(255,255,255,.6);border-radius:4px;border:1px solid rgba(255,255,255,.5)"></div><svg class="abs" style="left:0;top:1020px" width="1920" height="60" viewBox="0 1020 1920 60"><defs><linearGradient id="tbw" x1="0" y1="0" x2="1" y2="1"><stop offset="0" stop-color="#40c8f8"/><stop offset="1" stop-color="#0a6ad8"/></linearGradient><linearGradient id="thc" x1="0" y1="0" x2="0" y2="1"><stop offset="0" stop-color="#000"/><stop offset=".55" stop-color="#303030"/><stop offset="1" stop-color="#fff"/></linearGradient></defs><g fill="url(#tbw)"><rect x="27" y="1035" width="14" height="14" rx="1"/><rect x="42.5" y="1035" width="14" height="14" rx="1"/><rect x="27" y="1050.5" width="14" height="14" rx="1"/><rect x="42.5" y="1050.5" width="14" height="14" rx="1"/></g><rect x="82" y="1035" width="30" height="30" rx="3" fill="#0e6fd8"/><circle cx="97" cy="1050" r="11" fill="#fff"/><path d="M88 1050l5-4v2.5h8V1046l5 4-5 4v-2.5h-8v2.5z" fill="#0e6fd8"/><rect x="137.5" y="1036" width="29" height="21" rx="2" fill="#e8ecf4" stroke="#9098a8"/><rect x="140" y="1038" width="24" height="15" fill="#3a6ad8"/><text x="152" y="1050" text-anchor="middle" font-family="Liberation Sans" font-weight="bold" font-size="10" fill="#fff">SC</text><path d="M147 1058h10l2 5h-14z" fill="#c8ccd4"/><circle cx="207" cy="1050" r="14.5" fill="#3a82d0"/><text x="207" y="1056" text-anchor="middle" font-family="Liberation Sans" font-size="17" fill="#dce8f8">qb</text><path d="M248 1036h25l3 3v25h-28z" fill="#2a4ab0"/><rect x="256" y="1036" width="13" height="8" fill="#d8d8e0"/><rect x="262" y="1037" width="3" height="6" fill="#2a4ab0"/><rect x="251" y="1048" width="22" height="14" fill="#f8e8e8"/><path d="M253 1052h18M253 1055h18M253 1058h10" stroke="#e05050" stroke-width="1"/><rect x="318" y="1035" width="13" height="13" fill="#e81010"/><rect x="309" y="1042" width="14" height="13" fill="#18c018"/><rect x="302" y="1050" width="12" height="14" fill="#1a7ae0"/><path d="M323 1052h8M323 1056h8M314 1060h17" stroke="#a0a0a0"/><rect x="357" y="1035" width="30" height="30" fill="url(#thc)"/><rect x="361" y="1048" width="6" height="15" fill="#c00000"/><rect x="369" y="1044" width="6" height="19" fill="#00b000"/><rect x="377" y="1050" width="6" height="13" fill="#1010c0"/><rect x="362" y="1070" width="20" height="3" rx="1.5" fill="#1a6ad0"/><circle cx="427" cy="1050" r="13" fill="#f4f4f4"/><path d="M420 1044q3 6 0 12M424 1042q4 8 0 16M428 1041q5 9 0 18M432 1042q5 8 0 16" stroke="#e01818" stroke-width="2" fill="none"/><circle cx="482" cy="1050" r="14.5" fill="#0a1a2a" stroke="#2aa0d0" stroke-width="1.5"/><path d="M476 1043v14l7-7zM482 1043v14l8-7z" fill="#2a9ad8"/><rect x="522" y="1035" width="30" height="30" fill="#2a2a90"/><path d="M522 1065v-8l4-3 4 4 4-6 4 4 4-5 4 5 6-2v11z" fill="#30c030"/><path d="M524 1060l5-3 4 2 5-4 6 3 6-2" stroke="#f0e020" stroke-width="1.4" fill="none"/><text x="537" y="1046" text-anchor="middle" font-family="Liberation Sans" font-weight="bold" font-size="11" fill="#e8e8ff">REW</text><rect x="580" y="1035" width="23" height="30" rx="2" fill="#5a6a80"/><rect x="582" y="1037" width="19" height="6" fill="#8ad0f8"/><g fill="#e8eef8"><rect x="583" y="1046" width="4" height="4"/><rect x="589" y="1046" width="4" height="4"/><rect x="595" y="1046" width="4" height="4"/><rect x="583" y="1052" width="4" height="4"/><rect x="589" y="1052" width="4" height="4"/><rect x="583" y="1058" width="4" height="4"/><rect x="589" y="1058" width="4" height="4"/></g><rect x="595" y="1052" width="4" height="10" fill="#2a80d8"/><path d="M632 1038h11l3 3h16v23h-30z" fill="#e8b020"/><path d="M632 1045h30v19h-30z" fill="#f8cc40"/><rect x="640" y="1058" width="14" height="3" fill="#2a6ad0"/><rect x="687" y="1035" width="30" height="30" rx="4" fill="#c81a1a"/><path d="M694 1058c6-4 10-12 8-17-2 3 0 11 8 16-6-1-11 0-16 3" stroke="#fff" stroke-width="1.6" fill="none"/><rect x="746" y="1036" width="26" height="28" rx="2" fill="#1a8a4a"/><path d="M746 1045h26M746 1054h26M759 1036v28" stroke="#0a6a30"/><rect x="742" y="1042" width="15" height="15" rx="1.5" fill="#0e6a38"/><text x="749.5" y="1054" text-anchor="middle" font-family="Liberation Sans" font-weight="bold" font-size="12" fill="#fff">X</text><rect x="801" y="1036" width="26" height="28" rx="2" fill="#2a6ad8"/><path d="M801 1045h26M801 1054h26" stroke="#1a50b0"/><rect x="797" y="1042" width="15" height="15" rx="1.5" fill="#1a4ab0"/><text x="804.5" y="1054" text-anchor="middle" font-family="Liberation Sans" font-weight="bold" font-size="12" fill="#fff">W</text><path d="M867 1036c9 0 14 5 14 13s-5 13-14 13l-1 5-4-5c-6-1-9-6-9-13 0-8 5-13 14-13z" fill="#7a50d8" stroke="#fff" stroke-width="1.5"/><path d="M862 1043c1 5 4 9 9 11l2-2-3-2-1 1c-2-1-3-3-4-5l1-1-2-3z" fill="#fff"/><rect x="862" y="1071" width="8" height="3" rx="1.5" fill="#808080"/><circle cx="929" cy="1042" r="5" fill="#7a80d8"/><rect x="921" y="1046" width="16" height="16" rx="6" fill="#7a80d8"/><rect x="908" y="1042" width="17" height="17" rx="2" fill="#4a58b8"/><text x="916.5" y="1055" text-anchor="middle" font-family="Liberation Sans" font-weight="bold" font-size="12" fill="#fff">T</text><circle cx="935" cy="1040" r="5.5" fill="#40b040" stroke="#fff" stroke-width="1"/><rect x="917" y="1071" width="8" height="3" rx="1.5" fill="#808080"/><rect x="969" y="1036" width="24" height="26" rx="2" fill="#1a7ad8"/><path d="M969 1050l12 7 12-7v12h-24z" fill="#30a0f0"/><rect x="962" y="1042" width="15" height="15" rx="1.5" fill="#0a5ab0"/><text x="969.5" y="1054" text-anchor="middle" font-family="Liberation Sans" font-weight="bold" font-size="12" fill="#fff">O</text><rect x="973" y="1071" width="8" height="3" rx="1.5" fill="#808080"/><circle cx="1032" cy="1050" r="14.5" fill="#e03a30"/><path d="M1032 1050L1019.4 1057.3A14.5 14.5 0 0 0 1039.3 1062.6Z" fill="#30a048"/><path d="M1032 1050L1046.5 1050A14.5 14.5 0 0 1 1039.3 1062.6L1019.4 1057.3Z" fill="#30a048"/><path d="M1032 1050L1044.6 1042.7A14.5 14.5 0 0 1 1039.3 1062.6Z" fill="#f8c820"/><path d="M1032 1050L1019.4 1057.3A14.5 14.5 0 0 1 1019.4 1042.7Z" fill="#30a048"/><circle cx="1032" cy="1050" r="6.5" fill="#fff"/><circle cx="1032" cy="1050" r="5" fill="#2a78e0"/><rect x="1028" y="1071" width="8" height="3" rx="1.5" fill="#808080"/><circle cx="1087" cy="1050" r="11" fill="none" stroke="#6a6e78" stroke-width="7" stroke-dasharray="5 3.6"/><circle cx="1087" cy="1050" r="9.5" fill="#6a6e78"/><circle cx="1087" cy="1050" r="5.5" fill="#1a5ad0" stroke="#fff" stroke-width="1.5"/><rect x="1127" y="1036" width="30" height="27" rx="2" fill="#4ab0e8"/><rect x="1130" y="1039" width="24" height="20" fill="#d8f0fc"/><circle cx="1137" cy="1048" r="5" fill="#f09020"/><path d="M1146 1043h6M1146 1048h6M1146 1053h6" stroke="#2a80d0" stroke-width="2"/><path d="M1450 1054l7-7 7 7" stroke="#222" stroke-width="1.6" fill="none"/><rect x="1482" y="1042" width="15" height="15" rx="1.5" fill="#1a7ad8"/><rect x="1478" y="1045" width="10" height="10" rx="1" fill="#0a5ab0"/><text x="1483" y="1053.5" text-anchor="middle" font-family="Liberation Sans" font-weight="bold" font-size="8.5" fill="#fff">O</text><circle cx="1523" cy="1043" r="3.5" fill="#7a80d8"/><rect x="1516" y="1046" width="12" height="12" rx="4" fill="#7a80d8"/><rect x="1507" y="1043" width="12" height="12" rx="1.5" fill="#4a58b8"/><text x="1513" y="1052.5" text-anchor="middle" font-family="Liberation Sans" font-weight="bold" font-size="9" fill="#fff">T</text><circle cx="1523" cy="1055" r="4.5" fill="#40b040" stroke="#fff" stroke-width="1"/><path d="M1547 1040c6 0 10 4 10 9s-4 9-10 9l-1 4-3-4c-4-1-7-4-7-9 0-5 4-9 11-9z" fill="#7a50d8" stroke="#fff" stroke-width="1"/><path d="M1577 1039l9 3v7c0 6-4 10-9 12-5-2-9-6-9-12v-7z" fill="#1a8ad8"/><path d="M1581 1049l6 10h-12z" fill="#f8c800"/><path d="M1581 1053v3" stroke="#000" stroke-width="1.2"/><rect x="1599.5" y="1039" width="15" height="23" rx="7.5" fill="#1a7ae0"/><path d="M1603 1045l8 8-4 4v-16l4 4-8 8" stroke="#fff" stroke-width="1.3" fill="none"/><text x="1649.5" y="1056" text-anchor="middle" font-family="Liberation Sans" font-size="14.5" fill="#111">HUN</text><g fill="none" stroke="#111" stroke-width="1.5"><path d="M1688 1046q9-8 18 0"/><path d="M1691 1049.5q6-5 12 0"/><path d="M1694 1053q3-2.5 6 0"/></g><circle cx="1697" cy="1056" r="1.5" fill="#111"/><path d="M1718 1046h4l5-4v16l-5-4h-4z" fill="none" stroke="#111" stroke-width="1.4"/><path d="M1730 1046q2 4 0 8M1733 1043q4 7 0 14" stroke="#111" stroke-width="1.3" fill="none"/><rect x="1747.5" y="1044.5" width="18" height="11" rx="2" fill="none" stroke="#111" stroke-width="1.4"/><rect x="1750" y="1047" width="13" height="6" fill="#111"/><rect x="1766" y="1048" width="2" height="4" fill="#111"/><text x="1831.7" y="1044.6" font-family="Liberation Sans" font-size="14.5" fill="#111" textLength="33.6" lengthAdjust="spacingAndGlyphs">12:58</text><text x="1787.2" y="1064.5" font-family="Liberation Sans" font-size="14.5" fill="#111" textLength="78.1" lengthAdjust="spacingAndGlyphs">2022. 02. 11.</text><circle cx="1885" cy="1050" r="10" fill="#1a6ad0"/><text x="1885" y="1055" text-anchor="middle" font-family="Liberation Sans" font-size="13" fill="#fff">3</text></svg></body></html>
